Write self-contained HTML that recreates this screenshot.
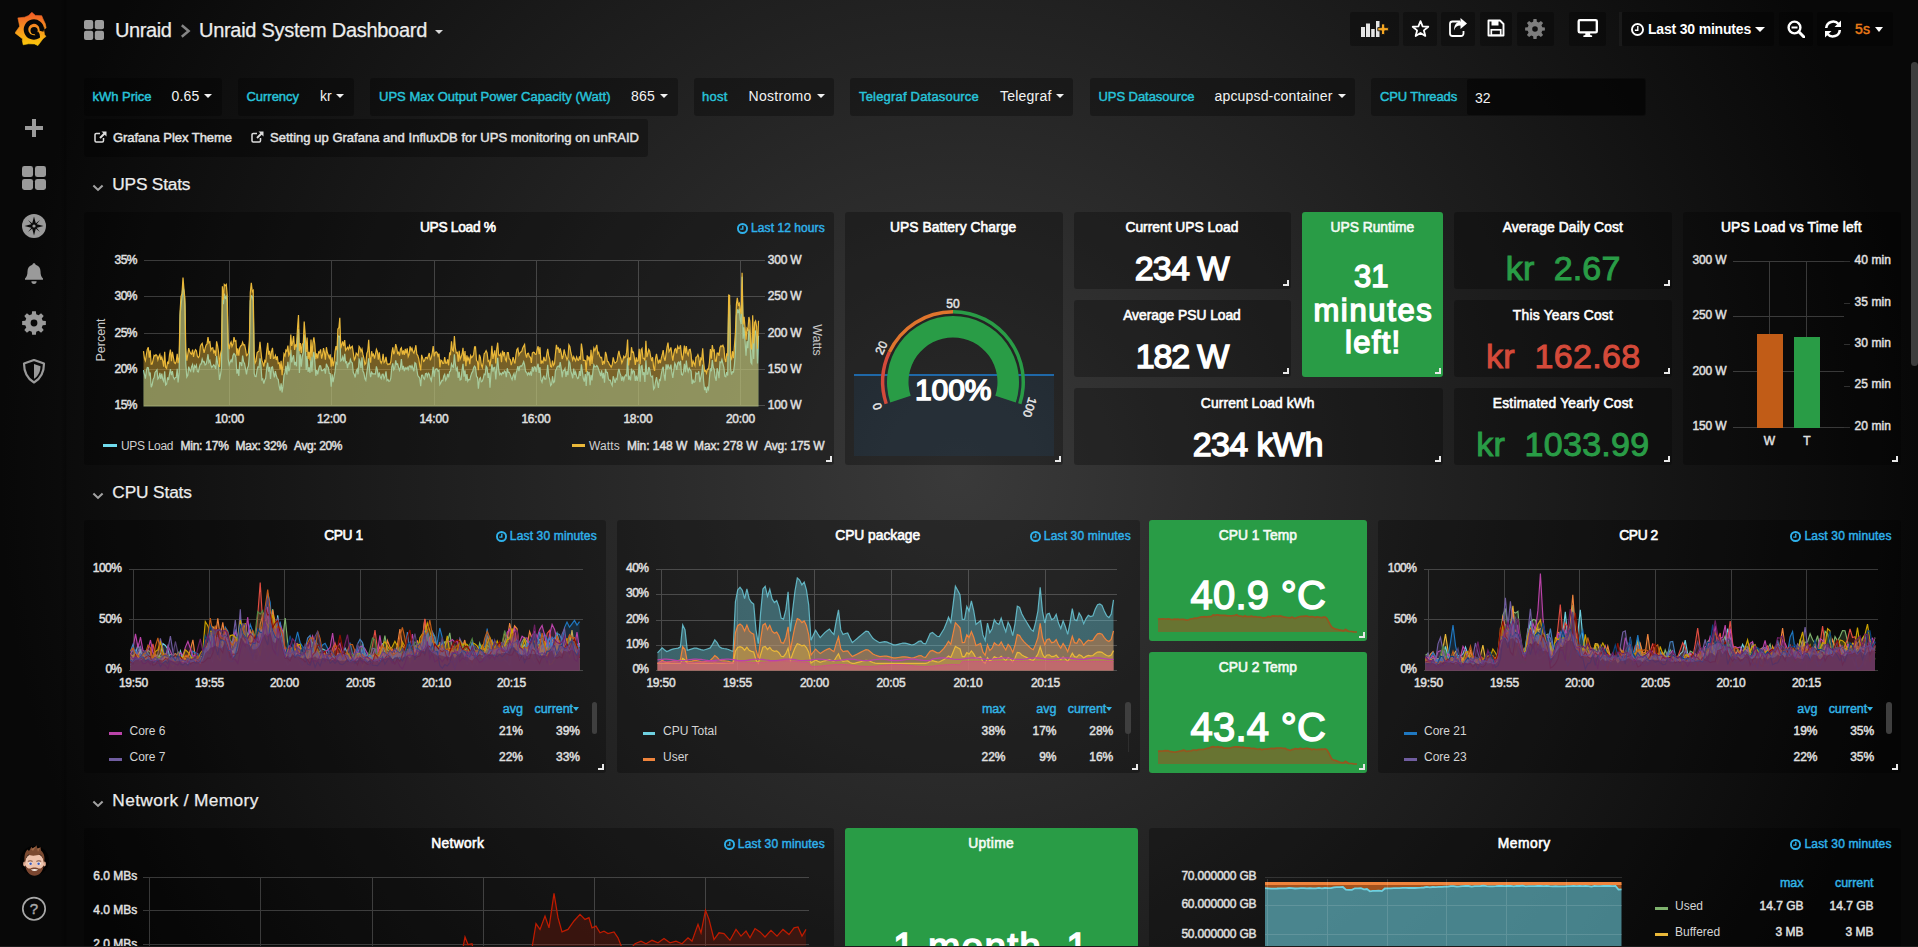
<!DOCTYPE html>
<html lang="en"><head><meta charset="utf-8"><title>Unraid System Dashboard - Grafana</title>
<style>
*{box-sizing:border-box;margin:0;padding:0}
html,body{width:1918px;height:947px;overflow:hidden;background:#000;font-family:"Liberation Sans",Arial,sans-serif;color:#fff}
#root{position:relative;width:1918px;height:947px;overflow:hidden;background:radial-gradient(circle 959px at 959px 473.5px,#3a3a3a 0%,#080808 100%)}
#bg{position:absolute;left:60px;top:0;width:7px;height:947px;background:linear-gradient(90deg,rgba(0,0,0,.0),rgba(0,0,0,.28) 85%,rgba(0,0,0,0))}
.b{position:absolute}
.p{position:absolute;background:rgba(0,0,0,.28);border-radius:3px}
.g{position:absolute;background:#299c46;border-radius:3px}
.t{position:absolute;white-space:nowrap;line-height:1.117}
.m{-webkit-text-stroke:.45px currentColor}
.m2{-webkit-text-stroke:.6px currentColor}
.bd{font-weight:700}
#ov{position:absolute;left:0;top:0;pointer-events:none}
.rz{position:absolute;width:6px;height:6px;border-right:2px solid #e8e8e8;border-bottom:2px solid #e8e8e8}

#bl{position:absolute;left:0;top:946px;width:1918px;height:1px;background:#1b1b1b}
.s1{-webkit-text-stroke:1px currentColor}
.s2{-webkit-text-stroke:1.45px currentColor}
.s9{-webkit-text-stroke:.9px currentColor}
.m0{-webkit-text-stroke:.25px currentColor}

</style></head>
<body>
<div id="root">
<div id="bg"></div>
<svg class="b" style="left:15px;top:12px" width="34" height="35" viewBox="0 0 34 35"><defs><linearGradient id="lg" x1="0" y1="1" x2="0" y2="0"><stop offset="0" stop-color="#fbca0a"/><stop offset=".5" stop-color="#f7931e"/><stop offset="1" stop-color="#f05a28"/></linearGradient></defs>
<path fill="url(#lg)" stroke="url(#lg)" stroke-width=".6" stroke-linejoin="round" d="M16.8 0.3 L20.4 3.4 L26.7 3.7 L28.0 6.9 L30.3 11.8 L31.1 16 L28.6 17.2 L29.5 22.4 L30.9 24.5 L28.0 26.7 L22.9 33.6 L19.4 31.9 L13.5 31.8 L8.2 32.8 L7.3 28.5 L7.7 27.0 L0 20.9 L4.7 14.3 L2.9 5.9 L9.7 5.2 L13.8 3.4Z"/>
<path d="M28.99 17.69 L26.79 17.09 A7.9 7.9 0 1 0 22.85 24.34 Q23.2 23 21.4 20.8" fill="none" stroke="#070707" stroke-width="4.5" stroke-linecap="butt"/>
<circle cx="19.1" cy="18.6" r="3.6" fill="#070707"/></svg>
<svg class="b" style="left:24px;top:118px" width="20" height="20" viewBox="0 0 20 20"><path d="M8 1h4v7h7v4h-7v7H8v-7H1V8h7z" fill="#9a9a9a"/></svg>
<svg class="b" style="left:22px;top:166px" width="24" height="24" viewBox="0 0 24 24"><rect x="0" y="0" width="11.040000000000001" height="11.040000000000001" rx="2.4000000000000004" fill="#9a9a9a"/><rect x="0" y="12.959999999999999" width="11.040000000000001" height="11.040000000000001" rx="2.4000000000000004" fill="#9a9a9a"/><rect x="12.959999999999999" y="0" width="11.040000000000001" height="11.040000000000001" rx="2.4000000000000004" fill="#9a9a9a"/><rect x="12.959999999999999" y="12.959999999999999" width="11.040000000000001" height="11.040000000000001" rx="2.4000000000000004" fill="#9a9a9a"/></svg>
<svg class="b" style="left:22px;top:214px" width="24" height="24" viewBox="0 0 24 24"><circle cx="12" cy="12" r="12" fill="#9a9a9a"/><path d="M12 2.5 L14 10 L21.5 12 L14 14 L12 21.5 L10 14 L2.5 12 L10 10Z" fill="#0a0a0a"/><path d="M6 6 L11 10 L10 11Z M18 6 L14 11 L13 10Z M18 18 L13 14 L14 13Z M6 18 L10 13 L11 14Z" fill="#0a0a0a"/><circle cx="12" cy="12" r="1.6" fill="#9a9a9a"/></svg>
<svg class="b" style="left:24px;top:262px" width="20" height="24" viewBox="0 0 20 24"><path d="M10 1.2c.9 0 1.6.7 1.6 1.5 3 .8 4.9 3.3 4.9 6.6 0 3.700 .9 5.800 2.500 7.200v1.300H1v-1.300c1.600-1.400 2.500-3.500 2.500-7.200 0-3.300 1.900-5.800 4.900-6.600 0-.8.700-1.500 1.600-1.500z" fill="#9a9a9a"/><path d="M7.400 19.300h5.200a2.600 2.600 0 0 1-5.200 0z" fill="#9a9a9a"/></svg>
<svg class="b" style="left:22px;top:311px" width="24" height="24" viewBox="0 0 24 24"><path fill-rule="evenodd" d="M23.85 10.12 L23.85 13.88 L20.72 14.24 L19.75 16.58 L21.71 19.05 L19.05 21.71 L16.58 19.75 L14.24 20.72 L13.88 23.85 L10.12 23.85 L9.76 20.72 L7.42 19.75 L4.95 21.71 L2.29 19.05 L4.25 16.58 L3.28 14.24 L0.15 13.88 L0.15 10.12 L3.28 9.76 L4.25 7.42 L2.29 4.95 L4.95 2.29 L7.42 4.25 L9.76 3.28 L10.12 0.15 L13.88 0.15 L14.24 3.28 L16.58 4.25 L19.05 2.29 L21.71 4.95 L19.75 7.42 L20.72 9.76Z M15.40 12.00 A3.4 3.4 0 1 0 8.60 12.00 A3.4 3.4 0 1 0 15.40 12.00Z" fill="#9a9a9a"/></svg>
<svg class="b" style="left:22px;top:359px" width="24" height="25" viewBox="0 0 24 25"><path d="M12 1 L22 4.500 C22 13 19 19.500 12 23.500 C5 19.500 2 13 2 4.500Z" fill="none" stroke="#9a9a9a" stroke-width="2.2" stroke-linejoin="round"/><path d="M12 5 L18.500 7.300 C18.300 13 16.400 17 12 19.800Z" fill="#9a9a9a"/></svg>
<svg class="b" style="left:19.5px;top:845px" width="29" height="31" viewBox="0 0 29 31"><circle cx="14.5" cy="15.5" r="14.6" fill="#020202"/>
<ellipse cx="4.6" cy="19" rx="1.5" ry="2.4" fill="#e2ad94"/><ellipse cx="24.4" cy="19" rx="1.5" ry="2.4" fill="#e2ad94"/>
<ellipse cx="14.5" cy="17.5" rx="9.6" ry="9.2" fill="#eec3ad"/>
<path d="M5 19 C3.6 11 5 7 7.5 4.5 L9 6 L11.5 1.8 L13 4.5 L16.5 0.3 L17.5 4 L20.5 2 L21 5.5 C24 8 25.3 12 24 19 C23.5 14 22 10.5 20 9.5 C16 11 10 11 8.5 9.5 C6.5 11 5.5 14 5 19Z" fill="#7b4a31"/>
<path d="M11 4 L16 1.5 L13 6Z M17 3.5 L20 3 L18 7Z" fill="#a06a48"/>
<path d="M5.2 20 C6 27 10 30.8 14.5 30.8 C19 30.8 23 27 23.800 20 C22.500 23 20 24 18.500 23.500 C16.500 22.300 12.500 22.300 10.500 23.500 C9 24 6.500 23 5.200 20Z" fill="#7a4630"/>
<path d="M10.800 24.600 Q14.500 23.600 18.200 24.600 Q14.500 27.600 10.800 24.600Z" fill="#f4ece6"/>
<ellipse cx="10.400" cy="18.600" rx="2" ry="1.500" fill="#f2f2f2"/><ellipse cx="18.800" cy="18.600" rx="2" ry="1.500" fill="#f2f2f2"/>
<circle cx="10.600" cy="18.700" r="1.250" fill="#3d57b8"/><circle cx="18.600" cy="18.700" r="1.250" fill="#3d57b8"/>
<path d="M7.800 16.300 Q10.300 15.200 12.600 16.300 M16.400 16.300 Q18.800 15.200 21.200 16.300" stroke="#6a4030" stroke-width=".9" fill="none"/></svg>
<svg class="b" style="left:21px;top:896px" width="26" height="26" viewBox="0 0 26 26"><circle cx="13" cy="12.800" r="11.200" fill="none" stroke="#a8a8a8" stroke-width="1.700"/></svg>
<div class="t m" style="left:34px;top:900px;font-size:15px;line-height:18px;color:#a8a8a8;transform:translateX(-50%);">?</div>
<svg class="b" style="left:84px;top:20px" width="20" height="20" viewBox="0 0 20 20"><rect x="0" y="0" width="9.200000000000001" height="9.200000000000001" rx="2.0" fill="#9d9d9d"/><rect x="0" y="10.799999999999999" width="9.200000000000001" height="9.200000000000001" rx="2.0" fill="#9d9d9d"/><rect x="10.799999999999999" y="0" width="9.200000000000001" height="9.200000000000001" rx="2.0" fill="#9d9d9d"/><rect x="10.799999999999999" y="10.799999999999999" width="9.200000000000001" height="9.200000000000001" rx="2.0" fill="#9d9d9d"/></svg>
<div class="t m0" style="left:115px;top:18px;font-size:20px;line-height:24px;color:#ececec;letter-spacing:-0.387px;">Unraid</div>
<svg class="b" style="left:180px;top:23.5px" width="11" height="14" viewBox="0 0 11 14"><path d="M1.800 1.300 L8.600 7 L1.800 12.700" fill="none" stroke="#858585" stroke-width="2.500"/></svg>
<div class="t m0" style="left:199px;top:18px;font-size:20px;line-height:24px;color:#ececec;letter-spacing:-0.285px;">Unraid System Dashboard</div>
<div class="b" style="left:435px;top:30px;border-left:4px solid transparent;border-right:4px solid transparent;border-top:4px solid #d8d8d8"></div>
<div class="b" style="left:1350px;top:12px;width:49px;height:34px;background:rgba(0,0,0,.3);border-radius:2px"></div>
<div class="b" style="left:1403px;top:12px;width:34px;height:34px;background:rgba(0,0,0,.3);border-radius:2px"></div>
<div class="b" style="left:1441px;top:12px;width:34px;height:34px;background:rgba(0,0,0,.3);border-radius:2px"></div>
<div class="b" style="left:1480px;top:12px;width:32px;height:34px;background:rgba(0,0,0,.3);border-radius:2px"></div>
<div class="b" style="left:1517px;top:12px;width:37px;height:34px;background:rgba(0,0,0,.3);border-radius:2px"></div>
<div class="b" style="left:1569px;top:12px;width:37px;height:34px;background:rgba(0,0,0,.3);border-radius:2px"></div>
<div class="b" style="left:1622px;top:12px;width:152px;height:34px;background:rgba(0,0,0,.3);border-radius:2px"></div>
<div class="b" style="left:1779px;top:12px;width:34px;height:34px;background:rgba(0,0,0,.3);border-radius:2px"></div>
<div class="b" style="left:1817px;top:12px;width:32px;height:34px;background:rgba(0,0,0,.3);border-radius:2px"></div>
<div class="b" style="left:1849px;top:12px;width:44px;height:34px;background:rgba(0,0,0,.3);border-radius:2px"></div>
<div class="b" style="left:1619px;top:12px;width:3px;height:34px;background:rgba(255,255,255,.04);"></div>
<svg class="b" style="left:1361px;top:21px" width="28" height="16" viewBox="0 0 28 16"><path d="M0 6h4v10H0z M5 2.500h4v13.500H5z M10.200 8h3.500v8h-3.500z M15 0h3.500v16H15z" fill="#e4e4e4"/><path d="M16.800 6.600h3.700v-3.700h3.200v3.700h3.700v3.200h-3.700v3.700h-3.200v-3.700h-3.700z" fill="#f5a623" stroke="#141414" stroke-width=".9"/></svg>
<svg class="b" style="left:1411px;top:19px" width="19" height="19" viewBox="0 0 19 19"><path d="M9.50 2.10 L11.62 7.39 L17.30 7.77 L12.92 11.41 L14.32 16.93 L9.50 13.90 L4.68 16.93 L6.08 11.41 L1.70 7.77 L7.38 7.39Z" fill="none" stroke="#fff" stroke-width="1.800" stroke-linejoin="round"/></svg>
<svg class="b" style="left:1448px;top:18px" width="20" height="20" viewBox="0 0 20 20"><path d="M12 3.500H4.500A2.500 2.500 0 0 0 2 6v9.500A2.500 2.500 0 0 0 4.500 18H13a2.500 2.500 0 0 0 2.500-2.500V13" fill="none" stroke="#fff" stroke-width="1.800"/><path d="M12.500 0 L19 5.500 L12.500 11 V7.500 C9 7.500 7 9 6 12.500 C6 7 8.500 3.800 12.500 3.500Z" fill="#fff"/></svg>
<svg class="b" style="left:1487px;top:19px" width="18" height="18" viewBox="0 0 18 18"><path d="M1.500 1.500h11.500l3.500 3.500v11.500h-15z" fill="none" stroke="#fff" stroke-width="1.900" stroke-linejoin="round"/><rect x="4.500" y="1.500" width="7" height="5" fill="#fff"/><rect x="4.300" y="10.800" width="9.400" height="5.500" fill="none" stroke="#fff" stroke-width="1.700"/></svg>
<svg class="b" style="left:1525px;top:19px" width="20" height="20" viewBox="0 0 20 20"><path fill-rule="evenodd" d="M19.88 8.44 L19.88 11.56 L17.26 11.87 L16.46 13.82 L18.09 15.88 L15.88 18.09 L13.82 16.46 L11.87 17.26 L11.56 19.88 L8.44 19.88 L8.13 17.26 L6.18 16.46 L4.12 18.09 L1.91 15.88 L3.54 13.82 L2.74 11.87 L0.12 11.56 L0.12 8.44 L2.74 8.13 L3.54 6.18 L1.91 4.12 L4.12 1.91 L6.18 3.54 L8.13 2.74 L8.44 0.12 L11.56 0.12 L11.87 2.74 L13.82 3.54 L15.88 1.91 L18.09 4.12 L16.46 6.18 L17.26 8.13Z M12.80 10.00 A2.8 2.8 0 1 0 7.20 10.00 A2.8 2.8 0 1 0 12.80 10.00Z" fill="#7d7d7d"/></svg>
<svg class="b" style="left:1577px;top:18.5px" width="21.5" height="18.5" viewBox="0 0 21 19"><rect x="1.200" y="1.200" width="18.600" height="12.600" rx="1.200" fill="none" stroke="#fff" stroke-width="2.400"/><path d="M6 18.500h9v-1.500l-2-.5v-2.500H8v2.500l-2 .5z" fill="#fff"/></svg>
<svg class="b" style="left:1631px;top:22.5px" width="13" height="13" viewBox="0 0 13 13"><circle cx="6.5" cy="6.5" r="5.55" fill="none" stroke="#fff" stroke-width="1.9"/><path d="M6.8 3.12V7.280000000000001H3.9" fill="none" stroke="#fff" stroke-width="1.37"/></svg>
<div class="t bd" style="left:1648px;top:21px;font-size:14px;line-height:17px;color:#fff;letter-spacing:-0.189px;">Last 30 minutes</div>
<div class="b" style="left:1754.5px;top:26.5px;border-left:5.0px solid transparent;border-right:5.0px solid transparent;border-top:5.5px solid #fff"></div>
<svg class="b" style="left:1787px;top:20px" width="18" height="18" viewBox="0 0 18 18"><circle cx="7.500" cy="7.500" r="5.900" fill="none" stroke="#fff" stroke-width="2.400"/><path d="M11.800 11.800 L17 17" stroke="#fff" stroke-width="3" stroke-linecap="round"/><path d="M4.500 7.500h6" stroke="#fff" stroke-width="2"/></svg>
<svg class="b" style="left:1824px;top:20px" width="18" height="18" viewBox="0 0 18 18"><path d="M2.200 8 A7 7 0 0 1 14.500 4" fill="none" stroke="#fff" stroke-width="2.600"/><path d="M17 0.500 V7 H10.500Z" fill="#fff"/><path d="M15.800 10 A7 7 0 0 1 3.500 14" fill="none" stroke="#fff" stroke-width="2.600"/><path d="M1 17.500 V11 H7.500Z" fill="#fff"/></svg>
<div class="t m" style="left:1855px;top:21px;font-size:14px;line-height:17px;color:#eb7b18;letter-spacing:0.102px;">5s</div>
<div class="b" style="left:1875px;top:26.5px;border-left:4.75px solid transparent;border-right:4.75px solid transparent;border-top:5.25px solid #fff"></div>
<div class="b" style="left:1911px;top:62px;width:7px;height:304px;background:#3d3d3d;border-radius:4px"></div>
<div class="b" style="left:84px;top:78px;width:138px;height:38px;background:rgba(0,0,0,.3);border-radius:3px"></div>
<div class="t m" style="left:92.5px;top:89px;font-size:13px;line-height:16px;color:#28c3d9;letter-spacing:-0.026px;">kWh Price</div>
<div class="t " style="left:171.5px;top:88px;font-size:14px;line-height:17px;color:#f2f2f2;letter-spacing:0.188px;">0.65</div>
<div class="b" style="left:203.5px;top:93.6px;border-left:4.25px solid transparent;border-right:4.25px solid transparent;border-top:4.75px solid #f2f2f2"></div>
<div class="b" style="left:238px;top:78px;width:116px;height:38px;background:rgba(0,0,0,.3);border-radius:3px"></div>
<div class="t m" style="left:246.5px;top:89px;font-size:13px;line-height:16px;color:#28c3d9;letter-spacing:-0.031px;">Currency</div>
<div class="t " style="left:320px;top:88px;font-size:14px;line-height:17px;color:#f2f2f2;letter-spacing:-0.086px;">kr</div>
<div class="b" style="left:336px;top:93.6px;border-left:4.25px solid transparent;border-right:4.25px solid transparent;border-top:4.75px solid #f2f2f2"></div>
<div class="b" style="left:370px;top:78px;width:308px;height:38px;background:rgba(0,0,0,.3);border-radius:3px"></div>
<div class="t m" style="left:379px;top:89px;font-size:13px;line-height:16px;color:#28c3d9;letter-spacing:0.022px;">UPS Max Output Power Capacity (Watt)</div>
<div class="t " style="left:631px;top:88px;font-size:14px;line-height:17px;color:#f2f2f2;letter-spacing:0.214px;">865</div>
<div class="b" style="left:660px;top:93.6px;border-left:4.25px solid transparent;border-right:4.25px solid transparent;border-top:4.75px solid #f2f2f2"></div>
<div class="b" style="left:694px;top:78px;width:140px;height:38px;background:rgba(0,0,0,.3);border-radius:3px"></div>
<div class="t m" style="left:702px;top:89px;font-size:13px;line-height:16px;color:#28c3d9;letter-spacing:0.230px;">host</div>
<div class="t " style="left:748.5px;top:88px;font-size:14px;line-height:17px;color:#f2f2f2;letter-spacing:0.289px;">Nostromo</div>
<div class="b" style="left:817px;top:93.6px;border-left:4.25px solid transparent;border-right:4.25px solid transparent;border-top:4.75px solid #f2f2f2"></div>
<div class="b" style="left:850px;top:78px;width:223px;height:38px;background:rgba(0,0,0,.3);border-radius:3px"></div>
<div class="t m" style="left:859px;top:89px;font-size:13px;line-height:16px;color:#28c3d9;letter-spacing:0.192px;">Telegraf Datasource</div>
<div class="t " style="left:1000px;top:88px;font-size:14px;line-height:17px;color:#f2f2f2;letter-spacing:0.211px;">Telegraf</div>
<div class="b" style="left:1056px;top:93.6px;border-left:4.25px solid transparent;border-right:4.25px solid transparent;border-top:4.75px solid #f2f2f2"></div>
<div class="b" style="left:1090px;top:78px;width:265px;height:38px;background:rgba(0,0,0,.3);border-radius:3px"></div>
<div class="t m" style="left:1098.5px;top:89px;font-size:13px;line-height:16px;color:#28c3d9;letter-spacing:-0.059px;">UPS Datasource</div>
<div class="t " style="left:1214.5px;top:88px;font-size:14px;line-height:17px;color:#f2f2f2;letter-spacing:0.165px;">apcupsd-container</div>
<div class="b" style="left:1337.5px;top:93.6px;border-left:4.25px solid transparent;border-right:4.25px solid transparent;border-top:4.75px solid #f2f2f2"></div>
<div class="b" style="left:1371px;top:78px;width:275px;height:38px;background:rgba(0,0,0,.3);border-radius:3px"></div>
<div class="b" style="left:1467px;top:79px;width:178px;height:36px;background:rgba(0,0,0,.45);border-radius:2px"></div>
<div class="t m" style="left:1380px;top:89px;font-size:13px;line-height:16px;color:#28c3d9;letter-spacing:-0.138px;">CPU Threads</div>
<div class="t " style="left:1475px;top:90px;font-size:14px;line-height:17px;color:#f2f2f2;">32</div>
<div class="b" style="left:84px;top:119px;width:564px;height:38px;background:rgba(0,0,0,.3);border-radius:3px"></div>
<svg class="b" style="left:94px;top:131px" width="13" height="12" viewBox="0 0 13 12"><path d="M9.500 7V9.800a1.200 1.200 0 0 1-1.200 1.200H2.200A1.200 1.200 0 0 1 1 9.800V3.700a1.200 1.200 0 0 1 1.200-1.200H6" fill="none" stroke="#ddd" stroke-width="1.500"/><path d="M7.500 0.500H12.500V5.500L10.700 3.700L6.700 7.700L5.300 6.300L9.300 2.300Z" fill="#ddd"/></svg>
<div class="t m" style="left:113px;top:130px;font-size:13px;line-height:16px;color:#e3e3e3;letter-spacing:-0.040px;">Grafana Plex Theme</div>
<svg class="b" style="left:251px;top:131px" width="13" height="12" viewBox="0 0 13 12"><path d="M9.500 7V9.800a1.200 1.200 0 0 1-1.200 1.200H2.200A1.200 1.200 0 0 1 1 9.800V3.700a1.200 1.200 0 0 1 1.200-1.200H6" fill="none" stroke="#ddd" stroke-width="1.500"/><path d="M7.500 0.500H12.500V5.500L10.700 3.700L6.700 7.700L5.300 6.300L9.300 2.300Z" fill="#ddd"/></svg>
<div class="t m" style="left:270px;top:130px;font-size:13px;line-height:16px;color:#e3e3e3;letter-spacing:0.020px;">Setting up Grafana and InfluxDB for UPS monitoring on unRAID</div>
<svg class="b" style="left:92px;top:184px" width="12" height="9" viewBox="0 0 12 9"><path d="M1.400 1.600 L6 5.900 L10.600 1.600" fill="none" stroke="#a2a2a2" stroke-width="2.100"/></svg>
<div class="t m0" style="left:112.3px;top:174px;font-size:17.3px;line-height:21px;color:#ececec;letter-spacing:-0.191px;">UPS Stats</div>
<svg class="b" style="left:92px;top:492px" width="12" height="9" viewBox="0 0 12 9"><path d="M1.400 1.600 L6 5.900 L10.600 1.600" fill="none" stroke="#a2a2a2" stroke-width="2.100"/></svg>
<div class="t m0" style="left:112.3px;top:482px;font-size:17.3px;line-height:21px;color:#ececec;letter-spacing:-0.130px;">CPU Stats</div>
<svg class="b" style="left:92px;top:800px" width="12" height="9" viewBox="0 0 12 9"><path d="M1.400 1.600 L6 5.900 L10.600 1.600" fill="none" stroke="#a2a2a2" stroke-width="2.100"/></svg>
<div class="t m0" style="left:112.3px;top:790px;font-size:17.3px;line-height:21px;color:#ececec;letter-spacing:0.394px;">Network / Memory</div>
<div class="p" style="left:84px;top:212px;width:750px;height:253px"></div>
<div class="t m2" style="left:457.85px;top:219px;font-size:13.8px;line-height:17px;color:#fff;transform:translateX(-50%);letter-spacing:-0.310px;">UPS Load %</div>
<div class="t m" style="left:824.78px;top:221px;font-size:12px;line-height:15px;color:#2fb1ea;transform:translateX(-100%);letter-spacing:0.075px;">Last 12 hours</div>
<svg class="b" style="left:736.5px;top:222.5px" width="11" height="11" viewBox="0 0 11 11"><circle cx="5.5" cy="5.5" r="4.55" fill="none" stroke="#2fb1ea" stroke-width="1.9"/><path d="M5.8 2.6399999999999997V6.16H3.3" fill="none" stroke="#2fb1ea" stroke-width="1.37"/></svg>
<div class="p" style="left:845px;top:212px;width:218px;height:253px"></div>
<div class="t m2" style="left:953.13px;top:219px;font-size:13.8px;line-height:17px;color:#fff;transform:translateX(-50%);letter-spacing:0.061px;">UPS Battery Charge</div>
<div class="p" style="left:1074px;top:212px;width:217px;height:77px"></div>
<div class="t m2" style="left:1181.91px;top:219px;font-size:13.8px;line-height:17px;color:#fff;transform:translateX(-50%);letter-spacing:0.010px;">Current UPS Load</div>
<div class="p" style="left:1074px;top:300px;width:217px;height:77px"></div>
<div class="t m2" style="left:1181.99px;top:307px;font-size:13.8px;line-height:17px;color:#fff;transform:translateX(-50%);letter-spacing:-0.017px;">Average PSU Load</div>
<div class="g" style="left:1302px;top:212px;width:141px;height:165px"></div>
<div class="t m2" style="left:1372.31px;top:219px;font-size:13.8px;line-height:17px;color:#f4fbf5;transform:translateX(-50%);letter-spacing:0.011px;">UPS Runtime</div>
<div class="p" style="left:1074px;top:388px;width:369px;height:77px"></div>
<div class="t m2" style="left:1257.76px;top:395px;font-size:13.8px;line-height:17px;color:#fff;transform:translateX(-50%);letter-spacing:0.114px;">Current Load kWh</div>
<div class="p" style="left:1454px;top:212px;width:218px;height:77px"></div>
<div class="t m2" style="left:1562.87px;top:219px;font-size:13.8px;line-height:17px;color:#fff;transform:translateX(-50%);letter-spacing:0.136px;">Average Daily Cost</div>
<div class="p" style="left:1454px;top:300px;width:218px;height:77px"></div>
<div class="t m2" style="left:1562.92px;top:307px;font-size:13.8px;line-height:17px;color:#fff;transform:translateX(-50%);letter-spacing:0.237px;">This Years Cost</div>
<div class="p" style="left:1454px;top:388px;width:218px;height:77px"></div>
<div class="t m2" style="left:1562.82px;top:395px;font-size:13.8px;line-height:17px;color:#fff;transform:translateX(-50%);letter-spacing:0.244px;">Estimated Yearly Cost</div>
<div class="p" style="left:1683px;top:212px;width:217.70000000000005px;height:253px"></div>
<div class="t m2" style="left:1791.41px;top:219px;font-size:13.8px;line-height:17px;color:#fff;transform:translateX(-50%);letter-spacing:0.214px;">UPS Load vs Time left</div>
<div class="t m" style="left:136.92px;top:253px;font-size:12px;line-height:15px;color:#e0e0e0;transform:translateX(-100%);letter-spacing:-0.577px;">35%</div>
<div class="t m" style="left:136.92px;top:289px;font-size:12px;line-height:15px;color:#e0e0e0;transform:translateX(-100%);letter-spacing:-0.577px;">30%</div>
<div class="t m" style="left:136.92px;top:326px;font-size:12px;line-height:15px;color:#e0e0e0;transform:translateX(-100%);letter-spacing:-0.577px;">25%</div>
<div class="t m" style="left:136.92px;top:362px;font-size:12px;line-height:15px;color:#e0e0e0;transform:translateX(-100%);letter-spacing:-0.577px;">20%</div>
<div class="t m" style="left:136.92px;top:398px;font-size:12px;line-height:15px;color:#e0e0e0;transform:translateX(-100%);letter-spacing:-0.577px;">15%</div>
<div class="t m" style="left:767.7px;top:253px;font-size:12px;line-height:15px;color:#e0e0e0;letter-spacing:-0.197px;">300 W</div>
<div class="t m" style="left:767.7px;top:289px;font-size:12px;line-height:15px;color:#e0e0e0;letter-spacing:-0.197px;">250 W</div>
<div class="t m" style="left:767.7px;top:326px;font-size:12px;line-height:15px;color:#e0e0e0;letter-spacing:-0.197px;">200 W</div>
<div class="t m" style="left:767.7px;top:362px;font-size:12px;line-height:15px;color:#e0e0e0;letter-spacing:-0.197px;">150 W</div>
<div class="t m" style="left:767.7px;top:398px;font-size:12px;line-height:15px;color:#e0e0e0;letter-spacing:-0.197px;">100 W</div>
<div class="t m" style="left:229.4px;top:412px;font-size:12px;line-height:15px;color:#e0e0e0;transform:translateX(-50%);letter-spacing:-0.206px;">10:00</div>
<div class="t m" style="left:331.4px;top:412px;font-size:12px;line-height:15px;color:#e0e0e0;transform:translateX(-50%);letter-spacing:-0.206px;">12:00</div>
<div class="t m" style="left:433.9px;top:412px;font-size:12px;line-height:15px;color:#e0e0e0;transform:translateX(-50%);letter-spacing:-0.206px;">14:00</div>
<div class="t m" style="left:535.9px;top:412px;font-size:12px;line-height:15px;color:#e0e0e0;transform:translateX(-50%);letter-spacing:-0.206px;">16:00</div>
<div class="t m" style="left:637.9px;top:412px;font-size:12px;line-height:15px;color:#e0e0e0;transform:translateX(-50%);letter-spacing:-0.206px;">18:00</div>
<div class="t m" style="left:740.4px;top:412px;font-size:12px;line-height:15px;color:#e0e0e0;transform:translateX(-50%);letter-spacing:-0.206px;">20:00</div>
<div class="t " style="left:102px;top:340px;font-size:12.5px;color:#c8c8c8;transform:translate(-50%,-50%) rotate(-90deg)">Percent</div>
<div class="t " style="left:816px;top:340px;font-size:12.5px;color:#c8c8c8;transform:translate(-50%,-50%) rotate(90deg)">Watts</div>
<div class="b" style="left:103px;top:444px;width:14px;height:3px;background:#70dbed;"></div>
<div class="t " style="left:121px;top:439px;font-size:12px;line-height:15px;color:#d0d0d0;letter-spacing:-0.325px;">UPS Load</div>
<div class="t m" style="left:180.5px;top:439px;font-size:12px;line-height:15px;color:#e0e0e0;letter-spacing:-0.241px;">Min: 17%</div>
<div class="t m" style="left:235.5px;top:439px;font-size:12px;line-height:15px;color:#e0e0e0;letter-spacing:-0.257px;">Max: 32%</div>
<div class="t m" style="left:294px;top:439px;font-size:12px;line-height:15px;color:#e0e0e0;letter-spacing:-0.395px;">Avg: 20%</div>
<div class="b" style="left:572px;top:444px;width:13px;height:3px;background:#eab839;"></div>
<div class="t " style="left:589px;top:439px;font-size:12px;line-height:15px;color:#d0d0d0;letter-spacing:0.153px;">Watts</div>
<div class="t m" style="left:627px;top:439px;font-size:12px;line-height:15px;color:#e0e0e0;letter-spacing:-0.049px;">Min: 148 W</div>
<div class="t m" style="left:694px;top:439px;font-size:12px;line-height:15px;color:#e0e0e0;letter-spacing:-0.063px;">Max: 278 W</div>
<div class="t m" style="left:824.34px;top:439px;font-size:12px;line-height:15px;color:#e0e0e0;transform:translateX(-100%);letter-spacing:-0.161px;">Avg: 175 W</div>
<div class="b" style="left:854px;top:374px;width:200px;height:82px;background:rgba(31,120,193,.10);"></div>
<div class="b" style="left:854px;top:374px;width:200px;height:1.5px;background:#1f68a8;"></div>
<div class="t s2" style="left:953.15px;top:372px;font-size:30px;line-height:36px;color:#fff;transform:translateX(-50%);letter-spacing:-0.109px;">100%</div>
<div class="t m" style="left:877.9px;top:406.4px;font-size:12px;color:#e6e6e6;transform:translate(-50%,-50%) rotate(252.0deg)">0</div>
<div class="t m" style="left:881.5px;top:348.4px;font-size:12px;color:#e6e6e6;transform:translate(-50%,-50%) rotate(295.2deg)">20</div>
<div class="t m" style="left:953.0px;top:305.0px;font-size:12px;color:#e6e6e6;transform:translate(-50%,-50%) rotate(360.0deg)">50</div>
<div class="t m" style="left:1028.6px;top:406.6px;font-size:12px;color:#e6e6e6;transform:translate(-50%,-50%) rotate(468.0deg)">100</div>
<div class="t s2" style="left:1181.75px;top:248px;font-size:34px;line-height:41px;color:#fff;transform:translateX(-50%);letter-spacing:-0.893px;">234 W</div>
<div class="t s2" style="left:1182.02px;top:336px;font-size:34px;line-height:41px;color:#fff;transform:translateX(-50%);letter-spacing:-1.153px;">182 W</div>
<div class="t s2" style="left:1257.82px;top:424px;font-size:34px;line-height:41px;color:#fff;transform:translateX(-50%);letter-spacing:-0.555px;">234 kWh</div>
<div class="t s2" style="left:1371.33px;top:258px;font-size:31px;line-height:38px;color:#fff;transform:translateX(-50%);letter-spacing:0.058px;">31</div>
<div class="t s2" style="left:1373.42px;top:292px;font-size:31px;line-height:38px;color:#fff;transform:translateX(-50%);letter-spacing:1.636px;">minutes</div>
<div class="t s2" style="left:1373.26px;top:324px;font-size:31px;line-height:38px;color:#fff;transform:translateX(-50%);letter-spacing:1.326px;">left!</div>
<div class="t s1" style="left:1563.18px;top:248px;font-size:34px;line-height:41px;color:#299c46;transform:translateX(-50%);letter-spacing:0.151px;">kr&nbsp;&nbsp;2.67</div>
<div class="t s1" style="left:1563.27px;top:336px;font-size:34px;line-height:41px;color:#d44a3a;transform:translateX(-50%);letter-spacing:0.338px;">kr&nbsp;&nbsp;162.68</div>
<div class="t s1" style="left:1562.84px;top:424px;font-size:34px;line-height:41px;color:#299c46;transform:translateX(-50%);letter-spacing:0.289px;">kr&nbsp;&nbsp;1033.99</div>
<div class="t m" style="left:1726.3px;top:253px;font-size:12px;line-height:15px;color:#e0e0e0;transform:translateX(-100%);letter-spacing:-0.197px;">300 W</div>
<div class="t m" style="left:1726.3px;top:308px;font-size:12px;line-height:15px;color:#e0e0e0;transform:translateX(-100%);letter-spacing:-0.197px;">250 W</div>
<div class="t m" style="left:1726.3px;top:364px;font-size:12px;line-height:15px;color:#e0e0e0;transform:translateX(-100%);letter-spacing:-0.197px;">200 W</div>
<div class="t m" style="left:1726.3px;top:419px;font-size:12px;line-height:15px;color:#e0e0e0;transform:translateX(-100%);letter-spacing:-0.197px;">150 W</div>
<div class="t m" style="left:1854.5px;top:253px;font-size:12px;line-height:15px;color:#e0e0e0;letter-spacing:0.078px;">40 min</div>
<div class="t m" style="left:1854.5px;top:295px;font-size:12px;line-height:15px;color:#e0e0e0;letter-spacing:0.078px;">35 min</div>
<div class="t m" style="left:1854.5px;top:336px;font-size:12px;line-height:15px;color:#e0e0e0;letter-spacing:0.078px;">30 min</div>
<div class="t m" style="left:1854.5px;top:377px;font-size:12px;line-height:15px;color:#e0e0e0;letter-spacing:0.078px;">25 min</div>
<div class="t m" style="left:1854.5px;top:419px;font-size:12px;line-height:15px;color:#e0e0e0;letter-spacing:0.078px;">20 min</div>
<div class="t m" style="left:1769.5px;top:434px;font-size:12px;line-height:15px;color:#e0e0e0;transform:translateX(-50%);">W</div>
<div class="t m" style="left:1807px;top:434px;font-size:12px;line-height:15px;color:#e0e0e0;transform:translateX(-50%);">T</div>
<div class="p" style="left:84px;top:520px;width:522px;height:253px"></div>
<div class="t m2" style="left:343.48px;top:527px;font-size:13.8px;line-height:17px;color:#fff;transform:translateX(-50%);letter-spacing:-0.448px;">CPU 1</div>
<div class="t m" style="left:596.85px;top:529px;font-size:12px;line-height:15px;color:#2fb1ea;transform:translateX(-100%);letter-spacing:0.152px;">Last 30 minutes</div>
<svg class="b" style="left:495.5px;top:530.5px" width="11" height="11" viewBox="0 0 11 11"><circle cx="5.5" cy="5.5" r="4.55" fill="none" stroke="#2fb1ea" stroke-width="1.9"/><path d="M5.8 2.6399999999999997V6.16H3.3" fill="none" stroke="#2fb1ea" stroke-width="1.37"/></svg>
<div class="p" style="left:617px;top:520px;width:523px;height:253px"></div>
<div class="t m2" style="left:877.69px;top:527px;font-size:13.8px;line-height:17px;color:#fff;transform:translateX(-50%);letter-spacing:-0.022px;">CPU package</div>
<div class="t m" style="left:1130.85px;top:529px;font-size:12px;line-height:15px;color:#2fb1ea;transform:translateX(-100%);letter-spacing:0.152px;">Last 30 minutes</div>
<svg class="b" style="left:1029.5px;top:530.5px" width="11" height="11" viewBox="0 0 11 11"><circle cx="5.5" cy="5.5" r="4.55" fill="none" stroke="#2fb1ea" stroke-width="1.9"/><path d="M5.8 2.6399999999999997V6.16H3.3" fill="none" stroke="#2fb1ea" stroke-width="1.37"/></svg>
<div class="g" style="left:1149px;top:520px;width:218px;height:121px"></div>
<div class="t m2" style="left:1257.82px;top:527px;font-size:13.8px;line-height:17px;color:#f4fbf5;transform:translateX(-50%);letter-spacing:0.033px;">CPU 1 Temp</div>
<div class="g" style="left:1149px;top:652px;width:218px;height:121px"></div>
<div class="t m2" style="left:1257.82px;top:659px;font-size:13.8px;line-height:17px;color:#f4fbf5;transform:translateX(-50%);letter-spacing:0.033px;">CPU 2 Temp</div>
<div class="p" style="left:1378px;top:520px;width:522.7px;height:253px"></div>
<div class="t m2" style="left:1638.59px;top:527px;font-size:13.8px;line-height:17px;color:#fff;transform:translateX(-50%);letter-spacing:-0.428px;">CPU 2</div>
<div class="t m" style="left:1891.55px;top:529px;font-size:12px;line-height:15px;color:#2fb1ea;transform:translateX(-100%);letter-spacing:0.152px;">Last 30 minutes</div>
<svg class="b" style="left:1790.2px;top:530.5px" width="11" height="11" viewBox="0 0 11 11"><circle cx="5.5" cy="5.5" r="4.55" fill="none" stroke="#2fb1ea" stroke-width="1.9"/><path d="M5.8 2.6399999999999997V6.16H3.3" fill="none" stroke="#2fb1ea" stroke-width="1.37"/></svg>
<div class="t m" style="left:121.52px;top:561px;font-size:12px;line-height:15px;color:#e0e0e0;transform:translateX(-100%);letter-spacing:-0.476px;">100%</div>
<div class="t m" style="left:121.42px;top:612px;font-size:12px;line-height:15px;color:#e0e0e0;transform:translateX(-100%);letter-spacing:-0.577px;">50%</div>
<div class="t m" style="left:121.13px;top:662px;font-size:12px;line-height:15px;color:#e0e0e0;transform:translateX(-100%);letter-spacing:-0.872px;">0%</div>
<div class="t m" style="left:133.4px;top:676px;font-size:12px;line-height:15px;color:#e0e0e0;transform:translateX(-50%);letter-spacing:-0.206px;">19:50</div>
<div class="t m" style="left:209.4px;top:676px;font-size:12px;line-height:15px;color:#e0e0e0;transform:translateX(-50%);letter-spacing:-0.206px;">19:55</div>
<div class="t m" style="left:284.4px;top:676px;font-size:12px;line-height:15px;color:#e0e0e0;transform:translateX(-50%);letter-spacing:-0.206px;">20:00</div>
<div class="t m" style="left:360.4px;top:676px;font-size:12px;line-height:15px;color:#e0e0e0;transform:translateX(-50%);letter-spacing:-0.206px;">20:05</div>
<div class="t m" style="left:436.4px;top:676px;font-size:12px;line-height:15px;color:#e0e0e0;transform:translateX(-50%);letter-spacing:-0.206px;">20:10</div>
<div class="t m" style="left:511.4px;top:676px;font-size:12px;line-height:15px;color:#e0e0e0;transform:translateX(-50%);letter-spacing:-0.206px;">20:15</div>
<div class="t m" style="left:523px;top:702px;font-size:12.5px;line-height:15px;color:#33b5e5;transform:translateX(-100%);">avg</div>
<div class="t m" style="left:572.94px;top:702px;font-size:12.5px;line-height:15px;color:#33b5e5;transform:translateX(-100%);letter-spacing:-0.058px;">current</div>
<div class="b" style="left:109px;top:731.8px;width:12.5px;height:3.0px;background:#ba43a9;"></div>
<div class="t " style="left:129.5px;top:724px;font-size:12px;line-height:15px;color:#d4d4d4;">Core 6</div>
<div class="t m" style="left:523px;top:724px;font-size:12px;line-height:15px;color:#e0e0e0;transform:translateX(-100%);">21%</div>
<div class="t m" style="left:580px;top:724px;font-size:12px;line-height:15px;color:#e0e0e0;transform:translateX(-100%);">39%</div>
<div class="b" style="left:109px;top:757.6999999999999px;width:12.5px;height:3.0px;background:#705da0;"></div>
<div class="t " style="left:129.5px;top:750px;font-size:12px;line-height:15px;color:#d4d4d4;">Core 7</div>
<div class="t m" style="left:523px;top:750px;font-size:12px;line-height:15px;color:#e0e0e0;transform:translateX(-100%);">22%</div>
<div class="t m" style="left:580px;top:750px;font-size:12px;line-height:15px;color:#e0e0e0;transform:translateX(-100%);">33%</div>
<div class="b" style="left:573px;top:706.5px;border-left:3.5px solid transparent;border-right:3.5px solid transparent;border-top:4.0px solid #33b5e5"></div>
<div class="b" style="left:592px;top:702px;width:5px;height:32px;background:#3f3f3f;border-radius:3px"></div>
<div class="t m" style="left:1416.52px;top:561px;font-size:12px;line-height:15px;color:#e0e0e0;transform:translateX(-100%);letter-spacing:-0.476px;">100%</div>
<div class="t m" style="left:1416.42px;top:612px;font-size:12px;line-height:15px;color:#e0e0e0;transform:translateX(-100%);letter-spacing:-0.577px;">50%</div>
<div class="t m" style="left:1416.13px;top:662px;font-size:12px;line-height:15px;color:#e0e0e0;transform:translateX(-100%);letter-spacing:-0.872px;">0%</div>
<div class="t m" style="left:1428.4px;top:676px;font-size:12px;line-height:15px;color:#e0e0e0;transform:translateX(-50%);letter-spacing:-0.206px;">19:50</div>
<div class="t m" style="left:1504.4px;top:676px;font-size:12px;line-height:15px;color:#e0e0e0;transform:translateX(-50%);letter-spacing:-0.206px;">19:55</div>
<div class="t m" style="left:1579.4px;top:676px;font-size:12px;line-height:15px;color:#e0e0e0;transform:translateX(-50%);letter-spacing:-0.206px;">20:00</div>
<div class="t m" style="left:1655.4px;top:676px;font-size:12px;line-height:15px;color:#e0e0e0;transform:translateX(-50%);letter-spacing:-0.206px;">20:05</div>
<div class="t m" style="left:1730.9px;top:676px;font-size:12px;line-height:15px;color:#e0e0e0;transform:translateX(-50%);letter-spacing:-0.206px;">20:10</div>
<div class="t m" style="left:1806.4px;top:676px;font-size:12px;line-height:15px;color:#e0e0e0;transform:translateX(-50%);letter-spacing:-0.206px;">20:15</div>
<div class="t m" style="left:1817.5px;top:702px;font-size:12.5px;line-height:15px;color:#33b5e5;transform:translateX(-100%);">avg</div>
<div class="t m" style="left:1867.14px;top:702px;font-size:12.5px;line-height:15px;color:#33b5e5;transform:translateX(-100%);letter-spacing:-0.058px;">current</div>
<div class="b" style="left:1404px;top:731.8px;width:12.5px;height:3.0px;background:#1f78c1;"></div>
<div class="t " style="left:1424px;top:724px;font-size:12px;line-height:15px;color:#d4d4d4;">Core 21</div>
<div class="t m" style="left:1817.5px;top:724px;font-size:12px;line-height:15px;color:#e0e0e0;transform:translateX(-100%);">19%</div>
<div class="t m" style="left:1874.2px;top:724px;font-size:12px;line-height:15px;color:#e0e0e0;transform:translateX(-100%);">35%</div>
<div class="b" style="left:1404px;top:757.6999999999999px;width:12.5px;height:3.0px;background:#705da0;"></div>
<div class="t " style="left:1424px;top:750px;font-size:12px;line-height:15px;color:#d4d4d4;">Core 23</div>
<div class="t m" style="left:1817.5px;top:750px;font-size:12px;line-height:15px;color:#e0e0e0;transform:translateX(-100%);">22%</div>
<div class="t m" style="left:1874.2px;top:750px;font-size:12px;line-height:15px;color:#e0e0e0;transform:translateX(-100%);">35%</div>
<div class="b" style="left:1867.2px;top:706.5px;border-left:3.5px solid transparent;border-right:3.5px solid transparent;border-top:4.0px solid #33b5e5"></div>
<div class="b" style="left:1886px;top:702px;width:5.5px;height:32px;background:#3f3f3f;border-radius:3px"></div>
<div class="t m" style="left:648.42px;top:561px;font-size:12px;line-height:15px;color:#e0e0e0;transform:translateX(-100%);letter-spacing:-0.577px;">40%</div>
<div class="t m" style="left:648.42px;top:586px;font-size:12px;line-height:15px;color:#e0e0e0;transform:translateX(-100%);letter-spacing:-0.577px;">30%</div>
<div class="t m" style="left:648.42px;top:612px;font-size:12px;line-height:15px;color:#e0e0e0;transform:translateX(-100%);letter-spacing:-0.577px;">20%</div>
<div class="t m" style="left:648.42px;top:637px;font-size:12px;line-height:15px;color:#e0e0e0;transform:translateX(-100%);letter-spacing:-0.577px;">10%</div>
<div class="t m" style="left:648.13px;top:662px;font-size:12px;line-height:15px;color:#e0e0e0;transform:translateX(-100%);letter-spacing:-0.872px;">0%</div>
<div class="t m" style="left:660.9px;top:676px;font-size:12px;line-height:15px;color:#e0e0e0;transform:translateX(-50%);letter-spacing:-0.206px;">19:50</div>
<div class="t m" style="left:737.4px;top:676px;font-size:12px;line-height:15px;color:#e0e0e0;transform:translateX(-50%);letter-spacing:-0.206px;">19:55</div>
<div class="t m" style="left:814.4px;top:676px;font-size:12px;line-height:15px;color:#e0e0e0;transform:translateX(-50%);letter-spacing:-0.206px;">20:00</div>
<div class="t m" style="left:890.9px;top:676px;font-size:12px;line-height:15px;color:#e0e0e0;transform:translateX(-50%);letter-spacing:-0.206px;">20:05</div>
<div class="t m" style="left:967.9px;top:676px;font-size:12px;line-height:15px;color:#e0e0e0;transform:translateX(-50%);letter-spacing:-0.206px;">20:10</div>
<div class="t m" style="left:1045.4px;top:676px;font-size:12px;line-height:15px;color:#e0e0e0;transform:translateX(-50%);letter-spacing:-0.206px;">20:15</div>
<div class="t m" style="left:1005.5px;top:702px;font-size:12.5px;line-height:15px;color:#33b5e5;transform:translateX(-100%);">max</div>
<div class="t m" style="left:1056.5px;top:702px;font-size:12.5px;line-height:15px;color:#33b5e5;transform:translateX(-100%);">avg</div>
<div class="t m" style="left:1106.24px;top:702px;font-size:12.5px;line-height:15px;color:#33b5e5;transform:translateX(-100%);letter-spacing:-0.058px;">current</div>
<div class="b" style="left:642.5px;top:731.8px;width:12.5px;height:3.0px;background:#6ed0e0;"></div>
<div class="t " style="left:663px;top:724px;font-size:12px;line-height:15px;color:#d4d4d4;">CPU Total</div>
<div class="t m" style="left:1005.5px;top:724px;font-size:12px;line-height:15px;color:#e0e0e0;transform:translateX(-100%);">38%</div>
<div class="t m" style="left:1056.5px;top:724px;font-size:12px;line-height:15px;color:#e0e0e0;transform:translateX(-100%);">17%</div>
<div class="t m" style="left:1113.3px;top:724px;font-size:12px;line-height:15px;color:#e0e0e0;transform:translateX(-100%);">28%</div>
<div class="b" style="left:642.5px;top:757.6999999999999px;width:12.5px;height:3.0px;background:#ef843c;"></div>
<div class="t " style="left:663px;top:750px;font-size:12px;line-height:15px;color:#d4d4d4;">User</div>
<div class="t m" style="left:1005.5px;top:750px;font-size:12px;line-height:15px;color:#e0e0e0;transform:translateX(-100%);">22%</div>
<div class="t m" style="left:1056.5px;top:750px;font-size:12px;line-height:15px;color:#e0e0e0;transform:translateX(-100%);">9%</div>
<div class="t m" style="left:1113.3px;top:750px;font-size:12px;line-height:15px;color:#e0e0e0;transform:translateX(-100%);">16%</div>
<div class="b" style="left:1106.3px;top:706.5px;border-left:3.5px solid transparent;border-right:3.5px solid transparent;border-top:4.0px solid #33b5e5"></div>
<div class="b" style="left:1127.5px;top:702px;width:1.0px;height:50px;background:#2e2e2e;"></div>
<div class="b" style="left:1124.5px;top:702px;width:6.0px;height:32px;background:#3f3f3f;border-radius:3px"></div>
<div class="t s2" style="left:1258.31px;top:571px;font-size:40px;line-height:48px;color:#fff;transform:translateX(-50%);letter-spacing:0.220px;">40.9 °C</div>
<div class="t s2" style="left:1258.31px;top:703px;font-size:40px;line-height:48px;color:#fff;transform:translateX(-50%);letter-spacing:0.220px;">43.4 °C</div>
<div class="p" style="left:84px;top:828px;width:750px;height:132px"></div>
<div class="t m2" style="left:457.67px;top:835px;font-size:13.8px;line-height:17px;color:#fff;transform:translateX(-50%);letter-spacing:0.342px;">Network</div>
<div class="t m" style="left:824.85px;top:837px;font-size:12px;line-height:15px;color:#2fb1ea;transform:translateX(-100%);letter-spacing:0.152px;">Last 30 minutes</div>
<svg class="b" style="left:723.5px;top:838.5px" width="11" height="11" viewBox="0 0 11 11"><circle cx="5.5" cy="5.5" r="4.55" fill="none" stroke="#2fb1ea" stroke-width="1.9"/><path d="M5.8 2.6399999999999997V6.16H3.3" fill="none" stroke="#2fb1ea" stroke-width="1.37"/></svg>
<div class="g" style="left:845px;top:828px;width:293px;height:132px"></div>
<div class="t m2" style="left:991.17px;top:835px;font-size:13.8px;line-height:17px;color:#f4fbf5;transform:translateX(-50%);letter-spacing:0.333px;">Uptime</div>
<div class="p" style="left:1149px;top:828px;width:751.7px;height:132px"></div>
<div class="t m2" style="left:1524.25px;top:835px;font-size:13.8px;line-height:17px;color:#fff;transform:translateX(-50%);letter-spacing:0.495px;">Memory</div>
<div class="t m" style="left:1891.55px;top:837px;font-size:12px;line-height:15px;color:#2fb1ea;transform:translateX(-100%);letter-spacing:0.152px;">Last 30 minutes</div>
<svg class="b" style="left:1790.2px;top:838.5px" width="11" height="11" viewBox="0 0 11 11"><circle cx="5.5" cy="5.5" r="4.55" fill="none" stroke="#2fb1ea" stroke-width="1.9"/><path d="M5.8 2.6399999999999997V6.16H3.3" fill="none" stroke="#2fb1ea" stroke-width="1.37"/></svg>
<div class="t m" style="left:137.17px;top:869px;font-size:12px;line-height:15px;color:#e0e0e0;transform:translateX(-100%);letter-spacing:-0.031px;">6.0 MBs</div>
<div class="t m" style="left:137.17px;top:903px;font-size:12px;line-height:15px;color:#e0e0e0;transform:translateX(-100%);letter-spacing:-0.031px;">4.0 MBs</div>
<div class="t m" style="left:137.17px;top:937px;font-size:12px;line-height:15px;color:#e0e0e0;transform:translateX(-100%);letter-spacing:-0.031px;">2.0 MBs</div>
<div class="t s2" style="left:991.09px;top:923px;font-size:39px;line-height:47px;color:#fff;transform:translateX(-50%);letter-spacing:1.172px;">1 month, 1</div>
<div class="t m" style="left:1256.4px;top:869px;font-size:12px;line-height:15px;color:#e0e0e0;transform:translateX(-100%);letter-spacing:-0.201px;">70.000000 GB</div>
<div class="t m" style="left:1256.4px;top:897px;font-size:12px;line-height:15px;color:#e0e0e0;transform:translateX(-100%);letter-spacing:-0.201px;">60.000000 GB</div>
<div class="t m" style="left:1256.4px;top:927px;font-size:12px;line-height:15px;color:#e0e0e0;transform:translateX(-100%);letter-spacing:-0.201px;">50.000000 GB</div>
<div class="t m" style="left:1803.5px;top:876px;font-size:12.5px;line-height:15px;color:#33b5e5;transform:translateX(-100%);">max</div>
<div class="t m" style="left:1873.44px;top:876px;font-size:12.5px;line-height:15px;color:#33b5e5;transform:translateX(-100%);letter-spacing:-0.058px;">current</div>
<div class="b" style="left:1654.5px;top:906.5px;width:13.0px;height:3.0px;background:#7eb26d;"></div>
<div class="t " style="left:1675px;top:899px;font-size:12px;line-height:15px;color:#d4d4d4;">Used</div>
<div class="t m" style="left:1803.5px;top:899px;font-size:12px;line-height:15px;color:#e0e0e0;transform:translateX(-100%);">14.7 GB</div>
<div class="t m" style="left:1873.5px;top:899px;font-size:12px;line-height:15px;color:#e0e0e0;transform:translateX(-100%);">14.7 GB</div>
<div class="b" style="left:1654.5px;top:932.7px;width:13.0px;height:3.0px;background:#eab839;"></div>
<div class="t " style="left:1675px;top:925px;font-size:12px;line-height:15px;color:#d4d4d4;">Buffered</div>
<div class="t m" style="left:1803.5px;top:925px;font-size:12px;line-height:15px;color:#e0e0e0;transform:translateX(-100%);">3 MB</div>
<div class="t m" style="left:1873.5px;top:925px;font-size:12px;line-height:15px;color:#e0e0e0;transform:translateX(-100%);">3 MB</div>
<svg id="ov" width="1918" height="947" viewBox="0 0 1918 947">
<path d="M229.5 260.5V405.5M331.5 260.5V405.5M434 260.5V405.5M536 260.5V405.5M638 260.5V405.5M740.5 260.5V405.5M143.5 260.5H764.5M143.5 296.5H764.5M143.5 333H764.5M143.5 369H764.5M143.5 405.5H764.5" stroke="rgba(255,255,255,.2)" stroke-width="1" fill="none" shape-rendering="crispEdges"/>
<path d="M143.5 370.2 L144.5 374.6 L145.4 378.6 L146.4 370.6 L147.3 367.4 L148.3 367.7 L149.3 374.6 L150.2 372.6 L151.2 387.3 L152.2 384.8 L153.1 379.4 L154.1 377.6 L155 372.5 L156 371.2 L157 369.8 L157.9 379 L158.9 377.7 L159.9 372.9 L160.8 379 L161.8 373.7 L162.7 379.4 L163.7 381.4 L164.7 371.4 L165.6 385.1 L166.6 384.3 L167.6 377.4 L168.5 380 L169.5 374.2 L170.4 369 L171.4 375.1 L172.4 371.2 L173.3 376.9 L174.3 379.2 L175.3 377.5 L176.2 377.5 L177.2 368.9 L178.1 382.5 L179.1 373.4 L180.1 315.4 L181 304.9 L182 296.6 L183 285.1 L183.9 291.8 L184.9 304.9 L185.8 363.7 L186.8 377 L187.8 375.2 L188.7 366.6 L189.7 369.9 L190.7 371.3 L191.6 366.6 L192.6 364.4 L193.5 372.5 L194.5 365.7 L195.5 367.4 L196.4 365 L197.4 371.5 L198.4 371.9 L199.3 367.4 L200.3 364.1 L201.2 363.9 L202.2 359 L203.2 361.9 L204.1 361.6 L205.1 364.9 L206.1 364.1 L207 360.3 L208 354.2 L208.9 362.3 L209.9 360.4 L210.9 365.1 L211.8 367.4 L212.8 366 L213.8 364.8 L214.7 366.2 L215.7 368.9 L216.6 355.8 L217.6 363.2 L218.6 365.8 L219.5 379.9 L220.5 374.8 L221.5 367.4 L222.4 297 L223.4 304.1 L224.3 293.6 L225.3 297.9 L226.3 296.4 L227.2 302.2 L228.2 359.2 L229.2 364.7 L230.1 362.4 L231.1 359.9 L232 362.4 L233 355.4 L234 353.6 L234.9 354.6 L235.9 357.3 L236.9 373.7 L237.8 369.2 L238.8 376 L239.7 362.5 L240.7 362.7 L241.7 366 L242.6 355.6 L243.6 361.9 L244.6 363.7 L245.5 368.8 L246.5 374.3 L247.4 368.1 L248.4 366 L249.4 354.6 L250.3 301 L251.3 295.9 L252.3 296.3 L253.2 300.9 L254.2 373.3 L255.1 376.4 L256.1 376.5 L257.1 370 L258 366.8 L259 367.2 L260 358.3 L260.9 365.1 L261.9 379.8 L262.8 379 L263.8 383.7 L264.8 380 L265.7 378.3 L266.7 368 L267.7 362.7 L268.6 371.7 L269.6 366.8 L270.5 378.9 L271.5 367.4 L272.5 366.9 L273.4 372.4 L274.4 377.4 L275.4 371.1 L276.3 375.5 L277.3 378.7 L278.2 379.3 L279.2 386.1 L280.2 390.7 L281.1 383.2 L282.1 392.4 L283.1 385.2 L284 375.1 L285 372.6 L285.9 365.9 L286.9 374.8 L287.9 361.7 L288.8 371.3 L289.8 368.4 L290.8 349.7 L291.7 362.5 L292.7 357.8 L293.6 355.2 L294.6 365.2 L295.6 361.8 L296.5 366.3 L297.5 338.2 L298.5 329 L299.4 373 L300.4 354.2 L301.3 366.6 L302.3 356.7 L303.3 352.4 L304.2 334.7 L305.2 343.4 L306.2 369.9 L307.1 356 L308.1 372 L309 367.3 L310 372.8 L311 356.5 L311.9 371.8 L312.9 356.9 L313.9 351.9 L314.8 361.4 L315.8 375.8 L316.7 370.2 L317.7 374.3 L318.7 368.8 L319.6 365.9 L320.6 365.8 L321.6 370.7 L322.5 370.7 L323.5 369.8 L324.4 369 L325.4 373.7 L326.4 363.8 L327.3 366.1 L328.3 367.4 L329.3 373.4 L330.2 373.5 L331.2 386.7 L332.1 374.4 L333.1 382.2 L334.1 376.4 L335 372.2 L336 362.6 L337 363.9 L337.9 335.7 L338.9 336.5 L339.8 336.3 L340.8 360.9 L341.8 359.9 L342.7 356.9 L343.7 361.3 L344.7 353.9 L345.6 362.6 L346.6 361.9 L347.5 368.2 L348.5 363.2 L349.5 363.7 L350.4 359.5 L351.4 362.2 L352.3 362.8 L353.3 372.5 L354.3 374.4 L355.2 377.5 L356.2 371.1 L357.2 369.2 L358.1 374.3 L359.1 359.4 L360 361.3 L361 367.9 L362 357.3 L362.9 371 L363.9 372.9 L364.9 378.8 L365.8 380.4 L366.8 372.4 L367.7 366.6 L368.7 358.2 L369.7 371.1 L370.6 377.1 L371.6 372.2 L372.6 373.9 L373.5 373.9 L374.5 373.9 L375.4 374.1 L376.4 366.3 L377.4 370.1 L378.3 377.5 L379.3 372.5 L380.3 377.1 L381.2 378.6 L382.2 374.3 L383.1 374.2 L384.1 378.6 L385.1 376.2 L386 371.3 L387 380.5 L388 379.6 L388.9 381.5 L389.9 380.9 L390.8 378.2 L391.8 367.1 L392.8 363.3 L393.7 369.8 L394.7 368.2 L395.7 360.3 L396.6 364.3 L397.6 363.8 L398.5 367.4 L399.5 370.4 L400.5 367.3 L401.4 359.1 L402.4 369.4 L403.4 365.8 L404.3 371.1 L405.3 367.8 L406.2 369 L407.2 367.3 L408.2 369.7 L409.1 366.2 L410.1 365.7 L411.1 367.9 L412 365.7 L413 368.5 L413.9 371.3 L414.9 362.6 L415.9 363.5 L416.8 369.4 L417.8 375.6 L418.8 376.9 L419.7 378.2 L420.7 386.1 L421.6 375.3 L422.6 375.2 L423.6 378.3 L424.5 379.2 L425.5 373.8 L426.5 373.4 L427.4 376.5 L428.4 373.2 L429.3 374.2 L430.3 378.3 L431.3 380.7 L432.2 375 L433.2 366.7 L434.2 376.8 L435.1 370 L436.1 368.8 L437 368.8 L438 371.2 L439 370.3 L439.9 384.4 L440.9 382.7 L441.9 380.3 L442.8 380.7 L443.8 376 L444.7 374.3 L445.7 380.3 L446.7 378.2 L447.6 373.8 L448.6 377.4 L449.6 371.7 L450.5 371 L451.5 364 L452.4 366.1 L453.4 367.1 L454.4 354.4 L455.3 363.8 L456.3 370.1 L457.3 367.9 L458.2 377.9 L459.2 371.7 L460.1 380.1 L461.1 379.5 L462.1 369.9 L463 363.9 L464 376.6 L465 370.3 L465.9 381 L466.9 374.2 L467.8 381.2 L468.8 379.5 L469.8 379.8 L470.7 376.1 L471.7 373.1 L472.7 371.4 L473.6 367.8 L474.6 366.1 L475.5 367.4 L476.5 376.4 L477.5 377.5 L478.4 388.8 L479.4 378.9 L480.4 377.6 L481.3 381.8 L482.3 381.2 L483.2 378.6 L484.2 374.1 L485.2 374.6 L486.1 366.3 L487.1 367.8 L488.1 377.9 L489 372.8 L490 387.8 L490.9 373.7 L491.9 364.4 L492.9 371.7 L493.8 367.8 L494.8 367.4 L495.8 379.5 L496.7 367.8 L497.7 357.8 L498.6 368.6 L499.6 374.6 L500.6 373.3 L501.5 374.7 L502.5 372.5 L503.5 373.4 L504.4 371 L505.4 371.9 L506.3 377.1 L507.3 368.2 L508.3 372.4 L509.2 372.3 L510.2 374.6 L511.2 377.7 L512.1 379.7 L513.1 375.7 L514 373.7 L515 380.2 L516 373.2 L516.9 370.4 L517.9 366.1 L518.9 371.2 L519.8 366.4 L520.8 365.9 L521.7 366.1 L522.7 364.2 L523.7 361.6 L524.6 364.8 L525.6 371.7 L526.6 372.1 L527.5 374.9 L528.5 372.9 L529.4 374.6 L530.4 372.2 L531.4 375.8 L532.3 366.9 L533.3 371.5 L534.3 366.9 L535.2 367.2 L536.2 371.9 L537.1 366.9 L538.1 363.7 L539.1 373 L540 367.2 L541 379.8 L542 382.2 L542.9 378 L543.9 376.2 L544.8 379.2 L545.8 379.2 L546.8 373.7 L547.7 364.9 L548.7 376.4 L549.7 379.4 L550.6 385.5 L551.6 384.2 L552.5 376.2 L553.5 382.6 L554.5 381.7 L555.4 371 L556.4 369 L557.3 366.6 L558.3 366 L559.3 367 L560.2 362.2 L561.2 368.4 L562.2 377.3 L563.1 370.7 L564.1 370.4 L565 368.5 L566 376.9 L567 370.8 L567.9 375.1 L568.9 361.1 L569.9 362.9 L570.8 371 L571.8 374.2 L572.7 378.3 L573.7 368.6 L574.7 374.9 L575.6 372 L576.6 376.2 L577.6 378.5 L578.5 377.8 L579.5 371.2 L580.4 375.9 L581.4 364.3 L582.4 371.8 L583.3 378.3 L584.3 381.7 L585.3 374 L586.2 385.9 L587.2 371 L588.1 374.4 L589.1 372.1 L590.1 385.1 L591 374.8 L592 380.5 L593 370.7 L593.9 364.9 L594.9 366.9 L595.8 366.8 L596.8 365.6 L597.8 367 L598.7 369.6 L599.7 372.8 L600.7 376.2 L601.6 370.3 L602.6 378.4 L603.5 372.8 L604.5 382.8 L605.5 369 L606.4 372.2 L607.4 372.4 L608.4 378.9 L609.3 380.4 L610.3 380.2 L611.2 383.4 L612.2 385.5 L613.2 376.3 L614.1 379.2 L615.1 382.8 L616.1 378.4 L617 379.4 L618 372.3 L618.9 368.8 L619.9 373.1 L620.9 375.6 L621.8 380.9 L622.8 376.5 L623.8 380.1 L624.7 376.6 L625.7 375 L626.6 375.7 L627.6 358.2 L628.6 379.6 L629.5 377 L630.5 380.4 L631.5 368.6 L632.4 373 L633.4 370.8 L634.3 371.5 L635.3 381 L636.3 375.6 L637.2 380.9 L638.2 375.7 L639.2 363.7 L640.1 381.7 L641.1 366.4 L642 365.6 L643 375.1 L644 372.3 L644.9 382 L645.9 360.3 L646.9 374.3 L647.8 374.1 L648.8 367 L649.7 369.5 L650.7 375.7 L651.7 376.9 L652.6 376.2 L653.6 389.3 L654.6 387.8 L655.5 381.9 L656.5 377 L657.4 382.2 L658.4 388 L659.4 379.7 L660.3 380.4 L661.3 374 L662.3 369 L663.2 366.8 L664.2 375.7 L665.1 380.6 L666.1 364.4 L667.1 369.4 L668 364.4 L669 368.1 L670 368.4 L670.9 364.6 L671.9 372.7 L672.8 378 L673.8 370.5 L674.8 363.1 L675.7 365.1 L676.7 370 L677.7 363.1 L678.6 362.1 L679.6 364.4 L680.5 360.8 L681.5 374.3 L682.5 375 L683.4 372.2 L684.4 363.9 L685.4 372.1 L686.3 360.6 L687.3 368.7 L688.2 371.6 L689.2 368.1 L690.2 370 L691.1 371 L692.1 384 L693.1 380.3 L694 382.3 L695 381.7 L695.9 372.7 L696.9 374 L697.9 373.6 L698.8 371.3 L699.8 382.2 L700.8 377.3 L701.7 373.5 L702.7 364.6 L703.6 380.7 L704.6 390.2 L705.6 386.9 L706.5 392.9 L707.5 387.5 L708.5 389.5 L709.4 378.3 L710.4 368.4 L711.3 371.3 L712.3 360.1 L713.3 367.5 L714.2 369.2 L715.2 377.3 L716.2 380.8 L717.1 368.2 L718.1 372 L719 378.2 L720 362 L721 362.6 L721.9 359.6 L722.9 363.6 L723.9 367.5 L724.8 376.1 L725.8 376.8 L726.7 372.2 L727.7 375.5 L728.7 306 L729.6 305.6 L730.6 368.9 L731.6 374.6 L732.5 371.8 L733.5 372 L734.4 365.1 L735.4 352.1 L736.4 315.7 L737.3 309.3 L738.3 313.2 L739.3 308.6 L740.2 319.7 L741.2 324.1 L742.1 276.8 L743.1 338.8 L744.1 327.3 L745 340.4 L746 355.7 L747 341.2 L747.9 348.2 L748.9 329.4 L749.8 332.8 L750.8 362.4 L751.8 363.9 L752.7 329.9 L753.7 359.1 L754.7 331.3 L755.6 331.1 L756.6 338.5 L757.5 363.6 L758.5 335.7 L758.5 406.5 L143.5 406.5Z" fill="#70dbed" fill-opacity=".45"/>
<path d="M143.5 370.2 L144.5 374.6 L145.4 378.6 L146.4 370.6 L147.3 367.4 L148.3 367.7 L149.3 374.6 L150.2 372.6 L151.2 387.3 L152.2 384.8 L153.1 379.4 L154.1 377.6 L155 372.5 L156 371.2 L157 369.8 L157.9 379 L158.9 377.7 L159.9 372.9 L160.8 379 L161.8 373.7 L162.7 379.4 L163.7 381.4 L164.7 371.4 L165.6 385.1 L166.6 384.3 L167.6 377.4 L168.5 380 L169.5 374.2 L170.4 369 L171.4 375.1 L172.4 371.2 L173.3 376.9 L174.3 379.2 L175.3 377.5 L176.2 377.5 L177.2 368.9 L178.1 382.5 L179.1 373.4 L180.1 315.4 L181 304.9 L182 296.6 L183 285.1 L183.9 291.8 L184.9 304.9 L185.8 363.7 L186.8 377 L187.8 375.2 L188.7 366.6 L189.7 369.9 L190.7 371.3 L191.6 366.6 L192.6 364.4 L193.5 372.5 L194.5 365.7 L195.5 367.4 L196.4 365 L197.4 371.5 L198.4 371.9 L199.3 367.4 L200.3 364.1 L201.2 363.9 L202.2 359 L203.2 361.9 L204.1 361.6 L205.1 364.9 L206.1 364.1 L207 360.3 L208 354.2 L208.9 362.3 L209.9 360.4 L210.9 365.1 L211.8 367.4 L212.8 366 L213.8 364.8 L214.7 366.2 L215.7 368.9 L216.6 355.8 L217.6 363.2 L218.6 365.8 L219.5 379.9 L220.5 374.8 L221.5 367.4 L222.4 297 L223.4 304.1 L224.3 293.6 L225.3 297.9 L226.3 296.4 L227.2 302.2 L228.2 359.2 L229.2 364.7 L230.1 362.4 L231.1 359.9 L232 362.4 L233 355.4 L234 353.6 L234.9 354.6 L235.9 357.3 L236.9 373.7 L237.8 369.2 L238.8 376 L239.7 362.5 L240.7 362.7 L241.7 366 L242.6 355.6 L243.6 361.9 L244.6 363.7 L245.5 368.8 L246.5 374.3 L247.4 368.1 L248.4 366 L249.4 354.6 L250.3 301 L251.3 295.9 L252.3 296.3 L253.2 300.9 L254.2 373.3 L255.1 376.4 L256.1 376.5 L257.1 370 L258 366.8 L259 367.2 L260 358.3 L260.9 365.1 L261.9 379.8 L262.8 379 L263.8 383.7 L264.8 380 L265.7 378.3 L266.7 368 L267.7 362.7 L268.6 371.7 L269.6 366.8 L270.5 378.9 L271.5 367.4 L272.5 366.9 L273.4 372.4 L274.4 377.4 L275.4 371.1 L276.3 375.5 L277.3 378.7 L278.2 379.3 L279.2 386.1 L280.2 390.7 L281.1 383.2 L282.1 392.4 L283.1 385.2 L284 375.1 L285 372.6 L285.9 365.9 L286.9 374.8 L287.9 361.7 L288.8 371.3 L289.8 368.4 L290.8 349.7 L291.7 362.5 L292.7 357.8 L293.6 355.2 L294.6 365.2 L295.6 361.8 L296.5 366.3 L297.5 338.2 L298.5 329 L299.4 373 L300.4 354.2 L301.3 366.6 L302.3 356.7 L303.3 352.4 L304.2 334.7 L305.2 343.4 L306.2 369.9 L307.1 356 L308.1 372 L309 367.3 L310 372.8 L311 356.5 L311.9 371.8 L312.9 356.9 L313.9 351.9 L314.8 361.4 L315.8 375.8 L316.7 370.2 L317.7 374.3 L318.7 368.8 L319.6 365.9 L320.6 365.8 L321.6 370.7 L322.5 370.7 L323.5 369.8 L324.4 369 L325.4 373.7 L326.4 363.8 L327.3 366.1 L328.3 367.4 L329.3 373.4 L330.2 373.5 L331.2 386.7 L332.1 374.4 L333.1 382.2 L334.1 376.4 L335 372.2 L336 362.6 L337 363.9 L337.9 335.7 L338.9 336.5 L339.8 336.3 L340.8 360.9 L341.8 359.9 L342.7 356.9 L343.7 361.3 L344.7 353.9 L345.6 362.6 L346.6 361.9 L347.5 368.2 L348.5 363.2 L349.5 363.7 L350.4 359.5 L351.4 362.2 L352.3 362.8 L353.3 372.5 L354.3 374.4 L355.2 377.5 L356.2 371.1 L357.2 369.2 L358.1 374.3 L359.1 359.4 L360 361.3 L361 367.9 L362 357.3 L362.9 371 L363.9 372.9 L364.9 378.8 L365.8 380.4 L366.8 372.4 L367.7 366.6 L368.7 358.2 L369.7 371.1 L370.6 377.1 L371.6 372.2 L372.6 373.9 L373.5 373.9 L374.5 373.9 L375.4 374.1 L376.4 366.3 L377.4 370.1 L378.3 377.5 L379.3 372.5 L380.3 377.1 L381.2 378.6 L382.2 374.3 L383.1 374.2 L384.1 378.6 L385.1 376.2 L386 371.3 L387 380.5 L388 379.6 L388.9 381.5 L389.9 380.9 L390.8 378.2 L391.8 367.1 L392.8 363.3 L393.7 369.8 L394.7 368.2 L395.7 360.3 L396.6 364.3 L397.6 363.8 L398.5 367.4 L399.5 370.4 L400.5 367.3 L401.4 359.1 L402.4 369.4 L403.4 365.8 L404.3 371.1 L405.3 367.8 L406.2 369 L407.2 367.3 L408.2 369.7 L409.1 366.2 L410.1 365.7 L411.1 367.9 L412 365.7 L413 368.5 L413.9 371.3 L414.9 362.6 L415.9 363.5 L416.8 369.4 L417.8 375.6 L418.8 376.9 L419.7 378.2 L420.7 386.1 L421.6 375.3 L422.6 375.2 L423.6 378.3 L424.5 379.2 L425.5 373.8 L426.5 373.4 L427.4 376.5 L428.4 373.2 L429.3 374.2 L430.3 378.3 L431.3 380.7 L432.2 375 L433.2 366.7 L434.2 376.8 L435.1 370 L436.1 368.8 L437 368.8 L438 371.2 L439 370.3 L439.9 384.4 L440.9 382.7 L441.9 380.3 L442.8 380.7 L443.8 376 L444.7 374.3 L445.7 380.3 L446.7 378.2 L447.6 373.8 L448.6 377.4 L449.6 371.7 L450.5 371 L451.5 364 L452.4 366.1 L453.4 367.1 L454.4 354.4 L455.3 363.8 L456.3 370.1 L457.3 367.9 L458.2 377.9 L459.2 371.7 L460.1 380.1 L461.1 379.5 L462.1 369.9 L463 363.9 L464 376.6 L465 370.3 L465.9 381 L466.9 374.2 L467.8 381.2 L468.8 379.5 L469.8 379.8 L470.7 376.1 L471.7 373.1 L472.7 371.4 L473.6 367.8 L474.6 366.1 L475.5 367.4 L476.5 376.4 L477.5 377.5 L478.4 388.8 L479.4 378.9 L480.4 377.6 L481.3 381.8 L482.3 381.2 L483.2 378.6 L484.2 374.1 L485.2 374.6 L486.1 366.3 L487.1 367.8 L488.1 377.9 L489 372.8 L490 387.8 L490.9 373.7 L491.9 364.4 L492.9 371.7 L493.8 367.8 L494.8 367.4 L495.8 379.5 L496.7 367.8 L497.7 357.8 L498.6 368.6 L499.6 374.6 L500.6 373.3 L501.5 374.7 L502.5 372.5 L503.5 373.4 L504.4 371 L505.4 371.9 L506.3 377.1 L507.3 368.2 L508.3 372.4 L509.2 372.3 L510.2 374.6 L511.2 377.7 L512.1 379.7 L513.1 375.7 L514 373.7 L515 380.2 L516 373.2 L516.9 370.4 L517.9 366.1 L518.9 371.2 L519.8 366.4 L520.8 365.9 L521.7 366.1 L522.7 364.2 L523.7 361.6 L524.6 364.8 L525.6 371.7 L526.6 372.1 L527.5 374.9 L528.5 372.9 L529.4 374.6 L530.4 372.2 L531.4 375.8 L532.3 366.9 L533.3 371.5 L534.3 366.9 L535.2 367.2 L536.2 371.9 L537.1 366.9 L538.1 363.7 L539.1 373 L540 367.2 L541 379.8 L542 382.2 L542.9 378 L543.9 376.2 L544.8 379.2 L545.8 379.2 L546.8 373.7 L547.7 364.9 L548.7 376.4 L549.7 379.4 L550.6 385.5 L551.6 384.2 L552.5 376.2 L553.5 382.6 L554.5 381.7 L555.4 371 L556.4 369 L557.3 366.6 L558.3 366 L559.3 367 L560.2 362.2 L561.2 368.4 L562.2 377.3 L563.1 370.7 L564.1 370.4 L565 368.5 L566 376.9 L567 370.8 L567.9 375.1 L568.9 361.1 L569.9 362.9 L570.8 371 L571.8 374.2 L572.7 378.3 L573.7 368.6 L574.7 374.9 L575.6 372 L576.6 376.2 L577.6 378.5 L578.5 377.8 L579.5 371.2 L580.4 375.9 L581.4 364.3 L582.4 371.8 L583.3 378.3 L584.3 381.7 L585.3 374 L586.2 385.9 L587.2 371 L588.1 374.4 L589.1 372.1 L590.1 385.1 L591 374.8 L592 380.5 L593 370.7 L593.9 364.9 L594.9 366.9 L595.8 366.8 L596.8 365.6 L597.8 367 L598.7 369.6 L599.7 372.8 L600.7 376.2 L601.6 370.3 L602.6 378.4 L603.5 372.8 L604.5 382.8 L605.5 369 L606.4 372.2 L607.4 372.4 L608.4 378.9 L609.3 380.4 L610.3 380.2 L611.2 383.4 L612.2 385.5 L613.2 376.3 L614.1 379.2 L615.1 382.8 L616.1 378.4 L617 379.4 L618 372.3 L618.9 368.8 L619.9 373.1 L620.9 375.6 L621.8 380.9 L622.8 376.5 L623.8 380.1 L624.7 376.6 L625.7 375 L626.6 375.7 L627.6 358.2 L628.6 379.6 L629.5 377 L630.5 380.4 L631.5 368.6 L632.4 373 L633.4 370.8 L634.3 371.5 L635.3 381 L636.3 375.6 L637.2 380.9 L638.2 375.7 L639.2 363.7 L640.1 381.7 L641.1 366.4 L642 365.6 L643 375.1 L644 372.3 L644.9 382 L645.9 360.3 L646.9 374.3 L647.8 374.1 L648.8 367 L649.7 369.5 L650.7 375.7 L651.7 376.9 L652.6 376.2 L653.6 389.3 L654.6 387.8 L655.5 381.9 L656.5 377 L657.4 382.2 L658.4 388 L659.4 379.7 L660.3 380.4 L661.3 374 L662.3 369 L663.2 366.8 L664.2 375.7 L665.1 380.6 L666.1 364.4 L667.1 369.4 L668 364.4 L669 368.1 L670 368.4 L670.9 364.6 L671.9 372.7 L672.8 378 L673.8 370.5 L674.8 363.1 L675.7 365.1 L676.7 370 L677.7 363.1 L678.6 362.1 L679.6 364.4 L680.5 360.8 L681.5 374.3 L682.5 375 L683.4 372.2 L684.4 363.9 L685.4 372.1 L686.3 360.6 L687.3 368.7 L688.2 371.6 L689.2 368.1 L690.2 370 L691.1 371 L692.1 384 L693.1 380.3 L694 382.3 L695 381.7 L695.9 372.7 L696.9 374 L697.9 373.6 L698.8 371.3 L699.8 382.2 L700.8 377.3 L701.7 373.5 L702.7 364.6 L703.6 380.7 L704.6 390.2 L705.6 386.9 L706.5 392.9 L707.5 387.5 L708.5 389.5 L709.4 378.3 L710.4 368.4 L711.3 371.3 L712.3 360.1 L713.3 367.5 L714.2 369.2 L715.2 377.3 L716.2 380.8 L717.1 368.2 L718.1 372 L719 378.2 L720 362 L721 362.6 L721.9 359.6 L722.9 363.6 L723.9 367.5 L724.8 376.1 L725.8 376.8 L726.7 372.2 L727.7 375.5 L728.7 306 L729.6 305.6 L730.6 368.9 L731.6 374.6 L732.5 371.8 L733.5 372 L734.4 365.1 L735.4 352.1 L736.4 315.7 L737.3 309.3 L738.3 313.2 L739.3 308.6 L740.2 319.7 L741.2 324.1 L742.1 276.8 L743.1 338.8 L744.1 327.3 L745 340.4 L746 355.7 L747 341.2 L747.9 348.2 L748.9 329.4 L749.8 332.8 L750.8 362.4 L751.8 363.9 L752.7 329.9 L753.7 359.1 L754.7 331.3 L755.6 331.1 L756.6 338.5 L757.5 363.6 L758.5 335.7" fill="none" stroke="#70dbed" stroke-width="1.200"/>
<path d="M143.5 351.2 L144.5 358.7 L145.4 360.8 L146.4 354.5 L147.3 349.5 L148.3 347.2 L149.3 357.8 L150.2 350.3 L151.2 364.3 L152.2 364 L153.1 359.9 L154.1 355.3 L155 355.9 L156 354.6 L157 355.7 L157.9 359.8 L158.9 356.5 L159.9 354.4 L160.8 359.9 L161.8 356.9 L162.7 360.9 L163.7 366.7 L164.7 351.8 L165.6 367.3 L166.6 368.4 L167.6 361.6 L168.5 364 L169.5 354.7 L170.4 349.6 L171.4 361.1 L172.4 351.9 L173.3 356.9 L174.3 362.6 L175.3 363.5 L176.2 361.6 L177.2 353.9 L178.1 363.2 L179.1 357.1 L180.1 311.1 L181 296.3 L182 293.6 L183 277.5 L183.9 288.6 L184.9 298.6 L185.8 349.9 L186.8 360.6 L187.8 354.5 L188.7 348.1 L189.7 351.6 L190.7 353.5 L191.6 354.2 L192.6 349.7 L193.5 356.8 L194.5 352 L195.5 349.7 L196.4 350.7 L197.4 356.3 L198.4 357.5 L199.3 356.2 L200.3 346.6 L201.2 344.5 L202.2 343.3 L203.2 348.7 L204.1 352.9 L205.1 348.4 L206.1 345 L207 344.1 L208 337.2 L208.9 342.8 L209.9 342 L210.9 350.1 L211.8 348.3 L212.8 347.8 L213.8 352.6 L214.7 351 L215.7 355.9 L216.6 341.3 L217.6 345.9 L218.6 352.3 L219.5 367 L220.5 354.1 L221.5 350 L222.4 286.3 L223.4 299.6 L224.3 284.5 L225.3 285.6 L226.3 284.5 L227.2 295.1 L228.2 343.2 L229.2 349.1 L230.1 344.1 L231.1 341.9 L232 346.4 L233 344 L234 337.1 L234.9 341.1 L235.9 340.7 L236.9 355.8 L237.8 348.4 L238.8 355.6 L239.7 347.9 L240.7 346 L241.7 345.3 L242.6 342.2 L243.6 345.1 L244.6 344.8 L245.5 349 L246.5 355.6 L247.4 354.9 L248.4 352.9 L249.4 339.3 L250.3 292.6 L251.3 282.7 L252.3 291.6 L253.2 290.5 L254.2 354.1 L255.1 363 L256.1 360.9 L257.1 352.8 L258 351.7 L259 351.2 L260 341.9 L260.9 351 L261.9 360.5 L262.8 362.6 L263.8 366.5 L264.8 360.6 L265.7 361.9 L266.7 350.8 L267.7 342.8 L268.6 354.6 L269.6 350.8 L270.5 359 L271.5 351.9 L272.5 347.8 L273.4 358.5 L274.4 358.1 L275.4 355.5 L276.3 360 L277.3 356.2 L278.2 363.4 L279.2 362.7 L280.2 369.5 L281.1 360.9 L282.1 375.1 L283.1 363.4 L284 353.9 L285 355.8 L285.9 350 L286.9 351.1 L287.9 345.6 L288.8 355.4 L289.8 353.5 L290.8 334.5 L291.7 345.9 L292.7 342.2 L293.6 336 L294.6 349.9 L295.6 345 L296.5 346.3 L297.5 328.2 L298.5 315.1 L299.4 351.1 L300.4 343 L301.3 353 L302.3 344.4 L303.3 342.7 L304.2 321.5 L305.2 334.9 L306.2 351.9 L307.1 337.5 L308.1 359 L309 351.7 L310 360.5 L311 339.5 L311.9 356.7 L312.9 342.6 L313.9 337.4 L314.8 344.4 L315.8 359.1 L316.7 353.4 L317.7 358.3 L318.7 351.9 L319.6 352.7 L320.6 349.4 L321.6 358.7 L322.5 355 L323.5 348.2 L324.4 352.1 L325.4 359.6 L326.4 347.2 L327.3 352.3 L328.3 355.2 L329.3 358 L330.2 354.4 L331.2 366.7 L332.1 357.3 L333.1 366.1 L334.1 361.5 L335 351.7 L336 346.2 L337 350.3 L337.9 328.9 L338.9 327.7 L339.8 317.8 L340.8 348.3 L341.8 344.7 L342.7 341.4 L343.7 346.1 L344.7 340 L345.6 350.3 L346.6 348.9 L347.5 347.3 L348.5 349.3 L349.5 345.6 L350.4 348.4 L351.4 347.1 L352.3 346.3 L353.3 352.8 L354.3 359.9 L355.2 358.2 L356.2 353.2 L357.2 354.4 L358.1 355.7 L359.1 346.4 L360 347.7 L361 351.5 L362 349.1 L362.9 354.4 L363.9 358.3 L364.9 364.5 L365.8 363.3 L366.8 353.4 L367.7 351.3 L368.7 339.8 L369.7 357.1 L370.6 362.7 L371.6 351.2 L372.6 355.6 L373.5 354.2 L374.5 358.7 L375.4 354.7 L376.4 349.4 L377.4 351.7 L378.3 359.7 L379.3 352.4 L380.3 361 L381.2 363.1 L382.2 360.7 L383.1 353.9 L384.1 362.5 L385.1 361.2 L386 356.8 L387 363.4 L388 364.7 L388.9 363.9 L389.9 364.2 L390.8 361.7 L391.8 353.1 L392.8 347.3 L393.7 354.2 L394.7 351.4 L395.7 344.2 L396.6 347.4 L397.6 353.4 L398.5 352.3 L399.5 355.6 L400.5 348.9 L401.4 347.8 L402.4 354.5 L403.4 350.3 L404.3 355 L405.3 348.8 L406.2 353.5 L407.2 348.4 L408.2 356.7 L409.1 354.6 L410.1 346.4 L411.1 350.3 L412 348.2 L413 351.7 L413.9 353.1 L414.9 349.9 L415.9 345.2 L416.8 354.1 L417.8 355.6 L418.8 359 L419.7 365.4 L420.7 370.4 L421.6 354.9 L422.6 358.1 L423.6 361.4 L424.5 360.6 L425.5 357.6 L426.5 357.5 L427.4 358.6 L428.4 355.7 L429.3 353 L430.3 360.3 L431.3 357.7 L432.2 353 L433.2 346 L434.2 356.4 L435.1 352.9 L436.1 351.8 L437 352.6 L438 356.2 L439 353.6 L439.9 367.3 L440.9 360.1 L441.9 360.8 L442.8 363.6 L443.8 363.3 L444.7 357.1 L445.7 363.2 L446.7 363.1 L447.6 359.4 L448.6 365.3 L449.6 353.2 L450.5 354.3 L451.5 341.4 L452.4 350 L453.4 351.1 L454.4 336.1 L455.3 347.5 L456.3 352.9 L457.3 352.4 L458.2 361.6 L459.2 350.9 L460.1 359.4 L461.1 357.1 L462.1 354 L463 347.8 L464 361.1 L465 351 L465.9 366.2 L466.9 355.4 L467.8 360.1 L468.8 357.9 L469.8 364.1 L470.7 355.7 L471.7 357.7 L472.7 356.4 L473.6 354.7 L474.6 346.9 L475.5 346.8 L476.5 360.3 L477.5 361.7 L478.4 370.3 L479.4 354.6 L480.4 357.3 L481.3 364.8 L482.3 367.5 L483.2 362.4 L484.2 353.8 L485.2 352.5 L486.1 350.7 L487.1 353 L488.1 361.3 L489 360.4 L490 366.3 L490.9 359.2 L491.9 345.7 L492.9 359 L493.8 354.6 L494.8 350.3 L495.8 363.4 L496.7 349.3 L497.7 342.7 L498.6 355 L499.6 355.6 L500.6 353.9 L501.5 362.1 L502.5 350.7 L503.5 354.9 L504.4 352.1 L505.4 359.6 L506.3 361.2 L507.3 352.6 L508.3 352.6 L509.2 358.9 L510.2 359.4 L511.2 365.1 L512.1 362.2 L513.1 357.2 L514 360.7 L515 363.5 L516 354.7 L516.9 349.6 L517.9 348.2 L518.9 355.1 L519.8 353.1 L520.8 352 L521.7 351.6 L522.7 347.9 L523.7 346.1 L524.6 344.5 L525.6 354 L526.6 357.7 L527.5 353.5 L528.5 353.3 L529.4 357 L530.4 357 L531.4 362.9 L532.3 353.1 L533.3 352.2 L534.3 352.6 L535.2 354.2 L536.2 354.4 L537.1 349.9 L538.1 346.2 L539.1 354.2 L540 347.2 L541 363.8 L542 361.3 L542.9 362.6 L543.9 356.8 L544.8 360.7 L545.8 360.6 L546.8 354 L547.7 348.9 L548.7 355.9 L549.7 359.2 L550.6 366.3 L551.6 367 L552.5 360.5 L553.5 365.4 L554.5 363.8 L555.4 354.2 L556.4 344.8 L557.3 348.7 L558.3 347.8 L559.3 352.8 L560.2 348.3 L561.2 352.6 L562.2 359.1 L563.1 356.5 L564.1 349.5 L565 353.4 L566 356.4 L567 359.8 L567.9 357.6 L568.9 344.8 L569.9 346.6 L570.8 352.5 L571.8 356.2 L572.7 360 L573.7 356.8 L574.7 359.3 L575.6 360.9 L576.6 357 L577.6 359.8 L578.5 360.4 L579.5 356.3 L580.4 359.8 L581.4 343.6 L582.4 350.4 L583.3 360.5 L584.3 360.1 L585.3 360.7 L586.2 371.9 L587.2 355.3 L588.1 359.3 L589.1 356.5 L590.1 365.8 L591 349.7 L592 364 L593 353.7 L593.9 348.1 L594.9 350.6 L595.8 348.1 L596.8 344.9 L597.8 353.8 L598.7 352.4 L599.7 356.3 L600.7 357.7 L601.6 357.4 L602.6 364.9 L603.5 361.6 L604.5 363 L605.5 351.9 L606.4 354.9 L607.4 361.3 L608.4 361.9 L609.3 364.2 L610.3 365.6 L611.2 367.1 L612.2 364.8 L613.2 357.3 L614.1 361.2 L615.1 363 L616.1 362.1 L617 361.1 L618 355.1 L618.9 350.8 L619.9 356.1 L620.9 358.5 L621.8 363 L622.8 360.5 L623.8 356.3 L624.7 357.7 L625.7 356.5 L626.6 352.4 L627.6 339.5 L628.6 365.5 L629.5 357.5 L630.5 360.1 L631.5 347.2 L632.4 352.4 L633.4 352 L634.3 357.5 L635.3 365 L636.3 357.4 L637.2 361.3 L638.2 360.7 L639.2 348.7 L640.1 364.3 L641.1 349.9 L642 348.5 L643 358.3 L644 358.4 L644.9 360.4 L645.9 340.8 L646.9 357.2 L647.8 354.1 L648.8 349.5 L649.7 351.1 L650.7 357 L651.7 361.1 L652.6 357.2 L653.6 367.4 L654.6 370.9 L655.5 358.5 L656.5 353.9 L657.4 359.2 L658.4 363.7 L659.4 359.7 L660.3 363.1 L661.3 358.2 L662.3 354.5 L663.2 350.1 L664.2 358.2 L665.1 360.7 L666.1 353.5 L667.1 346.9 L668 342.6 L669 351.7 L670 350.1 L670.9 347.4 L671.9 354.8 L672.8 360.7 L673.8 353.9 L674.8 349.3 L675.7 348.6 L676.7 353.3 L677.7 346.5 L678.6 348.6 L679.6 348.3 L680.5 345.2 L681.5 355.4 L682.5 360.2 L683.4 354.1 L684.4 345.5 L685.4 353.5 L686.3 346 L687.3 353.3 L688.2 355.2 L689.2 349.7 L690.2 349.3 L691.1 354.5 L692.1 367 L693.1 361.1 L694 363.3 L695 365.6 L695.9 357.4 L696.9 356.9 L697.9 354.6 L698.8 357.4 L699.8 366.3 L700.8 358.3 L701.7 359.4 L702.7 348.3 L703.6 361.6 L704.6 371 L705.6 370.5 L706.5 373.2 L707.5 369.2 L708.5 369.2 L709.4 362.5 L710.4 349 L711.3 358.6 L712.3 345.1 L713.3 351 L714.2 350.1 L715.2 361.1 L716.2 361.2 L717.1 353.1 L718.1 353.1 L719 355.9 L720 347.4 L721 345.7 L721.9 346.6 L722.9 345.2 L723.9 348 L724.8 358.4 L725.8 362 L726.7 354.1 L727.7 355.1 L728.7 295.1 L729.6 295.4 L730.6 356.9 L731.6 358.9 L732.5 351.2 L733.5 358.1 L734.4 346.1 L735.4 332.9 L736.4 304.4 L737.3 297.9 L738.3 304.9 L739.3 303.2 L740.2 310 L741.2 314 L742.1 272.8 L743.1 324.5 L744.1 316.7 L745 327.1 L746 339.8 L747 328.3 L747.9 329.7 L748.9 317 L749.8 320.9 L750.8 347.2 L751.8 349.5 L752.7 315.2 L753.7 343.4 L754.7 322.5 L755.6 321 L756.6 326.3 L757.5 348.8 L758.5 320.8 L758.5 406.5 L143.5 406.5Z" fill="#eab839" fill-opacity=".45"/>
<path d="M143.5 351.2 L144.5 358.7 L145.4 360.8 L146.4 354.5 L147.3 349.5 L148.3 347.2 L149.3 357.8 L150.2 350.3 L151.2 364.3 L152.2 364 L153.1 359.9 L154.1 355.3 L155 355.9 L156 354.6 L157 355.7 L157.9 359.8 L158.9 356.5 L159.9 354.4 L160.8 359.9 L161.8 356.9 L162.7 360.9 L163.7 366.7 L164.7 351.8 L165.6 367.3 L166.6 368.4 L167.6 361.6 L168.5 364 L169.5 354.7 L170.4 349.6 L171.4 361.1 L172.4 351.9 L173.3 356.9 L174.3 362.6 L175.3 363.5 L176.2 361.6 L177.2 353.9 L178.1 363.2 L179.1 357.1 L180.1 311.1 L181 296.3 L182 293.6 L183 277.5 L183.9 288.6 L184.9 298.6 L185.8 349.9 L186.8 360.6 L187.8 354.5 L188.7 348.1 L189.7 351.6 L190.7 353.5 L191.6 354.2 L192.6 349.7 L193.5 356.8 L194.5 352 L195.5 349.7 L196.4 350.7 L197.4 356.3 L198.4 357.5 L199.3 356.2 L200.3 346.6 L201.2 344.5 L202.2 343.3 L203.2 348.7 L204.1 352.9 L205.1 348.4 L206.1 345 L207 344.1 L208 337.2 L208.9 342.8 L209.9 342 L210.9 350.1 L211.8 348.3 L212.8 347.8 L213.8 352.6 L214.7 351 L215.7 355.9 L216.6 341.3 L217.6 345.9 L218.6 352.3 L219.5 367 L220.5 354.1 L221.5 350 L222.4 286.3 L223.4 299.6 L224.3 284.5 L225.3 285.6 L226.3 284.5 L227.2 295.1 L228.2 343.2 L229.2 349.1 L230.1 344.1 L231.1 341.9 L232 346.4 L233 344 L234 337.1 L234.9 341.1 L235.9 340.7 L236.9 355.8 L237.8 348.4 L238.8 355.6 L239.7 347.9 L240.7 346 L241.7 345.3 L242.6 342.2 L243.6 345.1 L244.6 344.8 L245.5 349 L246.5 355.6 L247.4 354.9 L248.4 352.9 L249.4 339.3 L250.3 292.6 L251.3 282.7 L252.3 291.6 L253.2 290.5 L254.2 354.1 L255.1 363 L256.1 360.9 L257.1 352.8 L258 351.7 L259 351.2 L260 341.9 L260.9 351 L261.9 360.5 L262.8 362.6 L263.8 366.5 L264.8 360.6 L265.7 361.9 L266.7 350.8 L267.7 342.8 L268.6 354.6 L269.6 350.8 L270.5 359 L271.5 351.9 L272.5 347.8 L273.4 358.5 L274.4 358.1 L275.4 355.5 L276.3 360 L277.3 356.2 L278.2 363.4 L279.2 362.7 L280.2 369.5 L281.1 360.9 L282.1 375.1 L283.1 363.4 L284 353.9 L285 355.8 L285.9 350 L286.9 351.1 L287.9 345.6 L288.8 355.4 L289.8 353.5 L290.8 334.5 L291.7 345.9 L292.7 342.2 L293.6 336 L294.6 349.9 L295.6 345 L296.5 346.3 L297.5 328.2 L298.5 315.1 L299.4 351.1 L300.4 343 L301.3 353 L302.3 344.4 L303.3 342.7 L304.2 321.5 L305.2 334.9 L306.2 351.9 L307.1 337.5 L308.1 359 L309 351.7 L310 360.5 L311 339.5 L311.9 356.7 L312.9 342.6 L313.9 337.4 L314.8 344.4 L315.8 359.1 L316.7 353.4 L317.7 358.3 L318.7 351.9 L319.6 352.7 L320.6 349.4 L321.6 358.7 L322.5 355 L323.5 348.2 L324.4 352.1 L325.4 359.6 L326.4 347.2 L327.3 352.3 L328.3 355.2 L329.3 358 L330.2 354.4 L331.2 366.7 L332.1 357.3 L333.1 366.1 L334.1 361.5 L335 351.7 L336 346.2 L337 350.3 L337.9 328.9 L338.9 327.7 L339.8 317.8 L340.8 348.3 L341.8 344.7 L342.7 341.4 L343.7 346.1 L344.7 340 L345.6 350.3 L346.6 348.9 L347.5 347.3 L348.5 349.3 L349.5 345.6 L350.4 348.4 L351.4 347.1 L352.3 346.3 L353.3 352.8 L354.3 359.9 L355.2 358.2 L356.2 353.2 L357.2 354.4 L358.1 355.7 L359.1 346.4 L360 347.7 L361 351.5 L362 349.1 L362.9 354.4 L363.9 358.3 L364.9 364.5 L365.8 363.3 L366.8 353.4 L367.7 351.3 L368.7 339.8 L369.7 357.1 L370.6 362.7 L371.6 351.2 L372.6 355.6 L373.5 354.2 L374.5 358.7 L375.4 354.7 L376.4 349.4 L377.4 351.7 L378.3 359.7 L379.3 352.4 L380.3 361 L381.2 363.1 L382.2 360.7 L383.1 353.9 L384.1 362.5 L385.1 361.2 L386 356.8 L387 363.4 L388 364.7 L388.9 363.9 L389.9 364.2 L390.8 361.7 L391.8 353.1 L392.8 347.3 L393.7 354.2 L394.7 351.4 L395.7 344.2 L396.6 347.4 L397.6 353.4 L398.5 352.3 L399.5 355.6 L400.5 348.9 L401.4 347.8 L402.4 354.5 L403.4 350.3 L404.3 355 L405.3 348.8 L406.2 353.5 L407.2 348.4 L408.2 356.7 L409.1 354.6 L410.1 346.4 L411.1 350.3 L412 348.2 L413 351.7 L413.9 353.1 L414.9 349.9 L415.9 345.2 L416.8 354.1 L417.8 355.6 L418.8 359 L419.7 365.4 L420.7 370.4 L421.6 354.9 L422.6 358.1 L423.6 361.4 L424.5 360.6 L425.5 357.6 L426.5 357.5 L427.4 358.6 L428.4 355.7 L429.3 353 L430.3 360.3 L431.3 357.7 L432.2 353 L433.2 346 L434.2 356.4 L435.1 352.9 L436.1 351.8 L437 352.6 L438 356.2 L439 353.6 L439.9 367.3 L440.9 360.1 L441.9 360.8 L442.8 363.6 L443.8 363.3 L444.7 357.1 L445.7 363.2 L446.7 363.1 L447.6 359.4 L448.6 365.3 L449.6 353.2 L450.5 354.3 L451.5 341.4 L452.4 350 L453.4 351.1 L454.4 336.1 L455.3 347.5 L456.3 352.9 L457.3 352.4 L458.2 361.6 L459.2 350.9 L460.1 359.4 L461.1 357.1 L462.1 354 L463 347.8 L464 361.1 L465 351 L465.9 366.2 L466.9 355.4 L467.8 360.1 L468.8 357.9 L469.8 364.1 L470.7 355.7 L471.7 357.7 L472.7 356.4 L473.6 354.7 L474.6 346.9 L475.5 346.8 L476.5 360.3 L477.5 361.7 L478.4 370.3 L479.4 354.6 L480.4 357.3 L481.3 364.8 L482.3 367.5 L483.2 362.4 L484.2 353.8 L485.2 352.5 L486.1 350.7 L487.1 353 L488.1 361.3 L489 360.4 L490 366.3 L490.9 359.2 L491.9 345.7 L492.9 359 L493.8 354.6 L494.8 350.3 L495.8 363.4 L496.7 349.3 L497.7 342.7 L498.6 355 L499.6 355.6 L500.6 353.9 L501.5 362.1 L502.5 350.7 L503.5 354.9 L504.4 352.1 L505.4 359.6 L506.3 361.2 L507.3 352.6 L508.3 352.6 L509.2 358.9 L510.2 359.4 L511.2 365.1 L512.1 362.2 L513.1 357.2 L514 360.7 L515 363.5 L516 354.7 L516.9 349.6 L517.9 348.2 L518.9 355.1 L519.8 353.1 L520.8 352 L521.7 351.6 L522.7 347.9 L523.7 346.1 L524.6 344.5 L525.6 354 L526.6 357.7 L527.5 353.5 L528.5 353.3 L529.4 357 L530.4 357 L531.4 362.9 L532.3 353.1 L533.3 352.2 L534.3 352.6 L535.2 354.2 L536.2 354.4 L537.1 349.9 L538.1 346.2 L539.1 354.2 L540 347.2 L541 363.8 L542 361.3 L542.9 362.6 L543.9 356.8 L544.8 360.7 L545.8 360.6 L546.8 354 L547.7 348.9 L548.7 355.9 L549.7 359.2 L550.6 366.3 L551.6 367 L552.5 360.5 L553.5 365.4 L554.5 363.8 L555.4 354.2 L556.4 344.8 L557.3 348.7 L558.3 347.8 L559.3 352.8 L560.2 348.3 L561.2 352.6 L562.2 359.1 L563.1 356.5 L564.1 349.5 L565 353.4 L566 356.4 L567 359.8 L567.9 357.6 L568.9 344.8 L569.9 346.6 L570.8 352.5 L571.8 356.2 L572.7 360 L573.7 356.8 L574.7 359.3 L575.6 360.9 L576.6 357 L577.6 359.8 L578.5 360.4 L579.5 356.3 L580.4 359.8 L581.4 343.6 L582.4 350.4 L583.3 360.5 L584.3 360.1 L585.3 360.7 L586.2 371.9 L587.2 355.3 L588.1 359.3 L589.1 356.5 L590.1 365.8 L591 349.7 L592 364 L593 353.7 L593.9 348.1 L594.9 350.6 L595.8 348.1 L596.8 344.9 L597.8 353.8 L598.7 352.4 L599.7 356.3 L600.7 357.7 L601.6 357.4 L602.6 364.9 L603.5 361.6 L604.5 363 L605.5 351.9 L606.4 354.9 L607.4 361.3 L608.4 361.9 L609.3 364.2 L610.3 365.6 L611.2 367.1 L612.2 364.8 L613.2 357.3 L614.1 361.2 L615.1 363 L616.1 362.1 L617 361.1 L618 355.1 L618.9 350.8 L619.9 356.1 L620.9 358.5 L621.8 363 L622.8 360.5 L623.8 356.3 L624.7 357.7 L625.7 356.5 L626.6 352.4 L627.6 339.5 L628.6 365.5 L629.5 357.5 L630.5 360.1 L631.5 347.2 L632.4 352.4 L633.4 352 L634.3 357.5 L635.3 365 L636.3 357.4 L637.2 361.3 L638.2 360.7 L639.2 348.7 L640.1 364.3 L641.1 349.9 L642 348.5 L643 358.3 L644 358.4 L644.9 360.4 L645.9 340.8 L646.9 357.2 L647.8 354.1 L648.8 349.5 L649.7 351.1 L650.7 357 L651.7 361.1 L652.6 357.2 L653.6 367.4 L654.6 370.9 L655.5 358.5 L656.5 353.9 L657.4 359.2 L658.4 363.7 L659.4 359.7 L660.3 363.1 L661.3 358.2 L662.3 354.5 L663.2 350.1 L664.2 358.2 L665.1 360.7 L666.1 353.5 L667.1 346.9 L668 342.6 L669 351.7 L670 350.1 L670.9 347.4 L671.9 354.8 L672.8 360.7 L673.8 353.9 L674.8 349.3 L675.7 348.6 L676.7 353.3 L677.7 346.5 L678.6 348.6 L679.6 348.3 L680.5 345.2 L681.5 355.4 L682.5 360.2 L683.4 354.1 L684.4 345.5 L685.4 353.5 L686.3 346 L687.3 353.3 L688.2 355.2 L689.2 349.7 L690.2 349.3 L691.1 354.5 L692.1 367 L693.1 361.1 L694 363.3 L695 365.6 L695.9 357.4 L696.9 356.9 L697.9 354.6 L698.8 357.4 L699.8 366.3 L700.8 358.3 L701.7 359.4 L702.7 348.3 L703.6 361.6 L704.6 371 L705.6 370.5 L706.5 373.2 L707.5 369.2 L708.5 369.2 L709.4 362.5 L710.4 349 L711.3 358.6 L712.3 345.1 L713.3 351 L714.2 350.1 L715.2 361.1 L716.2 361.2 L717.1 353.1 L718.1 353.1 L719 355.9 L720 347.4 L721 345.7 L721.9 346.6 L722.9 345.2 L723.9 348 L724.8 358.4 L725.8 362 L726.7 354.1 L727.7 355.1 L728.7 295.1 L729.6 295.4 L730.6 356.9 L731.6 358.9 L732.5 351.2 L733.5 358.1 L734.4 346.1 L735.4 332.9 L736.4 304.4 L737.3 297.9 L738.3 304.9 L739.3 303.2 L740.2 310 L741.2 314 L742.1 272.8 L743.1 324.5 L744.1 316.7 L745 327.1 L746 339.8 L747 328.3 L747.9 329.7 L748.9 317 L749.8 320.9 L750.8 347.2 L751.8 349.5 L752.7 315.2 L753.7 343.4 L754.7 322.5 L755.6 321 L756.6 326.3 L757.5 348.8 L758.5 320.8" fill="none" stroke="#eab839" stroke-width="1.200"/>
<path d="M890.23 402.40 A66 66 0 1 1 1015.77 402.40 L995.32 395.75 A44.5 44.5 0 1 0 910.68 395.75Z" fill="#299c46"/>
<path d="M884.52 404.25 A72 72 0 0 1 887.85 351.34 L891.02 352.83 A68.5 68.5 0 0 0 887.85 403.17Z" fill="#d44a3a"/>
<path d="M887.85 351.34 A72 72 0 0 1 953.00 310.00 L953.00 313.50 A68.5 68.5 0 0 0 891.02 352.83Z" fill="#e0752d"/>
<path d="M953.00 310.00 A72 72 0 0 1 1021.48 404.25 L1018.15 403.17 A68.5 68.5 0 0 0 953.00 313.50Z" fill="#299c46"/>
<path d="M1769.5 261.5V427.5M1806.5 261.5V427.5M1732.5 261.5H1843.5M1732.5 316.5H1843.5M1732.5 371.5H1843.5M1732.5 427.5H1843.5" stroke="rgba(255,255,255,.2)" stroke-width="1" fill="none" shape-rendering="crispEdges"/>
<path d="M1844 261.5H1850M1844 303.500H1850M1844 344.500H1850M1844 386.500H1850M1844 427.500H1850" stroke="rgba(255,255,255,.17)" stroke-width="1" shape-rendering="crispEdges"/>
<rect x="1757" y="334" width="26" height="94" fill="#c15c17"/><rect x="1794" y="337" width="26" height="91" fill="#299c46"/>
<path d="M133.5 569.5V670.5M209.5 569.5V670.5M284.5 569.5V670.5M360.5 569.5V670.5M436.5 569.5V670.5M511.5 569.5V670.5M129 569.5H583M129 619.5H583M129 670.5H583" stroke="rgba(255,255,255,.2)" stroke-width="1" fill="none" shape-rendering="crispEdges"/>
<path d="M130.5 666.7 L133 665.4 L135.5 664.3 L138 665.8 L140.5 662.4 L143 660.5 L145.5 660.3 L148 650.2 L150.5 652 L152.9 657.8 L155.4 655 L157.9 655.6 L160.4 657.7 L162.9 661.8 L165.4 660.2 L167.9 658.8 L170.4 654.7 L172.9 655.1 L175.4 655.9 L177.9 659.8 L180.4 658.2 L182.9 654.5 L185.4 661 L187.9 664.5 L190.4 663 L192.9 657.4 L195.4 667.1 L197.8 664.2 L200.3 667 L202.8 661.3 L205.3 657.8 L207.8 651 L210.3 642.2 L212.8 626.8 L215.3 628.5 L217.8 640.3 L220.3 641.4 L222.8 643.4 L225.3 646.7 L227.8 646.7 L230.3 650.9 L232.8 650.6 L235.3 655.1 L237.8 651.6 L240.3 639.9 L242.8 639.4 L245.2 643.6 L247.7 639.3 L250.2 645.8 L252.7 649.6 L255.2 662.9 L257.7 661.3 L260.2 644.1 L262.7 622.1 L265.2 622.9 L267.7 616.5 L270.2 620.1 L272.7 609.1 L275.2 633.4 L277.7 633.9 L280.2 636.3 L282.7 637.9 L285.2 618 L287.6 641.6 L290.1 654.7 L292.6 653.8 L295.1 653.7 L297.6 653.2 L300.1 655.3 L302.6 654.7 L305.1 653.1 L307.6 656.9 L310.1 653 L312.6 642.1 L315.1 642.7 L317.6 652.3 L320.1 656.2 L322.6 652.6 L325.1 653.9 L327.6 659.6 L330.1 659.4 L332.6 656.6 L335 663.3 L337.5 657 L340 661.1 L342.5 656.6 L345 662.5 L347.5 657.7 L350 658.3 L352.5 662.2 L355 661.8 L357.5 661.8 L360 662.1 L362.5 643.5 L365 654.7 L367.5 663.9 L370 660.2 L372.5 659.1 L375 662.2 L377.4 656.9 L379.9 662.8 L382.4 649.5 L384.9 635.6 L387.4 650.1 L389.9 650.7 L392.4 658.2 L394.9 654.9 L397.4 657.3 L399.9 661.8 L402.4 652.5 L404.9 655.6 L407.4 654.9 L409.9 662.7 L412.4 653.2 L414.9 646.8 L417.4 643.5 L419.9 646.1 L422.4 652.6 L424.8 653.6 L427.3 637 L429.8 642.2 L432.3 633.2 L434.8 637.2 L437.3 651.3 L439.8 651.8 L442.3 647.7 L444.8 641.7 L447.3 642.2 L449.8 632.8 L452.3 650.5 L454.8 660.9 L457.3 649.7 L459.8 648.7 L462.3 651.6 L464.8 659.6 L467.2 654.3 L469.7 656.9 L472.2 662.4 L474.7 658.9 L477.2 655.6 L479.7 642.9 L482.2 650.3 L484.7 657.3 L487.2 645.2 L489.7 647.2 L492.2 649.7 L494.7 659 L497.2 651.2 L499.7 650.8 L502.2 651.9 L504.7 641.2 L507.2 635.9 L509.7 639.5 L512.1 629.6 L514.6 641.2 L517.1 653.2 L519.6 653.9 L522.1 642 L524.6 637.6 L527.1 642.1 L529.6 647.3 L532.1 643.9 L534.6 652.1 L537.1 649.1 L539.6 646.3 L542.1 645.9 L544.6 656.6 L547.1 655.8 L549.6 662.7 L552.1 660.3 L554.6 660.6 L557 652.5 L559.5 644 L562 653.2 L564.5 646.9 L567 656.4 L569.5 635.6 L572 648.7 L574.5 647 L577 655.9 L579.5 643.3 L579.5 670.5 L130.5 670.5Z" fill="#7eb26d" fill-opacity=".2" stroke="none"/>
<path d="M130.5 666.7 L133 665.4 L135.5 664.3 L138 665.8 L140.5 662.4 L143 660.5 L145.5 660.3 L148 650.2 L150.5 652 L152.9 657.8 L155.4 655 L157.9 655.6 L160.4 657.7 L162.9 661.8 L165.4 660.2 L167.9 658.8 L170.4 654.7 L172.9 655.1 L175.4 655.9 L177.9 659.8 L180.4 658.2 L182.9 654.5 L185.4 661 L187.9 664.5 L190.4 663 L192.9 657.4 L195.4 667.1 L197.8 664.2 L200.3 667 L202.8 661.3 L205.3 657.8 L207.8 651 L210.3 642.2 L212.8 626.8 L215.3 628.5 L217.8 640.3 L220.3 641.4 L222.8 643.4 L225.3 646.7 L227.8 646.7 L230.3 650.9 L232.8 650.6 L235.3 655.1 L237.8 651.6 L240.3 639.9 L242.8 639.4 L245.2 643.6 L247.7 639.3 L250.2 645.8 L252.7 649.6 L255.2 662.9 L257.7 661.3 L260.2 644.1 L262.7 622.1 L265.2 622.9 L267.7 616.5 L270.2 620.1 L272.7 609.1 L275.2 633.4 L277.7 633.9 L280.2 636.3 L282.7 637.9 L285.2 618 L287.6 641.6 L290.1 654.7 L292.6 653.8 L295.1 653.7 L297.6 653.2 L300.1 655.3 L302.6 654.7 L305.1 653.1 L307.6 656.9 L310.1 653 L312.6 642.1 L315.1 642.7 L317.6 652.3 L320.1 656.2 L322.6 652.6 L325.1 653.9 L327.6 659.6 L330.1 659.4 L332.6 656.6 L335 663.3 L337.5 657 L340 661.1 L342.5 656.6 L345 662.5 L347.5 657.7 L350 658.3 L352.5 662.2 L355 661.8 L357.5 661.8 L360 662.1 L362.5 643.5 L365 654.7 L367.5 663.9 L370 660.2 L372.5 659.1 L375 662.2 L377.4 656.9 L379.9 662.8 L382.4 649.5 L384.9 635.6 L387.4 650.1 L389.9 650.7 L392.4 658.2 L394.9 654.9 L397.4 657.3 L399.9 661.8 L402.4 652.5 L404.9 655.6 L407.4 654.9 L409.9 662.7 L412.4 653.2 L414.9 646.8 L417.4 643.5 L419.9 646.1 L422.4 652.6 L424.8 653.6 L427.3 637 L429.8 642.2 L432.3 633.2 L434.8 637.2 L437.3 651.3 L439.8 651.8 L442.3 647.7 L444.8 641.7 L447.3 642.2 L449.8 632.8 L452.3 650.5 L454.8 660.9 L457.3 649.7 L459.8 648.7 L462.3 651.6 L464.8 659.6 L467.2 654.3 L469.7 656.9 L472.2 662.4 L474.7 658.9 L477.2 655.6 L479.7 642.9 L482.2 650.3 L484.7 657.3 L487.2 645.2 L489.7 647.2 L492.2 649.7 L494.7 659 L497.2 651.2 L499.7 650.8 L502.2 651.9 L504.7 641.2 L507.2 635.9 L509.7 639.5 L512.1 629.6 L514.6 641.2 L517.1 653.2 L519.6 653.9 L522.1 642 L524.6 637.6 L527.1 642.1 L529.6 647.3 L532.1 643.9 L534.6 652.1 L537.1 649.1 L539.6 646.3 L542.1 645.9 L544.6 656.6 L547.1 655.8 L549.6 662.7 L552.1 660.3 L554.6 660.6 L557 652.5 L559.5 644 L562 653.2 L564.5 646.9 L567 656.4 L569.5 635.6 L572 648.7 L574.5 647 L577 655.9 L579.5 643.3" fill="none" stroke="#7eb26d" stroke-width="1.15"/>
<path d="M130.5 658 L133 657.5 L135.5 660.2 L138 657.2 L140.5 649.4 L143 655.1 L145.5 656.2 L148 665 L150.5 661.1 L152.9 658.1 L155.4 665.8 L157.9 663.2 L160.4 657.1 L162.9 661 L165.4 657.3 L167.9 656.4 L170.4 661.8 L172.9 659.3 L175.4 663.8 L177.9 669 L180.4 662.1 L182.9 660.5 L185.4 658.7 L187.9 661.9 L190.4 659.7 L192.9 665 L195.4 666.9 L197.8 661.4 L200.3 656.3 L202.8 656.9 L205.3 647.5 L207.8 650.8 L210.3 636.1 L212.8 636.7 L215.3 645.5 L217.8 649 L220.3 650 L222.8 651.1 L225.3 646.5 L227.8 638.4 L230.3 656.3 L232.8 652.9 L235.3 648.8 L237.8 652.3 L240.3 641.2 L242.8 654.4 L245.2 641.9 L247.7 644.1 L250.2 641.8 L252.7 632.9 L255.2 649.6 L257.7 647.5 L260.2 633.3 L262.7 629 L265.2 633.6 L267.7 638.4 L270.2 629.4 L272.7 636.7 L275.2 625.9 L277.7 653.3 L280.2 635.9 L282.7 656.1 L285.2 655 L287.6 654.7 L290.1 655.6 L292.6 659 L295.1 659.7 L297.6 659.8 L300.1 665.3 L302.6 667.6 L305.1 663.7 L307.6 661.6 L310.1 657.5 L312.6 655 L315.1 653.7 L317.6 661.4 L320.1 656.4 L322.6 657.6 L325.1 651.7 L327.6 654.9 L330.1 658.5 L332.6 660.2 L335 657.8 L337.5 660 L340 659.9 L342.5 660.5 L345 663.9 L347.5 665.9 L350 666.4 L352.5 664.9 L355 667.3 L357.5 662.1 L360 655.6 L362.5 660.2 L365 662.6 L367.5 662 L370 656.1 L372.5 655.4 L375 655.4 L377.4 659.4 L379.9 658 L382.4 658.2 L384.9 663.5 L387.4 658.8 L389.9 662.4 L392.4 659.4 L394.9 656.1 L397.4 655.6 L399.9 659.4 L402.4 655.5 L404.9 655.2 L407.4 655.7 L409.9 662.4 L412.4 660.2 L414.9 648.7 L417.4 651 L419.9 645 L422.4 638.6 L424.8 619 L427.3 642.2 L429.8 650.3 L432.3 641.8 L434.8 649.3 L437.3 656.7 L439.8 655 L442.3 656.1 L444.8 651.7 L447.3 651.6 L449.8 660.6 L452.3 653.7 L454.8 656.7 L457.3 655.6 L459.8 649.4 L462.3 643.6 L464.8 649.1 L467.2 650.3 L469.7 662.9 L472.2 667.2 L474.7 660.5 L477.2 665.1 L479.7 652.3 L482.2 648.3 L484.7 649.7 L487.2 651.4 L489.7 653.7 L492.2 654.3 L494.7 656.4 L497.2 655.5 L499.7 657.1 L502.2 646.7 L504.7 650.2 L507.2 653.9 L509.7 648.4 L512.1 647.8 L514.6 638.3 L517.1 642.7 L519.6 650.2 L522.1 656.2 L524.6 655.5 L527.1 656.9 L529.6 649.6 L532.1 655 L534.6 662.6 L537.1 659.1 L539.6 653.4 L542.1 645.4 L544.6 650.9 L547.1 657.5 L549.6 657 L552.1 652.6 L554.6 647.4 L557 637.7 L559.5 650.3 L562 657.8 L564.5 651.6 L567 651.8 L569.5 645.3 L572 630.1 L574.5 648.3 L577 649.8 L579.5 650.7 L579.5 670.5 L130.5 670.5Z" fill="#eab839" fill-opacity=".2" stroke="none"/>
<path d="M130.5 658 L133 657.5 L135.5 660.2 L138 657.2 L140.5 649.4 L143 655.1 L145.5 656.2 L148 665 L150.5 661.1 L152.9 658.1 L155.4 665.8 L157.9 663.2 L160.4 657.1 L162.9 661 L165.4 657.3 L167.9 656.4 L170.4 661.8 L172.9 659.3 L175.4 663.8 L177.9 669 L180.4 662.1 L182.9 660.5 L185.4 658.7 L187.9 661.9 L190.4 659.7 L192.9 665 L195.4 666.9 L197.8 661.4 L200.3 656.3 L202.8 656.9 L205.3 647.5 L207.8 650.8 L210.3 636.1 L212.8 636.7 L215.3 645.5 L217.8 649 L220.3 650 L222.8 651.1 L225.3 646.5 L227.8 638.4 L230.3 656.3 L232.8 652.9 L235.3 648.8 L237.8 652.3 L240.3 641.2 L242.8 654.4 L245.2 641.9 L247.7 644.1 L250.2 641.8 L252.7 632.9 L255.2 649.6 L257.7 647.5 L260.2 633.3 L262.7 629 L265.2 633.6 L267.7 638.4 L270.2 629.4 L272.7 636.7 L275.2 625.9 L277.7 653.3 L280.2 635.9 L282.7 656.1 L285.2 655 L287.6 654.7 L290.1 655.6 L292.6 659 L295.1 659.7 L297.6 659.8 L300.1 665.3 L302.6 667.6 L305.1 663.7 L307.6 661.6 L310.1 657.5 L312.6 655 L315.1 653.7 L317.6 661.4 L320.1 656.4 L322.6 657.6 L325.1 651.7 L327.6 654.9 L330.1 658.5 L332.6 660.2 L335 657.8 L337.5 660 L340 659.9 L342.5 660.5 L345 663.9 L347.5 665.9 L350 666.4 L352.5 664.9 L355 667.3 L357.5 662.1 L360 655.6 L362.5 660.2 L365 662.6 L367.5 662 L370 656.1 L372.5 655.4 L375 655.4 L377.4 659.4 L379.9 658 L382.4 658.2 L384.9 663.5 L387.4 658.8 L389.9 662.4 L392.4 659.4 L394.9 656.1 L397.4 655.6 L399.9 659.4 L402.4 655.5 L404.9 655.2 L407.4 655.7 L409.9 662.4 L412.4 660.2 L414.9 648.7 L417.4 651 L419.9 645 L422.4 638.6 L424.8 619 L427.3 642.2 L429.8 650.3 L432.3 641.8 L434.8 649.3 L437.3 656.7 L439.8 655 L442.3 656.1 L444.8 651.7 L447.3 651.6 L449.8 660.6 L452.3 653.7 L454.8 656.7 L457.3 655.6 L459.8 649.4 L462.3 643.6 L464.8 649.1 L467.2 650.3 L469.7 662.9 L472.2 667.2 L474.7 660.5 L477.2 665.1 L479.7 652.3 L482.2 648.3 L484.7 649.7 L487.2 651.4 L489.7 653.7 L492.2 654.3 L494.7 656.4 L497.2 655.5 L499.7 657.1 L502.2 646.7 L504.7 650.2 L507.2 653.9 L509.7 648.4 L512.1 647.8 L514.6 638.3 L517.1 642.7 L519.6 650.2 L522.1 656.2 L524.6 655.5 L527.1 656.9 L529.6 649.6 L532.1 655 L534.6 662.6 L537.1 659.1 L539.6 653.4 L542.1 645.4 L544.6 650.9 L547.1 657.5 L549.6 657 L552.1 652.6 L554.6 647.4 L557 637.7 L559.5 650.3 L562 657.8 L564.5 651.6 L567 651.8 L569.5 645.3 L572 630.1 L574.5 648.3 L577 649.8 L579.5 650.7" fill="none" stroke="#eab839" stroke-width="1.15"/>
<path d="M130.5 664.7 L133 663.1 L135.5 654.2 L138 644.4 L140.5 651.7 L143 657.8 L145.5 651.8 L148 660 L150.5 661.5 L152.9 663.4 L155.4 659.5 L157.9 658.9 L160.4 653.8 L162.9 643.5 L165.4 645.5 L167.9 649.2 L170.4 659.9 L172.9 665.1 L175.4 665.3 L177.9 660.8 L180.4 650.8 L182.9 658.6 L185.4 666.8 L187.9 666.2 L190.4 661.6 L192.9 661.8 L195.4 663.2 L197.8 665.1 L200.3 664.5 L202.8 659 L205.3 651.6 L207.8 649 L210.3 654.4 L212.8 662.3 L215.3 648.8 L217.8 637.1 L220.3 647.3 L222.8 644.1 L225.3 630 L227.8 650.5 L230.3 652.5 L232.8 651.1 L235.3 638.6 L237.8 637 L240.3 618 L242.8 633.3 L245.2 636.4 L247.7 633.4 L250.2 635.4 L252.7 631.5 L255.2 640.8 L257.7 640.1 L260.2 652.3 L262.7 638.1 L265.2 649.6 L267.7 632.8 L270.2 609.9 L272.7 637.2 L275.2 643.2 L277.7 615.3 L280.2 637.2 L282.7 647.5 L285.2 659.2 L287.6 665.3 L290.1 662.6 L292.6 655.5 L295.1 652.5 L297.6 656.3 L300.1 658.1 L302.6 656.2 L305.1 653.8 L307.6 659.1 L310.1 661.8 L312.6 658 L315.1 654.9 L317.6 655.1 L320.1 651 L322.6 648.9 L325.1 650.1 L327.6 655.5 L330.1 657.7 L332.6 660.7 L335 659.3 L337.5 653.6 L340 653.7 L342.5 653.5 L345 647.8 L347.5 653 L350 660.3 L352.5 658.6 L355 659.3 L357.5 653.3 L360 657.8 L362.5 660.6 L365 661.2 L367.5 658.7 L370 660 L372.5 659.5 L375 661.6 L377.4 661.6 L379.9 655.8 L382.4 643.3 L384.9 651.7 L387.4 660.8 L389.9 658.7 L392.4 657.8 L394.9 657.8 L397.4 652.9 L399.9 662.2 L402.4 655.6 L404.9 661.9 L407.4 653.6 L409.9 662.5 L412.4 654.4 L414.9 654.5 L417.4 656.4 L419.9 647.9 L422.4 649.7 L424.8 647.5 L427.3 650.7 L429.8 641.9 L432.3 647.5 L434.8 653.9 L437.3 650.4 L439.8 650.4 L442.3 642 L444.8 651.9 L447.3 651.6 L449.8 648.4 L452.3 657 L454.8 656.2 L457.3 652 L459.8 650.7 L462.3 651.5 L464.8 651.5 L467.2 663.9 L469.7 660.7 L472.2 652.9 L474.7 659.3 L477.2 659.5 L479.7 656.5 L482.2 654.6 L484.7 653.5 L487.2 649.5 L489.7 653 L492.2 651.7 L494.7 650.9 L497.2 654.9 L499.7 648 L502.2 652.9 L504.7 659.9 L507.2 662 L509.7 665.2 L512.1 648.9 L514.6 654.5 L517.1 655.6 L519.6 659.8 L522.1 647.2 L524.6 645.1 L527.1 656 L529.6 656.2 L532.1 656.1 L534.6 652.3 L537.1 653.5 L539.6 655.8 L542.1 652 L544.6 645 L547.1 644.5 L549.6 649.7 L552.1 642.9 L554.6 641 L557 633.3 L559.5 644.1 L562 651.7 L564.5 652.8 L567 653.8 L569.5 648.9 L572 654.4 L574.5 655.3 L577 648.4 L579.5 643.3 L579.5 670.5 L130.5 670.5Z" fill="#6ed0e0" fill-opacity=".2" stroke="none"/>
<path d="M130.5 664.7 L133 663.1 L135.5 654.2 L138 644.4 L140.5 651.7 L143 657.8 L145.5 651.8 L148 660 L150.5 661.5 L152.9 663.4 L155.4 659.5 L157.9 658.9 L160.4 653.8 L162.9 643.5 L165.4 645.5 L167.9 649.2 L170.4 659.9 L172.9 665.1 L175.4 665.3 L177.9 660.8 L180.4 650.8 L182.9 658.6 L185.4 666.8 L187.9 666.2 L190.4 661.6 L192.9 661.8 L195.4 663.2 L197.8 665.1 L200.3 664.5 L202.8 659 L205.3 651.6 L207.8 649 L210.3 654.4 L212.8 662.3 L215.3 648.8 L217.8 637.1 L220.3 647.3 L222.8 644.1 L225.3 630 L227.8 650.5 L230.3 652.5 L232.8 651.1 L235.3 638.6 L237.8 637 L240.3 618 L242.8 633.3 L245.2 636.4 L247.7 633.4 L250.2 635.4 L252.7 631.5 L255.2 640.8 L257.7 640.1 L260.2 652.3 L262.7 638.1 L265.2 649.6 L267.7 632.8 L270.2 609.9 L272.7 637.2 L275.2 643.2 L277.7 615.3 L280.2 637.2 L282.7 647.5 L285.2 659.2 L287.6 665.3 L290.1 662.6 L292.6 655.5 L295.1 652.5 L297.6 656.3 L300.1 658.1 L302.6 656.2 L305.1 653.8 L307.6 659.1 L310.1 661.8 L312.6 658 L315.1 654.9 L317.6 655.1 L320.1 651 L322.6 648.9 L325.1 650.1 L327.6 655.5 L330.1 657.7 L332.6 660.7 L335 659.3 L337.5 653.6 L340 653.7 L342.5 653.5 L345 647.8 L347.5 653 L350 660.3 L352.5 658.6 L355 659.3 L357.5 653.3 L360 657.8 L362.5 660.6 L365 661.2 L367.5 658.7 L370 660 L372.5 659.5 L375 661.6 L377.4 661.6 L379.9 655.8 L382.4 643.3 L384.9 651.7 L387.4 660.8 L389.9 658.7 L392.4 657.8 L394.9 657.8 L397.4 652.9 L399.9 662.2 L402.4 655.6 L404.9 661.9 L407.4 653.6 L409.9 662.5 L412.4 654.4 L414.9 654.5 L417.4 656.4 L419.9 647.9 L422.4 649.7 L424.8 647.5 L427.3 650.7 L429.8 641.9 L432.3 647.5 L434.8 653.9 L437.3 650.4 L439.8 650.4 L442.3 642 L444.8 651.9 L447.3 651.6 L449.8 648.4 L452.3 657 L454.8 656.2 L457.3 652 L459.8 650.7 L462.3 651.5 L464.8 651.5 L467.2 663.9 L469.7 660.7 L472.2 652.9 L474.7 659.3 L477.2 659.5 L479.7 656.5 L482.2 654.6 L484.7 653.5 L487.2 649.5 L489.7 653 L492.2 651.7 L494.7 650.9 L497.2 654.9 L499.7 648 L502.2 652.9 L504.7 659.9 L507.2 662 L509.7 665.2 L512.1 648.9 L514.6 654.5 L517.1 655.6 L519.6 659.8 L522.1 647.2 L524.6 645.1 L527.1 656 L529.6 656.2 L532.1 656.1 L534.6 652.3 L537.1 653.5 L539.6 655.8 L542.1 652 L544.6 645 L547.1 644.5 L549.6 649.7 L552.1 642.9 L554.6 641 L557 633.3 L559.5 644.1 L562 651.7 L564.5 652.8 L567 653.8 L569.5 648.9 L572 654.4 L574.5 655.3 L577 648.4 L579.5 643.3" fill="none" stroke="#6ed0e0" stroke-width="1.15"/>
<path d="M130.5 654.6 L133 655.7 L135.5 653 L138 652.8 L140.5 663.7 L143 658.7 L145.5 668.4 L148 655.5 L150.5 659 L152.9 658.2 L155.4 664.7 L157.9 659.2 L160.4 660.3 L162.9 665.3 L165.4 663.6 L167.9 661.1 L170.4 659.7 L172.9 654.9 L175.4 653.7 L177.9 656 L180.4 659.2 L182.9 659.6 L185.4 656.5 L187.9 657.1 L190.4 649.6 L192.9 639.9 L195.4 657.3 L197.8 661.4 L200.3 662.5 L202.8 655.5 L205.3 650.1 L207.8 643.6 L210.3 640.5 L212.8 626.6 L215.3 637.1 L217.8 618.3 L220.3 636.5 L222.8 622.3 L225.3 639.9 L227.8 645.9 L230.3 651.4 L232.8 656.9 L235.3 647.4 L237.8 650.4 L240.3 635.9 L242.8 639.5 L245.2 644.9 L247.7 636.1 L250.2 629.4 L252.7 652.2 L255.2 654.1 L257.7 653.7 L260.2 624.2 L262.7 615.3 L265.2 610.5 L267.7 615 L270.2 625.1 L272.7 610.2 L275.2 622.6 L277.7 638.5 L280.2 636.5 L282.7 649.2 L285.2 653.8 L287.6 655.8 L290.1 658.2 L292.6 658.2 L295.1 656 L297.6 659.2 L300.1 657.9 L302.6 657.1 L305.1 667.4 L307.6 645.1 L310.1 654.8 L312.6 660.6 L315.1 654.7 L317.6 658.6 L320.1 659 L322.6 653.6 L325.1 655.6 L327.6 659.9 L330.1 655.7 L332.6 660.7 L335 658.8 L337.5 656.8 L340 656.4 L342.5 656.9 L345 653.5 L347.5 653.8 L350 656.9 L352.5 659.3 L355 658.1 L357.5 658.9 L360 659.7 L362.5 653.5 L365 655.4 L367.5 655.7 L370 654.1 L372.5 659.6 L375 664.6 L377.4 652.8 L379.9 646.6 L382.4 657 L384.9 657.4 L387.4 640.5 L389.9 646.7 L392.4 652.7 L394.9 654.3 L397.4 644.8 L399.9 629.1 L402.4 646 L404.9 648.1 L407.4 650.6 L409.9 649.6 L412.4 645.1 L414.9 654.6 L417.4 640.3 L419.9 649.5 L422.4 639.8 L424.8 640.4 L427.3 637.6 L429.8 647.7 L432.3 651 L434.8 653 L437.3 651.4 L439.8 657.7 L442.3 656.2 L444.8 648.4 L447.3 651.1 L449.8 648.5 L452.3 651.5 L454.8 660.9 L457.3 649.3 L459.8 646 L462.3 647.8 L464.8 640 L467.2 652.2 L469.7 660.2 L472.2 656.1 L474.7 650.2 L477.2 650.2 L479.7 659.8 L482.2 658.5 L484.7 652.5 L487.2 635.4 L489.7 645.1 L492.2 644.5 L494.7 642.8 L497.2 646.8 L499.7 655.3 L502.2 644.6 L504.7 632.5 L507.2 639.5 L509.7 623 L512.1 635.5 L514.6 625.8 L517.1 628.8 L519.6 650.6 L522.1 653.5 L524.6 653.7 L527.1 645.6 L529.6 631.5 L532.1 638.7 L534.6 649.2 L537.1 644 L539.6 639.5 L542.1 640.5 L544.6 650.1 L547.1 647.9 L549.6 643.6 L552.1 638.3 L554.6 648.6 L557 642 L559.5 647.5 L562 646.2 L564.5 646.6 L567 649.9 L569.5 648.8 L572 651 L574.5 655.1 L577 662.2 L579.5 656.5 L579.5 670.5 L130.5 670.5Z" fill="#ef843c" fill-opacity=".2" stroke="none"/>
<path d="M130.5 654.6 L133 655.7 L135.5 653 L138 652.8 L140.5 663.7 L143 658.7 L145.5 668.4 L148 655.5 L150.5 659 L152.9 658.2 L155.4 664.7 L157.9 659.2 L160.4 660.3 L162.9 665.3 L165.4 663.6 L167.9 661.1 L170.4 659.7 L172.9 654.9 L175.4 653.7 L177.9 656 L180.4 659.2 L182.9 659.6 L185.4 656.5 L187.9 657.1 L190.4 649.6 L192.9 639.9 L195.4 657.3 L197.8 661.4 L200.3 662.5 L202.8 655.5 L205.3 650.1 L207.8 643.6 L210.3 640.5 L212.8 626.6 L215.3 637.1 L217.8 618.3 L220.3 636.5 L222.8 622.3 L225.3 639.9 L227.8 645.9 L230.3 651.4 L232.8 656.9 L235.3 647.4 L237.8 650.4 L240.3 635.9 L242.8 639.5 L245.2 644.9 L247.7 636.1 L250.2 629.4 L252.7 652.2 L255.2 654.1 L257.7 653.7 L260.2 624.2 L262.7 615.3 L265.2 610.5 L267.7 615 L270.2 625.1 L272.7 610.2 L275.2 622.6 L277.7 638.5 L280.2 636.5 L282.7 649.2 L285.2 653.8 L287.6 655.8 L290.1 658.2 L292.6 658.2 L295.1 656 L297.6 659.2 L300.1 657.9 L302.6 657.1 L305.1 667.4 L307.6 645.1 L310.1 654.8 L312.6 660.6 L315.1 654.7 L317.6 658.6 L320.1 659 L322.6 653.6 L325.1 655.6 L327.6 659.9 L330.1 655.7 L332.6 660.7 L335 658.8 L337.5 656.8 L340 656.4 L342.5 656.9 L345 653.5 L347.5 653.8 L350 656.9 L352.5 659.3 L355 658.1 L357.5 658.9 L360 659.7 L362.5 653.5 L365 655.4 L367.5 655.7 L370 654.1 L372.5 659.6 L375 664.6 L377.4 652.8 L379.9 646.6 L382.4 657 L384.9 657.4 L387.4 640.5 L389.9 646.7 L392.4 652.7 L394.9 654.3 L397.4 644.8 L399.9 629.1 L402.4 646 L404.9 648.1 L407.4 650.6 L409.9 649.6 L412.4 645.1 L414.9 654.6 L417.4 640.3 L419.9 649.5 L422.4 639.8 L424.8 640.4 L427.3 637.6 L429.8 647.7 L432.3 651 L434.8 653 L437.3 651.4 L439.8 657.7 L442.3 656.2 L444.8 648.4 L447.3 651.1 L449.8 648.5 L452.3 651.5 L454.8 660.9 L457.3 649.3 L459.8 646 L462.3 647.8 L464.8 640 L467.2 652.2 L469.7 660.2 L472.2 656.1 L474.7 650.2 L477.2 650.2 L479.7 659.8 L482.2 658.5 L484.7 652.5 L487.2 635.4 L489.7 645.1 L492.2 644.5 L494.7 642.8 L497.2 646.8 L499.7 655.3 L502.2 644.6 L504.7 632.5 L507.2 639.5 L509.7 623 L512.1 635.5 L514.6 625.8 L517.1 628.8 L519.6 650.6 L522.1 653.5 L524.6 653.7 L527.1 645.6 L529.6 631.5 L532.1 638.7 L534.6 649.2 L537.1 644 L539.6 639.5 L542.1 640.5 L544.6 650.1 L547.1 647.9 L549.6 643.6 L552.1 638.3 L554.6 648.6 L557 642 L559.5 647.5 L562 646.2 L564.5 646.6 L567 649.9 L569.5 648.8 L572 651 L574.5 655.1 L577 662.2 L579.5 656.5" fill="none" stroke="#ef843c" stroke-width="1.15"/>
<path d="M130.5 659.4 L133 660.9 L135.5 665.7 L138 663.3 L140.5 662.6 L143 659.5 L145.5 658.4 L148 661.2 L150.5 654.2 L152.9 643.8 L155.4 655.2 L157.9 660.6 L160.4 659.6 L162.9 662.7 L165.4 661.2 L167.9 663.6 L170.4 656.1 L172.9 657.7 L175.4 657.5 L177.9 657 L180.4 658.2 L182.9 664 L185.4 660.2 L187.9 665.6 L190.4 666.1 L192.9 664.2 L195.4 660.8 L197.8 660.8 L200.3 659.2 L202.8 657.2 L205.3 650.9 L207.8 654.2 L210.3 658.7 L212.8 667.9 L215.3 649.5 L217.8 640.5 L220.3 644.2 L222.8 647 L225.3 649 L227.8 651.5 L230.3 649 L232.8 661.3 L235.3 657.4 L237.8 636.9 L240.3 627.6 L242.8 638.8 L245.2 639.3 L247.7 643.7 L250.2 638.6 L252.7 640.4 L255.2 644.1 L257.7 616 L260.2 582.6 L262.7 622.2 L265.2 641.9 L267.7 644.4 L270.2 650 L272.7 653.2 L275.2 655.1 L277.7 654.1 L280.2 647.3 L282.7 650 L285.2 653.2 L287.6 653.6 L290.1 651.5 L292.6 653.6 L295.1 644.3 L297.6 643.4 L300.1 654.2 L302.6 661.9 L305.1 656 L307.6 656.4 L310.1 659.6 L312.6 663.7 L315.1 661.4 L317.6 663.5 L320.1 668.7 L322.6 661.2 L325.1 654.2 L327.6 654.4 L330.1 658.2 L332.6 648.3 L335 642.8 L337.5 650.6 L340 661 L342.5 659.7 L345 659.6 L347.5 656.6 L350 659.9 L352.5 655.5 L355 657.9 L357.5 658.3 L360 653.8 L362.5 657.9 L365 658.9 L367.5 662.1 L370 658.4 L372.5 645.5 L375 630.1 L377.4 648.3 L379.9 653.3 L382.4 656.2 L384.9 661.7 L387.4 654.9 L389.9 651.7 L392.4 649 L394.9 655.8 L397.4 654.2 L399.9 651.8 L402.4 657.4 L404.9 656.7 L407.4 650.1 L409.9 650.4 L412.4 653.3 L414.9 656.1 L417.4 653.2 L419.9 658.3 L422.4 640.7 L424.8 618.9 L427.3 633.1 L429.8 659.5 L432.3 654.2 L434.8 654 L437.3 651.7 L439.8 642.2 L442.3 655.8 L444.8 656.6 L447.3 659.3 L449.8 657.2 L452.3 645.1 L454.8 648.6 L457.3 656.6 L459.8 660.5 L462.3 667.6 L464.8 657.4 L467.2 661.5 L469.7 663.5 L472.2 652.4 L474.7 652.7 L477.2 650.3 L479.7 648.7 L482.2 650.8 L484.7 656.7 L487.2 654.1 L489.7 646.4 L492.2 657.8 L494.7 661.2 L497.2 652.7 L499.7 645.4 L502.2 647.8 L504.7 649.9 L507.2 652.8 L509.7 656.1 L512.1 652.4 L514.6 657.6 L517.1 655.6 L519.6 656.3 L522.1 649.1 L524.6 649.8 L527.1 654.9 L529.6 643.4 L532.1 647.5 L534.6 654.1 L537.1 650.9 L539.6 652.3 L542.1 650.3 L544.6 649.9 L547.1 633.5 L549.6 630.3 L552.1 648.3 L554.6 658.1 L557 656.2 L559.5 657.5 L562 654.9 L564.5 662.3 L567 660.9 L569.5 645.8 L572 647.4 L574.5 654.4 L577 651.9 L579.5 644.5 L579.5 670.5 L130.5 670.5Z" fill="#e24d42" fill-opacity=".2" stroke="none"/>
<path d="M130.5 659.4 L133 660.9 L135.5 665.7 L138 663.3 L140.5 662.6 L143 659.5 L145.5 658.4 L148 661.2 L150.5 654.2 L152.9 643.8 L155.4 655.2 L157.9 660.6 L160.4 659.6 L162.9 662.7 L165.4 661.2 L167.9 663.6 L170.4 656.1 L172.9 657.7 L175.4 657.5 L177.9 657 L180.4 658.2 L182.9 664 L185.4 660.2 L187.9 665.6 L190.4 666.1 L192.9 664.2 L195.4 660.8 L197.8 660.8 L200.3 659.2 L202.8 657.2 L205.3 650.9 L207.8 654.2 L210.3 658.7 L212.8 667.9 L215.3 649.5 L217.8 640.5 L220.3 644.2 L222.8 647 L225.3 649 L227.8 651.5 L230.3 649 L232.8 661.3 L235.3 657.4 L237.8 636.9 L240.3 627.6 L242.8 638.8 L245.2 639.3 L247.7 643.7 L250.2 638.6 L252.7 640.4 L255.2 644.1 L257.7 616 L260.2 582.6 L262.7 622.2 L265.2 641.9 L267.7 644.4 L270.2 650 L272.7 653.2 L275.2 655.1 L277.7 654.1 L280.2 647.3 L282.7 650 L285.2 653.2 L287.6 653.6 L290.1 651.5 L292.6 653.6 L295.1 644.3 L297.6 643.4 L300.1 654.2 L302.6 661.9 L305.1 656 L307.6 656.4 L310.1 659.6 L312.6 663.7 L315.1 661.4 L317.6 663.5 L320.1 668.7 L322.6 661.2 L325.1 654.2 L327.6 654.4 L330.1 658.2 L332.6 648.3 L335 642.8 L337.5 650.6 L340 661 L342.5 659.7 L345 659.6 L347.5 656.6 L350 659.9 L352.5 655.5 L355 657.9 L357.5 658.3 L360 653.8 L362.5 657.9 L365 658.9 L367.5 662.1 L370 658.4 L372.5 645.5 L375 630.1 L377.4 648.3 L379.9 653.3 L382.4 656.2 L384.9 661.7 L387.4 654.9 L389.9 651.7 L392.4 649 L394.9 655.8 L397.4 654.2 L399.9 651.8 L402.4 657.4 L404.9 656.7 L407.4 650.1 L409.9 650.4 L412.4 653.3 L414.9 656.1 L417.4 653.2 L419.9 658.3 L422.4 640.7 L424.8 618.9 L427.3 633.1 L429.8 659.5 L432.3 654.2 L434.8 654 L437.3 651.7 L439.8 642.2 L442.3 655.8 L444.8 656.6 L447.3 659.3 L449.8 657.2 L452.3 645.1 L454.8 648.6 L457.3 656.6 L459.8 660.5 L462.3 667.6 L464.8 657.4 L467.2 661.5 L469.7 663.5 L472.2 652.4 L474.7 652.7 L477.2 650.3 L479.7 648.7 L482.2 650.8 L484.7 656.7 L487.2 654.1 L489.7 646.4 L492.2 657.8 L494.7 661.2 L497.2 652.7 L499.7 645.4 L502.2 647.8 L504.7 649.9 L507.2 652.8 L509.7 656.1 L512.1 652.4 L514.6 657.6 L517.1 655.6 L519.6 656.3 L522.1 649.1 L524.6 649.8 L527.1 654.9 L529.6 643.4 L532.1 647.5 L534.6 654.1 L537.1 650.9 L539.6 652.3 L542.1 650.3 L544.6 649.9 L547.1 633.5 L549.6 630.3 L552.1 648.3 L554.6 658.1 L557 656.2 L559.5 657.5 L562 654.9 L564.5 662.3 L567 660.9 L569.5 645.8 L572 647.4 L574.5 654.4 L577 651.9 L579.5 644.5" fill="none" stroke="#e24d42" stroke-width="1.15"/>
<path d="M130.5 651.6 L133 651 L135.5 650.1 L138 656.9 L140.5 655.1 L143 654.2 L145.5 655.1 L148 653 L150.5 657.2 L152.9 666 L155.4 665.4 L157.9 666.1 L160.4 657.8 L162.9 654.7 L165.4 653.6 L167.9 659.6 L170.4 663.5 L172.9 657.2 L175.4 659.5 L177.9 651.8 L180.4 657.2 L182.9 660.3 L185.4 661.2 L187.9 658.6 L190.4 657.7 L192.9 651.1 L195.4 652.9 L197.8 653.8 L200.3 664.1 L202.8 660.1 L205.3 650.1 L207.8 649.3 L210.3 634.8 L212.8 643.3 L215.3 634.6 L217.8 635.4 L220.3 660.3 L222.8 643.7 L225.3 627.1 L227.8 631.1 L230.3 640.3 L232.8 643.2 L235.3 629.5 L237.8 638.1 L240.3 638 L242.8 624.5 L245.2 638 L247.7 633.9 L250.2 624.3 L252.7 631.2 L255.2 652.6 L257.7 634.5 L260.2 649.4 L262.7 643.5 L265.2 619.5 L267.7 593.4 L270.2 602.4 L272.7 639.2 L275.2 649 L277.7 638.8 L280.2 621.5 L282.7 637.9 L285.2 649.5 L287.6 648.7 L290.1 648.9 L292.6 648.5 L295.1 642.2 L297.6 631.8 L300.1 642.5 L302.6 646.8 L305.1 648.1 L307.6 655.4 L310.1 648 L312.6 651.7 L315.1 640.2 L317.6 644.4 L320.1 649.7 L322.6 645 L325.1 643.3 L327.6 648.2 L330.1 657.6 L332.6 659.9 L335 656.9 L337.5 655.7 L340 658.2 L342.5 661.2 L345 654.1 L347.5 652.8 L350 642.6 L352.5 653.6 L355 655.8 L357.5 648.4 L360 660.7 L362.5 649.5 L365 661.1 L367.5 653.3 L370 657.1 L372.5 656 L375 658.2 L377.4 657 L379.9 653.3 L382.4 649.1 L384.9 649.7 L387.4 654.2 L389.9 652.4 L392.4 656.9 L394.9 654.5 L397.4 649.4 L399.9 649.8 L402.4 653.5 L404.9 652.9 L407.4 658.9 L409.9 642.4 L412.4 641 L414.9 647.8 L417.4 649.1 L419.9 647.1 L422.4 641.2 L424.8 630.9 L427.3 630 L429.8 638.8 L432.3 645 L434.8 657.6 L437.3 642.6 L439.8 628 L442.3 637.6 L444.8 657.3 L447.3 653.8 L449.8 652.3 L452.3 649.9 L454.8 648.2 L457.3 652.1 L459.8 660.4 L462.3 655 L464.8 658.4 L467.2 648.7 L469.7 659.8 L472.2 663.6 L474.7 655.1 L477.2 658.3 L479.7 646.6 L482.2 647 L484.7 646.7 L487.2 628.6 L489.7 648.7 L492.2 640.8 L494.7 644.8 L497.2 658 L499.7 661.4 L502.2 660.4 L504.7 658.7 L507.2 647.6 L509.7 645 L512.1 642.9 L514.6 636.5 L517.1 653.5 L519.6 654.8 L522.1 657.6 L524.6 651.9 L527.1 644.1 L529.6 641.9 L532.1 637.2 L534.6 631.5 L537.1 636.7 L539.6 644.2 L542.1 639.7 L544.6 633.7 L547.1 639.2 L549.6 648.1 L552.1 637.2 L554.6 639.6 L557 649.4 L559.5 648.4 L562 642.6 L564.5 627.6 L567 622.1 L569.5 627.2 L572 623.8 L574.5 620.4 L577 625.1 L579.5 621.7 L579.5 670.5 L130.5 670.5Z" fill="#1f78c1" fill-opacity=".2" stroke="none"/>
<path d="M130.5 651.6 L133 651 L135.5 650.1 L138 656.9 L140.5 655.1 L143 654.2 L145.5 655.1 L148 653 L150.5 657.2 L152.9 666 L155.4 665.4 L157.9 666.1 L160.4 657.8 L162.9 654.7 L165.4 653.6 L167.9 659.6 L170.4 663.5 L172.9 657.2 L175.4 659.5 L177.9 651.8 L180.4 657.2 L182.9 660.3 L185.4 661.2 L187.9 658.6 L190.4 657.7 L192.9 651.1 L195.4 652.9 L197.8 653.8 L200.3 664.1 L202.8 660.1 L205.3 650.1 L207.8 649.3 L210.3 634.8 L212.8 643.3 L215.3 634.6 L217.8 635.4 L220.3 660.3 L222.8 643.7 L225.3 627.1 L227.8 631.1 L230.3 640.3 L232.8 643.2 L235.3 629.5 L237.8 638.1 L240.3 638 L242.8 624.5 L245.2 638 L247.7 633.9 L250.2 624.3 L252.7 631.2 L255.2 652.6 L257.7 634.5 L260.2 649.4 L262.7 643.5 L265.2 619.5 L267.7 593.4 L270.2 602.4 L272.7 639.2 L275.2 649 L277.7 638.8 L280.2 621.5 L282.7 637.9 L285.2 649.5 L287.6 648.7 L290.1 648.9 L292.6 648.5 L295.1 642.2 L297.6 631.8 L300.1 642.5 L302.6 646.8 L305.1 648.1 L307.6 655.4 L310.1 648 L312.6 651.7 L315.1 640.2 L317.6 644.4 L320.1 649.7 L322.6 645 L325.1 643.3 L327.6 648.2 L330.1 657.6 L332.6 659.9 L335 656.9 L337.5 655.7 L340 658.2 L342.5 661.2 L345 654.1 L347.5 652.8 L350 642.6 L352.5 653.6 L355 655.8 L357.5 648.4 L360 660.7 L362.5 649.5 L365 661.1 L367.5 653.3 L370 657.1 L372.5 656 L375 658.2 L377.4 657 L379.9 653.3 L382.4 649.1 L384.9 649.7 L387.4 654.2 L389.9 652.4 L392.4 656.9 L394.9 654.5 L397.4 649.4 L399.9 649.8 L402.4 653.5 L404.9 652.9 L407.4 658.9 L409.9 642.4 L412.4 641 L414.9 647.8 L417.4 649.1 L419.9 647.1 L422.4 641.2 L424.8 630.9 L427.3 630 L429.8 638.8 L432.3 645 L434.8 657.6 L437.3 642.6 L439.8 628 L442.3 637.6 L444.8 657.3 L447.3 653.8 L449.8 652.3 L452.3 649.9 L454.8 648.2 L457.3 652.1 L459.8 660.4 L462.3 655 L464.8 658.4 L467.2 648.7 L469.7 659.8 L472.2 663.6 L474.7 655.1 L477.2 658.3 L479.7 646.6 L482.2 647 L484.7 646.7 L487.2 628.6 L489.7 648.7 L492.2 640.8 L494.7 644.8 L497.2 658 L499.7 661.4 L502.2 660.4 L504.7 658.7 L507.2 647.6 L509.7 645 L512.1 642.9 L514.6 636.5 L517.1 653.5 L519.6 654.8 L522.1 657.6 L524.6 651.9 L527.1 644.1 L529.6 641.9 L532.1 637.2 L534.6 631.5 L537.1 636.7 L539.6 644.2 L542.1 639.7 L544.6 633.7 L547.1 639.2 L549.6 648.1 L552.1 637.2 L554.6 639.6 L557 649.4 L559.5 648.4 L562 642.6 L564.5 627.6 L567 622.1 L569.5 627.2 L572 623.8 L574.5 620.4 L577 625.1 L579.5 621.7" fill="none" stroke="#1f78c1" stroke-width="1.15"/>
<path d="M130.5 654.2 L133 648.5 L135.5 633.9 L138 647.6 L140.5 637.2 L143 650.6 L145.5 652 L148 649.5 L150.5 640 L152.9 652.3 L155.4 657.1 L157.9 659.4 L160.4 659.3 L162.9 657.9 L165.4 659.6 L167.9 645.9 L170.4 651 L172.9 657.3 L175.4 657.5 L177.9 657.3 L180.4 652.7 L182.9 655.4 L185.4 647.1 L187.9 641.4 L190.4 648.5 L192.9 656.3 L195.4 655.2 L197.8 658.5 L200.3 657.8 L202.8 659.8 L205.3 656.8 L207.8 646.6 L210.3 642.9 L212.8 647.3 L215.3 640.5 L217.8 638.9 L220.3 635.1 L222.8 636.9 L225.3 631.2 L227.8 647.5 L230.3 645.7 L232.8 640.8 L235.3 631.9 L237.8 637.5 L240.3 636.3 L242.8 625.1 L245.2 636.5 L247.7 617 L250.2 641.1 L252.7 644 L255.2 640.4 L257.7 655.1 L260.2 628.3 L262.7 644.1 L265.2 622.6 L267.7 606.8 L270.2 638.7 L272.7 639.1 L275.2 627.3 L277.7 629.3 L280.2 624.3 L282.7 631.2 L285.2 651.6 L287.6 648 L290.1 645.4 L292.6 650.5 L295.1 646 L297.6 644.5 L300.1 648.8 L302.6 647.9 L305.1 654.7 L307.6 659.2 L310.1 643 L312.6 635.8 L315.1 644.1 L317.6 657.2 L320.1 659.6 L322.6 652.6 L325.1 651.8 L327.6 650 L330.1 647.3 L332.6 633.1 L335 649.9 L337.5 646.6 L340 643.3 L342.5 653.8 L345 656.7 L347.5 658.6 L350 663.2 L352.5 660.2 L355 649.9 L357.5 653.1 L360 646.8 L362.5 646.1 L365 648.9 L367.5 653.7 L370 658.1 L372.5 655.6 L375 648.8 L377.4 652.8 L379.9 635.3 L382.4 651.4 L384.9 658.4 L387.4 657.2 L389.9 651.2 L392.4 652.1 L394.9 650 L397.4 656.4 L399.9 653.9 L402.4 655.1 L404.9 651.6 L407.4 657.1 L409.9 646.6 L412.4 634.1 L414.9 649.8 L417.4 652 L419.9 648.4 L422.4 646 L424.8 651.1 L427.3 648.5 L429.8 637.2 L432.3 635.8 L434.8 644.4 L437.3 655.4 L439.8 647.7 L442.3 648.5 L444.8 646.9 L447.3 640.6 L449.8 641.7 L452.3 639.6 L454.8 641.9 L457.3 641.5 L459.8 653.5 L462.3 656.2 L464.8 655 L467.2 653.3 L469.7 646.5 L472.2 657 L474.7 659.2 L477.2 652.4 L479.7 651.8 L482.2 652.3 L484.7 652.5 L487.2 656.1 L489.7 654.5 L492.2 653.5 L494.7 649.3 L497.2 652 L499.7 644.2 L502.2 642.4 L504.7 647.8 L507.2 632.3 L509.7 629.2 L512.1 643 L514.6 627.6 L517.1 645.6 L519.6 642.2 L522.1 636.2 L524.6 638.2 L527.1 637.8 L529.6 646.5 L532.1 635.6 L534.6 632 L537.1 637.5 L539.6 629.6 L542.1 625.5 L544.6 635.1 L547.1 647 L549.6 634.7 L552.1 624.5 L554.6 629.5 L557 639.4 L559.5 644.8 L562 654.1 L564.5 639.5 L567 646.5 L569.5 650.9 L572 655 L574.5 646.7 L577 632.1 L579.5 649.4 L579.5 670.5 L130.5 670.5Z" fill="#ba43a9" fill-opacity=".2" stroke="none"/>
<path d="M130.5 654.2 L133 648.5 L135.5 633.9 L138 647.6 L140.5 637.2 L143 650.6 L145.5 652 L148 649.5 L150.5 640 L152.9 652.3 L155.4 657.1 L157.9 659.4 L160.4 659.3 L162.9 657.9 L165.4 659.6 L167.9 645.9 L170.4 651 L172.9 657.3 L175.4 657.5 L177.9 657.3 L180.4 652.7 L182.9 655.4 L185.4 647.1 L187.9 641.4 L190.4 648.5 L192.9 656.3 L195.4 655.2 L197.8 658.5 L200.3 657.8 L202.8 659.8 L205.3 656.8 L207.8 646.6 L210.3 642.9 L212.8 647.3 L215.3 640.5 L217.8 638.9 L220.3 635.1 L222.8 636.9 L225.3 631.2 L227.8 647.5 L230.3 645.7 L232.8 640.8 L235.3 631.9 L237.8 637.5 L240.3 636.3 L242.8 625.1 L245.2 636.5 L247.7 617 L250.2 641.1 L252.7 644 L255.2 640.4 L257.7 655.1 L260.2 628.3 L262.7 644.1 L265.2 622.6 L267.7 606.8 L270.2 638.7 L272.7 639.1 L275.2 627.3 L277.7 629.3 L280.2 624.3 L282.7 631.2 L285.2 651.6 L287.6 648 L290.1 645.4 L292.6 650.5 L295.1 646 L297.6 644.5 L300.1 648.8 L302.6 647.9 L305.1 654.7 L307.6 659.2 L310.1 643 L312.6 635.8 L315.1 644.1 L317.6 657.2 L320.1 659.6 L322.6 652.6 L325.1 651.8 L327.6 650 L330.1 647.3 L332.6 633.1 L335 649.9 L337.5 646.6 L340 643.3 L342.5 653.8 L345 656.7 L347.5 658.6 L350 663.2 L352.5 660.2 L355 649.9 L357.5 653.1 L360 646.8 L362.5 646.1 L365 648.9 L367.5 653.7 L370 658.1 L372.5 655.6 L375 648.8 L377.4 652.8 L379.9 635.3 L382.4 651.4 L384.9 658.4 L387.4 657.2 L389.9 651.2 L392.4 652.1 L394.9 650 L397.4 656.4 L399.9 653.9 L402.4 655.1 L404.9 651.6 L407.4 657.1 L409.9 646.6 L412.4 634.1 L414.9 649.8 L417.4 652 L419.9 648.4 L422.4 646 L424.8 651.1 L427.3 648.5 L429.8 637.2 L432.3 635.8 L434.8 644.4 L437.3 655.4 L439.8 647.7 L442.3 648.5 L444.8 646.9 L447.3 640.6 L449.8 641.7 L452.3 639.6 L454.8 641.9 L457.3 641.5 L459.8 653.5 L462.3 656.2 L464.8 655 L467.2 653.3 L469.7 646.5 L472.2 657 L474.7 659.2 L477.2 652.4 L479.7 651.8 L482.2 652.3 L484.7 652.5 L487.2 656.1 L489.7 654.5 L492.2 653.5 L494.7 649.3 L497.2 652 L499.7 644.2 L502.2 642.4 L504.7 647.8 L507.2 632.3 L509.7 629.2 L512.1 643 L514.6 627.6 L517.1 645.6 L519.6 642.2 L522.1 636.2 L524.6 638.2 L527.1 637.8 L529.6 646.5 L532.1 635.6 L534.6 632 L537.1 637.5 L539.6 629.6 L542.1 625.5 L544.6 635.1 L547.1 647 L549.6 634.7 L552.1 624.5 L554.6 629.5 L557 639.4 L559.5 644.8 L562 654.1 L564.5 639.5 L567 646.5 L569.5 650.9 L572 655 L574.5 646.7 L577 632.1 L579.5 649.4" fill="none" stroke="#ba43a9" stroke-width="1.15"/>
<path d="M130.5 661 L133 658.6 L135.5 657.6 L138 651.2 L140.5 646.5 L143 655.4 L145.5 656.1 L148 658.1 L150.5 660 L152.9 660.9 L155.4 662.2 L157.9 653.5 L160.4 638.3 L162.9 648.7 L165.4 660.2 L167.9 649.2 L170.4 636.2 L172.9 651.6 L175.4 659.3 L177.9 661.2 L180.4 660.8 L182.9 664 L185.4 666.5 L187.9 666.8 L190.4 662.6 L192.9 666 L195.4 662 L197.8 664.8 L200.3 663.8 L202.8 661.5 L205.3 652.9 L207.8 645.6 L210.3 632.9 L212.8 631.7 L215.3 647.9 L217.8 654.6 L220.3 649 L222.8 648.7 L225.3 648.2 L227.8 640.2 L230.3 655.4 L232.8 639.2 L235.3 620 L237.8 642.7 L240.3 609.4 L242.8 652.2 L245.2 657 L247.7 647.8 L250.2 656.1 L252.7 659.4 L255.2 660.1 L257.7 660.3 L260.2 660.1 L262.7 650.1 L265.2 648.6 L267.7 661.8 L270.2 653 L272.7 652.9 L275.2 627.3 L277.7 617.7 L280.2 631.4 L282.7 647.4 L285.2 655.8 L287.6 649.1 L290.1 657.6 L292.6 659.4 L295.1 659.5 L297.6 657.7 L300.1 661.3 L302.6 665.6 L305.1 663.6 L307.6 655 L310.1 654.6 L312.6 656 L315.1 660.1 L317.6 657.9 L320.1 656.3 L322.6 661.1 L325.1 658.6 L327.6 664.7 L330.1 661.4 L332.6 655.7 L335 657.9 L337.5 661 L340 661.3 L342.5 659 L345 657.5 L347.5 660.3 L350 664.2 L352.5 669 L355 663.9 L357.5 660.6 L360 653.8 L362.5 656.9 L365 655.5 L367.5 658 L370 658.2 L372.5 648.2 L375 648.9 L377.4 660.8 L379.9 669 L382.4 664.5 L384.9 662.3 L387.4 652.8 L389.9 658.5 L392.4 664.2 L394.9 659.7 L397.4 656.5 L399.9 654.2 L402.4 657.4 L404.9 659.1 L407.4 659.6 L409.9 658.3 L412.4 661.7 L414.9 655 L417.4 654.7 L419.9 649.3 L422.4 652 L424.8 646.4 L427.3 648.3 L429.8 660.1 L432.3 658.5 L434.8 663.5 L437.3 655.8 L439.8 651.7 L442.3 651.7 L444.8 656.1 L447.3 658.8 L449.8 652.2 L452.3 651.7 L454.8 658.6 L457.3 654.9 L459.8 638.5 L462.3 644 L464.8 652.9 L467.2 656.4 L469.7 656.3 L472.2 660.5 L474.7 652.3 L477.2 653.4 L479.7 653 L482.2 659.7 L484.7 662.9 L487.2 660.7 L489.7 652.3 L492.2 639.4 L494.7 656.5 L497.2 653 L499.7 650.6 L502.2 651 L504.7 643.2 L507.2 645.3 L509.7 648.4 L512.1 633.9 L514.6 639.2 L517.1 647.3 L519.6 648.6 L522.1 650.9 L524.6 654.2 L527.1 649.9 L529.6 658.1 L532.1 661.1 L534.6 663.6 L537.1 659.2 L539.6 658.2 L542.1 645.9 L544.6 651.7 L547.1 654.8 L549.6 645.9 L552.1 647.6 L554.6 657.5 L557 656.8 L559.5 651.4 L562 634.4 L564.5 628.5 L567 649.3 L569.5 655.1 L572 649.6 L574.5 642.6 L577 653.3 L579.5 653.2 L579.5 670.5 L130.5 670.5Z" fill="#705da0" fill-opacity=".2" stroke="none"/>
<path d="M130.5 661 L133 658.6 L135.5 657.6 L138 651.2 L140.5 646.5 L143 655.4 L145.5 656.1 L148 658.1 L150.5 660 L152.9 660.9 L155.4 662.2 L157.9 653.5 L160.4 638.3 L162.9 648.7 L165.4 660.2 L167.9 649.2 L170.4 636.2 L172.9 651.6 L175.4 659.3 L177.9 661.2 L180.4 660.8 L182.9 664 L185.4 666.5 L187.9 666.8 L190.4 662.6 L192.9 666 L195.4 662 L197.8 664.8 L200.3 663.8 L202.8 661.5 L205.3 652.9 L207.8 645.6 L210.3 632.9 L212.8 631.7 L215.3 647.9 L217.8 654.6 L220.3 649 L222.8 648.7 L225.3 648.2 L227.8 640.2 L230.3 655.4 L232.8 639.2 L235.3 620 L237.8 642.7 L240.3 609.4 L242.8 652.2 L245.2 657 L247.7 647.8 L250.2 656.1 L252.7 659.4 L255.2 660.1 L257.7 660.3 L260.2 660.1 L262.7 650.1 L265.2 648.6 L267.7 661.8 L270.2 653 L272.7 652.9 L275.2 627.3 L277.7 617.7 L280.2 631.4 L282.7 647.4 L285.2 655.8 L287.6 649.1 L290.1 657.6 L292.6 659.4 L295.1 659.5 L297.6 657.7 L300.1 661.3 L302.6 665.6 L305.1 663.6 L307.6 655 L310.1 654.6 L312.6 656 L315.1 660.1 L317.6 657.9 L320.1 656.3 L322.6 661.1 L325.1 658.6 L327.6 664.7 L330.1 661.4 L332.6 655.7 L335 657.9 L337.5 661 L340 661.3 L342.5 659 L345 657.5 L347.5 660.3 L350 664.2 L352.5 669 L355 663.9 L357.5 660.6 L360 653.8 L362.5 656.9 L365 655.5 L367.5 658 L370 658.2 L372.5 648.2 L375 648.9 L377.4 660.8 L379.9 669 L382.4 664.5 L384.9 662.3 L387.4 652.8 L389.9 658.5 L392.4 664.2 L394.9 659.7 L397.4 656.5 L399.9 654.2 L402.4 657.4 L404.9 659.1 L407.4 659.6 L409.9 658.3 L412.4 661.7 L414.9 655 L417.4 654.7 L419.9 649.3 L422.4 652 L424.8 646.4 L427.3 648.3 L429.8 660.1 L432.3 658.5 L434.8 663.5 L437.3 655.8 L439.8 651.7 L442.3 651.7 L444.8 656.1 L447.3 658.8 L449.8 652.2 L452.3 651.7 L454.8 658.6 L457.3 654.9 L459.8 638.5 L462.3 644 L464.8 652.9 L467.2 656.4 L469.7 656.3 L472.2 660.5 L474.7 652.3 L477.2 653.4 L479.7 653 L482.2 659.7 L484.7 662.9 L487.2 660.7 L489.7 652.3 L492.2 639.4 L494.7 656.5 L497.2 653 L499.7 650.6 L502.2 651 L504.7 643.2 L507.2 645.3 L509.7 648.4 L512.1 633.9 L514.6 639.2 L517.1 647.3 L519.6 648.6 L522.1 650.9 L524.6 654.2 L527.1 649.9 L529.6 658.1 L532.1 661.1 L534.6 663.6 L537.1 659.2 L539.6 658.2 L542.1 645.9 L544.6 651.7 L547.1 654.8 L549.6 645.9 L552.1 647.6 L554.6 657.5 L557 656.8 L559.5 651.4 L562 634.4 L564.5 628.5 L567 649.3 L569.5 655.1 L572 649.6 L574.5 642.6 L577 653.3 L579.5 653.2" fill="none" stroke="#705da0" stroke-width="1.15"/>
<path d="M130.5 662.6 L133 663 L135.5 662.5 L138 663.6 L140.5 662.5 L143 658.7 L145.5 657.2 L148 655.2 L150.5 660.2 L152.9 656.5 L155.4 660.8 L157.9 657.4 L160.4 657.8 L162.9 662.7 L165.4 664.6 L167.9 657.5 L170.4 656.4 L172.9 661.4 L175.4 661.8 L177.9 657.4 L180.4 660.6 L182.9 665.8 L185.4 663.7 L187.9 660.1 L190.4 663.2 L192.9 659.7 L195.4 659.1 L197.8 655.9 L200.3 660.4 L202.8 656 L205.3 659.9 L207.8 656.3 L210.3 647.8 L212.8 643.5 L215.3 645.4 L217.8 645.4 L220.3 643.4 L222.8 639.6 L225.3 642.6 L227.8 651.7 L230.3 651.3 L232.8 660.1 L235.3 657.2 L237.8 636.9 L240.3 633.7 L242.8 632 L245.2 633.2 L247.7 643.2 L250.2 638.5 L252.7 643.1 L255.2 632.3 L257.7 611.5 L260.2 614.2 L262.7 610.5 L265.2 633.3 L267.7 630.3 L270.2 619.6 L272.7 641.2 L275.2 637.5 L277.7 631.4 L280.2 629.7 L282.7 646.1 L285.2 660.4 L287.6 653.3 L290.1 657.7 L292.6 651.5 L295.1 656.8 L297.6 655.9 L300.1 658.3 L302.6 656.4 L305.1 656.5 L307.6 653.2 L310.1 650.1 L312.6 656.5 L315.1 655.9 L317.6 651.5 L320.1 653.4 L322.6 660.4 L325.1 659.6 L327.6 662.9 L330.1 659.7 L332.6 655.7 L335 659.4 L337.5 661.4 L340 662 L342.5 660.7 L345 664.6 L347.5 660.9 L350 652.6 L352.5 655.3 L355 655.3 L357.5 655.8 L360 652.6 L362.5 660 L365 660 L367.5 659.1 L370 649.1 L372.5 638.1 L375 640.1 L377.4 656 L379.9 665.3 L382.4 657.3 L384.9 658.3 L387.4 655.3 L389.9 657 L392.4 655.1 L394.9 656.7 L397.4 652 L399.9 647.3 L402.4 658.8 L404.9 660.9 L407.4 654.3 L409.9 648.1 L412.4 649.9 L414.9 642 L417.4 643.6 L419.9 642.8 L422.4 651.6 L424.8 650.7 L427.3 635.9 L429.8 646.8 L432.3 648.2 L434.8 655 L437.3 648.9 L439.8 647.7 L442.3 645.2 L444.8 646.9 L447.3 656.4 L449.8 651.6 L452.3 654.3 L454.8 645.4 L457.3 652.7 L459.8 653.4 L462.3 644.6 L464.8 648.4 L467.2 647.1 L469.7 644.5 L472.2 638.6 L474.7 650.5 L477.2 651.1 L479.7 652.9 L482.2 658.7 L484.7 653.8 L487.2 650.3 L489.7 658.4 L492.2 660.1 L494.7 654 L497.2 651.6 L499.7 653.9 L502.2 642.5 L504.7 630.5 L507.2 640.9 L509.7 642.7 L512.1 634.7 L514.6 642.7 L517.1 655.2 L519.6 649.9 L522.1 648.2 L524.6 648.9 L527.1 651.5 L529.6 653.8 L532.1 654.3 L534.6 654.6 L537.1 654.3 L539.6 661.6 L542.1 666.7 L544.6 660.2 L547.1 656.3 L549.6 646.6 L552.1 653 L554.6 664.2 L557 650.1 L559.5 643.9 L562 650.9 L564.5 647.4 L567 653.1 L569.5 654.1 L572 641.9 L574.5 643 L577 648.8 L579.5 646.8 L579.5 670.5 L130.5 670.5Z" fill="#508642" fill-opacity=".2" stroke="none"/>
<path d="M130.5 662.6 L133 663 L135.5 662.5 L138 663.6 L140.5 662.5 L143 658.7 L145.5 657.2 L148 655.2 L150.5 660.2 L152.9 656.5 L155.4 660.8 L157.9 657.4 L160.4 657.8 L162.9 662.7 L165.4 664.6 L167.9 657.5 L170.4 656.4 L172.9 661.4 L175.4 661.8 L177.9 657.4 L180.4 660.6 L182.9 665.8 L185.4 663.7 L187.9 660.1 L190.4 663.2 L192.9 659.7 L195.4 659.1 L197.8 655.9 L200.3 660.4 L202.8 656 L205.3 659.9 L207.8 656.3 L210.3 647.8 L212.8 643.5 L215.3 645.4 L217.8 645.4 L220.3 643.4 L222.8 639.6 L225.3 642.6 L227.8 651.7 L230.3 651.3 L232.8 660.1 L235.3 657.2 L237.8 636.9 L240.3 633.7 L242.8 632 L245.2 633.2 L247.7 643.2 L250.2 638.5 L252.7 643.1 L255.2 632.3 L257.7 611.5 L260.2 614.2 L262.7 610.5 L265.2 633.3 L267.7 630.3 L270.2 619.6 L272.7 641.2 L275.2 637.5 L277.7 631.4 L280.2 629.7 L282.7 646.1 L285.2 660.4 L287.6 653.3 L290.1 657.7 L292.6 651.5 L295.1 656.8 L297.6 655.9 L300.1 658.3 L302.6 656.4 L305.1 656.5 L307.6 653.2 L310.1 650.1 L312.6 656.5 L315.1 655.9 L317.6 651.5 L320.1 653.4 L322.6 660.4 L325.1 659.6 L327.6 662.9 L330.1 659.7 L332.6 655.7 L335 659.4 L337.5 661.4 L340 662 L342.5 660.7 L345 664.6 L347.5 660.9 L350 652.6 L352.5 655.3 L355 655.3 L357.5 655.8 L360 652.6 L362.5 660 L365 660 L367.5 659.1 L370 649.1 L372.5 638.1 L375 640.1 L377.4 656 L379.9 665.3 L382.4 657.3 L384.9 658.3 L387.4 655.3 L389.9 657 L392.4 655.1 L394.9 656.7 L397.4 652 L399.9 647.3 L402.4 658.8 L404.9 660.9 L407.4 654.3 L409.9 648.1 L412.4 649.9 L414.9 642 L417.4 643.6 L419.9 642.8 L422.4 651.6 L424.8 650.7 L427.3 635.9 L429.8 646.8 L432.3 648.2 L434.8 655 L437.3 648.9 L439.8 647.7 L442.3 645.2 L444.8 646.9 L447.3 656.4 L449.8 651.6 L452.3 654.3 L454.8 645.4 L457.3 652.7 L459.8 653.4 L462.3 644.6 L464.8 648.4 L467.2 647.1 L469.7 644.5 L472.2 638.6 L474.7 650.5 L477.2 651.1 L479.7 652.9 L482.2 658.7 L484.7 653.8 L487.2 650.3 L489.7 658.4 L492.2 660.1 L494.7 654 L497.2 651.6 L499.7 653.9 L502.2 642.5 L504.7 630.5 L507.2 640.9 L509.7 642.7 L512.1 634.7 L514.6 642.7 L517.1 655.2 L519.6 649.9 L522.1 648.2 L524.6 648.9 L527.1 651.5 L529.6 653.8 L532.1 654.3 L534.6 654.6 L537.1 654.3 L539.6 661.6 L542.1 666.7 L544.6 660.2 L547.1 656.3 L549.6 646.6 L552.1 653 L554.6 664.2 L557 650.1 L559.5 643.9 L562 650.9 L564.5 647.4 L567 653.1 L569.5 654.1 L572 641.9 L574.5 643 L577 648.8 L579.5 646.8" fill="none" stroke="#508642" stroke-width="1.15"/>
<path d="M130.5 657 L133 656.7 L135.5 654.3 L138 656.5 L140.5 660.4 L143 653.7 L145.5 659.2 L148 656.2 L150.5 657.4 L152.9 657.6 L155.4 651.4 L157.9 649.8 L160.4 642 L162.9 652 L165.4 661 L167.9 656.2 L170.4 663.4 L172.9 666.8 L175.4 660.9 L177.9 652 L180.4 658 L182.9 657.2 L185.4 649.8 L187.9 652.2 L190.4 655.7 L192.9 659.7 L195.4 658.9 L197.8 660.5 L200.3 653.2 L202.8 650.2 L205.3 621.5 L207.8 625.7 L210.3 631.4 L212.8 631.7 L215.3 636.9 L217.8 657.5 L220.3 660.5 L222.8 639.9 L225.3 639.4 L227.8 645.2 L230.3 635.6 L232.8 635 L235.3 637.2 L237.8 642.9 L240.3 620.2 L242.8 633.3 L245.2 623.2 L247.7 639.3 L250.2 645.4 L252.7 636.5 L255.2 641.6 L257.7 648.1 L260.2 655.7 L262.7 630.1 L265.2 621.3 L267.7 625.2 L270.2 629.2 L272.7 614.5 L275.2 626.7 L277.7 631.5 L280.2 640 L282.7 648.8 L285.2 659.4 L287.6 649.3 L290.1 649.5 L292.6 647.5 L295.1 650.2 L297.6 644.8 L300.1 644.4 L302.6 657.8 L305.1 652.5 L307.6 659.5 L310.1 650.1 L312.6 655 L315.1 649.1 L317.6 649 L320.1 657.3 L322.6 654.5 L325.1 653.1 L327.6 658.8 L330.1 664.5 L332.6 656.7 L335 656.2 L337.5 657.7 L340 656.7 L342.5 660.7 L345 660.7 L347.5 652.8 L350 657.2 L352.5 659.4 L355 656.4 L357.5 653.7 L360 653.5 L362.5 667.2 L365 661.3 L367.5 658.3 L370 657.2 L372.5 657.2 L375 654 L377.4 656.2 L379.9 655 L382.4 645.2 L384.9 641.6 L387.4 645.7 L389.9 649.9 L392.4 646.5 L394.9 641.3 L397.4 646.1 L399.9 653.4 L402.4 641.8 L404.9 646.4 L407.4 649.4 L409.9 661.3 L412.4 654.1 L414.9 661.1 L417.4 655.7 L419.9 637.8 L422.4 634 L424.8 634.6 L427.3 623 L429.8 630.7 L432.3 640.9 L434.8 642.7 L437.3 646.7 L439.8 644.8 L442.3 647 L444.8 647.9 L447.3 635.9 L449.8 652.9 L452.3 649.2 L454.8 655.7 L457.3 650.4 L459.8 640.7 L462.3 645.2 L464.8 643.7 L467.2 644.4 L469.7 653.6 L472.2 642.7 L474.7 643.7 L477.2 645.8 L479.7 651.4 L482.2 645.1 L484.7 650 L487.2 643.3 L489.7 637.1 L492.2 642.8 L494.7 648.2 L497.2 640.9 L499.7 647.3 L502.2 646.3 L504.7 645.7 L507.2 639.8 L509.7 638.9 L512.1 628.4 L514.6 647.2 L517.1 644.4 L519.6 648.2 L522.1 647.7 L524.6 639.1 L527.1 649.2 L529.6 657.9 L532.1 656.8 L534.6 648.4 L537.1 644.5 L539.6 644.8 L542.1 655.4 L544.6 641.2 L547.1 649.5 L549.6 664.6 L552.1 663.6 L554.6 658.8 L557 644.9 L559.5 653.9 L562 648.8 L564.5 648.7 L567 638.1 L569.5 657.8 L572 649.3 L574.5 648.3 L577 646.7 L579.5 650.2 L579.5 670.5 L130.5 670.5Z" fill="#cca300" fill-opacity=".2" stroke="none"/>
<path d="M130.5 657 L133 656.7 L135.5 654.3 L138 656.5 L140.5 660.4 L143 653.7 L145.5 659.2 L148 656.2 L150.5 657.4 L152.9 657.6 L155.4 651.4 L157.9 649.8 L160.4 642 L162.9 652 L165.4 661 L167.9 656.2 L170.4 663.4 L172.9 666.8 L175.4 660.9 L177.9 652 L180.4 658 L182.9 657.2 L185.4 649.8 L187.9 652.2 L190.4 655.7 L192.9 659.7 L195.4 658.9 L197.8 660.5 L200.3 653.2 L202.8 650.2 L205.3 621.5 L207.8 625.7 L210.3 631.4 L212.8 631.7 L215.3 636.9 L217.8 657.5 L220.3 660.5 L222.8 639.9 L225.3 639.4 L227.8 645.2 L230.3 635.6 L232.8 635 L235.3 637.2 L237.8 642.9 L240.3 620.2 L242.8 633.3 L245.2 623.2 L247.7 639.3 L250.2 645.4 L252.7 636.5 L255.2 641.6 L257.7 648.1 L260.2 655.7 L262.7 630.1 L265.2 621.3 L267.7 625.2 L270.2 629.2 L272.7 614.5 L275.2 626.7 L277.7 631.5 L280.2 640 L282.7 648.8 L285.2 659.4 L287.6 649.3 L290.1 649.5 L292.6 647.5 L295.1 650.2 L297.6 644.8 L300.1 644.4 L302.6 657.8 L305.1 652.5 L307.6 659.5 L310.1 650.1 L312.6 655 L315.1 649.1 L317.6 649 L320.1 657.3 L322.6 654.5 L325.1 653.1 L327.6 658.8 L330.1 664.5 L332.6 656.7 L335 656.2 L337.5 657.7 L340 656.7 L342.5 660.7 L345 660.7 L347.5 652.8 L350 657.2 L352.5 659.4 L355 656.4 L357.5 653.7 L360 653.5 L362.5 667.2 L365 661.3 L367.5 658.3 L370 657.2 L372.5 657.2 L375 654 L377.4 656.2 L379.9 655 L382.4 645.2 L384.9 641.6 L387.4 645.7 L389.9 649.9 L392.4 646.5 L394.9 641.3 L397.4 646.1 L399.9 653.4 L402.4 641.8 L404.9 646.4 L407.4 649.4 L409.9 661.3 L412.4 654.1 L414.9 661.1 L417.4 655.7 L419.9 637.8 L422.4 634 L424.8 634.6 L427.3 623 L429.8 630.7 L432.3 640.9 L434.8 642.7 L437.3 646.7 L439.8 644.8 L442.3 647 L444.8 647.9 L447.3 635.9 L449.8 652.9 L452.3 649.2 L454.8 655.7 L457.3 650.4 L459.8 640.7 L462.3 645.2 L464.8 643.7 L467.2 644.4 L469.7 653.6 L472.2 642.7 L474.7 643.7 L477.2 645.8 L479.7 651.4 L482.2 645.1 L484.7 650 L487.2 643.3 L489.7 637.1 L492.2 642.8 L494.7 648.2 L497.2 640.9 L499.7 647.3 L502.2 646.3 L504.7 645.7 L507.2 639.8 L509.7 638.9 L512.1 628.4 L514.6 647.2 L517.1 644.4 L519.6 648.2 L522.1 647.7 L524.6 639.1 L527.1 649.2 L529.6 657.9 L532.1 656.8 L534.6 648.4 L537.1 644.5 L539.6 644.8 L542.1 655.4 L544.6 641.2 L547.1 649.5 L549.6 664.6 L552.1 663.6 L554.6 658.8 L557 644.9 L559.5 653.9 L562 648.8 L564.5 648.7 L567 638.1 L569.5 657.8 L572 649.3 L574.5 648.3 L577 646.7 L579.5 650.2" fill="none" stroke="#cca300" stroke-width="1.15"/>
<path d="M130.5 650.9 L133 644.3 L135.5 655.6 L138 660.4 L140.5 658.1 L143 661.3 L145.5 662.4 L148 658 L150.5 657.5 L152.9 658.9 L155.4 661.8 L157.9 663.7 L160.4 665 L162.9 663.7 L165.4 660.5 L167.9 659.5 L170.4 662.7 L172.9 664.4 L175.4 659.8 L177.9 660.9 L180.4 661.4 L182.9 664.7 L185.4 665.6 L187.9 663.9 L190.4 660.1 L192.9 662.9 L195.4 662.1 L197.8 660.5 L200.3 664.5 L202.8 661.4 L205.3 649.1 L207.8 648.1 L210.3 637.3 L212.8 638.9 L215.3 642.5 L217.8 640.5 L220.3 644.9 L222.8 649.6 L225.3 643.2 L227.8 659.1 L230.3 661.2 L232.8 661.4 L235.3 648.9 L237.8 646.7 L240.3 634.7 L242.8 644.7 L245.2 646.7 L247.7 647.8 L250.2 652.6 L252.7 652.2 L255.2 639.3 L257.7 637.7 L260.2 628.3 L262.7 639.7 L265.2 621.5 L267.7 635.8 L270.2 642.2 L272.7 645.5 L275.2 632.9 L277.7 624.2 L280.2 623.9 L282.7 645.8 L285.2 658.7 L287.6 659 L290.1 656.4 L292.6 648.1 L295.1 655 L297.6 658.4 L300.1 659.9 L302.6 663.6 L305.1 650.3 L307.6 638.1 L310.1 635.5 L312.6 646.6 L315.1 656.2 L317.6 652.3 L320.1 661.5 L322.6 663.3 L325.1 662 L327.6 659.5 L330.1 658.8 L332.6 655.7 L335 656.6 L337.5 659.5 L340 653.7 L342.5 657.3 L345 654.6 L347.5 658.4 L350 660.7 L352.5 658.2 L355 654.7 L357.5 644.1 L360 639.4 L362.5 642.6 L365 652.5 L367.5 657.9 L370 655.3 L372.5 658.1 L375 661.4 L377.4 661.7 L379.9 662.6 L382.4 659.9 L384.9 657.1 L387.4 653.1 L389.9 657.5 L392.4 655.2 L394.9 657.2 L397.4 648.1 L399.9 653.7 L402.4 657.6 L404.9 650.5 L407.4 632 L409.9 652.2 L412.4 655.9 L414.9 656.9 L417.4 657.1 L419.9 652.1 L422.4 649.8 L424.8 641.3 L427.3 632.4 L429.8 648.6 L432.3 631.7 L434.8 636.5 L437.3 648.9 L439.8 655.7 L442.3 651.5 L444.8 657.6 L447.3 651.1 L449.8 653.1 L452.3 656.8 L454.8 662.2 L457.3 657.1 L459.8 652.7 L462.3 652.6 L464.8 655.5 L467.2 659.1 L469.7 650 L472.2 642.4 L474.7 651.6 L477.2 654.7 L479.7 660.6 L482.2 661 L484.7 660.6 L487.2 656.8 L489.7 649.1 L492.2 652.3 L494.7 660.4 L497.2 646.5 L499.7 651.5 L502.2 655.7 L504.7 652.9 L507.2 659.6 L509.7 643.1 L512.1 648.1 L514.6 645.1 L517.1 640.1 L519.6 642.6 L522.1 655.4 L524.6 657.2 L527.1 643.1 L529.6 645 L532.1 650.7 L534.6 657.4 L537.1 648.8 L539.6 631.8 L542.1 641.5 L544.6 650.2 L547.1 644.3 L549.6 637.9 L552.1 646.1 L554.6 638.2 L557 633.5 L559.5 634.4 L562 640.4 L564.5 635.6 L567 645.6 L569.5 648.6 L572 649.5 L574.5 644.9 L577 644 L579.5 647.6 L579.5 670.5 L130.5 670.5Z" fill="#447ebc" fill-opacity=".2" stroke="none"/>
<path d="M130.5 650.9 L133 644.3 L135.5 655.6 L138 660.4 L140.5 658.1 L143 661.3 L145.5 662.4 L148 658 L150.5 657.5 L152.9 658.9 L155.4 661.8 L157.9 663.7 L160.4 665 L162.9 663.7 L165.4 660.5 L167.9 659.5 L170.4 662.7 L172.9 664.4 L175.4 659.8 L177.9 660.9 L180.4 661.4 L182.9 664.7 L185.4 665.6 L187.9 663.9 L190.4 660.1 L192.9 662.9 L195.4 662.1 L197.8 660.5 L200.3 664.5 L202.8 661.4 L205.3 649.1 L207.8 648.1 L210.3 637.3 L212.8 638.9 L215.3 642.5 L217.8 640.5 L220.3 644.9 L222.8 649.6 L225.3 643.2 L227.8 659.1 L230.3 661.2 L232.8 661.4 L235.3 648.9 L237.8 646.7 L240.3 634.7 L242.8 644.7 L245.2 646.7 L247.7 647.8 L250.2 652.6 L252.7 652.2 L255.2 639.3 L257.7 637.7 L260.2 628.3 L262.7 639.7 L265.2 621.5 L267.7 635.8 L270.2 642.2 L272.7 645.5 L275.2 632.9 L277.7 624.2 L280.2 623.9 L282.7 645.8 L285.2 658.7 L287.6 659 L290.1 656.4 L292.6 648.1 L295.1 655 L297.6 658.4 L300.1 659.9 L302.6 663.6 L305.1 650.3 L307.6 638.1 L310.1 635.5 L312.6 646.6 L315.1 656.2 L317.6 652.3 L320.1 661.5 L322.6 663.3 L325.1 662 L327.6 659.5 L330.1 658.8 L332.6 655.7 L335 656.6 L337.5 659.5 L340 653.7 L342.5 657.3 L345 654.6 L347.5 658.4 L350 660.7 L352.5 658.2 L355 654.7 L357.5 644.1 L360 639.4 L362.5 642.6 L365 652.5 L367.5 657.9 L370 655.3 L372.5 658.1 L375 661.4 L377.4 661.7 L379.9 662.6 L382.4 659.9 L384.9 657.1 L387.4 653.1 L389.9 657.5 L392.4 655.2 L394.9 657.2 L397.4 648.1 L399.9 653.7 L402.4 657.6 L404.9 650.5 L407.4 632 L409.9 652.2 L412.4 655.9 L414.9 656.9 L417.4 657.1 L419.9 652.1 L422.4 649.8 L424.8 641.3 L427.3 632.4 L429.8 648.6 L432.3 631.7 L434.8 636.5 L437.3 648.9 L439.8 655.7 L442.3 651.5 L444.8 657.6 L447.3 651.1 L449.8 653.1 L452.3 656.8 L454.8 662.2 L457.3 657.1 L459.8 652.7 L462.3 652.6 L464.8 655.5 L467.2 659.1 L469.7 650 L472.2 642.4 L474.7 651.6 L477.2 654.7 L479.7 660.6 L482.2 661 L484.7 660.6 L487.2 656.8 L489.7 649.1 L492.2 652.3 L494.7 660.4 L497.2 646.5 L499.7 651.5 L502.2 655.7 L504.7 652.9 L507.2 659.6 L509.7 643.1 L512.1 648.1 L514.6 645.1 L517.1 640.1 L519.6 642.6 L522.1 655.4 L524.6 657.2 L527.1 643.1 L529.6 645 L532.1 650.7 L534.6 657.4 L537.1 648.8 L539.6 631.8 L542.1 641.5 L544.6 650.2 L547.1 644.3 L549.6 637.9 L552.1 646.1 L554.6 638.2 L557 633.5 L559.5 634.4 L562 640.4 L564.5 635.6 L567 645.6 L569.5 648.6 L572 649.5 L574.5 644.9 L577 644 L579.5 647.6" fill="none" stroke="#447ebc" stroke-width="1.15"/>
<path d="M130.5 651 L133 647.9 L135.5 654.9 L138 655.2 L140.5 658.7 L143 654.4 L145.5 653.4 L148 645.1 L150.5 647.8 L152.9 661 L155.4 646.2 L157.9 637.9 L160.4 651.2 L162.9 655.5 L165.4 653.7 L167.9 657.4 L170.4 658.7 L172.9 661.1 L175.4 661.7 L177.9 657.1 L180.4 662.7 L182.9 659.2 L185.4 655.4 L187.9 655.3 L190.4 662.2 L192.9 658 L195.4 662.1 L197.8 656.4 L200.3 667.2 L202.8 656.1 L205.3 641.1 L207.8 636.3 L210.3 618.1 L212.8 632.5 L215.3 625.6 L217.8 647 L220.3 636.2 L222.8 640.1 L225.3 628.6 L227.8 632.6 L230.3 642.8 L232.8 645.1 L235.3 639.1 L237.8 645.2 L240.3 627.7 L242.8 624.6 L245.2 641.1 L247.7 643.1 L250.2 635.6 L252.7 630.6 L255.2 638.7 L257.7 634.9 L260.2 629.5 L262.7 626 L265.2 607.2 L267.7 589.5 L270.2 610.3 L272.7 623.3 L275.2 635.1 L277.7 626.4 L280.2 628 L282.7 633.8 L285.2 648.6 L287.6 647.9 L290.1 649.5 L292.6 656.4 L295.1 643.3 L297.6 649.5 L300.1 651.6 L302.6 653 L305.1 655 L307.6 643.1 L310.1 638 L312.6 637.8 L315.1 651.6 L317.6 630.9 L320.1 638.3 L322.6 653.5 L325.1 656 L327.6 654.4 L330.1 656.5 L332.6 654.7 L335 645 L337.5 647.3 L340 649.7 L342.5 657.1 L345 656.7 L347.5 650.3 L350 644.3 L352.5 644.5 L355 651.1 L357.5 658.8 L360 655.5 L362.5 654.7 L365 658 L367.5 657.8 L370 659.3 L372.5 661.2 L375 656.1 L377.4 655.6 L379.9 650.6 L382.4 645.5 L384.9 649.2 L387.4 655.2 L389.9 649 L392.4 655.9 L394.9 654 L397.4 652.5 L399.9 636.3 L402.4 627.4 L404.9 638.1 L407.4 654.9 L409.9 653.2 L412.4 651.5 L414.9 653.5 L417.4 648.2 L419.9 645.9 L422.4 634.3 L424.8 636 L427.3 632 L429.8 620 L432.3 634.2 L434.8 651 L437.3 661.7 L439.8 653.3 L442.3 644.8 L444.8 650.3 L447.3 648.9 L449.8 649.6 L452.3 649.7 L454.8 648.4 L457.3 645.2 L459.8 650.3 L462.3 649.6 L464.8 650.2 L467.2 650.5 L469.7 658.8 L472.2 663 L474.7 651.7 L477.2 650.9 L479.7 653.1 L482.2 649.9 L484.7 638.3 L487.2 631.4 L489.7 637.2 L492.2 650.3 L494.7 648.7 L497.2 648.3 L499.7 644.8 L502.2 657.1 L504.7 656.7 L507.2 653.3 L509.7 648.7 L512.1 634.6 L514.6 632.6 L517.1 656.9 L519.6 644.9 L522.1 649.9 L524.6 647.3 L527.1 648.3 L529.6 645.6 L532.1 642.2 L534.6 641.1 L537.1 650.5 L539.6 647 L542.1 633.2 L544.6 644.3 L547.1 657.5 L549.6 648.8 L552.1 649.8 L554.6 645.5 L557 635.9 L559.5 641.9 L562 657.2 L564.5 654.1 L567 642.3 L569.5 634.8 L572 637.9 L574.5 637.6 L577 656.7 L579.5 656.7 L579.5 670.5 L130.5 670.5Z" fill="#c15c17" fill-opacity=".2" stroke="none"/>
<path d="M130.5 651 L133 647.9 L135.5 654.9 L138 655.2 L140.5 658.7 L143 654.4 L145.5 653.4 L148 645.1 L150.5 647.8 L152.9 661 L155.4 646.2 L157.9 637.9 L160.4 651.2 L162.9 655.5 L165.4 653.7 L167.9 657.4 L170.4 658.7 L172.9 661.1 L175.4 661.7 L177.9 657.1 L180.4 662.7 L182.9 659.2 L185.4 655.4 L187.9 655.3 L190.4 662.2 L192.9 658 L195.4 662.1 L197.8 656.4 L200.3 667.2 L202.8 656.1 L205.3 641.1 L207.8 636.3 L210.3 618.1 L212.8 632.5 L215.3 625.6 L217.8 647 L220.3 636.2 L222.8 640.1 L225.3 628.6 L227.8 632.6 L230.3 642.8 L232.8 645.1 L235.3 639.1 L237.8 645.2 L240.3 627.7 L242.8 624.6 L245.2 641.1 L247.7 643.1 L250.2 635.6 L252.7 630.6 L255.2 638.7 L257.7 634.9 L260.2 629.5 L262.7 626 L265.2 607.2 L267.7 589.5 L270.2 610.3 L272.7 623.3 L275.2 635.1 L277.7 626.4 L280.2 628 L282.7 633.8 L285.2 648.6 L287.6 647.9 L290.1 649.5 L292.6 656.4 L295.1 643.3 L297.6 649.5 L300.1 651.6 L302.6 653 L305.1 655 L307.6 643.1 L310.1 638 L312.6 637.8 L315.1 651.6 L317.6 630.9 L320.1 638.3 L322.6 653.5 L325.1 656 L327.6 654.4 L330.1 656.5 L332.6 654.7 L335 645 L337.5 647.3 L340 649.7 L342.5 657.1 L345 656.7 L347.5 650.3 L350 644.3 L352.5 644.5 L355 651.1 L357.5 658.8 L360 655.5 L362.5 654.7 L365 658 L367.5 657.8 L370 659.3 L372.5 661.2 L375 656.1 L377.4 655.6 L379.9 650.6 L382.4 645.5 L384.9 649.2 L387.4 655.2 L389.9 649 L392.4 655.9 L394.9 654 L397.4 652.5 L399.9 636.3 L402.4 627.4 L404.9 638.1 L407.4 654.9 L409.9 653.2 L412.4 651.5 L414.9 653.5 L417.4 648.2 L419.9 645.9 L422.4 634.3 L424.8 636 L427.3 632 L429.8 620 L432.3 634.2 L434.8 651 L437.3 661.7 L439.8 653.3 L442.3 644.8 L444.8 650.3 L447.3 648.9 L449.8 649.6 L452.3 649.7 L454.8 648.4 L457.3 645.2 L459.8 650.3 L462.3 649.6 L464.8 650.2 L467.2 650.5 L469.7 658.8 L472.2 663 L474.7 651.7 L477.2 650.9 L479.7 653.1 L482.2 649.9 L484.7 638.3 L487.2 631.4 L489.7 637.2 L492.2 650.3 L494.7 648.7 L497.2 648.3 L499.7 644.8 L502.2 657.1 L504.7 656.7 L507.2 653.3 L509.7 648.7 L512.1 634.6 L514.6 632.6 L517.1 656.9 L519.6 644.9 L522.1 649.9 L524.6 647.3 L527.1 648.3 L529.6 645.6 L532.1 642.2 L534.6 641.1 L537.1 650.5 L539.6 647 L542.1 633.2 L544.6 644.3 L547.1 657.5 L549.6 648.8 L552.1 649.8 L554.6 645.5 L557 635.9 L559.5 641.9 L562 657.2 L564.5 654.1 L567 642.3 L569.5 634.8 L572 637.9 L574.5 637.6 L577 656.7 L579.5 656.7" fill="none" stroke="#c15c17" stroke-width="1.15"/>
<path d="M130.5 661.8 L133 664 L135.5 655.1 L138 659.9 L140.5 658.3 L143 659.2 L145.5 657.3 L148 655.6 L150.5 656.8 L152.9 665.3 L155.4 664.6 L157.9 660.6 L160.4 660.7 L162.9 661.1 L165.4 658.6 L167.9 659.3 L170.4 657 L172.9 657.2 L175.4 655.5 L177.9 657.1 L180.4 656.7 L182.9 660.2 L185.4 660.2 L187.9 661.1 L190.4 663.9 L192.9 662.3 L195.4 662.8 L197.8 660.1 L200.3 661.7 L202.8 662.7 L205.3 660.8 L207.8 657.9 L210.3 658.4 L212.8 653 L215.3 644.7 L217.8 628.5 L220.3 648.8 L222.8 652.8 L225.3 639.1 L227.8 646.2 L230.3 657.4 L232.8 654.1 L235.3 654.2 L237.8 653.1 L240.3 643.4 L242.8 635 L245.2 639.3 L247.7 642 L250.2 643.2 L252.7 642.8 L255.2 636.4 L257.7 642.3 L260.2 641.6 L262.7 631.8 L265.2 606.8 L267.7 615.1 L270.2 614.3 L272.7 627.5 L275.2 623 L277.7 620.7 L280.2 634.1 L282.7 648.6 L285.2 658.2 L287.6 658.3 L290.1 661 L292.6 654.9 L295.1 657.1 L297.6 654.3 L300.1 658 L302.6 659.1 L305.1 661.9 L307.6 659.5 L310.1 663.8 L312.6 655 L315.1 652.5 L317.6 645.2 L320.1 645.3 L322.6 653.2 L325.1 651.2 L327.6 660.1 L330.1 660 L332.6 658.1 L335 660.2 L337.5 647.6 L340 634.9 L342.5 647.3 L345 655 L347.5 661.5 L350 660.2 L352.5 661 L355 660.7 L357.5 664.8 L360 657.2 L362.5 659.1 L365 662.5 L367.5 664.3 L370 664.1 L372.5 663.2 L375 654.1 L377.4 656.8 L379.9 661.4 L382.4 661 L384.9 658.3 L387.4 655.1 L389.9 656.8 L392.4 659.9 L394.9 664 L397.4 658.3 L399.9 661.4 L402.4 654.7 L404.9 648 L407.4 637.1 L409.9 630 L412.4 645.3 L414.9 658.8 L417.4 656.8 L419.9 656 L422.4 649.6 L424.8 654.9 L427.3 645.8 L429.8 646.5 L432.3 654.4 L434.8 643.9 L437.3 647.1 L439.8 650.2 L442.3 651.8 L444.8 649.8 L447.3 659.7 L449.8 651.8 L452.3 644.7 L454.8 641.7 L457.3 639.7 L459.8 641.9 L462.3 650.1 L464.8 646.8 L467.2 646.4 L469.7 650.1 L472.2 655.3 L474.7 655.7 L477.2 656.4 L479.7 654.7 L482.2 656.4 L484.7 653.4 L487.2 654.8 L489.7 654.6 L492.2 650.1 L494.7 642 L497.2 646.4 L499.7 641.4 L502.2 651 L504.7 651.1 L507.2 654 L509.7 655.1 L512.1 654.9 L514.6 649.6 L517.1 651.6 L519.6 659.9 L522.1 655.7 L524.6 660.1 L527.1 658.8 L529.6 658.5 L532.1 649.6 L534.6 650.9 L537.1 659 L539.6 663.5 L542.1 656.6 L544.6 656.5 L547.1 651.1 L549.6 651.7 L552.1 648.3 L554.6 656.7 L557 658.2 L559.5 656.6 L562 657.9 L564.5 648 L567 644.1 L569.5 648.9 L572 642.1 L574.5 639.1 L577 646 L579.5 658 L579.5 670.5 L130.5 670.5Z" fill="#890f02" fill-opacity=".2" stroke="none"/>
<path d="M130.5 661.8 L133 664 L135.5 655.1 L138 659.9 L140.5 658.3 L143 659.2 L145.5 657.3 L148 655.6 L150.5 656.8 L152.9 665.3 L155.4 664.6 L157.9 660.6 L160.4 660.7 L162.9 661.1 L165.4 658.6 L167.9 659.3 L170.4 657 L172.9 657.2 L175.4 655.5 L177.9 657.1 L180.4 656.7 L182.9 660.2 L185.4 660.2 L187.9 661.1 L190.4 663.9 L192.9 662.3 L195.4 662.8 L197.8 660.1 L200.3 661.7 L202.8 662.7 L205.3 660.8 L207.8 657.9 L210.3 658.4 L212.8 653 L215.3 644.7 L217.8 628.5 L220.3 648.8 L222.8 652.8 L225.3 639.1 L227.8 646.2 L230.3 657.4 L232.8 654.1 L235.3 654.2 L237.8 653.1 L240.3 643.4 L242.8 635 L245.2 639.3 L247.7 642 L250.2 643.2 L252.7 642.8 L255.2 636.4 L257.7 642.3 L260.2 641.6 L262.7 631.8 L265.2 606.8 L267.7 615.1 L270.2 614.3 L272.7 627.5 L275.2 623 L277.7 620.7 L280.2 634.1 L282.7 648.6 L285.2 658.2 L287.6 658.3 L290.1 661 L292.6 654.9 L295.1 657.1 L297.6 654.3 L300.1 658 L302.6 659.1 L305.1 661.9 L307.6 659.5 L310.1 663.8 L312.6 655 L315.1 652.5 L317.6 645.2 L320.1 645.3 L322.6 653.2 L325.1 651.2 L327.6 660.1 L330.1 660 L332.6 658.1 L335 660.2 L337.5 647.6 L340 634.9 L342.5 647.3 L345 655 L347.5 661.5 L350 660.2 L352.5 661 L355 660.7 L357.5 664.8 L360 657.2 L362.5 659.1 L365 662.5 L367.5 664.3 L370 664.1 L372.5 663.2 L375 654.1 L377.4 656.8 L379.9 661.4 L382.4 661 L384.9 658.3 L387.4 655.1 L389.9 656.8 L392.4 659.9 L394.9 664 L397.4 658.3 L399.9 661.4 L402.4 654.7 L404.9 648 L407.4 637.1 L409.9 630 L412.4 645.3 L414.9 658.8 L417.4 656.8 L419.9 656 L422.4 649.6 L424.8 654.9 L427.3 645.8 L429.8 646.5 L432.3 654.4 L434.8 643.9 L437.3 647.1 L439.8 650.2 L442.3 651.8 L444.8 649.8 L447.3 659.7 L449.8 651.8 L452.3 644.7 L454.8 641.7 L457.3 639.7 L459.8 641.9 L462.3 650.1 L464.8 646.8 L467.2 646.4 L469.7 650.1 L472.2 655.3 L474.7 655.7 L477.2 656.4 L479.7 654.7 L482.2 656.4 L484.7 653.4 L487.2 654.8 L489.7 654.6 L492.2 650.1 L494.7 642 L497.2 646.4 L499.7 641.4 L502.2 651 L504.7 651.1 L507.2 654 L509.7 655.1 L512.1 654.9 L514.6 649.6 L517.1 651.6 L519.6 659.9 L522.1 655.7 L524.6 660.1 L527.1 658.8 L529.6 658.5 L532.1 649.6 L534.6 650.9 L537.1 659 L539.6 663.5 L542.1 656.6 L544.6 656.5 L547.1 651.1 L549.6 651.7 L552.1 648.3 L554.6 656.7 L557 658.2 L559.5 656.6 L562 657.9 L564.5 648 L567 644.1 L569.5 648.9 L572 642.1 L574.5 639.1 L577 646 L579.5 658" fill="none" stroke="#890f02" stroke-width="1.15"/>
<path d="M130.5 659.9 L133 661.7 L135.5 657.5 L138 659.2 L140.5 657.4 L143 657 L145.5 660.7 L148 659.4 L150.5 661.3 L152.9 662.5 L155.4 661 L157.9 659.3 L160.4 666.5 L162.9 663.2 L165.4 661.1 L167.9 663.6 L170.4 655.9 L172.9 656.4 L175.4 660.4 L177.9 655.6 L180.4 663.8 L182.9 665 L185.4 662.5 L187.9 665.5 L190.4 659.8 L192.9 659.9 L195.4 662.6 L197.8 663 L200.3 661.8 L202.8 655.8 L205.3 635.5 L207.8 640.8 L210.3 625.8 L212.8 631.7 L215.3 646.5 L217.8 655.2 L220.3 640.3 L222.8 640.2 L225.3 641.9 L227.8 650.2 L230.3 650.5 L232.8 658.7 L235.3 655.4 L237.8 644.2 L240.3 624.2 L242.8 634 L245.2 637.1 L247.7 639.9 L250.2 649.4 L252.7 643.1 L255.2 643.6 L257.7 628.9 L260.2 632.5 L262.7 632.4 L265.2 638.4 L267.7 645 L270.2 624.1 L272.7 631.1 L275.2 637.1 L277.7 638.7 L280.2 641.5 L282.7 646.6 L285.2 655.4 L287.6 646.8 L290.1 635.6 L292.6 645.5 L295.1 657.4 L297.6 654.7 L300.1 656.1 L302.6 647.6 L305.1 656.1 L307.6 663.9 L310.1 665.2 L312.6 658.8 L315.1 667.2 L317.6 661.4 L320.1 666.1 L322.6 658.2 L325.1 660.5 L327.6 656.1 L330.1 663.5 L332.6 660.7 L335 663.3 L337.5 660.4 L340 663.9 L342.5 664.7 L345 662.6 L347.5 659.6 L350 661.9 L352.5 659.1 L355 663.3 L357.5 661.3 L360 658.1 L362.5 661.5 L365 659.2 L367.5 662.4 L370 660.7 L372.5 665.2 L375 665.3 L377.4 665.9 L379.9 662.6 L382.4 657.1 L384.9 664.2 L387.4 660 L389.9 657.1 L392.4 660.8 L394.9 657.8 L397.4 658.5 L399.9 657.7 L402.4 660.9 L404.9 656.2 L407.4 644.9 L409.9 642.5 L412.4 650.2 L414.9 660.2 L417.4 647.9 L419.9 650.6 L422.4 652.3 L424.8 653.5 L427.3 644 L429.8 652.2 L432.3 644 L434.8 651.7 L437.3 651.6 L439.8 665.4 L442.3 668.4 L444.8 664.6 L447.3 666.1 L449.8 662.5 L452.3 653.9 L454.8 652.8 L457.3 654.6 L459.8 657 L462.3 650.6 L464.8 651.4 L467.2 655 L469.7 656.6 L472.2 649.5 L474.7 658 L477.2 655.6 L479.7 649.2 L482.2 650.8 L484.7 655.1 L487.2 655.9 L489.7 655.4 L492.2 655.3 L494.7 655.1 L497.2 656.8 L499.7 654.2 L502.2 656.6 L504.7 654.2 L507.2 650.8 L509.7 653 L512.1 645.9 L514.6 650.3 L517.1 651.8 L519.6 654.4 L522.1 655.7 L524.6 662.5 L527.1 656.9 L529.6 646 L532.1 636.8 L534.6 647.5 L537.1 650.6 L539.6 654.5 L542.1 657.9 L544.6 657 L547.1 651.5 L549.6 650.7 L552.1 647.9 L554.6 645.9 L557 654.6 L559.5 645.8 L562 645.5 L564.5 649 L567 648.1 L569.5 643.5 L572 640.6 L574.5 651.4 L577 655.3 L579.5 647.1 L579.5 670.5 L130.5 670.5Z" fill="#0a437c" fill-opacity=".2" stroke="none"/>
<path d="M130.5 659.9 L133 661.7 L135.5 657.5 L138 659.2 L140.5 657.4 L143 657 L145.5 660.7 L148 659.4 L150.5 661.3 L152.9 662.5 L155.4 661 L157.9 659.3 L160.4 666.5 L162.9 663.2 L165.4 661.1 L167.9 663.6 L170.4 655.9 L172.9 656.4 L175.4 660.4 L177.9 655.6 L180.4 663.8 L182.9 665 L185.4 662.5 L187.9 665.5 L190.4 659.8 L192.9 659.9 L195.4 662.6 L197.8 663 L200.3 661.8 L202.8 655.8 L205.3 635.5 L207.8 640.8 L210.3 625.8 L212.8 631.7 L215.3 646.5 L217.8 655.2 L220.3 640.3 L222.8 640.2 L225.3 641.9 L227.8 650.2 L230.3 650.5 L232.8 658.7 L235.3 655.4 L237.8 644.2 L240.3 624.2 L242.8 634 L245.2 637.1 L247.7 639.9 L250.2 649.4 L252.7 643.1 L255.2 643.6 L257.7 628.9 L260.2 632.5 L262.7 632.4 L265.2 638.4 L267.7 645 L270.2 624.1 L272.7 631.1 L275.2 637.1 L277.7 638.7 L280.2 641.5 L282.7 646.6 L285.2 655.4 L287.6 646.8 L290.1 635.6 L292.6 645.5 L295.1 657.4 L297.6 654.7 L300.1 656.1 L302.6 647.6 L305.1 656.1 L307.6 663.9 L310.1 665.2 L312.6 658.8 L315.1 667.2 L317.6 661.4 L320.1 666.1 L322.6 658.2 L325.1 660.5 L327.6 656.1 L330.1 663.5 L332.6 660.7 L335 663.3 L337.5 660.4 L340 663.9 L342.5 664.7 L345 662.6 L347.5 659.6 L350 661.9 L352.5 659.1 L355 663.3 L357.5 661.3 L360 658.1 L362.5 661.5 L365 659.2 L367.5 662.4 L370 660.7 L372.5 665.2 L375 665.3 L377.4 665.9 L379.9 662.6 L382.4 657.1 L384.9 664.2 L387.4 660 L389.9 657.1 L392.4 660.8 L394.9 657.8 L397.4 658.5 L399.9 657.7 L402.4 660.9 L404.9 656.2 L407.4 644.9 L409.9 642.5 L412.4 650.2 L414.9 660.2 L417.4 647.9 L419.9 650.6 L422.4 652.3 L424.8 653.5 L427.3 644 L429.8 652.2 L432.3 644 L434.8 651.7 L437.3 651.6 L439.8 665.4 L442.3 668.4 L444.8 664.6 L447.3 666.1 L449.8 662.5 L452.3 653.9 L454.8 652.8 L457.3 654.6 L459.8 657 L462.3 650.6 L464.8 651.4 L467.2 655 L469.7 656.6 L472.2 649.5 L474.7 658 L477.2 655.6 L479.7 649.2 L482.2 650.8 L484.7 655.1 L487.2 655.9 L489.7 655.4 L492.2 655.3 L494.7 655.1 L497.2 656.8 L499.7 654.2 L502.2 656.6 L504.7 654.2 L507.2 650.8 L509.7 653 L512.1 645.9 L514.6 650.3 L517.1 651.8 L519.6 654.4 L522.1 655.7 L524.6 662.5 L527.1 656.9 L529.6 646 L532.1 636.8 L534.6 647.5 L537.1 650.6 L539.6 654.5 L542.1 657.9 L544.6 657 L547.1 651.5 L549.6 650.7 L552.1 647.9 L554.6 645.9 L557 654.6 L559.5 645.8 L562 645.5 L564.5 649 L567 648.1 L569.5 643.5 L572 640.6 L574.5 651.4 L577 655.3 L579.5 647.1" fill="none" stroke="#0a437c" stroke-width="1.15"/>
<path d="M130.5 656.1 L133 658.8 L135.5 657.2 L138 658.6 L140.5 659.6 L143 663.6 L145.5 663.5 L148 660.8 L150.5 664.3 L152.9 659.7 L155.4 660.5 L157.9 663.4 L160.4 663.1 L162.9 664.6 L165.4 665.3 L167.9 669 L170.4 660.4 L172.9 661.9 L175.4 664 L177.9 665 L180.4 661.4 L182.9 663.2 L185.4 662 L187.9 662.2 L190.4 659.7 L192.9 659 L195.4 658.3 L197.8 648 L200.3 638.8 L202.8 651.1 L205.3 646.5 L207.8 635 L210.3 642.4 L212.8 651.1 L215.3 629.9 L217.8 629.8 L220.3 630.9 L222.8 631 L225.3 630.5 L227.8 633.2 L230.3 646.1 L232.8 658.8 L235.3 659.6 L237.8 663.4 L240.3 650.7 L242.8 642 L245.2 646.4 L247.7 637.7 L250.2 633.6 L252.7 636.2 L255.2 642 L257.7 636.8 L260.2 644.5 L262.7 637.3 L265.2 621.3 L267.7 636.4 L270.2 633.1 L272.7 648.7 L275.2 653.5 L277.7 628.2 L280.2 639.6 L282.7 649.4 L285.2 657.5 L287.6 657 L290.1 646.4 L292.6 638.7 L295.1 641.9 L297.6 652.5 L300.1 654.1 L302.6 655.2 L305.1 652.2 L307.6 645.3 L310.1 642 L312.6 661.1 L315.1 660.7 L317.6 661.6 L320.1 655.5 L322.6 651.4 L325.1 660.9 L327.6 655 L330.1 654.2 L332.6 658.3 L335 661.5 L337.5 656.9 L340 654 L342.5 653.8 L345 644 L347.5 634.7 L350 651.7 L352.5 659.8 L355 660.4 L357.5 657.7 L360 659.7 L362.5 663.2 L365 657.2 L367.5 656.8 L370 659.2 L372.5 660.3 L375 660.5 L377.4 661.4 L379.9 658.3 L382.4 658.8 L384.9 659.3 L387.4 658.6 L389.9 659.1 L392.4 663 L394.9 663.1 L397.4 660.7 L399.9 666.4 L402.4 668.8 L404.9 663.4 L407.4 655.4 L409.9 655.1 L412.4 655.7 L414.9 655.2 L417.4 650.3 L419.9 653 L422.4 650.7 L424.8 648.6 L427.3 641.4 L429.8 658.5 L432.3 652.4 L434.8 661.8 L437.3 660.2 L439.8 658 L442.3 661.7 L444.8 658.2 L447.3 656.7 L449.8 660.4 L452.3 652.7 L454.8 652.4 L457.3 651.8 L459.8 661.5 L462.3 658 L464.8 659.2 L467.2 651.7 L469.7 655.2 L472.2 646.7 L474.7 652 L477.2 659.1 L479.7 662.5 L482.2 661.1 L484.7 656.5 L487.2 654.4 L489.7 658.6 L492.2 655.3 L494.7 659.1 L497.2 650.5 L499.7 648.4 L502.2 648.9 L504.7 651 L507.2 650 L509.7 640.3 L512.1 645.9 L514.6 632.2 L517.1 630.9 L519.6 647.2 L522.1 649.3 L524.6 651.4 L527.1 658.3 L529.6 643.6 L532.1 640.2 L534.6 624.7 L537.1 646.2 L539.6 657.5 L542.1 657.6 L544.6 653 L547.1 662 L549.6 651.9 L552.1 650.7 L554.6 639.4 L557 642.6 L559.5 643.6 L562 642.2 L564.5 635.7 L567 648.1 L569.5 653.6 L572 646.6 L574.5 659.5 L577 661.4 L579.5 649.7 L579.5 670.5 L130.5 670.5Z" fill="#6d1f62" fill-opacity=".2" stroke="none"/>
<path d="M130.5 656.1 L133 658.8 L135.5 657.2 L138 658.6 L140.5 659.6 L143 663.6 L145.5 663.5 L148 660.8 L150.5 664.3 L152.9 659.7 L155.4 660.5 L157.9 663.4 L160.4 663.1 L162.9 664.6 L165.4 665.3 L167.9 669 L170.4 660.4 L172.9 661.9 L175.4 664 L177.9 665 L180.4 661.4 L182.9 663.2 L185.4 662 L187.9 662.2 L190.4 659.7 L192.9 659 L195.4 658.3 L197.8 648 L200.3 638.8 L202.8 651.1 L205.3 646.5 L207.8 635 L210.3 642.4 L212.8 651.1 L215.3 629.9 L217.8 629.8 L220.3 630.9 L222.8 631 L225.3 630.5 L227.8 633.2 L230.3 646.1 L232.8 658.8 L235.3 659.6 L237.8 663.4 L240.3 650.7 L242.8 642 L245.2 646.4 L247.7 637.7 L250.2 633.6 L252.7 636.2 L255.2 642 L257.7 636.8 L260.2 644.5 L262.7 637.3 L265.2 621.3 L267.7 636.4 L270.2 633.1 L272.7 648.7 L275.2 653.5 L277.7 628.2 L280.2 639.6 L282.7 649.4 L285.2 657.5 L287.6 657 L290.1 646.4 L292.6 638.7 L295.1 641.9 L297.6 652.5 L300.1 654.1 L302.6 655.2 L305.1 652.2 L307.6 645.3 L310.1 642 L312.6 661.1 L315.1 660.7 L317.6 661.6 L320.1 655.5 L322.6 651.4 L325.1 660.9 L327.6 655 L330.1 654.2 L332.6 658.3 L335 661.5 L337.5 656.9 L340 654 L342.5 653.8 L345 644 L347.5 634.7 L350 651.7 L352.5 659.8 L355 660.4 L357.5 657.7 L360 659.7 L362.5 663.2 L365 657.2 L367.5 656.8 L370 659.2 L372.5 660.3 L375 660.5 L377.4 661.4 L379.9 658.3 L382.4 658.8 L384.9 659.3 L387.4 658.6 L389.9 659.1 L392.4 663 L394.9 663.1 L397.4 660.7 L399.9 666.4 L402.4 668.8 L404.9 663.4 L407.4 655.4 L409.9 655.1 L412.4 655.7 L414.9 655.2 L417.4 650.3 L419.9 653 L422.4 650.7 L424.8 648.6 L427.3 641.4 L429.8 658.5 L432.3 652.4 L434.8 661.8 L437.3 660.2 L439.8 658 L442.3 661.7 L444.8 658.2 L447.3 656.7 L449.8 660.4 L452.3 652.7 L454.8 652.4 L457.3 651.8 L459.8 661.5 L462.3 658 L464.8 659.2 L467.2 651.7 L469.7 655.2 L472.2 646.7 L474.7 652 L477.2 659.1 L479.7 662.5 L482.2 661.1 L484.7 656.5 L487.2 654.4 L489.7 658.6 L492.2 655.3 L494.7 659.1 L497.2 650.5 L499.7 648.4 L502.2 648.9 L504.7 651 L507.2 650 L509.7 640.3 L512.1 645.9 L514.6 632.2 L517.1 630.9 L519.6 647.2 L522.1 649.3 L524.6 651.4 L527.1 658.3 L529.6 643.6 L532.1 640.2 L534.6 624.7 L537.1 646.2 L539.6 657.5 L542.1 657.6 L544.6 653 L547.1 662 L549.6 651.9 L552.1 650.7 L554.6 639.4 L557 642.6 L559.5 643.6 L562 642.2 L564.5 635.7 L567 648.1 L569.5 653.6 L572 646.6 L574.5 659.5 L577 661.4 L579.5 649.7" fill="none" stroke="#6d1f62" stroke-width="1.15"/>
<path d="M130.5 664.5 L133 662.3 L135.5 659.6 L138 658.8 L140.5 657.8 L143 652.3 L145.5 650.6 L148 656.2 L150.5 661.4 L152.9 659.1 L155.4 657.6 L157.9 659.1 L160.4 659.2 L162.9 656.2 L165.4 655.1 L167.9 656.5 L170.4 659.7 L172.9 654.8 L175.4 641.5 L177.9 652.7 L180.4 660.7 L182.9 659.9 L185.4 661.9 L187.9 658.3 L190.4 661.3 L192.9 660.7 L195.4 658.5 L197.8 660.9 L200.3 656.8 L202.8 652.3 L205.3 648.1 L207.8 652.4 L210.3 653.6 L212.8 628.8 L215.3 633.1 L217.8 630 L220.3 629 L222.8 636.5 L225.3 635.3 L227.8 638.1 L230.3 648.8 L232.8 649.7 L235.3 643.2 L237.8 642.4 L240.3 633.6 L242.8 623.8 L245.2 624.6 L247.7 644.2 L250.2 647.7 L252.7 657.7 L255.2 648.5 L257.7 646.8 L260.2 643.4 L262.7 631.2 L265.2 610.6 L267.7 598.2 L270.2 620.8 L272.7 636.7 L275.2 649.6 L277.7 656.1 L280.2 635.5 L282.7 646.1 L285.2 654.3 L287.6 652.9 L290.1 653.6 L292.6 651.8 L295.1 653.5 L297.6 647.9 L300.1 650.2 L302.6 654.3 L305.1 644.3 L307.6 649.5 L310.1 649 L312.6 647.3 L315.1 636.3 L317.6 631.6 L320.1 642.7 L322.6 657 L325.1 655.6 L327.6 654.7 L330.1 650.3 L332.6 653.2 L335 656.7 L337.5 655.7 L340 653.9 L342.5 659.2 L345 655 L347.5 655.4 L350 662.1 L352.5 662.3 L355 654.4 L357.5 644.1 L360 650.7 L362.5 657.3 L365 658.2 L367.5 661.3 L370 665.9 L372.5 662 L375 659.5 L377.4 659.8 L379.9 657.4 L382.4 652.2 L384.9 652.8 L387.4 655.8 L389.9 650.4 L392.4 652.6 L394.9 648.7 L397.4 651.4 L399.9 652.8 L402.4 648.7 L404.9 654.5 L407.4 651.7 L409.9 646.7 L412.4 645.3 L414.9 633.6 L417.4 646.6 L419.9 643.6 L422.4 649.6 L424.8 632.4 L427.3 650.9 L429.8 647.8 L432.3 653.6 L434.8 651 L437.3 657.7 L439.8 648.2 L442.3 637.4 L444.8 650.4 L447.3 650.6 L449.8 662.2 L452.3 661.3 L454.8 669 L457.3 660.5 L459.8 646.3 L462.3 651.3 L464.8 658.7 L467.2 660.7 L469.7 652.8 L472.2 650.4 L474.7 646 L477.2 649 L479.7 649.7 L482.2 652.3 L484.7 659.5 L487.2 654.5 L489.7 649.1 L492.2 651.2 L494.7 639.9 L497.2 646.2 L499.7 649.3 L502.2 642.8 L504.7 649.1 L507.2 653.2 L509.7 647.8 L512.1 643.7 L514.6 642.5 L517.1 640.8 L519.6 658.9 L522.1 659.6 L524.6 648.2 L527.1 656.4 L529.6 653.7 L532.1 645.6 L534.6 632.8 L537.1 657.1 L539.6 654.7 L542.1 652.6 L544.6 655.2 L547.1 660.6 L549.6 657.7 L552.1 646.8 L554.6 657.6 L557 654.3 L559.5 650.4 L562 646.9 L564.5 650.8 L567 649.9 L569.5 642.9 L572 640 L574.5 644.8 L577 650.9 L579.5 648.1 L579.5 670.5 L130.5 670.5Z" fill="#584477" fill-opacity=".2" stroke="none"/>
<path d="M130.5 664.5 L133 662.3 L135.5 659.6 L138 658.8 L140.5 657.8 L143 652.3 L145.5 650.6 L148 656.2 L150.5 661.4 L152.9 659.1 L155.4 657.6 L157.9 659.1 L160.4 659.2 L162.9 656.2 L165.4 655.1 L167.9 656.5 L170.4 659.7 L172.9 654.8 L175.4 641.5 L177.9 652.7 L180.4 660.7 L182.9 659.9 L185.4 661.9 L187.9 658.3 L190.4 661.3 L192.9 660.7 L195.4 658.5 L197.8 660.9 L200.3 656.8 L202.8 652.3 L205.3 648.1 L207.8 652.4 L210.3 653.6 L212.8 628.8 L215.3 633.1 L217.8 630 L220.3 629 L222.8 636.5 L225.3 635.3 L227.8 638.1 L230.3 648.8 L232.8 649.7 L235.3 643.2 L237.8 642.4 L240.3 633.6 L242.8 623.8 L245.2 624.6 L247.7 644.2 L250.2 647.7 L252.7 657.7 L255.2 648.5 L257.7 646.8 L260.2 643.4 L262.7 631.2 L265.2 610.6 L267.7 598.2 L270.2 620.8 L272.7 636.7 L275.2 649.6 L277.7 656.1 L280.2 635.5 L282.7 646.1 L285.2 654.3 L287.6 652.9 L290.1 653.6 L292.6 651.8 L295.1 653.5 L297.6 647.9 L300.1 650.2 L302.6 654.3 L305.1 644.3 L307.6 649.5 L310.1 649 L312.6 647.3 L315.1 636.3 L317.6 631.6 L320.1 642.7 L322.6 657 L325.1 655.6 L327.6 654.7 L330.1 650.3 L332.6 653.2 L335 656.7 L337.5 655.7 L340 653.9 L342.5 659.2 L345 655 L347.5 655.4 L350 662.1 L352.5 662.3 L355 654.4 L357.5 644.1 L360 650.7 L362.5 657.3 L365 658.2 L367.5 661.3 L370 665.9 L372.5 662 L375 659.5 L377.4 659.8 L379.9 657.4 L382.4 652.2 L384.9 652.8 L387.4 655.8 L389.9 650.4 L392.4 652.6 L394.9 648.7 L397.4 651.4 L399.9 652.8 L402.4 648.7 L404.9 654.5 L407.4 651.7 L409.9 646.7 L412.4 645.3 L414.9 633.6 L417.4 646.6 L419.9 643.6 L422.4 649.6 L424.8 632.4 L427.3 650.9 L429.8 647.8 L432.3 653.6 L434.8 651 L437.3 657.7 L439.8 648.2 L442.3 637.4 L444.8 650.4 L447.3 650.6 L449.8 662.2 L452.3 661.3 L454.8 669 L457.3 660.5 L459.8 646.3 L462.3 651.3 L464.8 658.7 L467.2 660.7 L469.7 652.8 L472.2 650.4 L474.7 646 L477.2 649 L479.7 649.7 L482.2 652.3 L484.7 659.5 L487.2 654.5 L489.7 649.1 L492.2 651.2 L494.7 639.9 L497.2 646.2 L499.7 649.3 L502.2 642.8 L504.7 649.1 L507.2 653.2 L509.7 647.8 L512.1 643.7 L514.6 642.5 L517.1 640.8 L519.6 658.9 L522.1 659.6 L524.6 648.2 L527.1 656.4 L529.6 653.7 L532.1 645.6 L534.6 632.8 L537.1 657.1 L539.6 654.7 L542.1 652.6 L544.6 655.2 L547.1 660.6 L549.6 657.7 L552.1 646.8 L554.6 657.6 L557 654.3 L559.5 650.4 L562 646.9 L564.5 650.8 L567 649.9 L569.5 642.9 L572 640 L574.5 644.8 L577 650.9 L579.5 648.1" fill="none" stroke="#584477" stroke-width="1.15"/>
<path d="M130.5 656.1 L133 656.7 L135.5 654.9 L138 656.5 L140.5 657.4 L143 655.1 L145.5 656.1 L148 655.5 L150.5 657.2 L152.9 658.1 L155.4 657.6 L157.9 658.9 L160.4 657.7 L162.9 656.2 L165.4 658.6 L167.9 656.5 L170.4 656.4 L172.9 657.2 L175.4 657.5 L177.9 657 L180.4 658.2 L182.9 659.6 L185.4 660.2 L187.9 658.6 L190.4 659.7 L192.9 659 L195.4 658.9 L197.8 660.1 L200.3 659.2 L202.8 656 L205.3 648.1 L207.8 645.6 L210.3 636.1 L212.8 631.7 L215.3 636.9 L217.8 637.1 L220.3 640.3 L222.8 639.9 L225.3 635.3 L227.8 640.2 L230.3 648.8 L232.8 649.7 L235.3 639.1 L237.8 642.4 L240.3 627.7 L242.8 633.3 L245.2 637.1 L247.7 639.3 L250.2 638.5 L252.7 636.5 L255.2 640.8 L257.7 636.8 L260.2 629.5 L262.7 629 L265.2 621.3 L267.7 615.1 L270.2 620.1 L272.7 631.1 L275.2 627.3 L277.7 628.2 L280.2 631.4 L282.7 646.1 L285.2 653.8 L287.6 649.1 L290.1 649.5 L292.6 650.5 L295.1 650.2 L297.6 649.5 L300.1 654.1 L302.6 654.7 L305.1 653.1 L307.6 653.2 L310.1 649 L312.6 651.7 L315.1 651.6 L317.6 651.5 L320.1 653.4 L322.6 653.2 L325.1 653.1 L327.6 654.9 L330.1 657.6 L332.6 655.7 L335 656.7 L337.5 655.7 L340 653.9 L342.5 656.9 L345 655 L347.5 653.8 L350 657.2 L352.5 658.6 L355 655.8 L357.5 653.7 L360 653.8 L362.5 654.7 L365 657.2 L367.5 657.9 L370 657.2 L372.5 656 L375 654.1 L377.4 656.2 L379.9 655 L382.4 651.4 L384.9 652.8 L387.4 654.2 L389.9 651.2 L392.4 655.1 L394.9 654.5 L397.4 652 L399.9 652.8 L402.4 653.5 L404.9 651.6 L407.4 650.6 L409.9 648.1 L412.4 649.9 L414.9 649.8 L417.4 648.2 L419.9 646.1 L422.4 641.2 L424.8 636 L427.3 635.9 L429.8 642.2 L432.3 641.8 L434.8 649.3 L437.3 650.4 L439.8 648.2 L442.3 647 L444.8 649.8 L447.3 651.1 L449.8 651.6 L452.3 649.9 L454.8 648.6 L457.3 650.4 L459.8 648.7 L462.3 649.6 L464.8 650.2 L467.2 650.5 L469.7 653.6 L472.2 650.4 L474.7 651.7 L477.2 651.1 L479.7 651.4 L482.2 650.8 L484.7 652.5 L487.2 649.5 L489.7 648.7 L492.2 650.1 L494.7 648.7 L497.2 648.3 L499.7 648 L502.2 646.7 L504.7 647.8 L507.2 645.3 L509.7 642.7 L512.1 635.5 L514.6 638.3 L517.1 644.4 L519.6 648.6 L522.1 649.1 L524.6 648.2 L527.1 648.3 L529.6 645.6 L532.1 642.2 L534.6 647.5 L537.1 648.8 L539.6 646.3 L542.1 645.4 L544.6 649.9 L547.1 647.9 L549.6 646.6 L552.1 646.8 L554.6 645.5 L557 642 L559.5 644.1 L562 646.2 L564.5 646.6 L567 646.5 L569.5 645.3 L572 641.9 L574.5 644.8 L577 648.4 L579.5 647.1 L579.5 670.5 L130.5 670.5Z" fill="#8a4fa0" fill-opacity=".3"/>
<path d="M130.5 661.8 L133 662.3 L135.5 659.6 L138 659.9 L140.5 660.4 L143 659.2 L145.5 660.3 L148 659.4 L150.5 661.1 L152.9 661 L155.4 662.2 L157.9 660.6 L160.4 660.3 L162.9 662.7 L165.4 661.1 L167.9 659.6 L170.4 660.4 L172.9 661.4 L175.4 661.7 L177.9 660.8 L180.4 661.4 L182.9 664 L185.4 662.5 L187.9 664.5 L190.4 662.6 L192.9 662.3 L195.4 662.6 L197.8 661.4 L200.3 664.1 L202.8 660.1 L205.3 652.9 L207.8 651 L210.3 647.8 L212.8 647.3 L215.3 645.5 L217.8 647 L220.3 648.8 L222.8 647 L225.3 643.2 L227.8 650.2 L230.3 652.5 L232.8 658.7 L235.3 655.1 L237.8 650.4 L240.3 638 L242.8 639.5 L245.2 643.6 L247.7 643.7 L250.2 645.8 L252.7 649.6 L255.2 649.6 L257.7 648.1 L260.2 644.5 L262.7 638.1 L265.2 633.6 L267.7 636.4 L270.2 633.1 L272.7 641.2 L275.2 643.2 L277.7 638.7 L280.2 637.2 L282.7 648.8 L285.2 658.2 L287.6 655.8 L290.1 657.6 L292.6 655.5 L295.1 656.8 L297.6 656.3 L300.1 658.1 L302.6 659.1 L305.1 656.5 L307.6 659.2 L310.1 657.5 L312.6 658 L315.1 656.2 L317.6 658.6 L320.1 659 L322.6 658.2 L325.1 658.6 L327.6 659.6 L330.1 659.7 L332.6 659.9 L335 659.4 L337.5 659.5 L340 661 L342.5 660.5 L345 660.7 L347.5 659.6 L350 661.9 L352.5 661 L355 660.7 L357.5 660.6 L360 658.1 L362.5 660.2 L365 661.1 L367.5 662 L370 660 L372.5 660.3 L375 661.4 L377.4 660.8 L379.9 662.6 L382.4 658.2 L384.9 659.3 L387.4 657.2 L389.9 657.5 L392.4 659.4 L394.9 657.8 L397.4 656.5 L399.9 659.4 L402.4 657.4 L404.9 656.7 L407.4 655.4 L409.9 658.3 L412.4 654.4 L414.9 656.1 L417.4 654.7 L419.9 650.6 L422.4 650.7 L424.8 650.7 L427.3 645.8 L429.8 650.3 L432.3 652.4 L434.8 654 L437.3 655.8 L439.8 655 L442.3 655.8 L444.8 656.6 L447.3 656.7 L449.8 657.2 L452.3 653.9 L454.8 658.6 L457.3 654.9 L459.8 653.5 L462.3 652.6 L464.8 657.4 L467.2 656.4 L469.7 659.8 L472.2 660.5 L474.7 658 L477.2 656.4 L479.7 654.7 L482.2 658.5 L484.7 656.7 L487.2 654.8 L489.7 654.5 L492.2 654.3 L494.7 656.5 L497.2 653 L499.7 653.9 L502.2 652.9 L504.7 652.9 L507.2 653.3 L509.7 648.7 L512.1 647.8 L514.6 647.2 L517.1 653.5 L519.6 654.8 L522.1 655.7 L524.6 654.2 L527.1 656.4 L529.6 653.8 L532.1 654.3 L534.6 654.1 L537.1 654.3 L539.6 655.8 L542.1 655.4 L544.6 655.2 L547.1 656.3 L549.6 651.9 L552.1 650.7 L554.6 657.6 L557 654.3 L559.5 650.4 L562 654.1 L564.5 650.8 L567 651.8 L569.5 650.9 L572 649.5 L574.5 651.4 L577 655.3 L579.5 650.7 L579.5 670.5 L130.5 670.5Z" fill="#5f2850" fill-opacity=".62"/>
<path d="M1428.5 569.5V670.5M1504.5 569.5V670.5M1579.5 569.5V670.5M1655.5 569.5V670.5M1731 569.5V670.5M1806.5 569.5V670.5M1424 569.5H1877.5M1424 619.5H1877.5M1424 670.5H1877.5" stroke="rgba(255,255,255,.2)" stroke-width="1" fill="none" shape-rendering="crispEdges"/>
<path d="M1425.5 655.2 L1428 653.4 L1430.5 659.8 L1433 658.4 L1435.5 661.2 L1438 661.2 L1440.5 655.8 L1443 660.9 L1445.5 662.1 L1448 655.1 L1450.5 662.6 L1453 668.4 L1455.5 664.4 L1458 664 L1460.5 664.6 L1463 658.2 L1465.5 661.9 L1468 663.4 L1470.5 660.4 L1472.9 660.8 L1475.4 660.3 L1477.9 659.6 L1480.4 659 L1482.9 660.2 L1485.4 660.5 L1487.9 660.3 L1490.4 663.4 L1492.9 656.3 L1495.4 662.5 L1497.9 655.3 L1500.4 633.1 L1502.9 614.8 L1505.4 609.5 L1507.9 624.6 L1510.4 627.5 L1512.9 611.5 L1515.4 613.1 L1517.9 611.3 L1520.4 639.7 L1522.9 652.6 L1525.4 647.1 L1527.9 629 L1530.4 625 L1532.9 619.5 L1535.4 620 L1537.9 627.1 L1540.4 649 L1542.9 651.2 L1545.4 635.1 L1547.9 634 L1550.4 650.8 L1552.9 651.6 L1555.4 643.3 L1557.9 649.8 L1560.3 653.4 L1562.8 641.2 L1565.3 643.2 L1567.8 655.5 L1570.3 630 L1572.8 605.1 L1575.3 635.4 L1577.8 655.2 L1580.3 660.2 L1582.8 648.6 L1585.3 648.9 L1587.8 647 L1590.3 650.4 L1592.8 655.5 L1595.3 645.7 L1597.8 657.4 L1600.3 661.5 L1602.8 661.2 L1605.3 656.5 L1607.8 651 L1610.3 659.7 L1612.8 661.2 L1615.3 657.1 L1617.8 657.7 L1620.3 653.3 L1622.8 656.7 L1625.3 655.8 L1627.8 658.3 L1630.3 656.5 L1632.8 654.7 L1635.3 649.2 L1637.8 639.6 L1640.3 644.9 L1642.8 659.9 L1645.3 656.4 L1647.8 653.9 L1650.2 658 L1652.7 657.1 L1655.2 657.4 L1657.7 657.1 L1660.2 658.5 L1662.7 659.5 L1665.2 649.8 L1667.7 656.5 L1670.2 649.8 L1672.7 653.6 L1675.2 658 L1677.7 659.7 L1680.2 661 L1682.7 659.9 L1685.2 662.2 L1687.7 659.3 L1690.2 651 L1692.7 652.4 L1695.2 655.7 L1697.7 664.5 L1700.2 662.5 L1702.7 664.4 L1705.2 653.8 L1707.7 641.5 L1710.2 639.2 L1712.7 648.1 L1715.2 644.7 L1717.7 651.8 L1720.2 648.4 L1722.7 641.5 L1725.2 636 L1727.7 651.2 L1730.2 656.3 L1732.7 652.9 L1735.2 658.1 L1737.7 648.8 L1740.2 664.4 L1742.6 664.2 L1745.1 662.9 L1747.6 647.2 L1750.1 653 L1752.6 642.4 L1755.1 651.1 L1757.6 650.5 L1760.1 659.7 L1762.6 658.7 L1765.1 656.9 L1767.6 648.8 L1770.1 644.1 L1772.6 655 L1775.1 651.3 L1777.6 654.2 L1780.1 656.3 L1782.6 660.8 L1785.1 660.9 L1787.6 652.5 L1790.1 648.2 L1792.6 649.6 L1795.1 660.5 L1797.6 655.8 L1800.1 639 L1802.6 646.6 L1805.1 642.2 L1807.6 641.7 L1810.1 633.7 L1812.6 639.8 L1815.1 643.5 L1817.6 635.7 L1820.1 648.9 L1822.6 644.9 L1825.1 631.1 L1827.6 633.7 L1830 642.8 L1832.5 648.5 L1835 636.6 L1837.5 640.9 L1840 636.5 L1842.5 630.6 L1845 630.7 L1847.5 641.1 L1850 654.7 L1852.5 652.9 L1855 648.8 L1857.5 654.5 L1860 644.9 L1862.5 638.6 L1865 635.8 L1867.5 653.6 L1870 645.1 L1872.5 645.4 L1875 637.5 L1875 670.5 L1425.5 670.5Z" fill="#7eb26d" fill-opacity=".2" stroke="none"/>
<path d="M1425.5 655.2 L1428 653.4 L1430.5 659.8 L1433 658.4 L1435.5 661.2 L1438 661.2 L1440.5 655.8 L1443 660.9 L1445.5 662.1 L1448 655.1 L1450.5 662.6 L1453 668.4 L1455.5 664.4 L1458 664 L1460.5 664.6 L1463 658.2 L1465.5 661.9 L1468 663.4 L1470.5 660.4 L1472.9 660.8 L1475.4 660.3 L1477.9 659.6 L1480.4 659 L1482.9 660.2 L1485.4 660.5 L1487.9 660.3 L1490.4 663.4 L1492.9 656.3 L1495.4 662.5 L1497.9 655.3 L1500.4 633.1 L1502.9 614.8 L1505.4 609.5 L1507.9 624.6 L1510.4 627.5 L1512.9 611.5 L1515.4 613.1 L1517.9 611.3 L1520.4 639.7 L1522.9 652.6 L1525.4 647.1 L1527.9 629 L1530.4 625 L1532.9 619.5 L1535.4 620 L1537.9 627.1 L1540.4 649 L1542.9 651.2 L1545.4 635.1 L1547.9 634 L1550.4 650.8 L1552.9 651.6 L1555.4 643.3 L1557.9 649.8 L1560.3 653.4 L1562.8 641.2 L1565.3 643.2 L1567.8 655.5 L1570.3 630 L1572.8 605.1 L1575.3 635.4 L1577.8 655.2 L1580.3 660.2 L1582.8 648.6 L1585.3 648.9 L1587.8 647 L1590.3 650.4 L1592.8 655.5 L1595.3 645.7 L1597.8 657.4 L1600.3 661.5 L1602.8 661.2 L1605.3 656.5 L1607.8 651 L1610.3 659.7 L1612.8 661.2 L1615.3 657.1 L1617.8 657.7 L1620.3 653.3 L1622.8 656.7 L1625.3 655.8 L1627.8 658.3 L1630.3 656.5 L1632.8 654.7 L1635.3 649.2 L1637.8 639.6 L1640.3 644.9 L1642.8 659.9 L1645.3 656.4 L1647.8 653.9 L1650.2 658 L1652.7 657.1 L1655.2 657.4 L1657.7 657.1 L1660.2 658.5 L1662.7 659.5 L1665.2 649.8 L1667.7 656.5 L1670.2 649.8 L1672.7 653.6 L1675.2 658 L1677.7 659.7 L1680.2 661 L1682.7 659.9 L1685.2 662.2 L1687.7 659.3 L1690.2 651 L1692.7 652.4 L1695.2 655.7 L1697.7 664.5 L1700.2 662.5 L1702.7 664.4 L1705.2 653.8 L1707.7 641.5 L1710.2 639.2 L1712.7 648.1 L1715.2 644.7 L1717.7 651.8 L1720.2 648.4 L1722.7 641.5 L1725.2 636 L1727.7 651.2 L1730.2 656.3 L1732.7 652.9 L1735.2 658.1 L1737.7 648.8 L1740.2 664.4 L1742.6 664.2 L1745.1 662.9 L1747.6 647.2 L1750.1 653 L1752.6 642.4 L1755.1 651.1 L1757.6 650.5 L1760.1 659.7 L1762.6 658.7 L1765.1 656.9 L1767.6 648.8 L1770.1 644.1 L1772.6 655 L1775.1 651.3 L1777.6 654.2 L1780.1 656.3 L1782.6 660.8 L1785.1 660.9 L1787.6 652.5 L1790.1 648.2 L1792.6 649.6 L1795.1 660.5 L1797.6 655.8 L1800.1 639 L1802.6 646.6 L1805.1 642.2 L1807.6 641.7 L1810.1 633.7 L1812.6 639.8 L1815.1 643.5 L1817.6 635.7 L1820.1 648.9 L1822.6 644.9 L1825.1 631.1 L1827.6 633.7 L1830 642.8 L1832.5 648.5 L1835 636.6 L1837.5 640.9 L1840 636.5 L1842.5 630.6 L1845 630.7 L1847.5 641.1 L1850 654.7 L1852.5 652.9 L1855 648.8 L1857.5 654.5 L1860 644.9 L1862.5 638.6 L1865 635.8 L1867.5 653.6 L1870 645.1 L1872.5 645.4 L1875 637.5" fill="none" stroke="#7eb26d" stroke-width="1.15"/>
<path d="M1425.5 660.8 L1428 662.3 L1430.5 661.4 L1433 658.2 L1435.5 658.9 L1438 658.5 L1440.5 659.6 L1443 648 L1445.5 634.1 L1448 650.5 L1450.5 659.4 L1453 655.7 L1455.5 651.6 L1458 657.6 L1460.5 661.8 L1463 657.9 L1465.5 663.8 L1468 661.1 L1470.5 650.6 L1472.9 658.3 L1475.4 666.1 L1477.9 664.2 L1480.4 655.6 L1482.9 645.2 L1485.4 658.6 L1487.9 666.5 L1490.4 664.2 L1492.9 662.7 L1495.4 657.9 L1497.9 657.5 L1500.4 647.9 L1502.9 648.8 L1505.4 644.5 L1507.9 639.3 L1510.4 626.8 L1512.9 605.9 L1515.4 634.9 L1517.9 646.3 L1520.4 652.8 L1522.9 658.1 L1525.4 652.7 L1527.9 641.5 L1530.4 643.3 L1532.9 640.8 L1535.4 627.4 L1537.9 630.1 L1540.4 628.8 L1542.9 635.6 L1545.4 639.1 L1547.9 643.5 L1550.4 642.9 L1552.9 657.3 L1555.4 648 L1557.9 645.7 L1560.3 639.8 L1562.8 641 L1565.3 646.2 L1567.8 636.2 L1570.3 650.5 L1572.8 638.1 L1575.3 648 L1577.8 657.6 L1580.3 651.5 L1582.8 662.4 L1585.3 654.7 L1587.8 656.6 L1590.3 649.1 L1592.8 654.6 L1595.3 643.7 L1597.8 644.1 L1600.3 655 L1602.8 659.1 L1605.3 661.3 L1607.8 659.9 L1610.3 661.8 L1612.8 663.1 L1615.3 661.1 L1617.8 659.6 L1620.3 667.8 L1622.8 660.2 L1625.3 659.4 L1627.8 665.3 L1630.3 658.4 L1632.8 662.7 L1635.3 657.4 L1637.8 641.5 L1640.3 656.1 L1642.8 665 L1645.3 660.2 L1647.8 658.7 L1650.2 660.5 L1652.7 660.8 L1655.2 659.9 L1657.7 658 L1660.2 655.2 L1662.7 661 L1665.2 667 L1667.7 663.7 L1670.2 665.9 L1672.7 663.6 L1675.2 663.5 L1677.7 661.8 L1680.2 662.6 L1682.7 661.5 L1685.2 663.9 L1687.7 654.3 L1690.2 653.9 L1692.7 657.6 L1695.2 655.7 L1697.7 657.7 L1700.2 662.6 L1702.7 657.7 L1705.2 649 L1707.7 650.1 L1710.2 651.3 L1712.7 653.4 L1715.2 653.5 L1717.7 649.1 L1720.2 658 L1722.7 657.3 L1725.2 650 L1727.7 650.6 L1730.2 657 L1732.7 655.5 L1735.2 653 L1737.7 652.4 L1740.2 652.6 L1742.6 657.8 L1745.1 656.8 L1747.6 649.7 L1750.1 656.4 L1752.6 660 L1755.1 661.1 L1757.6 653.7 L1760.1 660.7 L1762.6 664.6 L1765.1 665.2 L1767.6 663.6 L1770.1 664 L1772.6 661.4 L1775.1 658.1 L1777.6 653.5 L1780.1 657.3 L1782.6 655.5 L1785.1 658.9 L1787.6 656.5 L1790.1 657.2 L1792.6 652 L1795.1 651 L1797.6 657.7 L1800.1 663 L1802.6 657.6 L1805.1 651.6 L1807.6 659.6 L1810.1 647.3 L1812.6 655.7 L1815.1 653 L1817.6 655.6 L1820.1 655 L1822.6 654.3 L1825.1 650.6 L1827.6 647.4 L1830 651.6 L1832.5 656.4 L1835 653.1 L1837.5 654.7 L1840 645.2 L1842.5 647.2 L1845 649.9 L1847.5 646.1 L1850 650.2 L1852.5 651.1 L1855 644.5 L1857.5 653.2 L1860 656.8 L1862.5 657.5 L1865 664.4 L1867.5 653.8 L1870 656.2 L1872.5 653.1 L1875 654.1 L1875 670.5 L1425.5 670.5Z" fill="#eab839" fill-opacity=".2" stroke="none"/>
<path d="M1425.5 660.8 L1428 662.3 L1430.5 661.4 L1433 658.2 L1435.5 658.9 L1438 658.5 L1440.5 659.6 L1443 648 L1445.5 634.1 L1448 650.5 L1450.5 659.4 L1453 655.7 L1455.5 651.6 L1458 657.6 L1460.5 661.8 L1463 657.9 L1465.5 663.8 L1468 661.1 L1470.5 650.6 L1472.9 658.3 L1475.4 666.1 L1477.9 664.2 L1480.4 655.6 L1482.9 645.2 L1485.4 658.6 L1487.9 666.5 L1490.4 664.2 L1492.9 662.7 L1495.4 657.9 L1497.9 657.5 L1500.4 647.9 L1502.9 648.8 L1505.4 644.5 L1507.9 639.3 L1510.4 626.8 L1512.9 605.9 L1515.4 634.9 L1517.9 646.3 L1520.4 652.8 L1522.9 658.1 L1525.4 652.7 L1527.9 641.5 L1530.4 643.3 L1532.9 640.8 L1535.4 627.4 L1537.9 630.1 L1540.4 628.8 L1542.9 635.6 L1545.4 639.1 L1547.9 643.5 L1550.4 642.9 L1552.9 657.3 L1555.4 648 L1557.9 645.7 L1560.3 639.8 L1562.8 641 L1565.3 646.2 L1567.8 636.2 L1570.3 650.5 L1572.8 638.1 L1575.3 648 L1577.8 657.6 L1580.3 651.5 L1582.8 662.4 L1585.3 654.7 L1587.8 656.6 L1590.3 649.1 L1592.8 654.6 L1595.3 643.7 L1597.8 644.1 L1600.3 655 L1602.8 659.1 L1605.3 661.3 L1607.8 659.9 L1610.3 661.8 L1612.8 663.1 L1615.3 661.1 L1617.8 659.6 L1620.3 667.8 L1622.8 660.2 L1625.3 659.4 L1627.8 665.3 L1630.3 658.4 L1632.8 662.7 L1635.3 657.4 L1637.8 641.5 L1640.3 656.1 L1642.8 665 L1645.3 660.2 L1647.8 658.7 L1650.2 660.5 L1652.7 660.8 L1655.2 659.9 L1657.7 658 L1660.2 655.2 L1662.7 661 L1665.2 667 L1667.7 663.7 L1670.2 665.9 L1672.7 663.6 L1675.2 663.5 L1677.7 661.8 L1680.2 662.6 L1682.7 661.5 L1685.2 663.9 L1687.7 654.3 L1690.2 653.9 L1692.7 657.6 L1695.2 655.7 L1697.7 657.7 L1700.2 662.6 L1702.7 657.7 L1705.2 649 L1707.7 650.1 L1710.2 651.3 L1712.7 653.4 L1715.2 653.5 L1717.7 649.1 L1720.2 658 L1722.7 657.3 L1725.2 650 L1727.7 650.6 L1730.2 657 L1732.7 655.5 L1735.2 653 L1737.7 652.4 L1740.2 652.6 L1742.6 657.8 L1745.1 656.8 L1747.6 649.7 L1750.1 656.4 L1752.6 660 L1755.1 661.1 L1757.6 653.7 L1760.1 660.7 L1762.6 664.6 L1765.1 665.2 L1767.6 663.6 L1770.1 664 L1772.6 661.4 L1775.1 658.1 L1777.6 653.5 L1780.1 657.3 L1782.6 655.5 L1785.1 658.9 L1787.6 656.5 L1790.1 657.2 L1792.6 652 L1795.1 651 L1797.6 657.7 L1800.1 663 L1802.6 657.6 L1805.1 651.6 L1807.6 659.6 L1810.1 647.3 L1812.6 655.7 L1815.1 653 L1817.6 655.6 L1820.1 655 L1822.6 654.3 L1825.1 650.6 L1827.6 647.4 L1830 651.6 L1832.5 656.4 L1835 653.1 L1837.5 654.7 L1840 645.2 L1842.5 647.2 L1845 649.9 L1847.5 646.1 L1850 650.2 L1852.5 651.1 L1855 644.5 L1857.5 653.2 L1860 656.8 L1862.5 657.5 L1865 664.4 L1867.5 653.8 L1870 656.2 L1872.5 653.1 L1875 654.1" fill="none" stroke="#eab839" stroke-width="1.15"/>
<path d="M1425.5 664.8 L1428 658.3 L1430.5 659.2 L1433 664.1 L1435.5 663.7 L1438 664.2 L1440.5 659.4 L1443 655.7 L1445.5 646.3 L1448 656.7 L1450.5 662.2 L1453 664.8 L1455.5 664.1 L1458 655.4 L1460.5 656 L1463 653.7 L1465.5 646.9 L1468 654.6 L1470.5 663.5 L1472.9 664.7 L1475.4 658.4 L1477.9 664.2 L1480.4 667.4 L1482.9 667.2 L1485.4 665.1 L1487.9 663.6 L1490.4 662.4 L1492.9 664.7 L1495.4 659.6 L1497.9 661.3 L1500.4 648 L1502.9 636.4 L1505.4 638.3 L1507.9 643 L1510.4 624.6 L1512.9 621.9 L1515.4 644 L1517.9 626.6 L1520.4 649.5 L1522.9 657.4 L1525.4 652.6 L1527.9 636.6 L1530.4 621 L1532.9 629.3 L1535.4 639.7 L1537.9 658.6 L1540.4 657.9 L1542.9 655.8 L1545.4 653.9 L1547.9 655.7 L1550.4 647.7 L1552.9 656.9 L1555.4 659.1 L1557.9 654.7 L1560.3 652.9 L1562.8 634.2 L1565.3 611.9 L1567.8 638.3 L1570.3 637.8 L1572.8 638.2 L1575.3 645.5 L1577.8 632.9 L1580.3 609.9 L1582.8 637.2 L1585.3 649.4 L1587.8 655.8 L1590.3 661.5 L1592.8 656.1 L1595.3 657.7 L1597.8 653.6 L1600.3 650.1 L1602.8 657 L1605.3 658.6 L1607.8 667.5 L1610.3 662.4 L1612.8 660.1 L1615.3 655.5 L1617.8 663.3 L1620.3 663.9 L1622.8 664.2 L1625.3 664.2 L1627.8 661.9 L1630.3 664 L1632.8 661.6 L1635.3 658.8 L1637.8 656.4 L1640.3 655.9 L1642.8 655.2 L1645.3 654.4 L1647.8 652.8 L1650.2 656.4 L1652.7 656.4 L1655.2 664.8 L1657.7 658.1 L1660.2 659.7 L1662.7 661.8 L1665.2 661 L1667.7 663.2 L1670.2 660.3 L1672.7 659.2 L1675.2 661.8 L1677.7 659.4 L1680.2 653.9 L1682.7 651.7 L1685.2 640.2 L1687.7 653.8 L1690.2 661.4 L1692.7 657.1 L1695.2 658.5 L1697.7 662.4 L1700.2 655.6 L1702.7 652.7 L1705.2 658 L1707.7 651.5 L1710.2 653.7 L1712.7 646.1 L1715.2 651.4 L1717.7 651.9 L1720.2 644.9 L1722.7 648.4 L1725.2 643.2 L1727.7 628.7 L1730.2 638.7 L1732.7 649.3 L1735.2 659.9 L1737.7 656.9 L1740.2 651.1 L1742.6 644.3 L1745.1 650 L1747.6 654 L1750.1 657.1 L1752.6 657.9 L1755.1 655.6 L1757.6 648.9 L1760.1 658.1 L1762.6 656.5 L1765.1 658.9 L1767.6 658.2 L1770.1 655.2 L1772.6 654.8 L1775.1 649.2 L1777.6 646.3 L1780.1 650 L1782.6 652 L1785.1 657.7 L1787.6 660.8 L1790.1 661 L1792.6 656 L1795.1 659.4 L1797.6 658.6 L1800.1 658.8 L1802.6 653.6 L1805.1 651.2 L1807.6 653.1 L1810.1 648 L1812.6 648.5 L1815.1 646.4 L1817.6 655.1 L1820.1 650.7 L1822.6 650.6 L1825.1 658.7 L1827.6 653.5 L1830 652.7 L1832.5 656.8 L1835 653.5 L1837.5 650.9 L1840 650.5 L1842.5 653.4 L1845 655.1 L1847.5 655.2 L1850 658.9 L1852.5 658.5 L1855 664.9 L1857.5 656.6 L1860 657 L1862.5 648.5 L1865 644.1 L1867.5 650.5 L1870 645.1 L1872.5 652.4 L1875 646.7 L1875 670.5 L1425.5 670.5Z" fill="#6ed0e0" fill-opacity=".2" stroke="none"/>
<path d="M1425.5 664.8 L1428 658.3 L1430.5 659.2 L1433 664.1 L1435.5 663.7 L1438 664.2 L1440.5 659.4 L1443 655.7 L1445.5 646.3 L1448 656.7 L1450.5 662.2 L1453 664.8 L1455.5 664.1 L1458 655.4 L1460.5 656 L1463 653.7 L1465.5 646.9 L1468 654.6 L1470.5 663.5 L1472.9 664.7 L1475.4 658.4 L1477.9 664.2 L1480.4 667.4 L1482.9 667.2 L1485.4 665.1 L1487.9 663.6 L1490.4 662.4 L1492.9 664.7 L1495.4 659.6 L1497.9 661.3 L1500.4 648 L1502.9 636.4 L1505.4 638.3 L1507.9 643 L1510.4 624.6 L1512.9 621.9 L1515.4 644 L1517.9 626.6 L1520.4 649.5 L1522.9 657.4 L1525.4 652.6 L1527.9 636.6 L1530.4 621 L1532.9 629.3 L1535.4 639.7 L1537.9 658.6 L1540.4 657.9 L1542.9 655.8 L1545.4 653.9 L1547.9 655.7 L1550.4 647.7 L1552.9 656.9 L1555.4 659.1 L1557.9 654.7 L1560.3 652.9 L1562.8 634.2 L1565.3 611.9 L1567.8 638.3 L1570.3 637.8 L1572.8 638.2 L1575.3 645.5 L1577.8 632.9 L1580.3 609.9 L1582.8 637.2 L1585.3 649.4 L1587.8 655.8 L1590.3 661.5 L1592.8 656.1 L1595.3 657.7 L1597.8 653.6 L1600.3 650.1 L1602.8 657 L1605.3 658.6 L1607.8 667.5 L1610.3 662.4 L1612.8 660.1 L1615.3 655.5 L1617.8 663.3 L1620.3 663.9 L1622.8 664.2 L1625.3 664.2 L1627.8 661.9 L1630.3 664 L1632.8 661.6 L1635.3 658.8 L1637.8 656.4 L1640.3 655.9 L1642.8 655.2 L1645.3 654.4 L1647.8 652.8 L1650.2 656.4 L1652.7 656.4 L1655.2 664.8 L1657.7 658.1 L1660.2 659.7 L1662.7 661.8 L1665.2 661 L1667.7 663.2 L1670.2 660.3 L1672.7 659.2 L1675.2 661.8 L1677.7 659.4 L1680.2 653.9 L1682.7 651.7 L1685.2 640.2 L1687.7 653.8 L1690.2 661.4 L1692.7 657.1 L1695.2 658.5 L1697.7 662.4 L1700.2 655.6 L1702.7 652.7 L1705.2 658 L1707.7 651.5 L1710.2 653.7 L1712.7 646.1 L1715.2 651.4 L1717.7 651.9 L1720.2 644.9 L1722.7 648.4 L1725.2 643.2 L1727.7 628.7 L1730.2 638.7 L1732.7 649.3 L1735.2 659.9 L1737.7 656.9 L1740.2 651.1 L1742.6 644.3 L1745.1 650 L1747.6 654 L1750.1 657.1 L1752.6 657.9 L1755.1 655.6 L1757.6 648.9 L1760.1 658.1 L1762.6 656.5 L1765.1 658.9 L1767.6 658.2 L1770.1 655.2 L1772.6 654.8 L1775.1 649.2 L1777.6 646.3 L1780.1 650 L1782.6 652 L1785.1 657.7 L1787.6 660.8 L1790.1 661 L1792.6 656 L1795.1 659.4 L1797.6 658.6 L1800.1 658.8 L1802.6 653.6 L1805.1 651.2 L1807.6 653.1 L1810.1 648 L1812.6 648.5 L1815.1 646.4 L1817.6 655.1 L1820.1 650.7 L1822.6 650.6 L1825.1 658.7 L1827.6 653.5 L1830 652.7 L1832.5 656.8 L1835 653.5 L1837.5 650.9 L1840 650.5 L1842.5 653.4 L1845 655.1 L1847.5 655.2 L1850 658.9 L1852.5 658.5 L1855 664.9 L1857.5 656.6 L1860 657 L1862.5 648.5 L1865 644.1 L1867.5 650.5 L1870 645.1 L1872.5 652.4 L1875 646.7" fill="none" stroke="#6ed0e0" stroke-width="1.15"/>
<path d="M1425.5 659.3 L1428 658.9 L1430.5 654.2 L1433 651.8 L1435.5 657 L1438 661.1 L1440.5 661.9 L1443 662.5 L1445.5 656.3 L1448 659.7 L1450.5 656.8 L1453 657.6 L1455.5 665.5 L1458 660.8 L1460.5 656.1 L1463 660.2 L1465.5 663.5 L1468 660.1 L1470.5 651.4 L1472.9 656 L1475.4 660.3 L1477.9 663.7 L1480.4 663.6 L1482.9 667.3 L1485.4 662.1 L1487.9 663.5 L1490.4 664.7 L1492.9 657.9 L1495.4 660.8 L1497.9 657 L1500.4 650.9 L1502.9 615.5 L1505.4 627.6 L1507.9 630.3 L1510.4 632.9 L1512.9 609.9 L1515.4 637.2 L1517.9 637.5 L1520.4 648.9 L1522.9 648.2 L1525.4 659.1 L1527.9 648.8 L1530.4 643.7 L1532.9 641.5 L1535.4 640.4 L1537.9 638 L1540.4 638.7 L1542.9 636.5 L1545.4 634.3 L1547.9 643.7 L1550.4 652.3 L1552.9 648.5 L1555.4 646.4 L1557.9 632.2 L1560.3 633.6 L1562.8 645.5 L1565.3 641.6 L1567.8 642.3 L1570.3 623.5 L1572.8 594.8 L1575.3 628.8 L1577.8 644 L1580.3 660.4 L1582.8 649.1 L1585.3 650.5 L1587.8 659.4 L1590.3 656.4 L1592.8 655.2 L1595.3 656.5 L1597.8 653 L1600.3 656.9 L1602.8 656.1 L1605.3 655 L1607.8 646 L1610.3 656.4 L1612.8 659.6 L1615.3 658.5 L1617.8 660 L1620.3 648.1 L1622.8 654.1 L1625.3 654.2 L1627.8 656.2 L1630.3 660.1 L1632.8 661.4 L1635.3 659.5 L1637.8 653.3 L1640.3 643.7 L1642.8 653.2 L1645.3 652.3 L1647.8 634 L1650.2 652.7 L1652.7 661.1 L1655.2 659.9 L1657.7 658.8 L1660.2 654.2 L1662.7 652.4 L1665.2 657.8 L1667.7 659.8 L1670.2 658.9 L1672.7 657 L1675.2 660.8 L1677.7 659.3 L1680.2 660 L1682.7 659.8 L1685.2 659 L1687.7 656.4 L1690.2 659.4 L1692.7 659.2 L1695.2 669 L1697.7 655.4 L1700.2 654.9 L1702.7 653.4 L1705.2 654.5 L1707.7 658.7 L1710.2 650.9 L1712.7 642.6 L1715.2 644.8 L1717.7 653.5 L1720.2 659.5 L1722.7 657.8 L1725.2 649.5 L1727.7 653.1 L1730.2 656.3 L1732.7 663.8 L1735.2 657.3 L1737.7 655.9 L1740.2 651.1 L1742.6 656.2 L1745.1 651.4 L1747.6 652.4 L1750.1 650.8 L1752.6 663.7 L1755.1 654.7 L1757.6 662.7 L1760.1 649.4 L1762.6 647.8 L1765.1 649.9 L1767.6 654.9 L1770.1 664.7 L1772.6 646.1 L1775.1 652.1 L1777.6 653.7 L1780.1 644.2 L1782.6 628.1 L1785.1 647.2 L1787.6 655.1 L1790.1 645 L1792.6 649.5 L1795.1 652.3 L1797.6 655.3 L1800.1 651 L1802.6 640.4 L1805.1 650.8 L1807.6 644.6 L1810.1 648.8 L1812.6 648.7 L1815.1 642.7 L1817.6 654.7 L1820.1 663.2 L1822.6 656.5 L1825.1 643.4 L1827.6 650.3 L1830 649.7 L1832.5 639.6 L1835 646.7 L1837.5 649.1 L1840 661.2 L1842.5 658.1 L1845 654.4 L1847.5 650.8 L1850 649.6 L1852.5 644.4 L1855 643.9 L1857.5 648.5 L1860 648.1 L1862.5 648.4 L1865 655.4 L1867.5 652.1 L1870 647.7 L1872.5 649 L1875 652.8 L1875 670.5 L1425.5 670.5Z" fill="#ef843c" fill-opacity=".2" stroke="none"/>
<path d="M1425.5 659.3 L1428 658.9 L1430.5 654.2 L1433 651.8 L1435.5 657 L1438 661.1 L1440.5 661.9 L1443 662.5 L1445.5 656.3 L1448 659.7 L1450.5 656.8 L1453 657.6 L1455.5 665.5 L1458 660.8 L1460.5 656.1 L1463 660.2 L1465.5 663.5 L1468 660.1 L1470.5 651.4 L1472.9 656 L1475.4 660.3 L1477.9 663.7 L1480.4 663.6 L1482.9 667.3 L1485.4 662.1 L1487.9 663.5 L1490.4 664.7 L1492.9 657.9 L1495.4 660.8 L1497.9 657 L1500.4 650.9 L1502.9 615.5 L1505.4 627.6 L1507.9 630.3 L1510.4 632.9 L1512.9 609.9 L1515.4 637.2 L1517.9 637.5 L1520.4 648.9 L1522.9 648.2 L1525.4 659.1 L1527.9 648.8 L1530.4 643.7 L1532.9 641.5 L1535.4 640.4 L1537.9 638 L1540.4 638.7 L1542.9 636.5 L1545.4 634.3 L1547.9 643.7 L1550.4 652.3 L1552.9 648.5 L1555.4 646.4 L1557.9 632.2 L1560.3 633.6 L1562.8 645.5 L1565.3 641.6 L1567.8 642.3 L1570.3 623.5 L1572.8 594.8 L1575.3 628.8 L1577.8 644 L1580.3 660.4 L1582.8 649.1 L1585.3 650.5 L1587.8 659.4 L1590.3 656.4 L1592.8 655.2 L1595.3 656.5 L1597.8 653 L1600.3 656.9 L1602.8 656.1 L1605.3 655 L1607.8 646 L1610.3 656.4 L1612.8 659.6 L1615.3 658.5 L1617.8 660 L1620.3 648.1 L1622.8 654.1 L1625.3 654.2 L1627.8 656.2 L1630.3 660.1 L1632.8 661.4 L1635.3 659.5 L1637.8 653.3 L1640.3 643.7 L1642.8 653.2 L1645.3 652.3 L1647.8 634 L1650.2 652.7 L1652.7 661.1 L1655.2 659.9 L1657.7 658.8 L1660.2 654.2 L1662.7 652.4 L1665.2 657.8 L1667.7 659.8 L1670.2 658.9 L1672.7 657 L1675.2 660.8 L1677.7 659.3 L1680.2 660 L1682.7 659.8 L1685.2 659 L1687.7 656.4 L1690.2 659.4 L1692.7 659.2 L1695.2 669 L1697.7 655.4 L1700.2 654.9 L1702.7 653.4 L1705.2 654.5 L1707.7 658.7 L1710.2 650.9 L1712.7 642.6 L1715.2 644.8 L1717.7 653.5 L1720.2 659.5 L1722.7 657.8 L1725.2 649.5 L1727.7 653.1 L1730.2 656.3 L1732.7 663.8 L1735.2 657.3 L1737.7 655.9 L1740.2 651.1 L1742.6 656.2 L1745.1 651.4 L1747.6 652.4 L1750.1 650.8 L1752.6 663.7 L1755.1 654.7 L1757.6 662.7 L1760.1 649.4 L1762.6 647.8 L1765.1 649.9 L1767.6 654.9 L1770.1 664.7 L1772.6 646.1 L1775.1 652.1 L1777.6 653.7 L1780.1 644.2 L1782.6 628.1 L1785.1 647.2 L1787.6 655.1 L1790.1 645 L1792.6 649.5 L1795.1 652.3 L1797.6 655.3 L1800.1 651 L1802.6 640.4 L1805.1 650.8 L1807.6 644.6 L1810.1 648.8 L1812.6 648.7 L1815.1 642.7 L1817.6 654.7 L1820.1 663.2 L1822.6 656.5 L1825.1 643.4 L1827.6 650.3 L1830 649.7 L1832.5 639.6 L1835 646.7 L1837.5 649.1 L1840 661.2 L1842.5 658.1 L1845 654.4 L1847.5 650.8 L1850 649.6 L1852.5 644.4 L1855 643.9 L1857.5 648.5 L1860 648.1 L1862.5 648.4 L1865 655.4 L1867.5 652.1 L1870 647.7 L1872.5 649 L1875 652.8" fill="none" stroke="#ef843c" stroke-width="1.15"/>
<path d="M1425.5 662.5 L1428 662.8 L1430.5 664.4 L1433 662.4 L1435.5 661.7 L1438 665.1 L1440.5 662.9 L1443 662.5 L1445.5 658.8 L1448 659.9 L1450.5 660.3 L1453 658.9 L1455.5 655.2 L1458 656.5 L1460.5 660.5 L1463 660.8 L1465.5 659.4 L1468 658 L1470.5 659.8 L1472.9 665.4 L1475.4 661.8 L1477.9 662.9 L1480.4 656.2 L1482.9 658.7 L1485.4 660.3 L1487.9 660.3 L1490.4 658.8 L1492.9 660.6 L1495.4 667.4 L1497.9 661.7 L1500.4 646.9 L1502.9 636.9 L1505.4 628.8 L1507.9 625.3 L1510.4 644 L1512.9 632.8 L1515.4 636.4 L1517.9 639.9 L1520.4 648.6 L1522.9 649.3 L1525.4 654.6 L1527.9 646.3 L1530.4 636.1 L1532.9 641.3 L1535.4 651.3 L1537.9 646.4 L1540.4 639.1 L1542.9 664 L1545.4 655.8 L1547.9 651.7 L1550.4 653 L1552.9 650.6 L1555.4 647.2 L1557.9 627.8 L1560.3 604.5 L1562.8 634.1 L1565.3 623 L1567.8 626.9 L1570.3 637.9 L1572.8 639.4 L1575.3 632.5 L1577.8 637.7 L1580.3 652.6 L1582.8 654.3 L1585.3 658.7 L1587.8 654.4 L1590.3 656.6 L1592.8 650.3 L1595.3 654.7 L1597.8 653.6 L1600.3 653.7 L1602.8 655.5 L1605.3 650.6 L1607.8 653.3 L1610.3 659.1 L1612.8 656.1 L1615.3 661.3 L1617.8 664.8 L1620.3 660.6 L1622.8 664.9 L1625.3 665 L1627.8 653.6 L1630.3 644.1 L1632.8 654.7 L1635.3 645.9 L1637.8 645.9 L1640.3 649.3 L1642.8 655.8 L1645.3 663 L1647.8 663.7 L1650.2 652.6 L1652.7 643.4 L1655.2 654.9 L1657.7 653.6 L1660.2 659.7 L1662.7 655.1 L1665.2 658.2 L1667.7 655.7 L1670.2 658.4 L1672.7 660.1 L1675.2 656.7 L1677.7 657.3 L1680.2 649.9 L1682.7 642.7 L1685.2 647.4 L1687.7 658.2 L1690.2 655.9 L1692.7 657.8 L1695.2 644.2 L1697.7 628.1 L1700.2 647.2 L1702.7 657.8 L1705.2 660.6 L1707.7 646.7 L1710.2 641.8 L1712.7 655.1 L1715.2 658.1 L1717.7 640.6 L1720.2 633 L1722.7 654.2 L1725.2 655.7 L1727.7 639.8 L1730.2 621 L1732.7 643.3 L1735.2 652.7 L1737.7 657.2 L1740.2 653.8 L1742.6 663.2 L1745.1 655.3 L1747.6 653 L1750.1 663.4 L1752.6 655.5 L1755.1 649.7 L1757.6 653 L1760.1 657 L1762.6 655.1 L1765.1 648.8 L1767.6 645.9 L1770.1 654.5 L1772.6 654.1 L1775.1 653.5 L1777.6 644.7 L1780.1 651.8 L1782.6 653.8 L1785.1 649.6 L1787.6 656.6 L1790.1 658.6 L1792.6 654.7 L1795.1 650 L1797.6 647.8 L1800.1 654.3 L1802.6 647.1 L1805.1 653.6 L1807.6 655.4 L1810.1 660.2 L1812.6 656 L1815.1 659.8 L1817.6 652.7 L1820.1 642.9 L1822.6 626.1 L1825.1 646.1 L1827.6 647 L1830 653.9 L1832.5 660.6 L1835 656 L1837.5 648.9 L1840 648.1 L1842.5 652.5 L1845 644.8 L1847.5 639.7 L1850 628.8 L1852.5 637.5 L1855 636.8 L1857.5 647.1 L1860 646.7 L1862.5 650.1 L1865 644.9 L1867.5 645.3 L1870 644.6 L1872.5 653.6 L1875 650.2 L1875 670.5 L1425.5 670.5Z" fill="#e24d42" fill-opacity=".2" stroke="none"/>
<path d="M1425.5 662.5 L1428 662.8 L1430.5 664.4 L1433 662.4 L1435.5 661.7 L1438 665.1 L1440.5 662.9 L1443 662.5 L1445.5 658.8 L1448 659.9 L1450.5 660.3 L1453 658.9 L1455.5 655.2 L1458 656.5 L1460.5 660.5 L1463 660.8 L1465.5 659.4 L1468 658 L1470.5 659.8 L1472.9 665.4 L1475.4 661.8 L1477.9 662.9 L1480.4 656.2 L1482.9 658.7 L1485.4 660.3 L1487.9 660.3 L1490.4 658.8 L1492.9 660.6 L1495.4 667.4 L1497.9 661.7 L1500.4 646.9 L1502.9 636.9 L1505.4 628.8 L1507.9 625.3 L1510.4 644 L1512.9 632.8 L1515.4 636.4 L1517.9 639.9 L1520.4 648.6 L1522.9 649.3 L1525.4 654.6 L1527.9 646.3 L1530.4 636.1 L1532.9 641.3 L1535.4 651.3 L1537.9 646.4 L1540.4 639.1 L1542.9 664 L1545.4 655.8 L1547.9 651.7 L1550.4 653 L1552.9 650.6 L1555.4 647.2 L1557.9 627.8 L1560.3 604.5 L1562.8 634.1 L1565.3 623 L1567.8 626.9 L1570.3 637.9 L1572.8 639.4 L1575.3 632.5 L1577.8 637.7 L1580.3 652.6 L1582.8 654.3 L1585.3 658.7 L1587.8 654.4 L1590.3 656.6 L1592.8 650.3 L1595.3 654.7 L1597.8 653.6 L1600.3 653.7 L1602.8 655.5 L1605.3 650.6 L1607.8 653.3 L1610.3 659.1 L1612.8 656.1 L1615.3 661.3 L1617.8 664.8 L1620.3 660.6 L1622.8 664.9 L1625.3 665 L1627.8 653.6 L1630.3 644.1 L1632.8 654.7 L1635.3 645.9 L1637.8 645.9 L1640.3 649.3 L1642.8 655.8 L1645.3 663 L1647.8 663.7 L1650.2 652.6 L1652.7 643.4 L1655.2 654.9 L1657.7 653.6 L1660.2 659.7 L1662.7 655.1 L1665.2 658.2 L1667.7 655.7 L1670.2 658.4 L1672.7 660.1 L1675.2 656.7 L1677.7 657.3 L1680.2 649.9 L1682.7 642.7 L1685.2 647.4 L1687.7 658.2 L1690.2 655.9 L1692.7 657.8 L1695.2 644.2 L1697.7 628.1 L1700.2 647.2 L1702.7 657.8 L1705.2 660.6 L1707.7 646.7 L1710.2 641.8 L1712.7 655.1 L1715.2 658.1 L1717.7 640.6 L1720.2 633 L1722.7 654.2 L1725.2 655.7 L1727.7 639.8 L1730.2 621 L1732.7 643.3 L1735.2 652.7 L1737.7 657.2 L1740.2 653.8 L1742.6 663.2 L1745.1 655.3 L1747.6 653 L1750.1 663.4 L1752.6 655.5 L1755.1 649.7 L1757.6 653 L1760.1 657 L1762.6 655.1 L1765.1 648.8 L1767.6 645.9 L1770.1 654.5 L1772.6 654.1 L1775.1 653.5 L1777.6 644.7 L1780.1 651.8 L1782.6 653.8 L1785.1 649.6 L1787.6 656.6 L1790.1 658.6 L1792.6 654.7 L1795.1 650 L1797.6 647.8 L1800.1 654.3 L1802.6 647.1 L1805.1 653.6 L1807.6 655.4 L1810.1 660.2 L1812.6 656 L1815.1 659.8 L1817.6 652.7 L1820.1 642.9 L1822.6 626.1 L1825.1 646.1 L1827.6 647 L1830 653.9 L1832.5 660.6 L1835 656 L1837.5 648.9 L1840 648.1 L1842.5 652.5 L1845 644.8 L1847.5 639.7 L1850 628.8 L1852.5 637.5 L1855 636.8 L1857.5 647.1 L1860 646.7 L1862.5 650.1 L1865 644.9 L1867.5 645.3 L1870 644.6 L1872.5 653.6 L1875 650.2" fill="none" stroke="#e24d42" stroke-width="1.15"/>
<path d="M1425.5 663 L1428 666.7 L1430.5 658.2 L1433 652.5 L1435.5 657.1 L1438 663 L1440.5 658.5 L1443 661.1 L1445.5 663.7 L1448 656.9 L1450.5 642.3 L1453 625 L1455.5 645.5 L1458 656.9 L1460.5 664.3 L1463 662.4 L1465.5 658.9 L1468 663.8 L1470.5 666.3 L1472.9 665.3 L1475.4 662.9 L1477.9 668.3 L1480.4 667.4 L1482.9 665.8 L1485.4 659.1 L1487.9 663.6 L1490.4 664.3 L1492.9 664.4 L1495.4 666.8 L1497.9 665.7 L1500.4 653.8 L1502.9 646.4 L1505.4 642.1 L1507.9 643.3 L1510.4 644.5 L1512.9 646.7 L1515.4 650.8 L1517.9 625.1 L1520.4 649.8 L1522.9 659.9 L1525.4 647.5 L1527.9 632 L1530.4 648.8 L1532.9 654.5 L1535.4 640 L1537.9 637.9 L1540.4 650.2 L1542.9 653.4 L1545.4 650.4 L1547.9 660 L1550.4 661.6 L1552.9 662.1 L1555.4 653.3 L1557.9 643.6 L1560.3 632 L1562.8 638.8 L1565.3 632.3 L1567.8 633.4 L1570.3 638.5 L1572.8 642.2 L1575.3 645.7 L1577.8 646.8 L1580.3 636.5 L1582.8 630.4 L1585.3 648.6 L1587.8 649.9 L1590.3 654.4 L1592.8 658 L1595.3 659.6 L1597.8 654.5 L1600.3 663.2 L1602.8 657.7 L1605.3 656.4 L1607.8 657.5 L1610.3 654.3 L1612.8 660.5 L1615.3 659.1 L1617.8 667 L1620.3 659.8 L1622.8 663 L1625.3 660.5 L1627.8 662.6 L1630.3 657.3 L1632.8 655.1 L1635.3 648.6 L1637.8 635.1 L1640.3 651.1 L1642.8 657 L1645.3 658.4 L1647.8 661.9 L1650.2 664 L1652.7 661.8 L1655.2 656.4 L1657.7 658.5 L1660.2 657.2 L1662.7 659.3 L1665.2 656.4 L1667.7 658.9 L1670.2 660.5 L1672.7 664.7 L1675.2 659.6 L1677.7 658.4 L1680.2 660.2 L1682.7 657.8 L1685.2 657.8 L1687.7 658.1 L1690.2 665.1 L1692.7 662 L1695.2 661.9 L1697.7 659.4 L1700.2 658.5 L1702.7 663 L1705.2 662.5 L1707.7 655.6 L1710.2 658.9 L1712.7 657.7 L1715.2 658.3 L1717.7 653.9 L1720.2 652.1 L1722.7 656.9 L1725.2 647.1 L1727.7 651.9 L1730.2 653.5 L1732.7 654.2 L1735.2 660.9 L1737.7 659.7 L1740.2 656.5 L1742.6 657.8 L1745.1 653.5 L1747.6 648.5 L1750.1 658 L1752.6 658.5 L1755.1 655 L1757.6 650 L1760.1 654 L1762.6 658.8 L1765.1 654.9 L1767.6 656.6 L1770.1 665.4 L1772.6 663.2 L1775.1 663.2 L1777.6 659.1 L1780.1 656.1 L1782.6 655.8 L1785.1 657.9 L1787.6 652.4 L1790.1 636.9 L1792.6 631.6 L1795.1 650.7 L1797.6 658 L1800.1 664.8 L1802.6 660.6 L1805.1 656.7 L1807.6 656.5 L1810.1 658.8 L1812.6 653.5 L1815.1 662.4 L1817.6 663.7 L1820.1 662 L1822.6 655.8 L1825.1 655.2 L1827.6 657.8 L1830 655 L1832.5 649.5 L1835 650.9 L1837.5 648.6 L1840 647.4 L1842.5 653.1 L1845 649.7 L1847.5 656.4 L1850 655.6 L1852.5 652.4 L1855 652.6 L1857.5 652.2 L1860 646.2 L1862.5 652.7 L1865 658.3 L1867.5 654.1 L1870 641.6 L1872.5 651 L1875 642.2 L1875 670.5 L1425.5 670.5Z" fill="#1f78c1" fill-opacity=".2" stroke="none"/>
<path d="M1425.5 663 L1428 666.7 L1430.5 658.2 L1433 652.5 L1435.5 657.1 L1438 663 L1440.5 658.5 L1443 661.1 L1445.5 663.7 L1448 656.9 L1450.5 642.3 L1453 625 L1455.5 645.5 L1458 656.9 L1460.5 664.3 L1463 662.4 L1465.5 658.9 L1468 663.8 L1470.5 666.3 L1472.9 665.3 L1475.4 662.9 L1477.9 668.3 L1480.4 667.4 L1482.9 665.8 L1485.4 659.1 L1487.9 663.6 L1490.4 664.3 L1492.9 664.4 L1495.4 666.8 L1497.9 665.7 L1500.4 653.8 L1502.9 646.4 L1505.4 642.1 L1507.9 643.3 L1510.4 644.5 L1512.9 646.7 L1515.4 650.8 L1517.9 625.1 L1520.4 649.8 L1522.9 659.9 L1525.4 647.5 L1527.9 632 L1530.4 648.8 L1532.9 654.5 L1535.4 640 L1537.9 637.9 L1540.4 650.2 L1542.9 653.4 L1545.4 650.4 L1547.9 660 L1550.4 661.6 L1552.9 662.1 L1555.4 653.3 L1557.9 643.6 L1560.3 632 L1562.8 638.8 L1565.3 632.3 L1567.8 633.4 L1570.3 638.5 L1572.8 642.2 L1575.3 645.7 L1577.8 646.8 L1580.3 636.5 L1582.8 630.4 L1585.3 648.6 L1587.8 649.9 L1590.3 654.4 L1592.8 658 L1595.3 659.6 L1597.8 654.5 L1600.3 663.2 L1602.8 657.7 L1605.3 656.4 L1607.8 657.5 L1610.3 654.3 L1612.8 660.5 L1615.3 659.1 L1617.8 667 L1620.3 659.8 L1622.8 663 L1625.3 660.5 L1627.8 662.6 L1630.3 657.3 L1632.8 655.1 L1635.3 648.6 L1637.8 635.1 L1640.3 651.1 L1642.8 657 L1645.3 658.4 L1647.8 661.9 L1650.2 664 L1652.7 661.8 L1655.2 656.4 L1657.7 658.5 L1660.2 657.2 L1662.7 659.3 L1665.2 656.4 L1667.7 658.9 L1670.2 660.5 L1672.7 664.7 L1675.2 659.6 L1677.7 658.4 L1680.2 660.2 L1682.7 657.8 L1685.2 657.8 L1687.7 658.1 L1690.2 665.1 L1692.7 662 L1695.2 661.9 L1697.7 659.4 L1700.2 658.5 L1702.7 663 L1705.2 662.5 L1707.7 655.6 L1710.2 658.9 L1712.7 657.7 L1715.2 658.3 L1717.7 653.9 L1720.2 652.1 L1722.7 656.9 L1725.2 647.1 L1727.7 651.9 L1730.2 653.5 L1732.7 654.2 L1735.2 660.9 L1737.7 659.7 L1740.2 656.5 L1742.6 657.8 L1745.1 653.5 L1747.6 648.5 L1750.1 658 L1752.6 658.5 L1755.1 655 L1757.6 650 L1760.1 654 L1762.6 658.8 L1765.1 654.9 L1767.6 656.6 L1770.1 665.4 L1772.6 663.2 L1775.1 663.2 L1777.6 659.1 L1780.1 656.1 L1782.6 655.8 L1785.1 657.9 L1787.6 652.4 L1790.1 636.9 L1792.6 631.6 L1795.1 650.7 L1797.6 658 L1800.1 664.8 L1802.6 660.6 L1805.1 656.7 L1807.6 656.5 L1810.1 658.8 L1812.6 653.5 L1815.1 662.4 L1817.6 663.7 L1820.1 662 L1822.6 655.8 L1825.1 655.2 L1827.6 657.8 L1830 655 L1832.5 649.5 L1835 650.9 L1837.5 648.6 L1840 647.4 L1842.5 653.1 L1845 649.7 L1847.5 656.4 L1850 655.6 L1852.5 652.4 L1855 652.6 L1857.5 652.2 L1860 646.2 L1862.5 652.7 L1865 658.3 L1867.5 654.1 L1870 641.6 L1872.5 651 L1875 642.2" fill="none" stroke="#1f78c1" stroke-width="1.15"/>
<path d="M1425.5 657.3 L1428 657.3 L1430.5 658.7 L1433 655.7 L1435.5 660 L1438 651.7 L1440.5 650.6 L1443 652.5 L1445.5 658.9 L1448 653.7 L1450.5 656.8 L1453 657.2 L1455.5 657.3 L1458 661.6 L1460.5 656.7 L1463 646.3 L1465.5 651 L1468 660 L1470.5 658.6 L1472.9 658.1 L1475.4 660.1 L1477.9 662.3 L1480.4 661.2 L1482.9 660.3 L1485.4 661 L1487.9 655.3 L1490.4 658.8 L1492.9 660.6 L1495.4 658.9 L1497.9 657.9 L1500.4 644.5 L1502.9 650 L1505.4 624.3 L1507.9 632.5 L1510.4 637.6 L1512.9 624.4 L1515.4 639.5 L1517.9 624.5 L1520.4 658.8 L1522.9 656.4 L1525.4 654 L1527.9 632.9 L1530.4 635.2 L1532.9 623.2 L1535.4 629.8 L1537.9 610.4 L1540.4 573.5 L1542.9 617.2 L1545.4 641.4 L1547.9 635.5 L1550.4 653.5 L1552.9 647.1 L1555.4 652.7 L1557.9 633.6 L1560.3 634.8 L1562.8 649.5 L1565.3 630.4 L1567.8 635 L1570.3 656.5 L1572.8 652.9 L1575.3 646.1 L1577.8 654.6 L1580.3 660.2 L1582.8 657.6 L1585.3 651.2 L1587.8 656.3 L1590.3 647.7 L1592.8 656 L1595.3 655.4 L1597.8 651.3 L1600.3 655.2 L1602.8 652.2 L1605.3 645.8 L1607.8 654.8 L1610.3 658.5 L1612.8 655.3 L1615.3 658.7 L1617.8 664.7 L1620.3 655 L1622.8 653.6 L1625.3 637.6 L1627.8 645.1 L1630.3 648.2 L1632.8 658.1 L1635.3 663.9 L1637.8 665.4 L1640.3 661.4 L1642.8 655 L1645.3 657.5 L1647.8 652.3 L1650.2 653.2 L1652.7 650.9 L1655.2 654.2 L1657.7 655 L1660.2 654.6 L1662.7 656.9 L1665.2 661.2 L1667.7 655.7 L1670.2 653.3 L1672.7 650.7 L1675.2 663.3 L1677.7 660.8 L1680.2 657 L1682.7 661 L1685.2 661.1 L1687.7 657.6 L1690.2 653 L1692.7 655.4 L1695.2 653.8 L1697.7 656.4 L1700.2 649.5 L1702.7 652.3 L1705.2 646.3 L1707.7 646.5 L1710.2 636.3 L1712.7 640.6 L1715.2 625.5 L1717.7 648 L1720.2 638.1 L1722.7 637.2 L1725.2 625 L1727.7 645.5 L1730.2 628.5 L1732.7 647.1 L1735.2 646.7 L1737.7 647.8 L1740.2 647 L1742.6 651.8 L1745.1 648.4 L1747.6 651.4 L1750.1 643.3 L1752.6 641.7 L1755.1 658.1 L1757.6 658.4 L1760.1 653.6 L1762.6 649.4 L1765.1 640.4 L1767.6 653.3 L1770.1 649.4 L1772.6 655.5 L1775.1 647 L1777.6 652.8 L1780.1 652.5 L1782.6 640 L1785.1 643.4 L1787.6 649.2 L1790.1 658.7 L1792.6 647.3 L1795.1 652.3 L1797.6 652.5 L1800.1 648.7 L1802.6 663.6 L1805.1 659.9 L1807.6 646.6 L1810.1 647.5 L1812.6 654.6 L1815.1 656.7 L1817.6 648.5 L1820.1 638.6 L1822.6 640.4 L1825.1 644.6 L1827.6 656.8 L1830 648.3 L1832.5 651.4 L1835 651.3 L1837.5 651.6 L1840 644.5 L1842.5 650.5 L1845 654.6 L1847.5 644.6 L1850 645.7 L1852.5 654.3 L1855 653.1 L1857.5 655 L1860 651.4 L1862.5 648 L1865 645.6 L1867.5 646.1 L1870 640.3 L1872.5 638.3 L1875 646.6 L1875 670.5 L1425.5 670.5Z" fill="#ba43a9" fill-opacity=".2" stroke="none"/>
<path d="M1425.5 657.3 L1428 657.3 L1430.5 658.7 L1433 655.7 L1435.5 660 L1438 651.7 L1440.5 650.6 L1443 652.5 L1445.5 658.9 L1448 653.7 L1450.5 656.8 L1453 657.2 L1455.5 657.3 L1458 661.6 L1460.5 656.7 L1463 646.3 L1465.5 651 L1468 660 L1470.5 658.6 L1472.9 658.1 L1475.4 660.1 L1477.9 662.3 L1480.4 661.2 L1482.9 660.3 L1485.4 661 L1487.9 655.3 L1490.4 658.8 L1492.9 660.6 L1495.4 658.9 L1497.9 657.9 L1500.4 644.5 L1502.9 650 L1505.4 624.3 L1507.9 632.5 L1510.4 637.6 L1512.9 624.4 L1515.4 639.5 L1517.9 624.5 L1520.4 658.8 L1522.9 656.4 L1525.4 654 L1527.9 632.9 L1530.4 635.2 L1532.9 623.2 L1535.4 629.8 L1537.9 610.4 L1540.4 573.5 L1542.9 617.2 L1545.4 641.4 L1547.9 635.5 L1550.4 653.5 L1552.9 647.1 L1555.4 652.7 L1557.9 633.6 L1560.3 634.8 L1562.8 649.5 L1565.3 630.4 L1567.8 635 L1570.3 656.5 L1572.8 652.9 L1575.3 646.1 L1577.8 654.6 L1580.3 660.2 L1582.8 657.6 L1585.3 651.2 L1587.8 656.3 L1590.3 647.7 L1592.8 656 L1595.3 655.4 L1597.8 651.3 L1600.3 655.2 L1602.8 652.2 L1605.3 645.8 L1607.8 654.8 L1610.3 658.5 L1612.8 655.3 L1615.3 658.7 L1617.8 664.7 L1620.3 655 L1622.8 653.6 L1625.3 637.6 L1627.8 645.1 L1630.3 648.2 L1632.8 658.1 L1635.3 663.9 L1637.8 665.4 L1640.3 661.4 L1642.8 655 L1645.3 657.5 L1647.8 652.3 L1650.2 653.2 L1652.7 650.9 L1655.2 654.2 L1657.7 655 L1660.2 654.6 L1662.7 656.9 L1665.2 661.2 L1667.7 655.7 L1670.2 653.3 L1672.7 650.7 L1675.2 663.3 L1677.7 660.8 L1680.2 657 L1682.7 661 L1685.2 661.1 L1687.7 657.6 L1690.2 653 L1692.7 655.4 L1695.2 653.8 L1697.7 656.4 L1700.2 649.5 L1702.7 652.3 L1705.2 646.3 L1707.7 646.5 L1710.2 636.3 L1712.7 640.6 L1715.2 625.5 L1717.7 648 L1720.2 638.1 L1722.7 637.2 L1725.2 625 L1727.7 645.5 L1730.2 628.5 L1732.7 647.1 L1735.2 646.7 L1737.7 647.8 L1740.2 647 L1742.6 651.8 L1745.1 648.4 L1747.6 651.4 L1750.1 643.3 L1752.6 641.7 L1755.1 658.1 L1757.6 658.4 L1760.1 653.6 L1762.6 649.4 L1765.1 640.4 L1767.6 653.3 L1770.1 649.4 L1772.6 655.5 L1775.1 647 L1777.6 652.8 L1780.1 652.5 L1782.6 640 L1785.1 643.4 L1787.6 649.2 L1790.1 658.7 L1792.6 647.3 L1795.1 652.3 L1797.6 652.5 L1800.1 648.7 L1802.6 663.6 L1805.1 659.9 L1807.6 646.6 L1810.1 647.5 L1812.6 654.6 L1815.1 656.7 L1817.6 648.5 L1820.1 638.6 L1822.6 640.4 L1825.1 644.6 L1827.6 656.8 L1830 648.3 L1832.5 651.4 L1835 651.3 L1837.5 651.6 L1840 644.5 L1842.5 650.5 L1845 654.6 L1847.5 644.6 L1850 645.7 L1852.5 654.3 L1855 653.1 L1857.5 655 L1860 651.4 L1862.5 648 L1865 645.6 L1867.5 646.1 L1870 640.3 L1872.5 638.3 L1875 646.6" fill="none" stroke="#ba43a9" stroke-width="1.15"/>
<path d="M1425.5 659.7 L1428 653.2 L1430.5 660.6 L1433 665.4 L1435.5 661.4 L1438 643.8 L1440.5 637.3 L1443 650.5 L1445.5 658.2 L1448 664 L1450.5 661.4 L1453 665.6 L1455.5 665.3 L1458 664.4 L1460.5 665.6 L1463 661.5 L1465.5 661.2 L1468 659.3 L1470.5 663.5 L1472.9 657.2 L1475.4 643 L1477.9 652.6 L1480.4 661.5 L1482.9 661.5 L1485.4 664.8 L1487.9 659.9 L1490.4 659.6 L1492.9 666.4 L1495.4 664.9 L1497.9 657.9 L1500.4 644.8 L1502.9 625.4 L1505.4 597.8 L1507.9 627.2 L1510.4 601.4 L1512.9 624.4 L1515.4 642.1 L1517.9 639.9 L1520.4 635.4 L1522.9 652 L1525.4 652 L1527.9 632.3 L1530.4 608.9 L1532.9 636.6 L1535.4 630.9 L1537.9 639.5 L1540.4 629.9 L1542.9 639.1 L1545.4 639 L1547.9 635.5 L1550.4 638.1 L1552.9 646.9 L1555.4 664.3 L1557.9 653.2 L1560.3 636.5 L1562.8 628.9 L1565.3 636.5 L1567.8 638.4 L1570.3 640.5 L1572.8 633.9 L1575.3 648.6 L1577.8 653 L1580.3 646.8 L1582.8 652.2 L1585.3 657.9 L1587.8 653.9 L1590.3 648.2 L1592.8 648.4 L1595.3 649.9 L1597.8 653.8 L1600.3 661.6 L1602.8 658.8 L1605.3 662 L1607.8 666.4 L1610.3 667.3 L1612.8 660.1 L1615.3 662.3 L1617.8 659 L1620.3 646.7 L1622.8 632.1 L1625.3 630.8 L1627.8 648.4 L1630.3 648.6 L1632.8 655.5 L1635.3 659.4 L1637.8 657 L1640.3 661.2 L1642.8 656.4 L1645.3 656.8 L1647.8 663.8 L1650.2 659.7 L1652.7 663.1 L1655.2 667 L1657.7 668.2 L1660.2 662.3 L1662.7 660.7 L1665.2 656.7 L1667.7 652.4 L1670.2 661.8 L1672.7 664.9 L1675.2 658.7 L1677.7 660.6 L1680.2 661.8 L1682.7 657.6 L1685.2 650.9 L1687.7 654.2 L1690.2 661.8 L1692.7 663.7 L1695.2 663.7 L1697.7 662.7 L1700.2 661.9 L1702.7 649.6 L1705.2 639.5 L1707.7 650.6 L1710.2 645.8 L1712.7 644.9 L1715.2 647.6 L1717.7 642.7 L1720.2 643.4 L1722.7 639.2 L1725.2 645.6 L1727.7 646.9 L1730.2 643.9 L1732.7 654.5 L1735.2 657.5 L1737.7 658.5 L1740.2 653.6 L1742.6 651.9 L1745.1 646.1 L1747.6 647.9 L1750.1 656.1 L1752.6 655 L1755.1 657.9 L1757.6 666.9 L1760.1 651.7 L1762.6 648 L1765.1 647.5 L1767.6 655.5 L1770.1 648.1 L1772.6 650.2 L1775.1 657.3 L1777.6 650 L1780.1 652.4 L1782.6 654.1 L1785.1 653.7 L1787.6 656.3 L1790.1 661.3 L1792.6 654.1 L1795.1 650.8 L1797.6 643.9 L1800.1 648 L1802.6 643.6 L1805.1 627.1 L1807.6 646.6 L1810.1 651.9 L1812.6 653.9 L1815.1 652.8 L1817.6 656.3 L1820.1 653.6 L1822.6 660.4 L1825.1 651.1 L1827.6 650 L1830 657.8 L1832.5 649 L1835 647.2 L1837.5 640.1 L1840 656.2 L1842.5 655.1 L1845 656.1 L1847.5 657.7 L1850 652.3 L1852.5 653.3 L1855 648.3 L1857.5 643.1 L1860 640.2 L1862.5 638.8 L1865 638.3 L1867.5 649.5 L1870 651.7 L1872.5 648.4 L1875 645.1 L1875 670.5 L1425.5 670.5Z" fill="#705da0" fill-opacity=".2" stroke="none"/>
<path d="M1425.5 659.7 L1428 653.2 L1430.5 660.6 L1433 665.4 L1435.5 661.4 L1438 643.8 L1440.5 637.3 L1443 650.5 L1445.5 658.2 L1448 664 L1450.5 661.4 L1453 665.6 L1455.5 665.3 L1458 664.4 L1460.5 665.6 L1463 661.5 L1465.5 661.2 L1468 659.3 L1470.5 663.5 L1472.9 657.2 L1475.4 643 L1477.9 652.6 L1480.4 661.5 L1482.9 661.5 L1485.4 664.8 L1487.9 659.9 L1490.4 659.6 L1492.9 666.4 L1495.4 664.9 L1497.9 657.9 L1500.4 644.8 L1502.9 625.4 L1505.4 597.8 L1507.9 627.2 L1510.4 601.4 L1512.9 624.4 L1515.4 642.1 L1517.9 639.9 L1520.4 635.4 L1522.9 652 L1525.4 652 L1527.9 632.3 L1530.4 608.9 L1532.9 636.6 L1535.4 630.9 L1537.9 639.5 L1540.4 629.9 L1542.9 639.1 L1545.4 639 L1547.9 635.5 L1550.4 638.1 L1552.9 646.9 L1555.4 664.3 L1557.9 653.2 L1560.3 636.5 L1562.8 628.9 L1565.3 636.5 L1567.8 638.4 L1570.3 640.5 L1572.8 633.9 L1575.3 648.6 L1577.8 653 L1580.3 646.8 L1582.8 652.2 L1585.3 657.9 L1587.8 653.9 L1590.3 648.2 L1592.8 648.4 L1595.3 649.9 L1597.8 653.8 L1600.3 661.6 L1602.8 658.8 L1605.3 662 L1607.8 666.4 L1610.3 667.3 L1612.8 660.1 L1615.3 662.3 L1617.8 659 L1620.3 646.7 L1622.8 632.1 L1625.3 630.8 L1627.8 648.4 L1630.3 648.6 L1632.8 655.5 L1635.3 659.4 L1637.8 657 L1640.3 661.2 L1642.8 656.4 L1645.3 656.8 L1647.8 663.8 L1650.2 659.7 L1652.7 663.1 L1655.2 667 L1657.7 668.2 L1660.2 662.3 L1662.7 660.7 L1665.2 656.7 L1667.7 652.4 L1670.2 661.8 L1672.7 664.9 L1675.2 658.7 L1677.7 660.6 L1680.2 661.8 L1682.7 657.6 L1685.2 650.9 L1687.7 654.2 L1690.2 661.8 L1692.7 663.7 L1695.2 663.7 L1697.7 662.7 L1700.2 661.9 L1702.7 649.6 L1705.2 639.5 L1707.7 650.6 L1710.2 645.8 L1712.7 644.9 L1715.2 647.6 L1717.7 642.7 L1720.2 643.4 L1722.7 639.2 L1725.2 645.6 L1727.7 646.9 L1730.2 643.9 L1732.7 654.5 L1735.2 657.5 L1737.7 658.5 L1740.2 653.6 L1742.6 651.9 L1745.1 646.1 L1747.6 647.9 L1750.1 656.1 L1752.6 655 L1755.1 657.9 L1757.6 666.9 L1760.1 651.7 L1762.6 648 L1765.1 647.5 L1767.6 655.5 L1770.1 648.1 L1772.6 650.2 L1775.1 657.3 L1777.6 650 L1780.1 652.4 L1782.6 654.1 L1785.1 653.7 L1787.6 656.3 L1790.1 661.3 L1792.6 654.1 L1795.1 650.8 L1797.6 643.9 L1800.1 648 L1802.6 643.6 L1805.1 627.1 L1807.6 646.6 L1810.1 651.9 L1812.6 653.9 L1815.1 652.8 L1817.6 656.3 L1820.1 653.6 L1822.6 660.4 L1825.1 651.1 L1827.6 650 L1830 657.8 L1832.5 649 L1835 647.2 L1837.5 640.1 L1840 656.2 L1842.5 655.1 L1845 656.1 L1847.5 657.7 L1850 652.3 L1852.5 653.3 L1855 648.3 L1857.5 643.1 L1860 640.2 L1862.5 638.8 L1865 638.3 L1867.5 649.5 L1870 651.7 L1872.5 648.4 L1875 645.1" fill="none" stroke="#705da0" stroke-width="1.15"/>
<path d="M1425.5 665 L1428 662.8 L1430.5 663.9 L1433 660.1 L1435.5 665.7 L1438 665.8 L1440.5 655.2 L1443 646 L1445.5 652.9 L1448 663.2 L1450.5 665 L1453 662.3 L1455.5 667.7 L1458 661.3 L1460.5 664.7 L1463 662.3 L1465.5 660.5 L1468 662.5 L1470.5 662.9 L1472.9 664.7 L1475.4 665.5 L1477.9 658.3 L1480.4 661 L1482.9 664.7 L1485.4 662.1 L1487.9 655.9 L1490.4 660.4 L1492.9 666.9 L1495.4 664.3 L1497.9 659.2 L1500.4 645.3 L1502.9 630.4 L1505.4 626.2 L1507.9 630 L1510.4 632.5 L1512.9 638.1 L1515.4 640.6 L1517.9 648.1 L1520.4 662.9 L1522.9 661 L1525.4 663.1 L1527.9 649 L1530.4 638.8 L1532.9 650 L1535.4 652.4 L1537.9 650.7 L1540.4 643.2 L1542.9 649.2 L1545.4 652.6 L1547.9 652.4 L1550.4 659.7 L1552.9 660.4 L1555.4 652.6 L1557.9 646 L1560.3 645.6 L1562.8 654.9 L1565.3 645.3 L1567.8 658.9 L1570.3 653 L1572.8 640.8 L1575.3 638.5 L1577.8 640.3 L1580.3 650.2 L1582.8 653.6 L1585.3 656.4 L1587.8 661.3 L1590.3 660.2 L1592.8 657.3 L1595.3 663.4 L1597.8 662.4 L1600.3 661.8 L1602.8 658.8 L1605.3 661.3 L1607.8 660.3 L1610.3 663.5 L1612.8 664.4 L1615.3 660.9 L1617.8 658.9 L1620.3 662.8 L1622.8 664.5 L1625.3 663.3 L1627.8 665.8 L1630.3 661.3 L1632.8 659.1 L1635.3 661.1 L1637.8 662.4 L1640.3 660.1 L1642.8 662.4 L1645.3 661 L1647.8 661 L1650.2 656.2 L1652.7 659.6 L1655.2 658 L1657.7 660.2 L1660.2 660.7 L1662.7 663.7 L1665.2 660.4 L1667.7 660.6 L1670.2 661.5 L1672.7 662.1 L1675.2 664.8 L1677.7 667.4 L1680.2 664.9 L1682.7 663.1 L1685.2 661.8 L1687.7 662.2 L1690.2 659 L1692.7 666.5 L1695.2 661.1 L1697.7 658.7 L1700.2 654.8 L1702.7 657.9 L1705.2 656 L1707.7 655.3 L1710.2 650.1 L1712.7 652.2 L1715.2 640.7 L1717.7 649.8 L1720.2 644.6 L1722.7 643.1 L1725.2 646.6 L1727.7 641.6 L1730.2 654.4 L1732.7 664.9 L1735.2 660.6 L1737.7 660.6 L1740.2 658.6 L1742.6 659.8 L1745.1 657.6 L1747.6 655.8 L1750.1 653.4 L1752.6 652.2 L1755.1 658.1 L1757.6 656.8 L1760.1 655.5 L1762.6 657.5 L1765.1 656.2 L1767.6 662 L1770.1 654.3 L1772.6 656.5 L1775.1 655 L1777.6 663.1 L1780.1 660.3 L1782.6 653.7 L1785.1 649.4 L1787.6 653.4 L1790.1 655.2 L1792.6 659.2 L1795.1 662.8 L1797.6 661.1 L1800.1 659 L1802.6 659 L1805.1 655 L1807.6 651.2 L1810.1 647.2 L1812.6 652 L1815.1 655.5 L1817.6 656.6 L1820.1 643.4 L1822.6 650.5 L1825.1 652.5 L1827.6 658.6 L1830 659.8 L1832.5 657.2 L1835 659.1 L1837.5 659.4 L1840 655.3 L1842.5 653.4 L1845 654.8 L1847.5 659 L1850 650.5 L1852.5 649.3 L1855 654 L1857.5 649.7 L1860 650.4 L1862.5 654.3 L1865 660.4 L1867.5 661.2 L1870 655.4 L1872.5 650.5 L1875 659.5 L1875 670.5 L1425.5 670.5Z" fill="#508642" fill-opacity=".2" stroke="none"/>
<path d="M1425.5 665 L1428 662.8 L1430.5 663.9 L1433 660.1 L1435.5 665.7 L1438 665.8 L1440.5 655.2 L1443 646 L1445.5 652.9 L1448 663.2 L1450.5 665 L1453 662.3 L1455.5 667.7 L1458 661.3 L1460.5 664.7 L1463 662.3 L1465.5 660.5 L1468 662.5 L1470.5 662.9 L1472.9 664.7 L1475.4 665.5 L1477.9 658.3 L1480.4 661 L1482.9 664.7 L1485.4 662.1 L1487.9 655.9 L1490.4 660.4 L1492.9 666.9 L1495.4 664.3 L1497.9 659.2 L1500.4 645.3 L1502.9 630.4 L1505.4 626.2 L1507.9 630 L1510.4 632.5 L1512.9 638.1 L1515.4 640.6 L1517.9 648.1 L1520.4 662.9 L1522.9 661 L1525.4 663.1 L1527.9 649 L1530.4 638.8 L1532.9 650 L1535.4 652.4 L1537.9 650.7 L1540.4 643.2 L1542.9 649.2 L1545.4 652.6 L1547.9 652.4 L1550.4 659.7 L1552.9 660.4 L1555.4 652.6 L1557.9 646 L1560.3 645.6 L1562.8 654.9 L1565.3 645.3 L1567.8 658.9 L1570.3 653 L1572.8 640.8 L1575.3 638.5 L1577.8 640.3 L1580.3 650.2 L1582.8 653.6 L1585.3 656.4 L1587.8 661.3 L1590.3 660.2 L1592.8 657.3 L1595.3 663.4 L1597.8 662.4 L1600.3 661.8 L1602.8 658.8 L1605.3 661.3 L1607.8 660.3 L1610.3 663.5 L1612.8 664.4 L1615.3 660.9 L1617.8 658.9 L1620.3 662.8 L1622.8 664.5 L1625.3 663.3 L1627.8 665.8 L1630.3 661.3 L1632.8 659.1 L1635.3 661.1 L1637.8 662.4 L1640.3 660.1 L1642.8 662.4 L1645.3 661 L1647.8 661 L1650.2 656.2 L1652.7 659.6 L1655.2 658 L1657.7 660.2 L1660.2 660.7 L1662.7 663.7 L1665.2 660.4 L1667.7 660.6 L1670.2 661.5 L1672.7 662.1 L1675.2 664.8 L1677.7 667.4 L1680.2 664.9 L1682.7 663.1 L1685.2 661.8 L1687.7 662.2 L1690.2 659 L1692.7 666.5 L1695.2 661.1 L1697.7 658.7 L1700.2 654.8 L1702.7 657.9 L1705.2 656 L1707.7 655.3 L1710.2 650.1 L1712.7 652.2 L1715.2 640.7 L1717.7 649.8 L1720.2 644.6 L1722.7 643.1 L1725.2 646.6 L1727.7 641.6 L1730.2 654.4 L1732.7 664.9 L1735.2 660.6 L1737.7 660.6 L1740.2 658.6 L1742.6 659.8 L1745.1 657.6 L1747.6 655.8 L1750.1 653.4 L1752.6 652.2 L1755.1 658.1 L1757.6 656.8 L1760.1 655.5 L1762.6 657.5 L1765.1 656.2 L1767.6 662 L1770.1 654.3 L1772.6 656.5 L1775.1 655 L1777.6 663.1 L1780.1 660.3 L1782.6 653.7 L1785.1 649.4 L1787.6 653.4 L1790.1 655.2 L1792.6 659.2 L1795.1 662.8 L1797.6 661.1 L1800.1 659 L1802.6 659 L1805.1 655 L1807.6 651.2 L1810.1 647.2 L1812.6 652 L1815.1 655.5 L1817.6 656.6 L1820.1 643.4 L1822.6 650.5 L1825.1 652.5 L1827.6 658.6 L1830 659.8 L1832.5 657.2 L1835 659.1 L1837.5 659.4 L1840 655.3 L1842.5 653.4 L1845 654.8 L1847.5 659 L1850 650.5 L1852.5 649.3 L1855 654 L1857.5 649.7 L1860 650.4 L1862.5 654.3 L1865 660.4 L1867.5 661.2 L1870 655.4 L1872.5 650.5 L1875 659.5" fill="none" stroke="#508642" stroke-width="1.15"/>
<path d="M1425.5 659.4 L1428 663.7 L1430.5 659.7 L1433 663.7 L1435.5 665 L1438 663.4 L1440.5 661.5 L1443 663.7 L1445.5 664.9 L1448 660.5 L1450.5 662.6 L1453 659.5 L1455.5 658.2 L1458 659.9 L1460.5 663.2 L1463 660.5 L1465.5 652.3 L1468 651.7 L1470.5 657 L1472.9 661.8 L1475.4 663 L1477.9 658.8 L1480.4 660 L1482.9 658.4 L1485.4 658 L1487.9 656.4 L1490.4 656.3 L1492.9 649.1 L1495.4 652.7 L1497.9 657.8 L1500.4 648.1 L1502.9 622.7 L1505.4 638.8 L1507.9 649.5 L1510.4 647.5 L1512.9 635.4 L1515.4 655.9 L1517.9 645.1 L1520.4 645.9 L1522.9 651.4 L1525.4 651.2 L1527.9 636.4 L1530.4 628.9 L1532.9 639.2 L1535.4 633.7 L1537.9 624.5 L1540.4 620 L1542.9 633.4 L1545.4 636.5 L1547.9 653.8 L1550.4 644.5 L1552.9 654 L1555.4 637.6 L1557.9 639.8 L1560.3 637.6 L1562.8 638.1 L1565.3 637.1 L1567.8 641.3 L1570.3 632.7 L1572.8 648.2 L1575.3 638.8 L1577.8 647.4 L1580.3 645.6 L1582.8 650.8 L1585.3 634.4 L1587.8 649.4 L1590.3 655.2 L1592.8 651.4 L1595.3 644.9 L1597.8 645.4 L1600.3 647.9 L1602.8 643 L1605.3 647.8 L1607.8 652.3 L1610.3 655.2 L1612.8 661.9 L1615.3 656.9 L1617.8 663.5 L1620.3 654.1 L1622.8 650.8 L1625.3 656.2 L1627.8 648.7 L1630.3 649.2 L1632.8 653.7 L1635.3 653.9 L1637.8 651.2 L1640.3 649.7 L1642.8 656.6 L1645.3 653.8 L1647.8 658 L1650.2 659.2 L1652.7 657.6 L1655.2 658.6 L1657.7 659.7 L1660.2 646.4 L1662.7 654 L1665.2 657.3 L1667.7 655.8 L1670.2 657.8 L1672.7 654.8 L1675.2 658.1 L1677.7 657.2 L1680.2 660.2 L1682.7 664.5 L1685.2 655.1 L1687.7 654.9 L1690.2 659.6 L1692.7 654.3 L1695.2 658.2 L1697.7 654 L1700.2 657.2 L1702.7 662.4 L1705.2 653.4 L1707.7 649.5 L1710.2 652.5 L1712.7 648 L1715.2 655.9 L1717.7 664.2 L1720.2 651.3 L1722.7 649.4 L1725.2 646.5 L1727.7 658.7 L1730.2 658.8 L1732.7 649.9 L1735.2 657.8 L1737.7 655.9 L1740.2 658.9 L1742.6 653.4 L1745.1 648.1 L1747.6 639.8 L1750.1 651.2 L1752.6 646.5 L1755.1 644.7 L1757.6 650.9 L1760.1 654.4 L1762.6 660.1 L1765.1 652.1 L1767.6 650.7 L1770.1 657.6 L1772.6 647.8 L1775.1 650.7 L1777.6 653.9 L1780.1 659.8 L1782.6 651.9 L1785.1 656.6 L1787.6 648.8 L1790.1 646.5 L1792.6 647 L1795.1 650.9 L1797.6 650.8 L1800.1 640.8 L1802.6 631.9 L1805.1 648.9 L1807.6 650.4 L1810.1 645 L1812.6 655 L1815.1 651.2 L1817.6 653.7 L1820.1 648.6 L1822.6 642.6 L1825.1 643.7 L1827.6 628.7 L1830 630.9 L1832.5 653.9 L1835 654.1 L1837.5 649.5 L1840 640 L1842.5 640.7 L1845 643 L1847.5 650.6 L1850 647.7 L1852.5 643.1 L1855 643.7 L1857.5 627.5 L1860 645.7 L1862.5 638.3 L1865 634.3 L1867.5 624.2 L1870 641.2 L1872.5 642.8 L1875 649.5 L1875 670.5 L1425.5 670.5Z" fill="#cca300" fill-opacity=".2" stroke="none"/>
<path d="M1425.5 659.4 L1428 663.7 L1430.5 659.7 L1433 663.7 L1435.5 665 L1438 663.4 L1440.5 661.5 L1443 663.7 L1445.5 664.9 L1448 660.5 L1450.5 662.6 L1453 659.5 L1455.5 658.2 L1458 659.9 L1460.5 663.2 L1463 660.5 L1465.5 652.3 L1468 651.7 L1470.5 657 L1472.9 661.8 L1475.4 663 L1477.9 658.8 L1480.4 660 L1482.9 658.4 L1485.4 658 L1487.9 656.4 L1490.4 656.3 L1492.9 649.1 L1495.4 652.7 L1497.9 657.8 L1500.4 648.1 L1502.9 622.7 L1505.4 638.8 L1507.9 649.5 L1510.4 647.5 L1512.9 635.4 L1515.4 655.9 L1517.9 645.1 L1520.4 645.9 L1522.9 651.4 L1525.4 651.2 L1527.9 636.4 L1530.4 628.9 L1532.9 639.2 L1535.4 633.7 L1537.9 624.5 L1540.4 620 L1542.9 633.4 L1545.4 636.5 L1547.9 653.8 L1550.4 644.5 L1552.9 654 L1555.4 637.6 L1557.9 639.8 L1560.3 637.6 L1562.8 638.1 L1565.3 637.1 L1567.8 641.3 L1570.3 632.7 L1572.8 648.2 L1575.3 638.8 L1577.8 647.4 L1580.3 645.6 L1582.8 650.8 L1585.3 634.4 L1587.8 649.4 L1590.3 655.2 L1592.8 651.4 L1595.3 644.9 L1597.8 645.4 L1600.3 647.9 L1602.8 643 L1605.3 647.8 L1607.8 652.3 L1610.3 655.2 L1612.8 661.9 L1615.3 656.9 L1617.8 663.5 L1620.3 654.1 L1622.8 650.8 L1625.3 656.2 L1627.8 648.7 L1630.3 649.2 L1632.8 653.7 L1635.3 653.9 L1637.8 651.2 L1640.3 649.7 L1642.8 656.6 L1645.3 653.8 L1647.8 658 L1650.2 659.2 L1652.7 657.6 L1655.2 658.6 L1657.7 659.7 L1660.2 646.4 L1662.7 654 L1665.2 657.3 L1667.7 655.8 L1670.2 657.8 L1672.7 654.8 L1675.2 658.1 L1677.7 657.2 L1680.2 660.2 L1682.7 664.5 L1685.2 655.1 L1687.7 654.9 L1690.2 659.6 L1692.7 654.3 L1695.2 658.2 L1697.7 654 L1700.2 657.2 L1702.7 662.4 L1705.2 653.4 L1707.7 649.5 L1710.2 652.5 L1712.7 648 L1715.2 655.9 L1717.7 664.2 L1720.2 651.3 L1722.7 649.4 L1725.2 646.5 L1727.7 658.7 L1730.2 658.8 L1732.7 649.9 L1735.2 657.8 L1737.7 655.9 L1740.2 658.9 L1742.6 653.4 L1745.1 648.1 L1747.6 639.8 L1750.1 651.2 L1752.6 646.5 L1755.1 644.7 L1757.6 650.9 L1760.1 654.4 L1762.6 660.1 L1765.1 652.1 L1767.6 650.7 L1770.1 657.6 L1772.6 647.8 L1775.1 650.7 L1777.6 653.9 L1780.1 659.8 L1782.6 651.9 L1785.1 656.6 L1787.6 648.8 L1790.1 646.5 L1792.6 647 L1795.1 650.9 L1797.6 650.8 L1800.1 640.8 L1802.6 631.9 L1805.1 648.9 L1807.6 650.4 L1810.1 645 L1812.6 655 L1815.1 651.2 L1817.6 653.7 L1820.1 648.6 L1822.6 642.6 L1825.1 643.7 L1827.6 628.7 L1830 630.9 L1832.5 653.9 L1835 654.1 L1837.5 649.5 L1840 640 L1842.5 640.7 L1845 643 L1847.5 650.6 L1850 647.7 L1852.5 643.1 L1855 643.7 L1857.5 627.5 L1860 645.7 L1862.5 638.3 L1865 634.3 L1867.5 624.2 L1870 641.2 L1872.5 642.8 L1875 649.5" fill="none" stroke="#cca300" stroke-width="1.15"/>
<path d="M1425.5 661.9 L1428 661.8 L1430.5 661.4 L1433 663.2 L1435.5 662.2 L1438 659.1 L1440.5 659 L1443 662.2 L1445.5 663.1 L1448 664.8 L1450.5 663.5 L1453 663 L1455.5 663.4 L1458 662.7 L1460.5 666.1 L1463 663.7 L1465.5 659.7 L1468 663.9 L1470.5 661.3 L1472.9 659.9 L1475.4 656.9 L1477.9 661.4 L1480.4 662.7 L1482.9 663.4 L1485.4 666.1 L1487.9 664.5 L1490.4 663 L1492.9 662.1 L1495.4 661.2 L1497.9 650.7 L1500.4 636.8 L1502.9 636.3 L1505.4 637.7 L1507.9 648.6 L1510.4 624.4 L1512.9 619 L1515.4 636.8 L1517.9 647.3 L1520.4 655 L1522.9 653.1 L1525.4 657.5 L1527.9 652.6 L1530.4 649.8 L1532.9 645 L1535.4 635.5 L1537.9 635.7 L1540.4 644.5 L1542.9 637.8 L1545.4 644.8 L1547.9 641.6 L1550.4 628.7 L1552.9 644.6 L1555.4 652.1 L1557.9 645.7 L1560.3 650.8 L1562.8 653.4 L1565.3 658.2 L1567.8 665.5 L1570.3 659.4 L1572.8 636.2 L1575.3 653.1 L1577.8 653.8 L1580.3 652.8 L1582.8 656.2 L1585.3 659.1 L1587.8 662 L1590.3 662.8 L1592.8 655.3 L1595.3 654.8 L1597.8 656.1 L1600.3 661 L1602.8 665 L1605.3 665.1 L1607.8 660.7 L1610.3 663.2 L1612.8 657 L1615.3 658 L1617.8 653.9 L1620.3 657.1 L1622.8 661 L1625.3 659.2 L1627.8 654.5 L1630.3 636.9 L1632.8 654.5 L1635.3 662.8 L1637.8 663 L1640.3 659.1 L1642.8 664.4 L1645.3 665.2 L1647.8 664.4 L1650.2 660 L1652.7 656.3 L1655.2 655.5 L1657.7 664.6 L1660.2 652.3 L1662.7 657.4 L1665.2 659.5 L1667.7 655.4 L1670.2 642 L1672.7 641.4 L1675.2 654.8 L1677.7 662.2 L1680.2 658.7 L1682.7 660.2 L1685.2 659.2 L1687.7 665.3 L1690.2 663.3 L1692.7 661.3 L1695.2 664.9 L1697.7 661.4 L1700.2 662.3 L1702.7 662.8 L1705.2 661.4 L1707.7 658 L1710.2 662.7 L1712.7 651.8 L1715.2 643.3 L1717.7 652.4 L1720.2 647.8 L1722.7 656 L1725.2 649.5 L1727.7 648.6 L1730.2 657.5 L1732.7 658.9 L1735.2 663 L1737.7 660.6 L1740.2 661.1 L1742.6 664.4 L1745.1 658.4 L1747.6 663.3 L1750.1 658.2 L1752.6 655.3 L1755.1 655.4 L1757.6 660.5 L1760.1 652.1 L1762.6 652.4 L1765.1 659.2 L1767.6 663.3 L1770.1 657.6 L1772.6 657.7 L1775.1 649.8 L1777.6 640.2 L1780.1 651.3 L1782.6 655.3 L1785.1 653.2 L1787.6 661.4 L1790.1 656.4 L1792.6 653.6 L1795.1 655.6 L1797.6 659.8 L1800.1 653.8 L1802.6 657.4 L1805.1 656.3 L1807.6 657.9 L1810.1 656.5 L1812.6 653.9 L1815.1 654.7 L1817.6 666 L1820.1 665.9 L1822.6 660.3 L1825.1 658.5 L1827.6 656.2 L1830 648.8 L1832.5 654.8 L1835 657.1 L1837.5 654.5 L1840 650.2 L1842.5 661.6 L1845 656.8 L1847.5 651.5 L1850 657.9 L1852.5 657.5 L1855 657.2 L1857.5 669 L1860 667.4 L1862.5 664.3 L1865 655.9 L1867.5 651.5 L1870 646.5 L1872.5 647.3 L1875 650.7 L1875 670.5 L1425.5 670.5Z" fill="#447ebc" fill-opacity=".2" stroke="none"/>
<path d="M1425.5 661.9 L1428 661.8 L1430.5 661.4 L1433 663.2 L1435.5 662.2 L1438 659.1 L1440.5 659 L1443 662.2 L1445.5 663.1 L1448 664.8 L1450.5 663.5 L1453 663 L1455.5 663.4 L1458 662.7 L1460.5 666.1 L1463 663.7 L1465.5 659.7 L1468 663.9 L1470.5 661.3 L1472.9 659.9 L1475.4 656.9 L1477.9 661.4 L1480.4 662.7 L1482.9 663.4 L1485.4 666.1 L1487.9 664.5 L1490.4 663 L1492.9 662.1 L1495.4 661.2 L1497.9 650.7 L1500.4 636.8 L1502.9 636.3 L1505.4 637.7 L1507.9 648.6 L1510.4 624.4 L1512.9 619 L1515.4 636.8 L1517.9 647.3 L1520.4 655 L1522.9 653.1 L1525.4 657.5 L1527.9 652.6 L1530.4 649.8 L1532.9 645 L1535.4 635.5 L1537.9 635.7 L1540.4 644.5 L1542.9 637.8 L1545.4 644.8 L1547.9 641.6 L1550.4 628.7 L1552.9 644.6 L1555.4 652.1 L1557.9 645.7 L1560.3 650.8 L1562.8 653.4 L1565.3 658.2 L1567.8 665.5 L1570.3 659.4 L1572.8 636.2 L1575.3 653.1 L1577.8 653.8 L1580.3 652.8 L1582.8 656.2 L1585.3 659.1 L1587.8 662 L1590.3 662.8 L1592.8 655.3 L1595.3 654.8 L1597.8 656.1 L1600.3 661 L1602.8 665 L1605.3 665.1 L1607.8 660.7 L1610.3 663.2 L1612.8 657 L1615.3 658 L1617.8 653.9 L1620.3 657.1 L1622.8 661 L1625.3 659.2 L1627.8 654.5 L1630.3 636.9 L1632.8 654.5 L1635.3 662.8 L1637.8 663 L1640.3 659.1 L1642.8 664.4 L1645.3 665.2 L1647.8 664.4 L1650.2 660 L1652.7 656.3 L1655.2 655.5 L1657.7 664.6 L1660.2 652.3 L1662.7 657.4 L1665.2 659.5 L1667.7 655.4 L1670.2 642 L1672.7 641.4 L1675.2 654.8 L1677.7 662.2 L1680.2 658.7 L1682.7 660.2 L1685.2 659.2 L1687.7 665.3 L1690.2 663.3 L1692.7 661.3 L1695.2 664.9 L1697.7 661.4 L1700.2 662.3 L1702.7 662.8 L1705.2 661.4 L1707.7 658 L1710.2 662.7 L1712.7 651.8 L1715.2 643.3 L1717.7 652.4 L1720.2 647.8 L1722.7 656 L1725.2 649.5 L1727.7 648.6 L1730.2 657.5 L1732.7 658.9 L1735.2 663 L1737.7 660.6 L1740.2 661.1 L1742.6 664.4 L1745.1 658.4 L1747.6 663.3 L1750.1 658.2 L1752.6 655.3 L1755.1 655.4 L1757.6 660.5 L1760.1 652.1 L1762.6 652.4 L1765.1 659.2 L1767.6 663.3 L1770.1 657.6 L1772.6 657.7 L1775.1 649.8 L1777.6 640.2 L1780.1 651.3 L1782.6 655.3 L1785.1 653.2 L1787.6 661.4 L1790.1 656.4 L1792.6 653.6 L1795.1 655.6 L1797.6 659.8 L1800.1 653.8 L1802.6 657.4 L1805.1 656.3 L1807.6 657.9 L1810.1 656.5 L1812.6 653.9 L1815.1 654.7 L1817.6 666 L1820.1 665.9 L1822.6 660.3 L1825.1 658.5 L1827.6 656.2 L1830 648.8 L1832.5 654.8 L1835 657.1 L1837.5 654.5 L1840 650.2 L1842.5 661.6 L1845 656.8 L1847.5 651.5 L1850 657.9 L1852.5 657.5 L1855 657.2 L1857.5 669 L1860 667.4 L1862.5 664.3 L1865 655.9 L1867.5 651.5 L1870 646.5 L1872.5 647.3 L1875 650.7" fill="none" stroke="#447ebc" stroke-width="1.15"/>
<path d="M1425.5 658.3 L1428 661.8 L1430.5 662.4 L1433 663.9 L1435.5 662.1 L1438 663 L1440.5 661.5 L1443 662.2 L1445.5 658.1 L1448 663 L1450.5 659.3 L1453 651.1 L1455.5 659.3 L1458 658.7 L1460.5 664.3 L1463 664.1 L1465.5 657.9 L1468 654.2 L1470.5 646 L1472.9 656.5 L1475.4 658.5 L1477.9 661 L1480.4 657.8 L1482.9 658.6 L1485.4 660.9 L1487.9 660.7 L1490.4 660.5 L1492.9 655.9 L1495.4 659.4 L1497.9 653.2 L1500.4 627.7 L1502.9 639.5 L1505.4 634.4 L1507.9 632.5 L1510.4 639.1 L1512.9 640 L1515.4 649.3 L1517.9 643.2 L1520.4 644.5 L1522.9 653.8 L1525.4 660.9 L1527.9 643 L1530.4 629.3 L1532.9 637.2 L1535.4 642.9 L1537.9 644.3 L1540.4 635.6 L1542.9 643 L1545.4 653.7 L1547.9 645.2 L1550.4 660.6 L1552.9 651.7 L1555.4 649.5 L1557.9 641.7 L1560.3 645.3 L1562.8 646.4 L1565.3 636.6 L1567.8 632.7 L1570.3 628.5 L1572.8 645.3 L1575.3 651.7 L1577.8 645.7 L1580.3 656.9 L1582.8 660.3 L1585.3 650.8 L1587.8 637.5 L1590.3 646.6 L1592.8 651.1 L1595.3 651.1 L1597.8 657.7 L1600.3 652.4 L1602.8 660.5 L1605.3 661.6 L1607.8 669 L1610.3 657.6 L1612.8 659.2 L1615.3 657.2 L1617.8 660.5 L1620.3 659.3 L1622.8 651.4 L1625.3 653.3 L1627.8 655.1 L1630.3 661.1 L1632.8 660.6 L1635.3 656.2 L1637.8 649.6 L1640.3 650 L1642.8 650.4 L1645.3 649.6 L1647.8 650.8 L1650.2 653.2 L1652.7 654.1 L1655.2 646.8 L1657.7 644.8 L1660.2 656.2 L1662.7 658.4 L1665.2 657.4 L1667.7 658.5 L1670.2 659.6 L1672.7 657.4 L1675.2 661.3 L1677.7 656.6 L1680.2 661.9 L1682.7 668 L1685.2 657.5 L1687.7 662 L1690.2 664.6 L1692.7 662.3 L1695.2 659.3 L1697.7 665.1 L1700.2 651.5 L1702.7 661.9 L1705.2 655.3 L1707.7 649.5 L1710.2 648.5 L1712.7 640.6 L1715.2 632.8 L1717.7 638.6 L1720.2 640.2 L1722.7 645.5 L1725.2 650.4 L1727.7 650.9 L1730.2 666.1 L1732.7 655.5 L1735.2 647.4 L1737.7 648.9 L1740.2 653.4 L1742.6 654.8 L1745.1 656.1 L1747.6 653.8 L1750.1 658 L1752.6 661.6 L1755.1 666.4 L1757.6 657.9 L1760.1 665.4 L1762.6 666.4 L1765.1 653.8 L1767.6 659.4 L1770.1 657.6 L1772.6 663.9 L1775.1 660.8 L1777.6 659.8 L1780.1 649.9 L1782.6 653.2 L1785.1 648.3 L1787.6 654 L1790.1 655.6 L1792.6 652.8 L1795.1 661 L1797.6 657 L1800.1 658.9 L1802.6 651.1 L1805.1 648.9 L1807.6 652.9 L1810.1 661.8 L1812.6 660.1 L1815.1 649.1 L1817.6 653.1 L1820.1 660.1 L1822.6 656.6 L1825.1 654.1 L1827.6 654.7 L1830 658 L1832.5 657.5 L1835 652.7 L1837.5 650.4 L1840 650.1 L1842.5 655.5 L1845 660.4 L1847.5 653.2 L1850 649.5 L1852.5 655.5 L1855 650.8 L1857.5 655.1 L1860 642.8 L1862.5 644.1 L1865 639.5 L1867.5 644.1 L1870 662.4 L1872.5 651.7 L1875 646 L1875 670.5 L1425.5 670.5Z" fill="#c15c17" fill-opacity=".2" stroke="none"/>
<path d="M1425.5 658.3 L1428 661.8 L1430.5 662.4 L1433 663.9 L1435.5 662.1 L1438 663 L1440.5 661.5 L1443 662.2 L1445.5 658.1 L1448 663 L1450.5 659.3 L1453 651.1 L1455.5 659.3 L1458 658.7 L1460.5 664.3 L1463 664.1 L1465.5 657.9 L1468 654.2 L1470.5 646 L1472.9 656.5 L1475.4 658.5 L1477.9 661 L1480.4 657.8 L1482.9 658.6 L1485.4 660.9 L1487.9 660.7 L1490.4 660.5 L1492.9 655.9 L1495.4 659.4 L1497.9 653.2 L1500.4 627.7 L1502.9 639.5 L1505.4 634.4 L1507.9 632.5 L1510.4 639.1 L1512.9 640 L1515.4 649.3 L1517.9 643.2 L1520.4 644.5 L1522.9 653.8 L1525.4 660.9 L1527.9 643 L1530.4 629.3 L1532.9 637.2 L1535.4 642.9 L1537.9 644.3 L1540.4 635.6 L1542.9 643 L1545.4 653.7 L1547.9 645.2 L1550.4 660.6 L1552.9 651.7 L1555.4 649.5 L1557.9 641.7 L1560.3 645.3 L1562.8 646.4 L1565.3 636.6 L1567.8 632.7 L1570.3 628.5 L1572.8 645.3 L1575.3 651.7 L1577.8 645.7 L1580.3 656.9 L1582.8 660.3 L1585.3 650.8 L1587.8 637.5 L1590.3 646.6 L1592.8 651.1 L1595.3 651.1 L1597.8 657.7 L1600.3 652.4 L1602.8 660.5 L1605.3 661.6 L1607.8 669 L1610.3 657.6 L1612.8 659.2 L1615.3 657.2 L1617.8 660.5 L1620.3 659.3 L1622.8 651.4 L1625.3 653.3 L1627.8 655.1 L1630.3 661.1 L1632.8 660.6 L1635.3 656.2 L1637.8 649.6 L1640.3 650 L1642.8 650.4 L1645.3 649.6 L1647.8 650.8 L1650.2 653.2 L1652.7 654.1 L1655.2 646.8 L1657.7 644.8 L1660.2 656.2 L1662.7 658.4 L1665.2 657.4 L1667.7 658.5 L1670.2 659.6 L1672.7 657.4 L1675.2 661.3 L1677.7 656.6 L1680.2 661.9 L1682.7 668 L1685.2 657.5 L1687.7 662 L1690.2 664.6 L1692.7 662.3 L1695.2 659.3 L1697.7 665.1 L1700.2 651.5 L1702.7 661.9 L1705.2 655.3 L1707.7 649.5 L1710.2 648.5 L1712.7 640.6 L1715.2 632.8 L1717.7 638.6 L1720.2 640.2 L1722.7 645.5 L1725.2 650.4 L1727.7 650.9 L1730.2 666.1 L1732.7 655.5 L1735.2 647.4 L1737.7 648.9 L1740.2 653.4 L1742.6 654.8 L1745.1 656.1 L1747.6 653.8 L1750.1 658 L1752.6 661.6 L1755.1 666.4 L1757.6 657.9 L1760.1 665.4 L1762.6 666.4 L1765.1 653.8 L1767.6 659.4 L1770.1 657.6 L1772.6 663.9 L1775.1 660.8 L1777.6 659.8 L1780.1 649.9 L1782.6 653.2 L1785.1 648.3 L1787.6 654 L1790.1 655.6 L1792.6 652.8 L1795.1 661 L1797.6 657 L1800.1 658.9 L1802.6 651.1 L1805.1 648.9 L1807.6 652.9 L1810.1 661.8 L1812.6 660.1 L1815.1 649.1 L1817.6 653.1 L1820.1 660.1 L1822.6 656.6 L1825.1 654.1 L1827.6 654.7 L1830 658 L1832.5 657.5 L1835 652.7 L1837.5 650.4 L1840 650.1 L1842.5 655.5 L1845 660.4 L1847.5 653.2 L1850 649.5 L1852.5 655.5 L1855 650.8 L1857.5 655.1 L1860 642.8 L1862.5 644.1 L1865 639.5 L1867.5 644.1 L1870 662.4 L1872.5 651.7 L1875 646" fill="none" stroke="#c15c17" stroke-width="1.15"/>
<path d="M1425.5 662 L1428 661 L1430.5 660.6 L1433 663.5 L1435.5 664.5 L1438 664.8 L1440.5 665.1 L1443 663.1 L1445.5 661.4 L1448 659.2 L1450.5 662.6 L1453 664.1 L1455.5 662.6 L1458 662.7 L1460.5 662.9 L1463 664.1 L1465.5 663.8 L1468 664.1 L1470.5 663.5 L1472.9 667.1 L1475.4 664 L1477.9 664.2 L1480.4 666.3 L1482.9 667.1 L1485.4 664.8 L1487.9 657.4 L1490.4 656.1 L1492.9 657 L1495.4 661.6 L1497.9 653.5 L1500.4 631.5 L1502.9 620.9 L1505.4 636.4 L1507.9 639.5 L1510.4 651.9 L1512.9 655 L1515.4 638 L1517.9 639.6 L1520.4 649 L1522.9 657.4 L1525.4 655.9 L1527.9 645.4 L1530.4 643.9 L1532.9 648.1 L1535.4 640.9 L1537.9 645.2 L1540.4 643.9 L1542.9 634.7 L1545.4 641.4 L1547.9 648.7 L1550.4 668.1 L1552.9 666.5 L1555.4 663.6 L1557.9 658.9 L1560.3 647.2 L1562.8 647.6 L1565.3 640.1 L1567.8 641.9 L1570.3 640.1 L1572.8 632.1 L1575.3 612.7 L1577.8 634.6 L1580.3 656.2 L1582.8 656.3 L1585.3 652.3 L1587.8 656.6 L1590.3 658.4 L1592.8 656.7 L1595.3 653.2 L1597.8 655.3 L1600.3 654.3 L1602.8 651.1 L1605.3 651 L1607.8 654.1 L1610.3 660.6 L1612.8 661.2 L1615.3 655.6 L1617.8 643.1 L1620.3 655.6 L1622.8 658.8 L1625.3 655.7 L1627.8 656.7 L1630.3 654.7 L1632.8 658.9 L1635.3 660.2 L1637.8 666.9 L1640.3 665.7 L1642.8 662.4 L1645.3 659.5 L1647.8 659.3 L1650.2 656 L1652.7 646.6 L1655.2 644 L1657.7 658 L1660.2 662.7 L1662.7 657 L1665.2 658.6 L1667.7 658.7 L1670.2 657.1 L1672.7 659.6 L1675.2 662.9 L1677.7 661.4 L1680.2 662.8 L1682.7 659.9 L1685.2 661.4 L1687.7 657.8 L1690.2 658.6 L1692.7 654.4 L1695.2 657.7 L1697.7 657.3 L1700.2 661 L1702.7 657.7 L1705.2 660.1 L1707.7 660.5 L1710.2 662.6 L1712.7 661.8 L1715.2 661.6 L1717.7 650.7 L1720.2 649.9 L1722.7 649.1 L1725.2 641.6 L1727.7 652.5 L1730.2 657.7 L1732.7 661.3 L1735.2 657.2 L1737.7 657.1 L1740.2 661.1 L1742.6 659.5 L1745.1 656.5 L1747.6 652.9 L1750.1 665.2 L1752.6 659.4 L1755.1 657.8 L1757.6 652.4 L1760.1 659 L1762.6 654 L1765.1 660.4 L1767.6 653.5 L1770.1 650.7 L1772.6 649 L1775.1 652.3 L1777.6 647.1 L1780.1 653.7 L1782.6 655.6 L1785.1 660.4 L1787.6 650.5 L1790.1 655.7 L1792.6 645.8 L1795.1 649.5 L1797.6 651.1 L1800.1 655.6 L1802.6 654.7 L1805.1 652.6 L1807.6 651.8 L1810.1 645.9 L1812.6 651.6 L1815.1 652.2 L1817.6 649.3 L1820.1 651.4 L1822.6 652.6 L1825.1 661 L1827.6 656 L1830 654.7 L1832.5 654.9 L1835 645.1 L1837.5 640.1 L1840 652.5 L1842.5 664.9 L1845 659.5 L1847.5 654.2 L1850 651.6 L1852.5 653.6 L1855 652.9 L1857.5 652.8 L1860 650.6 L1862.5 650.4 L1865 652 L1867.5 644.5 L1870 654.6 L1872.5 648.8 L1875 644.6 L1875 670.5 L1425.5 670.5Z" fill="#890f02" fill-opacity=".2" stroke="none"/>
<path d="M1425.5 662 L1428 661 L1430.5 660.6 L1433 663.5 L1435.5 664.5 L1438 664.8 L1440.5 665.1 L1443 663.1 L1445.5 661.4 L1448 659.2 L1450.5 662.6 L1453 664.1 L1455.5 662.6 L1458 662.7 L1460.5 662.9 L1463 664.1 L1465.5 663.8 L1468 664.1 L1470.5 663.5 L1472.9 667.1 L1475.4 664 L1477.9 664.2 L1480.4 666.3 L1482.9 667.1 L1485.4 664.8 L1487.9 657.4 L1490.4 656.1 L1492.9 657 L1495.4 661.6 L1497.9 653.5 L1500.4 631.5 L1502.9 620.9 L1505.4 636.4 L1507.9 639.5 L1510.4 651.9 L1512.9 655 L1515.4 638 L1517.9 639.6 L1520.4 649 L1522.9 657.4 L1525.4 655.9 L1527.9 645.4 L1530.4 643.9 L1532.9 648.1 L1535.4 640.9 L1537.9 645.2 L1540.4 643.9 L1542.9 634.7 L1545.4 641.4 L1547.9 648.7 L1550.4 668.1 L1552.9 666.5 L1555.4 663.6 L1557.9 658.9 L1560.3 647.2 L1562.8 647.6 L1565.3 640.1 L1567.8 641.9 L1570.3 640.1 L1572.8 632.1 L1575.3 612.7 L1577.8 634.6 L1580.3 656.2 L1582.8 656.3 L1585.3 652.3 L1587.8 656.6 L1590.3 658.4 L1592.8 656.7 L1595.3 653.2 L1597.8 655.3 L1600.3 654.3 L1602.8 651.1 L1605.3 651 L1607.8 654.1 L1610.3 660.6 L1612.8 661.2 L1615.3 655.6 L1617.8 643.1 L1620.3 655.6 L1622.8 658.8 L1625.3 655.7 L1627.8 656.7 L1630.3 654.7 L1632.8 658.9 L1635.3 660.2 L1637.8 666.9 L1640.3 665.7 L1642.8 662.4 L1645.3 659.5 L1647.8 659.3 L1650.2 656 L1652.7 646.6 L1655.2 644 L1657.7 658 L1660.2 662.7 L1662.7 657 L1665.2 658.6 L1667.7 658.7 L1670.2 657.1 L1672.7 659.6 L1675.2 662.9 L1677.7 661.4 L1680.2 662.8 L1682.7 659.9 L1685.2 661.4 L1687.7 657.8 L1690.2 658.6 L1692.7 654.4 L1695.2 657.7 L1697.7 657.3 L1700.2 661 L1702.7 657.7 L1705.2 660.1 L1707.7 660.5 L1710.2 662.6 L1712.7 661.8 L1715.2 661.6 L1717.7 650.7 L1720.2 649.9 L1722.7 649.1 L1725.2 641.6 L1727.7 652.5 L1730.2 657.7 L1732.7 661.3 L1735.2 657.2 L1737.7 657.1 L1740.2 661.1 L1742.6 659.5 L1745.1 656.5 L1747.6 652.9 L1750.1 665.2 L1752.6 659.4 L1755.1 657.8 L1757.6 652.4 L1760.1 659 L1762.6 654 L1765.1 660.4 L1767.6 653.5 L1770.1 650.7 L1772.6 649 L1775.1 652.3 L1777.6 647.1 L1780.1 653.7 L1782.6 655.6 L1785.1 660.4 L1787.6 650.5 L1790.1 655.7 L1792.6 645.8 L1795.1 649.5 L1797.6 651.1 L1800.1 655.6 L1802.6 654.7 L1805.1 652.6 L1807.6 651.8 L1810.1 645.9 L1812.6 651.6 L1815.1 652.2 L1817.6 649.3 L1820.1 651.4 L1822.6 652.6 L1825.1 661 L1827.6 656 L1830 654.7 L1832.5 654.9 L1835 645.1 L1837.5 640.1 L1840 652.5 L1842.5 664.9 L1845 659.5 L1847.5 654.2 L1850 651.6 L1852.5 653.6 L1855 652.9 L1857.5 652.8 L1860 650.6 L1862.5 650.4 L1865 652 L1867.5 644.5 L1870 654.6 L1872.5 648.8 L1875 644.6" fill="none" stroke="#890f02" stroke-width="1.15"/>
<path d="M1425.5 664.1 L1428 663.6 L1430.5 664.8 L1433 659.3 L1435.5 664.7 L1438 662.7 L1440.5 656.3 L1443 656.9 L1445.5 661.9 L1448 662.4 L1450.5 656.4 L1453 656.4 L1455.5 659.6 L1458 660 L1460.5 666.3 L1463 666.2 L1465.5 660.8 L1468 657.6 L1470.5 662 L1472.9 661.4 L1475.4 663.4 L1477.9 668.8 L1480.4 663.6 L1482.9 664.1 L1485.4 658 L1487.9 652 L1490.4 652.3 L1492.9 659.2 L1495.4 667.4 L1497.9 665.7 L1500.4 658.8 L1502.9 637.2 L1505.4 639.2 L1507.9 647.7 L1510.4 634.1 L1512.9 636.9 L1515.4 632.5 L1517.9 633.8 L1520.4 640.9 L1522.9 653.4 L1525.4 655.7 L1527.9 645.3 L1530.4 654.7 L1532.9 644 L1535.4 635.1 L1537.9 632.5 L1540.4 634.2 L1542.9 622.7 L1545.4 633.3 L1547.9 643.8 L1550.4 659.6 L1552.9 657.6 L1555.4 644.1 L1557.9 640.8 L1560.3 641.9 L1562.8 631.1 L1565.3 638.7 L1567.8 637 L1570.3 628.9 L1572.8 641.6 L1575.3 649.7 L1577.8 651.2 L1580.3 657 L1582.8 658.2 L1585.3 669 L1587.8 663.8 L1590.3 662.8 L1592.8 654.8 L1595.3 665.3 L1597.8 655.5 L1600.3 658.4 L1602.8 655.1 L1605.3 649.2 L1607.8 658.9 L1610.3 657 L1612.8 654 L1615.3 645.1 L1617.8 655.1 L1620.3 660.6 L1622.8 656.4 L1625.3 664.1 L1627.8 646.6 L1630.3 639.3 L1632.8 653.1 L1635.3 658.1 L1637.8 652.8 L1640.3 656.4 L1642.8 657.4 L1645.3 655 L1647.8 659.8 L1650.2 660.8 L1652.7 659.8 L1655.2 662.2 L1657.7 661.1 L1660.2 661.8 L1662.7 664.7 L1665.2 664.4 L1667.7 658 L1670.2 659.7 L1672.7 654.9 L1675.2 656.9 L1677.7 658 L1680.2 656.1 L1682.7 658.3 L1685.2 659.1 L1687.7 658.4 L1690.2 659.7 L1692.7 659.6 L1695.2 661.5 L1697.7 660.9 L1700.2 660.9 L1702.7 661.8 L1705.2 652 L1707.7 642.2 L1710.2 643 L1712.7 624.6 L1715.2 643.7 L1717.7 641.2 L1720.2 642.6 L1722.7 645.7 L1725.2 644.7 L1727.7 664.4 L1730.2 657.7 L1732.7 652.5 L1735.2 659.4 L1737.7 654.5 L1740.2 656.1 L1742.6 653.1 L1745.1 651.1 L1747.6 654.2 L1750.1 657.4 L1752.6 652.2 L1755.1 649.1 L1757.6 647.6 L1760.1 651.1 L1762.6 650.5 L1765.1 655 L1767.6 651.7 L1770.1 654.8 L1772.6 664.7 L1775.1 663.4 L1777.6 662.7 L1780.1 658.5 L1782.6 651.7 L1785.1 651.1 L1787.6 655.5 L1790.1 646 L1792.6 647 L1795.1 644.8 L1797.6 650.8 L1800.1 651.7 L1802.6 656.2 L1805.1 654.6 L1807.6 653.3 L1810.1 659.4 L1812.6 649.6 L1815.1 640.5 L1817.6 649.9 L1820.1 649.3 L1822.6 650.3 L1825.1 651.2 L1827.6 644.5 L1830 631.3 L1832.5 650.1 L1835 652.6 L1837.5 655.7 L1840 660.5 L1842.5 655.6 L1845 661.2 L1847.5 653.7 L1850 642.7 L1852.5 645.5 L1855 651.5 L1857.5 653.8 L1860 649.8 L1862.5 659.3 L1865 652.1 L1867.5 631.1 L1870 630.9 L1872.5 647 L1875 641.2 L1875 670.5 L1425.5 670.5Z" fill="#0a437c" fill-opacity=".2" stroke="none"/>
<path d="M1425.5 664.1 L1428 663.6 L1430.5 664.8 L1433 659.3 L1435.5 664.7 L1438 662.7 L1440.5 656.3 L1443 656.9 L1445.5 661.9 L1448 662.4 L1450.5 656.4 L1453 656.4 L1455.5 659.6 L1458 660 L1460.5 666.3 L1463 666.2 L1465.5 660.8 L1468 657.6 L1470.5 662 L1472.9 661.4 L1475.4 663.4 L1477.9 668.8 L1480.4 663.6 L1482.9 664.1 L1485.4 658 L1487.9 652 L1490.4 652.3 L1492.9 659.2 L1495.4 667.4 L1497.9 665.7 L1500.4 658.8 L1502.9 637.2 L1505.4 639.2 L1507.9 647.7 L1510.4 634.1 L1512.9 636.9 L1515.4 632.5 L1517.9 633.8 L1520.4 640.9 L1522.9 653.4 L1525.4 655.7 L1527.9 645.3 L1530.4 654.7 L1532.9 644 L1535.4 635.1 L1537.9 632.5 L1540.4 634.2 L1542.9 622.7 L1545.4 633.3 L1547.9 643.8 L1550.4 659.6 L1552.9 657.6 L1555.4 644.1 L1557.9 640.8 L1560.3 641.9 L1562.8 631.1 L1565.3 638.7 L1567.8 637 L1570.3 628.9 L1572.8 641.6 L1575.3 649.7 L1577.8 651.2 L1580.3 657 L1582.8 658.2 L1585.3 669 L1587.8 663.8 L1590.3 662.8 L1592.8 654.8 L1595.3 665.3 L1597.8 655.5 L1600.3 658.4 L1602.8 655.1 L1605.3 649.2 L1607.8 658.9 L1610.3 657 L1612.8 654 L1615.3 645.1 L1617.8 655.1 L1620.3 660.6 L1622.8 656.4 L1625.3 664.1 L1627.8 646.6 L1630.3 639.3 L1632.8 653.1 L1635.3 658.1 L1637.8 652.8 L1640.3 656.4 L1642.8 657.4 L1645.3 655 L1647.8 659.8 L1650.2 660.8 L1652.7 659.8 L1655.2 662.2 L1657.7 661.1 L1660.2 661.8 L1662.7 664.7 L1665.2 664.4 L1667.7 658 L1670.2 659.7 L1672.7 654.9 L1675.2 656.9 L1677.7 658 L1680.2 656.1 L1682.7 658.3 L1685.2 659.1 L1687.7 658.4 L1690.2 659.7 L1692.7 659.6 L1695.2 661.5 L1697.7 660.9 L1700.2 660.9 L1702.7 661.8 L1705.2 652 L1707.7 642.2 L1710.2 643 L1712.7 624.6 L1715.2 643.7 L1717.7 641.2 L1720.2 642.6 L1722.7 645.7 L1725.2 644.7 L1727.7 664.4 L1730.2 657.7 L1732.7 652.5 L1735.2 659.4 L1737.7 654.5 L1740.2 656.1 L1742.6 653.1 L1745.1 651.1 L1747.6 654.2 L1750.1 657.4 L1752.6 652.2 L1755.1 649.1 L1757.6 647.6 L1760.1 651.1 L1762.6 650.5 L1765.1 655 L1767.6 651.7 L1770.1 654.8 L1772.6 664.7 L1775.1 663.4 L1777.6 662.7 L1780.1 658.5 L1782.6 651.7 L1785.1 651.1 L1787.6 655.5 L1790.1 646 L1792.6 647 L1795.1 644.8 L1797.6 650.8 L1800.1 651.7 L1802.6 656.2 L1805.1 654.6 L1807.6 653.3 L1810.1 659.4 L1812.6 649.6 L1815.1 640.5 L1817.6 649.9 L1820.1 649.3 L1822.6 650.3 L1825.1 651.2 L1827.6 644.5 L1830 631.3 L1832.5 650.1 L1835 652.6 L1837.5 655.7 L1840 660.5 L1842.5 655.6 L1845 661.2 L1847.5 653.7 L1850 642.7 L1852.5 645.5 L1855 651.5 L1857.5 653.8 L1860 649.8 L1862.5 659.3 L1865 652.1 L1867.5 631.1 L1870 630.9 L1872.5 647 L1875 641.2" fill="none" stroke="#0a437c" stroke-width="1.15"/>
<path d="M1425.5 656.3 L1428 659.7 L1430.5 661.3 L1433 659.7 L1435.5 666.4 L1438 667.1 L1440.5 665.4 L1443 664.7 L1445.5 661.3 L1448 661.2 L1450.5 661.4 L1453 661.5 L1455.5 657.8 L1458 662.7 L1460.5 663.9 L1463 664.9 L1465.5 663 L1468 664.2 L1470.5 660.5 L1472.9 662.4 L1475.4 655.2 L1477.9 641.7 L1480.4 656.5 L1482.9 664.1 L1485.4 660 L1487.9 650 L1490.4 657.6 L1492.9 667.2 L1495.4 659.9 L1497.9 659.9 L1500.4 641.2 L1502.9 639 L1505.4 630.5 L1507.9 622.1 L1510.4 632.9 L1512.9 620.6 L1515.4 628.3 L1517.9 618.4 L1520.4 639.3 L1522.9 651.1 L1525.4 658 L1527.9 648.3 L1530.4 629.7 L1532.9 641.7 L1535.4 654 L1537.9 648.7 L1540.4 650.5 L1542.9 648.3 L1545.4 649.5 L1547.9 653.4 L1550.4 663 L1552.9 657.2 L1555.4 649.3 L1557.9 642.2 L1560.3 650.5 L1562.8 650 L1565.3 660.6 L1567.8 628.4 L1570.3 609 L1572.8 623.3 L1575.3 646.7 L1577.8 648 L1580.3 647.3 L1582.8 645.9 L1585.3 648.4 L1587.8 643.9 L1590.3 649.8 L1592.8 648.9 L1595.3 658.3 L1597.8 669 L1600.3 649.8 L1602.8 647.6 L1605.3 654.6 L1607.8 654.5 L1610.3 656.8 L1612.8 652.6 L1615.3 659.6 L1617.8 652.4 L1620.3 652.3 L1622.8 653.9 L1625.3 652.9 L1627.8 652.4 L1630.3 657.7 L1632.8 658.9 L1635.3 661.9 L1637.8 656.8 L1640.3 657.5 L1642.8 656.2 L1645.3 655.5 L1647.8 653.2 L1650.2 650.2 L1652.7 654 L1655.2 654.7 L1657.7 655.3 L1660.2 655.2 L1662.7 655.2 L1665.2 658.2 L1667.7 657.9 L1670.2 661.4 L1672.7 652.1 L1675.2 655.2 L1677.7 658.1 L1680.2 656.5 L1682.7 661 L1685.2 661.9 L1687.7 666.4 L1690.2 661.6 L1692.7 655.8 L1695.2 659.2 L1697.7 652.7 L1700.2 646.7 L1702.7 649.5 L1705.2 653.2 L1707.7 660.1 L1710.2 649 L1712.7 635 L1715.2 620.3 L1717.7 635 L1720.2 641.3 L1722.7 651.3 L1725.2 653.4 L1727.7 647.1 L1730.2 648 L1732.7 652.8 L1735.2 658.6 L1737.7 652.5 L1740.2 655.5 L1742.6 651.4 L1745.1 656.9 L1747.6 657.8 L1750.1 656.6 L1752.6 655.7 L1755.1 645.5 L1757.6 655.1 L1760.1 651.5 L1762.6 655.1 L1765.1 657 L1767.6 653.7 L1770.1 652.5 L1772.6 650.5 L1775.1 649.1 L1777.6 637.7 L1780.1 638 L1782.6 635.9 L1785.1 649.9 L1787.6 650 L1790.1 646.5 L1792.6 653.3 L1795.1 659.3 L1797.6 652.6 L1800.1 647.7 L1802.6 659.9 L1805.1 646.3 L1807.6 643.3 L1810.1 650.9 L1812.6 647.4 L1815.1 649 L1817.6 660 L1820.1 659.9 L1822.6 658.6 L1825.1 654.4 L1827.6 643.9 L1830 648.2 L1832.5 650.1 L1835 649.3 L1837.5 649.2 L1840 654.8 L1842.5 655.7 L1845 652.6 L1847.5 652.5 L1850 653.9 L1852.5 653.4 L1855 640.2 L1857.5 639.2 L1860 636 L1862.5 647.8 L1865 634.2 L1867.5 634.7 L1870 649.2 L1872.5 640.8 L1875 637.8 L1875 670.5 L1425.5 670.5Z" fill="#6d1f62" fill-opacity=".2" stroke="none"/>
<path d="M1425.5 656.3 L1428 659.7 L1430.5 661.3 L1433 659.7 L1435.5 666.4 L1438 667.1 L1440.5 665.4 L1443 664.7 L1445.5 661.3 L1448 661.2 L1450.5 661.4 L1453 661.5 L1455.5 657.8 L1458 662.7 L1460.5 663.9 L1463 664.9 L1465.5 663 L1468 664.2 L1470.5 660.5 L1472.9 662.4 L1475.4 655.2 L1477.9 641.7 L1480.4 656.5 L1482.9 664.1 L1485.4 660 L1487.9 650 L1490.4 657.6 L1492.9 667.2 L1495.4 659.9 L1497.9 659.9 L1500.4 641.2 L1502.9 639 L1505.4 630.5 L1507.9 622.1 L1510.4 632.9 L1512.9 620.6 L1515.4 628.3 L1517.9 618.4 L1520.4 639.3 L1522.9 651.1 L1525.4 658 L1527.9 648.3 L1530.4 629.7 L1532.9 641.7 L1535.4 654 L1537.9 648.7 L1540.4 650.5 L1542.9 648.3 L1545.4 649.5 L1547.9 653.4 L1550.4 663 L1552.9 657.2 L1555.4 649.3 L1557.9 642.2 L1560.3 650.5 L1562.8 650 L1565.3 660.6 L1567.8 628.4 L1570.3 609 L1572.8 623.3 L1575.3 646.7 L1577.8 648 L1580.3 647.3 L1582.8 645.9 L1585.3 648.4 L1587.8 643.9 L1590.3 649.8 L1592.8 648.9 L1595.3 658.3 L1597.8 669 L1600.3 649.8 L1602.8 647.6 L1605.3 654.6 L1607.8 654.5 L1610.3 656.8 L1612.8 652.6 L1615.3 659.6 L1617.8 652.4 L1620.3 652.3 L1622.8 653.9 L1625.3 652.9 L1627.8 652.4 L1630.3 657.7 L1632.8 658.9 L1635.3 661.9 L1637.8 656.8 L1640.3 657.5 L1642.8 656.2 L1645.3 655.5 L1647.8 653.2 L1650.2 650.2 L1652.7 654 L1655.2 654.7 L1657.7 655.3 L1660.2 655.2 L1662.7 655.2 L1665.2 658.2 L1667.7 657.9 L1670.2 661.4 L1672.7 652.1 L1675.2 655.2 L1677.7 658.1 L1680.2 656.5 L1682.7 661 L1685.2 661.9 L1687.7 666.4 L1690.2 661.6 L1692.7 655.8 L1695.2 659.2 L1697.7 652.7 L1700.2 646.7 L1702.7 649.5 L1705.2 653.2 L1707.7 660.1 L1710.2 649 L1712.7 635 L1715.2 620.3 L1717.7 635 L1720.2 641.3 L1722.7 651.3 L1725.2 653.4 L1727.7 647.1 L1730.2 648 L1732.7 652.8 L1735.2 658.6 L1737.7 652.5 L1740.2 655.5 L1742.6 651.4 L1745.1 656.9 L1747.6 657.8 L1750.1 656.6 L1752.6 655.7 L1755.1 645.5 L1757.6 655.1 L1760.1 651.5 L1762.6 655.1 L1765.1 657 L1767.6 653.7 L1770.1 652.5 L1772.6 650.5 L1775.1 649.1 L1777.6 637.7 L1780.1 638 L1782.6 635.9 L1785.1 649.9 L1787.6 650 L1790.1 646.5 L1792.6 653.3 L1795.1 659.3 L1797.6 652.6 L1800.1 647.7 L1802.6 659.9 L1805.1 646.3 L1807.6 643.3 L1810.1 650.9 L1812.6 647.4 L1815.1 649 L1817.6 660 L1820.1 659.9 L1822.6 658.6 L1825.1 654.4 L1827.6 643.9 L1830 648.2 L1832.5 650.1 L1835 649.3 L1837.5 649.2 L1840 654.8 L1842.5 655.7 L1845 652.6 L1847.5 652.5 L1850 653.9 L1852.5 653.4 L1855 640.2 L1857.5 639.2 L1860 636 L1862.5 647.8 L1865 634.2 L1867.5 634.7 L1870 649.2 L1872.5 640.8 L1875 637.8" fill="none" stroke="#6d1f62" stroke-width="1.15"/>
<path d="M1425.5 663.9 L1428 666.9 L1430.5 663.6 L1433 662.5 L1435.5 663.3 L1438 667.3 L1440.5 663.5 L1443 666.3 L1445.5 665.9 L1448 662.5 L1450.5 661.4 L1453 662.6 L1455.5 654.2 L1458 648.3 L1460.5 660.3 L1463 669 L1465.5 664.3 L1468 663.5 L1470.5 657.9 L1472.9 660.7 L1475.4 657.9 L1477.9 658.1 L1480.4 665.7 L1482.9 660.6 L1485.4 661.7 L1487.9 661.7 L1490.4 657.5 L1492.9 663.2 L1495.4 663.3 L1497.9 662.5 L1500.4 649.7 L1502.9 639 L1505.4 642.1 L1507.9 641.7 L1510.4 623.6 L1512.9 647 L1515.4 616.5 L1517.9 637.9 L1520.4 640.6 L1522.9 653.7 L1525.4 653.6 L1527.9 647.9 L1530.4 635.1 L1532.9 634.8 L1535.4 639.8 L1537.9 653.9 L1540.4 641.5 L1542.9 653.4 L1545.4 643.4 L1547.9 641.8 L1550.4 657.2 L1552.9 655.8 L1555.4 653.9 L1557.9 651.2 L1560.3 637.6 L1562.8 645.9 L1565.3 638 L1567.8 632 L1570.3 627.7 L1572.8 611.9 L1575.3 637.7 L1577.8 645.3 L1580.3 645 L1582.8 655.5 L1585.3 655.1 L1587.8 655.7 L1590.3 654.2 L1592.8 649.4 L1595.3 651 L1597.8 652.1 L1600.3 645.2 L1602.8 652.6 L1605.3 664.4 L1607.8 657.8 L1610.3 659.3 L1612.8 657.1 L1615.3 656 L1617.8 658.1 L1620.3 656.4 L1622.8 659.7 L1625.3 651.2 L1627.8 645.5 L1630.3 645.9 L1632.8 664.8 L1635.3 663 L1637.8 660.3 L1640.3 662.7 L1642.8 664.7 L1645.3 658.5 L1647.8 664.6 L1650.2 662.7 L1652.7 657.8 L1655.2 654.4 L1657.7 656.2 L1660.2 662.1 L1662.7 659.2 L1665.2 662.7 L1667.7 662.2 L1670.2 662 L1672.7 662.8 L1675.2 657 L1677.7 662.3 L1680.2 664.4 L1682.7 659.3 L1685.2 661.1 L1687.7 662.9 L1690.2 656.7 L1692.7 663 L1695.2 650.5 L1697.7 641.9 L1700.2 650.4 L1702.7 649.8 L1705.2 651.6 L1707.7 646.5 L1710.2 645.6 L1712.7 656.6 L1715.2 656 L1717.7 640.4 L1720.2 645.1 L1722.7 641.5 L1725.2 651.7 L1727.7 638.8 L1730.2 639.8 L1732.7 650 L1735.2 655.3 L1737.7 654.7 L1740.2 657.4 L1742.6 656.1 L1745.1 650.6 L1747.6 654.1 L1750.1 656.8 L1752.6 665.3 L1755.1 663.2 L1757.6 667.3 L1760.1 648.8 L1762.6 650.5 L1765.1 657 L1767.6 663.2 L1770.1 656.6 L1772.6 655.5 L1775.1 647.3 L1777.6 645.8 L1780.1 646.6 L1782.6 646 L1785.1 649.8 L1787.6 649.1 L1790.1 653.6 L1792.6 658.7 L1795.1 652 L1797.6 645.7 L1800.1 648.7 L1802.6 661.1 L1805.1 652.8 L1807.6 658.3 L1810.1 660.9 L1812.6 647.5 L1815.1 649.9 L1817.6 655.2 L1820.1 652.5 L1822.6 649.9 L1825.1 644.3 L1827.6 645.7 L1830 654.4 L1832.5 658 L1835 648.1 L1837.5 647.8 L1840 648.1 L1842.5 645.8 L1845 652.8 L1847.5 650.7 L1850 648.5 L1852.5 653.2 L1855 648.4 L1857.5 656.1 L1860 655.8 L1862.5 646.7 L1865 647.9 L1867.5 646.6 L1870 645.2 L1872.5 648.8 L1875 648.7 L1875 670.5 L1425.5 670.5Z" fill="#584477" fill-opacity=".2" stroke="none"/>
<path d="M1425.5 663.9 L1428 666.9 L1430.5 663.6 L1433 662.5 L1435.5 663.3 L1438 667.3 L1440.5 663.5 L1443 666.3 L1445.5 665.9 L1448 662.5 L1450.5 661.4 L1453 662.6 L1455.5 654.2 L1458 648.3 L1460.5 660.3 L1463 669 L1465.5 664.3 L1468 663.5 L1470.5 657.9 L1472.9 660.7 L1475.4 657.9 L1477.9 658.1 L1480.4 665.7 L1482.9 660.6 L1485.4 661.7 L1487.9 661.7 L1490.4 657.5 L1492.9 663.2 L1495.4 663.3 L1497.9 662.5 L1500.4 649.7 L1502.9 639 L1505.4 642.1 L1507.9 641.7 L1510.4 623.6 L1512.9 647 L1515.4 616.5 L1517.9 637.9 L1520.4 640.6 L1522.9 653.7 L1525.4 653.6 L1527.9 647.9 L1530.4 635.1 L1532.9 634.8 L1535.4 639.8 L1537.9 653.9 L1540.4 641.5 L1542.9 653.4 L1545.4 643.4 L1547.9 641.8 L1550.4 657.2 L1552.9 655.8 L1555.4 653.9 L1557.9 651.2 L1560.3 637.6 L1562.8 645.9 L1565.3 638 L1567.8 632 L1570.3 627.7 L1572.8 611.9 L1575.3 637.7 L1577.8 645.3 L1580.3 645 L1582.8 655.5 L1585.3 655.1 L1587.8 655.7 L1590.3 654.2 L1592.8 649.4 L1595.3 651 L1597.8 652.1 L1600.3 645.2 L1602.8 652.6 L1605.3 664.4 L1607.8 657.8 L1610.3 659.3 L1612.8 657.1 L1615.3 656 L1617.8 658.1 L1620.3 656.4 L1622.8 659.7 L1625.3 651.2 L1627.8 645.5 L1630.3 645.9 L1632.8 664.8 L1635.3 663 L1637.8 660.3 L1640.3 662.7 L1642.8 664.7 L1645.3 658.5 L1647.8 664.6 L1650.2 662.7 L1652.7 657.8 L1655.2 654.4 L1657.7 656.2 L1660.2 662.1 L1662.7 659.2 L1665.2 662.7 L1667.7 662.2 L1670.2 662 L1672.7 662.8 L1675.2 657 L1677.7 662.3 L1680.2 664.4 L1682.7 659.3 L1685.2 661.1 L1687.7 662.9 L1690.2 656.7 L1692.7 663 L1695.2 650.5 L1697.7 641.9 L1700.2 650.4 L1702.7 649.8 L1705.2 651.6 L1707.7 646.5 L1710.2 645.6 L1712.7 656.6 L1715.2 656 L1717.7 640.4 L1720.2 645.1 L1722.7 641.5 L1725.2 651.7 L1727.7 638.8 L1730.2 639.8 L1732.7 650 L1735.2 655.3 L1737.7 654.7 L1740.2 657.4 L1742.6 656.1 L1745.1 650.6 L1747.6 654.1 L1750.1 656.8 L1752.6 665.3 L1755.1 663.2 L1757.6 667.3 L1760.1 648.8 L1762.6 650.5 L1765.1 657 L1767.6 663.2 L1770.1 656.6 L1772.6 655.5 L1775.1 647.3 L1777.6 645.8 L1780.1 646.6 L1782.6 646 L1785.1 649.8 L1787.6 649.1 L1790.1 653.6 L1792.6 658.7 L1795.1 652 L1797.6 645.7 L1800.1 648.7 L1802.6 661.1 L1805.1 652.8 L1807.6 658.3 L1810.1 660.9 L1812.6 647.5 L1815.1 649.9 L1817.6 655.2 L1820.1 652.5 L1822.6 649.9 L1825.1 644.3 L1827.6 645.7 L1830 654.4 L1832.5 658 L1835 648.1 L1837.5 647.8 L1840 648.1 L1842.5 645.8 L1845 652.8 L1847.5 650.7 L1850 648.5 L1852.5 653.2 L1855 648.4 L1857.5 656.1 L1860 655.8 L1862.5 646.7 L1865 647.9 L1867.5 646.6 L1870 645.2 L1872.5 648.8 L1875 648.7" fill="none" stroke="#584477" stroke-width="1.15"/>
<path d="M1425.5 659.4 L1428 659.7 L1430.5 659.8 L1433 659.3 L1435.5 661.4 L1438 661.2 L1440.5 658.5 L1443 656.9 L1445.5 658.2 L1448 659.2 L1450.5 659.4 L1453 657.6 L1455.5 657.8 L1458 658.7 L1460.5 661.8 L1463 660.5 L1465.5 659.4 L1468 659.3 L1470.5 658.6 L1472.9 659.9 L1475.4 658.5 L1477.9 659.6 L1480.4 660 L1482.9 660.3 L1485.4 660.3 L1487.9 657.4 L1490.4 658.8 L1492.9 659.2 L1495.4 659.9 L1497.9 657.5 L1500.4 644.5 L1502.9 630.4 L1505.4 628.8 L1507.9 630.3 L1510.4 627.5 L1512.9 621.9 L1515.4 636.4 L1517.9 633.8 L1520.4 644.5 L1522.9 652.6 L1525.4 652.7 L1527.9 636.6 L1530.4 629.7 L1532.9 637.2 L1535.4 635.1 L1537.9 635.7 L1540.4 635.6 L1542.9 636.5 L1545.4 639.1 L1547.9 643.5 L1550.4 650.8 L1552.9 651.6 L1555.4 648 L1557.9 641.7 L1560.3 637.6 L1562.8 638.8 L1565.3 636.6 L1567.8 635 L1570.3 630 L1572.8 633.9 L1575.3 638.5 L1577.8 645.3 L1580.3 647.3 L1582.8 650.8 L1585.3 650.5 L1587.8 653.9 L1590.3 650.4 L1592.8 651.4 L1595.3 651.1 L1597.8 653.6 L1600.3 653.7 L1602.8 655.1 L1605.3 654.6 L1607.8 654.5 L1610.3 657.6 L1612.8 657.1 L1615.3 657.1 L1617.8 658.1 L1620.3 655 L1622.8 654.1 L1625.3 654.2 L1627.8 652.4 L1630.3 648.6 L1632.8 655.1 L1635.3 657.4 L1637.8 651.2 L1640.3 651.1 L1642.8 656.2 L1645.3 655.5 L1647.8 653.9 L1650.2 656 L1652.7 656.3 L1655.2 654.9 L1657.7 657.1 L1660.2 655.2 L1662.7 657 L1665.2 657.8 L1667.7 656.5 L1670.2 658.4 L1672.7 654.9 L1675.2 658 L1677.7 658.4 L1680.2 658.7 L1682.7 659.3 L1685.2 657.8 L1687.7 657.6 L1690.2 658.6 L1692.7 657.1 L1695.2 657.7 L1697.7 656.4 L1700.2 654.8 L1702.7 653.4 L1705.2 653.2 L1707.7 649.5 L1710.2 645.8 L1712.7 644.9 L1715.2 643.7 L1717.7 642.7 L1720.2 643.4 L1722.7 645.5 L1725.2 645.6 L1727.7 646.9 L1730.2 648 L1732.7 652.5 L1735.2 657.2 L1737.7 654.5 L1740.2 653.6 L1742.6 653.4 L1745.1 651.1 L1747.6 651.4 L1750.1 656.1 L1752.6 655 L1755.1 654.7 L1757.6 652.4 L1760.1 652.1 L1762.6 652.4 L1765.1 653.8 L1767.6 653.5 L1770.1 654.3 L1772.6 654.1 L1775.1 650.7 L1777.6 647.1 L1780.1 651.3 L1782.6 651.9 L1785.1 649.8 L1787.6 652.4 L1790.1 648.2 L1792.6 649.5 L1795.1 650.9 L1797.6 651.1 L1800.1 648.7 L1802.6 651.1 L1805.1 650.8 L1807.6 650.4 L1810.1 647.5 L1812.6 649.6 L1815.1 649.1 L1817.6 653.1 L1820.1 649.3 L1822.6 650.3 L1825.1 646.1 L1827.6 647 L1830 648.8 L1832.5 650.1 L1835 649.3 L1837.5 648.9 L1840 648.1 L1842.5 652.5 L1845 652.6 L1847.5 650.7 L1850 649.5 L1852.5 651.1 L1855 648.3 L1857.5 649.7 L1860 646.2 L1862.5 647.8 L1865 644.1 L1867.5 645.3 L1870 645.1 L1872.5 647.3 L1875 645.1 L1875 670.5 L1425.5 670.5Z" fill="#8a4fa0" fill-opacity=".3"/>
<path d="M1425.5 663 L1428 662.8 L1430.5 662.4 L1433 663.5 L1435.5 664.5 L1438 664.8 L1440.5 661.9 L1443 662.5 L1445.5 662.1 L1448 662.5 L1450.5 662.6 L1453 663 L1455.5 664.1 L1458 662.7 L1460.5 664.6 L1463 664.1 L1465.5 663 L1468 663.5 L1470.5 662.9 L1472.9 664.7 L1475.4 663 L1477.9 664.2 L1480.4 663.6 L1482.9 664.7 L1485.4 662.1 L1487.9 663.5 L1490.4 663 L1492.9 664.4 L1495.4 664.3 L1497.9 661.3 L1500.4 648.1 L1502.9 639 L1505.4 638.8 L1507.9 643 L1510.4 639.1 L1512.9 638.1 L1515.4 642.1 L1517.9 643.2 L1520.4 649.8 L1522.9 657.4 L1525.4 657.5 L1527.9 647.9 L1530.4 643.7 L1532.9 644 L1535.4 640.9 L1537.9 646.4 L1540.4 644.5 L1542.9 651.2 L1545.4 650.4 L1547.9 652.4 L1550.4 659.7 L1552.9 657.3 L1555.4 653.3 L1557.9 649.8 L1560.3 647.2 L1562.8 647.6 L1565.3 643.2 L1567.8 641.9 L1570.3 640.5 L1572.8 641.6 L1575.3 648 L1577.8 653 L1580.3 656.9 L1582.8 656.3 L1585.3 656.4 L1587.8 656.6 L1590.3 658.4 L1592.8 656 L1595.3 657.7 L1597.8 656.1 L1600.3 661 L1602.8 658.8 L1605.3 661.3 L1607.8 660.3 L1610.3 661.8 L1612.8 661.2 L1615.3 659.6 L1617.8 663.3 L1620.3 660.6 L1622.8 661 L1625.3 660.5 L1627.8 658.3 L1630.3 658.4 L1632.8 660.6 L1635.3 661.1 L1637.8 660.3 L1640.3 660.1 L1642.8 662.4 L1645.3 659.5 L1647.8 661.9 L1650.2 660 L1652.7 659.8 L1655.2 659.9 L1657.7 659.7 L1660.2 660.7 L1662.7 660.7 L1665.2 661 L1667.7 659.8 L1670.2 661.4 L1672.7 662.1 L1675.2 661.8 L1677.7 661.4 L1680.2 661.9 L1682.7 661 L1685.2 661.4 L1687.7 662 L1690.2 661.6 L1692.7 662 L1695.2 661.5 L1697.7 661.4 L1700.2 661 L1702.7 661.9 L1705.2 658 L1707.7 655.6 L1710.2 652.5 L1712.7 653.4 L1715.2 655.9 L1717.7 651.9 L1720.2 649.9 L1722.7 654.2 L1725.2 650 L1727.7 651.9 L1730.2 657.5 L1732.7 655.5 L1735.2 659.4 L1737.7 657.2 L1740.2 658.6 L1742.6 659.5 L1745.1 656.8 L1747.6 654.1 L1750.1 658 L1752.6 659.4 L1755.1 658.1 L1757.6 658.4 L1760.1 658.1 L1762.6 658.7 L1765.1 657 L1767.6 659.4 L1770.1 657.6 L1772.6 657.7 L1775.1 657.3 L1777.6 654.2 L1780.1 656.3 L1782.6 655.3 L1785.1 657.7 L1787.6 656.3 L1790.1 657.2 L1792.6 654.1 L1795.1 659.3 L1797.6 657.7 L1800.1 658.8 L1802.6 659 L1805.1 654.6 L1807.6 655.4 L1810.1 658.8 L1812.6 654.6 L1815.1 654.7 L1817.6 656.3 L1820.1 659.9 L1822.6 656.5 L1825.1 654.4 L1827.6 656 L1830 654.7 L1832.5 656.8 L1835 653.5 L1837.5 651.6 L1840 654.8 L1842.5 655.6 L1845 656.1 L1847.5 654.2 L1850 653.9 L1852.5 653.6 L1855 652.9 L1857.5 655 L1860 651.4 L1862.5 652.7 L1865 655.4 L1867.5 652.1 L1870 651.7 L1872.5 651 L1875 650.2 L1875 670.5 L1425.5 670.5Z" fill="#5f2850" fill-opacity=".62"/>
<path d="M661 569.5V670.5M737.5 569.5V670.5M814.5 569.5V670.5M891 569.5V670.5M968 569.5V670.5M1045.5 569.5V670.5M655.5 569.5H1117M655.5 594.5H1117M655.5 620H1117M655.5 645H1117M655.5 670.5H1117" stroke="rgba(255,255,255,.2)" stroke-width="1" fill="none" shape-rendering="crispEdges"/>
<path d="M657.5 652.8 L659.8 650.3 L662.1 647.8 L664.4 649.7 L666.7 651.5 L669 650.6 L671.2 649.6 L673.5 648.9 L675.8 648.5 L678.1 648.1 L680.4 646.8 L682.7 624.9 L685 629.7 L687.3 650.3 L689.6 649.6 L691.9 648.9 L694.2 648.2 L696.5 648.1 L698.7 648.9 L701 649.6 L703.3 650.2 L705.6 649.5 L707.9 648.7 L710.2 647.9 L712.5 644.3 L714.8 639.9 L717.1 642.5 L719.4 646.9 L721.7 648.1 L724 648.5 L726.2 648.8 L728.5 649.5 L730.8 650.5 L733.1 651.4 L735.4 601.9 L737.7 589.9 L740 587.2 L742.3 590.2 L744.6 598.6 L746.9 588.9 L749.2 598.7 L751.4 602.3 L753.7 604 L756 630 L758.3 643.6 L760.6 613.1 L762.9 589 L765.2 586.2 L767.5 596.2 L769.8 589.2 L772.1 598.9 L774.4 602.5 L776.7 600.6 L778.9 606.6 L781.2 618 L783.5 619.1 L785.8 609.9 L788.1 591.8 L790.4 631.4 L792.7 609.8 L795 590.9 L797.3 577.9 L799.6 580 L801.9 584.8 L804.2 582 L806.4 589.6 L808.7 604.8 L811 640.2 L813.3 635.1 L815.6 630.2 L817.9 634 L820.2 637.6 L822.5 635.1 L824.8 632.6 L827.1 630.7 L829.4 629 L831.7 632.1 L833.9 634.4 L836.2 621.1 L838.5 609.9 L840.8 629.9 L843.1 634.4 L845.4 633.5 L847.7 633 L850 638.1 L852.3 642.5 L854.6 640.6 L856.9 638.7 L859.1 636.8 L861.4 634.9 L863.7 633 L866 631.1 L868.3 631.6 L870.6 635 L872.9 638.3 L875.2 640.1 L877.5 641.5 L879.8 642.7 L882.1 642.2 L884.4 641.7 L886.6 641.9 L888.9 642.9 L891.2 643.8 L893.5 644.8 L895.8 644.9 L898.1 644.3 L900.4 643.7 L902.7 643 L905 643.1 L907.3 643.7 L909.6 644.3 L911.9 645 L914.1 644.4 L916.4 642.9 L918.7 641.4 L921 640.8 L923.3 643.4 L925.6 643.9 L927.9 638.7 L930.2 633.5 L932.5 632.5 L934.8 634.4 L937.1 636.3 L939.3 636.6 L941.6 632.8 L943.9 629 L946.2 623.6 L948.5 617.2 L950.8 622.3 L953.1 604.6 L955.4 586.2 L957.7 590.3 L960 594.7 L962.3 619.4 L964.6 619.1 L966.8 606.4 L969.1 611 L971.4 601 L973.7 610.5 L976 624.4 L978.3 622.5 L980.6 620.6 L982.9 634.9 L985.2 640.5 L987.5 623.1 L989.8 632.6 L992.1 628.7 L994.3 619.8 L996.6 623.1 L998.9 624.4 L1001.2 618.1 L1003.5 625.7 L1005.8 631.7 L1008.1 622.2 L1010.4 626.8 L1012.7 635.7 L1015 623.8 L1017.3 606.1 L1019.6 607.3 L1021.8 613.7 L1024.1 618 L1026.4 621.8 L1028.7 625.6 L1031 629.4 L1033.3 631.2 L1035.6 622.4 L1037.9 611 L1040.2 587.2 L1042.5 611.4 L1044.8 623 L1047 614.1 L1049.3 613.2 L1051.6 619.6 L1053.9 618.5 L1056.2 614.3 L1058.5 623.1 L1060.8 628.5 L1063.1 620.8 L1065.4 626.8 L1067.7 634.4 L1070 622.6 L1072.3 608.6 L1074.5 619.5 L1076.8 620.6 L1079.1 613 L1081.4 616.7 L1083.7 623.7 L1086 618.6 L1088.3 615.3 L1090.6 616.6 L1092.9 615.7 L1095.2 609.3 L1097.5 604.7 L1099.8 604 L1102 605.3 L1104.3 611 L1106.6 615.6 L1108.9 617.5 L1111.2 614.1 L1113.5 599.8 L1113.5 670.5 L657.5 670.5Z" fill="#6ed0e0" fill-opacity="0.4"/>
<path d="M657.5 652.8 L659.8 650.3 L662.1 647.8 L664.4 649.7 L666.7 651.5 L669 650.6 L671.2 649.6 L673.5 648.9 L675.8 648.5 L678.1 648.1 L680.4 646.8 L682.7 624.9 L685 629.7 L687.3 650.3 L689.6 649.6 L691.9 648.9 L694.2 648.2 L696.5 648.1 L698.7 648.9 L701 649.6 L703.3 650.2 L705.6 649.5 L707.9 648.7 L710.2 647.9 L712.5 644.3 L714.8 639.9 L717.1 642.5 L719.4 646.9 L721.7 648.1 L724 648.5 L726.2 648.8 L728.5 649.5 L730.8 650.5 L733.1 651.4 L735.4 601.9 L737.7 589.9 L740 587.2 L742.3 590.2 L744.6 598.6 L746.9 588.9 L749.2 598.7 L751.4 602.3 L753.7 604 L756 630 L758.3 643.6 L760.6 613.1 L762.9 589 L765.2 586.2 L767.5 596.2 L769.8 589.2 L772.1 598.9 L774.4 602.5 L776.7 600.6 L778.9 606.6 L781.2 618 L783.5 619.1 L785.8 609.9 L788.1 591.8 L790.4 631.4 L792.7 609.8 L795 590.9 L797.3 577.9 L799.6 580 L801.9 584.8 L804.2 582 L806.4 589.6 L808.7 604.8 L811 640.2 L813.3 635.1 L815.6 630.2 L817.9 634 L820.2 637.6 L822.5 635.1 L824.8 632.6 L827.1 630.7 L829.4 629 L831.7 632.1 L833.9 634.4 L836.2 621.1 L838.5 609.9 L840.8 629.9 L843.1 634.4 L845.4 633.5 L847.7 633 L850 638.1 L852.3 642.5 L854.6 640.6 L856.9 638.7 L859.1 636.8 L861.4 634.9 L863.7 633 L866 631.1 L868.3 631.6 L870.6 635 L872.9 638.3 L875.2 640.1 L877.5 641.5 L879.8 642.7 L882.1 642.2 L884.4 641.7 L886.6 641.9 L888.9 642.9 L891.2 643.8 L893.5 644.8 L895.8 644.9 L898.1 644.3 L900.4 643.7 L902.7 643 L905 643.1 L907.3 643.7 L909.6 644.3 L911.9 645 L914.1 644.4 L916.4 642.9 L918.7 641.4 L921 640.8 L923.3 643.4 L925.6 643.9 L927.9 638.7 L930.2 633.5 L932.5 632.5 L934.8 634.4 L937.1 636.3 L939.3 636.6 L941.6 632.8 L943.9 629 L946.2 623.6 L948.5 617.2 L950.8 622.3 L953.1 604.6 L955.4 586.2 L957.7 590.3 L960 594.7 L962.3 619.4 L964.6 619.1 L966.8 606.4 L969.1 611 L971.4 601 L973.7 610.5 L976 624.4 L978.3 622.5 L980.6 620.6 L982.9 634.9 L985.2 640.5 L987.5 623.1 L989.8 632.6 L992.1 628.7 L994.3 619.8 L996.6 623.1 L998.9 624.4 L1001.2 618.1 L1003.5 625.7 L1005.8 631.7 L1008.1 622.2 L1010.4 626.8 L1012.7 635.7 L1015 623.8 L1017.3 606.1 L1019.6 607.3 L1021.8 613.7 L1024.1 618 L1026.4 621.8 L1028.7 625.6 L1031 629.4 L1033.3 631.2 L1035.6 622.4 L1037.9 611 L1040.2 587.2 L1042.5 611.4 L1044.8 623 L1047 614.1 L1049.3 613.2 L1051.6 619.6 L1053.9 618.5 L1056.2 614.3 L1058.5 623.1 L1060.8 628.5 L1063.1 620.8 L1065.4 626.8 L1067.7 634.4 L1070 622.6 L1072.3 608.6 L1074.5 619.5 L1076.8 620.6 L1079.1 613 L1081.4 616.7 L1083.7 623.7 L1086 618.6 L1088.3 615.3 L1090.6 616.6 L1092.9 615.7 L1095.2 609.3 L1097.5 604.7 L1099.8 604 L1102 605.3 L1104.3 611 L1106.6 615.6 L1108.9 617.5 L1111.2 614.1 L1113.5 599.8" fill="none" stroke="#6ed0e0" stroke-width="1.2" stroke-opacity="0.8"/>
<path d="M657.5 663.4 L659.8 661.9 L662.1 660.4 L664.4 661.6 L666.7 662.7 L669 662.1 L671.2 661.5 L673.5 661.1 L675.8 660.8 L678.1 660.6 L680.4 659.8 L682.7 646.7 L685 649.6 L687.3 661.9 L689.6 661.5 L691.9 661.1 L694.2 660.6 L696.5 660.6 L698.7 661 L701 661.5 L703.3 661.9 L705.6 661.4 L707.9 661 L710.2 660.5 L712.5 658.3 L714.8 655.6 L717.1 657.2 L719.4 659.9 L721.7 660.6 L724 660.8 L726.2 661 L728.5 661.4 L730.8 662 L733.1 662.6 L735.4 632.9 L737.7 625.7 L740 624.1 L742.3 625.9 L744.6 630.9 L746.9 625.1 L749.2 630.9 L751.4 633.1 L753.7 634.1 L756 649.7 L758.3 657.9 L760.6 639.6 L762.9 625.2 L765.2 623.4 L767.5 629.5 L769.8 625.3 L772.1 631.1 L774.4 633.2 L776.7 632.1 L778.9 635.7 L781.2 642.6 L783.5 643.2 L785.8 637.7 L788.1 626.8 L790.4 650.6 L792.7 637.6 L795 626.3 L797.3 618.5 L799.6 619.7 L801.9 622.6 L804.2 621 L806.4 625.5 L808.7 634.6 L811 655.1 L813.3 652 L815.6 649.1 L817.9 651.4 L820.2 653.5 L822.5 652 L824.8 650.5 L827.1 649.4 L829.4 648.4 L831.7 650.3 L833.9 651.6 L836.2 643.6 L838.5 636.9 L840.8 648.9 L843.1 651.6 L845.4 651.1 L847.7 650.8 L850 653.9 L852.3 656.5 L854.6 655.4 L856.9 654.2 L859.1 653.1 L861.4 651.9 L863.7 650.8 L866 649.7 L868.3 650 L870.6 652 L872.9 654 L875.2 655 L877.5 655.9 L879.8 656.6 L882.1 656.3 L884.4 656 L886.6 656.1 L888.9 656.7 L891.2 657.3 L893.5 657.9 L895.8 657.9 L898.1 657.5 L900.4 657.2 L902.7 656.8 L905 656.8 L907.3 657.2 L909.6 657.6 L911.9 658 L914.1 657.6 L916.4 656.7 L918.7 655.8 L921 655.5 L923.3 657 L925.6 657.3 L927.9 654.2 L930.2 651.1 L932.5 650.5 L934.8 651.6 L937.1 652.8 L939.3 652.9 L941.6 650.7 L943.9 648.4 L946.2 645.1 L948.5 641.3 L950.8 644.3 L953.1 633.7 L955.4 622.7 L957.7 625.2 L960 627.8 L962.3 642.6 L964.6 642.4 L966.8 634.8 L969.1 637.5 L971.4 631.6 L973.7 637.3 L976 645.6 L978.3 644.5 L980.6 643.3 L982.9 651.9 L985.2 655.3 L987.5 644.8 L989.8 650.5 L992.1 648.2 L994.3 642.8 L996.6 644.8 L998.9 645.6 L1001.2 641.9 L1003.5 646.4 L1005.8 650 L1008.1 644.3 L1010.4 647.1 L1012.7 652.4 L1015 645.3 L1017.3 634.6 L1019.6 635.4 L1021.8 639.2 L1024.1 641.8 L1026.4 644.1 L1028.7 646.3 L1031 648.6 L1033.3 649.7 L1035.6 644.4 L1037.9 637.6 L1040.2 623.3 L1042.5 637.8 L1044.8 644.8 L1047 639.5 L1049.3 638.9 L1051.6 642.7 L1053.9 642.1 L1056.2 639.5 L1058.5 644.9 L1060.8 648 L1063.1 643.5 L1065.4 647 L1067.7 651.6 L1070 644.5 L1072.3 636.2 L1074.5 642.7 L1076.8 643.3 L1079.1 638.8 L1081.4 641 L1083.7 645.2 L1086 642.2 L1088.3 640.2 L1090.6 640.9 L1092.9 640.4 L1095.2 636.6 L1097.5 633.8 L1099.8 633.4 L1102 634.2 L1104.3 637.6 L1106.6 640.3 L1108.9 641.5 L1111.2 639.4 L1113.5 630.9 L1113.5 670.5 L657.5 670.5Z" fill="#ef843c" fill-opacity="0.42"/>
<path d="M657.5 663.4 L659.8 661.9 L662.1 660.4 L664.4 661.6 L666.7 662.7 L669 662.1 L671.2 661.5 L673.5 661.1 L675.8 660.8 L678.1 660.6 L680.4 659.8 L682.7 646.7 L685 649.6 L687.3 661.9 L689.6 661.5 L691.9 661.1 L694.2 660.6 L696.5 660.6 L698.7 661 L701 661.5 L703.3 661.9 L705.6 661.4 L707.9 661 L710.2 660.5 L712.5 658.3 L714.8 655.6 L717.1 657.2 L719.4 659.9 L721.7 660.6 L724 660.8 L726.2 661 L728.5 661.4 L730.8 662 L733.1 662.6 L735.4 632.9 L737.7 625.7 L740 624.1 L742.3 625.9 L744.6 630.9 L746.9 625.1 L749.2 630.9 L751.4 633.1 L753.7 634.1 L756 649.7 L758.3 657.9 L760.6 639.6 L762.9 625.2 L765.2 623.4 L767.5 629.5 L769.8 625.3 L772.1 631.1 L774.4 633.2 L776.7 632.1 L778.9 635.7 L781.2 642.6 L783.5 643.2 L785.8 637.7 L788.1 626.8 L790.4 650.6 L792.7 637.6 L795 626.3 L797.3 618.5 L799.6 619.7 L801.9 622.6 L804.2 621 L806.4 625.5 L808.7 634.6 L811 655.1 L813.3 652 L815.6 649.1 L817.9 651.4 L820.2 653.5 L822.5 652 L824.8 650.5 L827.1 649.4 L829.4 648.4 L831.7 650.3 L833.9 651.6 L836.2 643.6 L838.5 636.9 L840.8 648.9 L843.1 651.6 L845.4 651.1 L847.7 650.8 L850 653.9 L852.3 656.5 L854.6 655.4 L856.9 654.2 L859.1 653.1 L861.4 651.9 L863.7 650.8 L866 649.7 L868.3 650 L870.6 652 L872.9 654 L875.2 655 L877.5 655.9 L879.8 656.6 L882.1 656.3 L884.4 656 L886.6 656.1 L888.9 656.7 L891.2 657.3 L893.5 657.9 L895.8 657.9 L898.1 657.5 L900.4 657.2 L902.7 656.8 L905 656.8 L907.3 657.2 L909.6 657.6 L911.9 658 L914.1 657.6 L916.4 656.7 L918.7 655.8 L921 655.5 L923.3 657 L925.6 657.3 L927.9 654.2 L930.2 651.1 L932.5 650.5 L934.8 651.6 L937.1 652.8 L939.3 652.9 L941.6 650.7 L943.9 648.4 L946.2 645.1 L948.5 641.3 L950.8 644.3 L953.1 633.7 L955.4 622.7 L957.7 625.2 L960 627.8 L962.3 642.6 L964.6 642.4 L966.8 634.8 L969.1 637.5 L971.4 631.6 L973.7 637.3 L976 645.6 L978.3 644.5 L980.6 643.3 L982.9 651.9 L985.2 655.3 L987.5 644.8 L989.8 650.5 L992.1 648.2 L994.3 642.8 L996.6 644.8 L998.9 645.6 L1001.2 641.9 L1003.5 646.4 L1005.8 650 L1008.1 644.3 L1010.4 647.1 L1012.7 652.4 L1015 645.3 L1017.3 634.6 L1019.6 635.4 L1021.8 639.2 L1024.1 641.8 L1026.4 644.1 L1028.7 646.3 L1031 648.6 L1033.3 649.7 L1035.6 644.4 L1037.9 637.6 L1040.2 623.3 L1042.5 637.8 L1044.8 644.8 L1047 639.5 L1049.3 638.9 L1051.6 642.7 L1053.9 642.1 L1056.2 639.5 L1058.5 644.9 L1060.8 648 L1063.1 643.5 L1065.4 647 L1067.7 651.6 L1070 644.5 L1072.3 636.2 L1074.5 642.7 L1076.8 643.3 L1079.1 638.8 L1081.4 641 L1083.7 645.2 L1086 642.2 L1088.3 640.2 L1090.6 640.9 L1092.9 640.4 L1095.2 636.6 L1097.5 633.8 L1099.8 633.4 L1102 634.2 L1104.3 637.6 L1106.6 640.3 L1108.9 641.5 L1111.2 639.4 L1113.5 630.9" fill="none" stroke="#ef843c" stroke-width="1.2" stroke-opacity="1"/>
<path d="M657.5 663.4 L659.8 663.4 L662.1 663.4 L664.4 663.4 L666.7 663.4 L669 663.4 L671.2 663.4 L673.5 663.4 L675.8 663.4 L678.1 663.4 L680.4 663.4 L682.7 658.4 L685 659.9 L687.3 663.4 L689.6 663.4 L691.9 663.4 L694.2 663.4 L696.5 663.4 L698.7 663.4 L701 663.4 L703.3 663.4 L705.6 663.4 L707.9 663.4 L710.2 663.4 L712.5 663.4 L714.8 663 L717.1 663.4 L719.4 663.4 L721.7 663.4 L724 663.4 L726.2 663.4 L728.5 663.4 L730.8 663.4 L733.1 663.4 L735.4 651.2 L737.7 647.5 L740 646.7 L742.3 647.6 L744.6 650.2 L746.9 647.2 L749.2 650.3 L751.4 651.4 L753.7 651.9 L756 660 L758.3 663.4 L760.6 654.7 L762.9 647.3 L765.2 646.4 L767.5 649.5 L769.8 647.3 L772.1 650.3 L774.4 651.4 L776.7 650.8 L778.9 652.7 L781.2 656.3 L783.5 656.6 L785.8 653.7 L788.1 648.1 L790.4 660.4 L792.7 653.7 L795 647.8 L797.3 643.8 L799.6 644.5 L801.9 645.9 L804.2 645.1 L806.4 647.5 L808.7 652.2 L811 663.1 L813.3 661.5 L815.6 660 L817.9 661.2 L820.2 662.3 L822.5 661.5 L824.8 660.8 L827.1 660.2 L829.4 659.6 L831.7 660.6 L833.9 661.3 L836.2 657.2 L838.5 653.7 L840.8 659.9 L843.1 661.3 L845.4 661 L847.7 660.9 L850 662.5 L852.3 663.4 L854.6 663.3 L856.9 662.7 L859.1 662.1 L861.4 661.5 L863.7 660.9 L866 660.3 L868.3 660.5 L870.6 661.5 L872.9 662.5 L875.2 663.1 L877.5 663.4 L879.8 663.4 L882.1 663.4 L884.4 663.4 L886.6 663.4 L888.9 663.4 L891.2 663.4 L893.5 663.4 L895.8 663.4 L898.1 663.4 L900.4 663.4 L902.7 663.4 L905 663.4 L907.3 663.4 L909.6 663.4 L911.9 663.4 L914.1 663.4 L916.4 663.4 L918.7 663.4 L921 663.3 L923.3 663.4 L925.6 663.4 L927.9 662.7 L930.2 661 L932.5 660.7 L934.8 661.3 L937.1 661.9 L939.3 662 L941.6 660.8 L943.9 659.6 L946.2 658 L948.5 656 L950.8 657.6 L953.1 652.1 L955.4 646.4 L957.7 647.7 L960 649 L962.3 656.7 L964.6 656.6 L966.8 652.6 L969.1 654.1 L971.4 651 L973.7 653.9 L976 658.2 L978.3 657.6 L980.6 657 L982.9 661.5 L985.2 663.2 L987.5 657.8 L989.8 660.8 L992.1 659.6 L994.3 656.8 L996.6 657.8 L998.9 658.2 L1001.2 656.3 L1003.5 658.6 L1005.8 660.5 L1008.1 657.5 L1010.4 659 L1012.7 661.7 L1015 658 L1017.3 652.5 L1019.6 652.9 L1021.8 654.9 L1024.1 656.2 L1026.4 657.4 L1028.7 658.6 L1031 659.8 L1033.3 660.3 L1035.6 657.6 L1037.9 654.1 L1040.2 646.7 L1042.5 654.2 L1044.8 657.8 L1047 655 L1049.3 654.8 L1051.6 656.7 L1053.9 656.4 L1056.2 655.1 L1058.5 657.8 L1060.8 659.5 L1063.1 657.1 L1065.4 659 L1067.7 661.3 L1070 657.7 L1072.3 653.3 L1074.5 656.7 L1076.8 657.1 L1079.1 654.7 L1081.4 655.8 L1083.7 658 L1086 656.4 L1088.3 655.4 L1090.6 655.8 L1092.9 655.5 L1095.2 653.6 L1097.5 652.1 L1099.8 651.9 L1102 652.3 L1104.3 654.1 L1106.6 655.5 L1108.9 656.1 L1111.2 655 L1113.5 650.6 L1113.5 670.5 L657.5 670.5Z" fill="#eab839" fill-opacity="0.35"/>
<path d="M657.5 663.4 L659.8 663.4 L662.1 663.4 L664.4 663.4 L666.7 663.4 L669 663.4 L671.2 663.4 L673.5 663.4 L675.8 663.4 L678.1 663.4 L680.4 663.4 L682.7 658.4 L685 659.9 L687.3 663.4 L689.6 663.4 L691.9 663.4 L694.2 663.4 L696.5 663.4 L698.7 663.4 L701 663.4 L703.3 663.4 L705.6 663.4 L707.9 663.4 L710.2 663.4 L712.5 663.4 L714.8 663 L717.1 663.4 L719.4 663.4 L721.7 663.4 L724 663.4 L726.2 663.4 L728.5 663.4 L730.8 663.4 L733.1 663.4 L735.4 651.2 L737.7 647.5 L740 646.7 L742.3 647.6 L744.6 650.2 L746.9 647.2 L749.2 650.3 L751.4 651.4 L753.7 651.9 L756 660 L758.3 663.4 L760.6 654.7 L762.9 647.3 L765.2 646.4 L767.5 649.5 L769.8 647.3 L772.1 650.3 L774.4 651.4 L776.7 650.8 L778.9 652.7 L781.2 656.3 L783.5 656.6 L785.8 653.7 L788.1 648.1 L790.4 660.4 L792.7 653.7 L795 647.8 L797.3 643.8 L799.6 644.5 L801.9 645.9 L804.2 645.1 L806.4 647.5 L808.7 652.2 L811 663.1 L813.3 661.5 L815.6 660 L817.9 661.2 L820.2 662.3 L822.5 661.5 L824.8 660.8 L827.1 660.2 L829.4 659.6 L831.7 660.6 L833.9 661.3 L836.2 657.2 L838.5 653.7 L840.8 659.9 L843.1 661.3 L845.4 661 L847.7 660.9 L850 662.5 L852.3 663.4 L854.6 663.3 L856.9 662.7 L859.1 662.1 L861.4 661.5 L863.7 660.9 L866 660.3 L868.3 660.5 L870.6 661.5 L872.9 662.5 L875.2 663.1 L877.5 663.4 L879.8 663.4 L882.1 663.4 L884.4 663.4 L886.6 663.4 L888.9 663.4 L891.2 663.4 L893.5 663.4 L895.8 663.4 L898.1 663.4 L900.4 663.4 L902.7 663.4 L905 663.4 L907.3 663.4 L909.6 663.4 L911.9 663.4 L914.1 663.4 L916.4 663.4 L918.7 663.4 L921 663.3 L923.3 663.4 L925.6 663.4 L927.9 662.7 L930.2 661 L932.5 660.7 L934.8 661.3 L937.1 661.9 L939.3 662 L941.6 660.8 L943.9 659.6 L946.2 658 L948.5 656 L950.8 657.6 L953.1 652.1 L955.4 646.4 L957.7 647.7 L960 649 L962.3 656.7 L964.6 656.6 L966.8 652.6 L969.1 654.1 L971.4 651 L973.7 653.9 L976 658.2 L978.3 657.6 L980.6 657 L982.9 661.5 L985.2 663.2 L987.5 657.8 L989.8 660.8 L992.1 659.6 L994.3 656.8 L996.6 657.8 L998.9 658.2 L1001.2 656.3 L1003.5 658.6 L1005.8 660.5 L1008.1 657.5 L1010.4 659 L1012.7 661.7 L1015 658 L1017.3 652.5 L1019.6 652.9 L1021.8 654.9 L1024.1 656.2 L1026.4 657.4 L1028.7 658.6 L1031 659.8 L1033.3 660.3 L1035.6 657.6 L1037.9 654.1 L1040.2 646.7 L1042.5 654.2 L1044.8 657.8 L1047 655 L1049.3 654.8 L1051.6 656.7 L1053.9 656.4 L1056.2 655.1 L1058.5 657.8 L1060.8 659.5 L1063.1 657.1 L1065.4 659 L1067.7 661.3 L1070 657.7 L1072.3 653.3 L1074.5 656.7 L1076.8 657.1 L1079.1 654.7 L1081.4 655.8 L1083.7 658 L1086 656.4 L1088.3 655.4 L1090.6 655.8 L1092.9 655.5 L1095.2 653.6 L1097.5 652.1 L1099.8 651.9 L1102 652.3 L1104.3 654.1 L1106.6 655.5 L1108.9 656.1 L1111.2 655 L1113.5 650.6" fill="none" stroke="#eab839" stroke-width="1.2" stroke-opacity="1"/>
<path d="M657.5 662.2 L659.8 661.9 L662.1 661.7 L664.4 661.5 L666.7 661.4 L669 661.4 L671.2 661.5 L673.5 661.7 L675.8 661.9 L678.1 662.2 L680.4 662.4 L682.7 662.6 L685 662.8 L687.3 662.9 L689.6 662.9 L691.9 662.8 L694.2 662.7 L696.5 662.5 L698.7 662.2 L701 661.9 L703.3 661.7 L705.6 661.5 L707.9 661.4 L710.2 661.4 L712.5 661.5 L714.8 661.6 L717.1 661.9 L719.4 662.1 L721.7 662.4 L724 662.6 L726.2 662.8 L728.5 662.9 L730.8 662.9 L733.1 662.9 L735.4 661 L737.7 661.2 L740 661.5 L742.3 661.7 L744.6 662 L746.9 662.2 L749.2 662.4 L751.4 662.6 L753.7 662.6 L756 662.7 L758.3 662.6 L760.6 662.5 L762.9 662.4 L765.2 662.2 L767.5 661.9 L769.8 661.7 L772.1 661.4 L774.4 661.2 L776.7 661 L778.9 660.8 L781.2 660.7 L783.5 660.7 L785.8 660.7 L788.1 660.8 L790.4 660.9 L792.7 661.1 L795 661.3 L797.3 661.6 L799.6 661.8 L801.9 662.1 L804.2 662.3 L806.4 662.5 L808.7 662.6 L811 666.5 L813.3 666.4 L815.6 666.4 L817.9 666.2 L820.2 666.1 L822.5 665.8 L824.8 665.6 L827.1 665.3 L829.4 665.1 L831.7 664.9 L833.9 664.7 L836.2 664.5 L838.5 664.5 L840.8 664.4 L843.1 664.5 L845.4 664.6 L847.7 664.8 L850 665 L852.3 665.2 L854.6 665.5 L856.9 665.8 L859.1 666 L861.4 666.2 L863.7 666.3 L866 666.4 L868.3 666.5 L870.6 666.4 L872.9 666.3 L875.2 666.2 L877.5 666 L879.8 665.7 L882.1 665.5 L884.4 665.2 L886.6 665 L888.9 664.8 L891.2 664.6 L893.5 664.5 L895.8 664.4 L898.1 664.5 L900.4 664.5 L902.7 664.7 L905 664.9 L907.3 665.1 L909.6 665.4 L911.9 665.6 L914.1 665.9 L916.4 666.1 L918.7 666.3 L921 666.4 L923.3 666.5 L925.6 666.5 L927.9 666.4 L930.2 666.3 L932.5 666.1 L934.8 665.8 L937.1 665.6 L939.3 665.3 L941.6 665.1 L943.9 664.9 L946.2 664.7 L948.5 664.5 L950.8 664.5 L953.1 664.4 L955.4 664.5 L957.7 664.6 L960 664.8 L962.3 661.4 L964.6 661.4 L966.8 661.4 L969.1 661.4 L971.4 661.4 L973.7 661.4 L976 661.4 L978.3 661.4 L980.6 661.4 L982.9 661.4 L985.2 661.4 L987.5 661.4 L989.8 661.4 L992.1 661.4 L994.3 661.4 L996.6 661.4 L998.9 661.4 L1001.2 661.4 L1003.5 661.4 L1005.8 661.4 L1008.1 661.4 L1010.4 661.4 L1012.7 661.4 L1015 661.4 L1017.3 661.4 L1019.6 661.4 L1021.8 661.4 L1024.1 661.4 L1026.4 661.4 L1028.7 661.4 L1031 661.4 L1033.3 661.4 L1035.6 661.4 L1037.9 661.4 L1040.2 661.4 L1042.5 661.4 L1044.8 661.4 L1047 661.4 L1049.3 661.4 L1051.6 661.4 L1053.9 661.4 L1056.2 661.4 L1058.5 661.4 L1060.8 661.4 L1063.1 661.4 L1065.4 661.4 L1067.7 661.4 L1070 661.4 L1072.3 661.4 L1074.5 661.4 L1076.8 661.4 L1079.1 661.4 L1081.4 661.4 L1083.7 661.4 L1086 661.4 L1088.3 661.4 L1090.6 661.4 L1092.9 661.4 L1095.2 661.4 L1097.5 661.4 L1099.8 661.4 L1102 661.4 L1104.3 661.4 L1106.6 661.4 L1108.9 661.4 L1111.2 661.4 L1113.5 661.4 L1113.5 670.5 L657.5 670.5Z" fill="#d44a8c" fill-opacity="0.5"/>
<path d="M657.5 662.2 L659.8 661.9 L662.1 661.7 L664.4 661.5 L666.7 661.4 L669 661.4 L671.2 661.5 L673.5 661.7 L675.8 661.9 L678.1 662.2 L680.4 662.4 L682.7 662.6 L685 662.8 L687.3 662.9 L689.6 662.9 L691.9 662.8 L694.2 662.7 L696.5 662.5 L698.7 662.2 L701 661.9 L703.3 661.7 L705.6 661.5 L707.9 661.4 L710.2 661.4 L712.5 661.5 L714.8 661.6 L717.1 661.9 L719.4 662.1 L721.7 662.4 L724 662.6 L726.2 662.8 L728.5 662.9 L730.8 662.9 L733.1 662.9 L735.4 661 L737.7 661.2 L740 661.5 L742.3 661.7 L744.6 662 L746.9 662.2 L749.2 662.4 L751.4 662.6 L753.7 662.6 L756 662.7 L758.3 662.6 L760.6 662.5 L762.9 662.4 L765.2 662.2 L767.5 661.9 L769.8 661.7 L772.1 661.4 L774.4 661.2 L776.7 661 L778.9 660.8 L781.2 660.7 L783.5 660.7 L785.8 660.7 L788.1 660.8 L790.4 660.9 L792.7 661.1 L795 661.3 L797.3 661.6 L799.6 661.8 L801.9 662.1 L804.2 662.3 L806.4 662.5 L808.7 662.6 L811 666.5 L813.3 666.4 L815.6 666.4 L817.9 666.2 L820.2 666.1 L822.5 665.8 L824.8 665.6 L827.1 665.3 L829.4 665.1 L831.7 664.9 L833.9 664.7 L836.2 664.5 L838.5 664.5 L840.8 664.4 L843.1 664.5 L845.4 664.6 L847.7 664.8 L850 665 L852.3 665.2 L854.6 665.5 L856.9 665.8 L859.1 666 L861.4 666.2 L863.7 666.3 L866 666.4 L868.3 666.5 L870.6 666.4 L872.9 666.3 L875.2 666.2 L877.5 666 L879.8 665.7 L882.1 665.5 L884.4 665.2 L886.6 665 L888.9 664.8 L891.2 664.6 L893.5 664.5 L895.8 664.4 L898.1 664.5 L900.4 664.5 L902.7 664.7 L905 664.9 L907.3 665.1 L909.6 665.4 L911.9 665.6 L914.1 665.9 L916.4 666.1 L918.7 666.3 L921 666.4 L923.3 666.5 L925.6 666.5 L927.9 666.4 L930.2 666.3 L932.5 666.1 L934.8 665.8 L937.1 665.6 L939.3 665.3 L941.6 665.1 L943.9 664.9 L946.2 664.7 L948.5 664.5 L950.8 664.5 L953.1 664.4 L955.4 664.5 L957.7 664.6 L960 664.8 L962.3 661.4 L964.6 661.4 L966.8 661.4 L969.1 661.4 L971.4 661.4 L973.7 661.4 L976 661.4 L978.3 661.4 L980.6 661.4 L982.9 661.4 L985.2 661.4 L987.5 661.4 L989.8 661.4 L992.1 661.4 L994.3 661.4 L996.6 661.4 L998.9 661.4 L1001.2 661.4 L1003.5 661.4 L1005.8 661.4 L1008.1 661.4 L1010.4 661.4 L1012.7 661.4 L1015 661.4 L1017.3 661.4 L1019.6 661.4 L1021.8 661.4 L1024.1 661.4 L1026.4 661.4 L1028.7 661.4 L1031 661.4 L1033.3 661.4 L1035.6 661.4 L1037.9 661.4 L1040.2 661.4 L1042.5 661.4 L1044.8 661.4 L1047 661.4 L1049.3 661.4 L1051.6 661.4 L1053.9 661.4 L1056.2 661.4 L1058.5 661.4 L1060.8 661.4 L1063.1 661.4 L1065.4 661.4 L1067.7 661.4 L1070 661.4 L1072.3 661.4 L1074.5 661.4 L1076.8 661.4 L1079.1 661.4 L1081.4 661.4 L1083.7 661.4 L1086 661.4 L1088.3 661.4 L1090.6 661.4 L1092.9 661.4 L1095.2 661.4 L1097.5 661.4 L1099.8 661.4 L1102 661.4 L1104.3 661.4 L1106.6 661.4 L1108.9 661.4 L1111.2 661.4 L1113.5 661.4" fill="none" stroke="#d44a8c" stroke-width="1" stroke-opacity="0.8"/>
<path d="M657.5 659.9 L659.8 659.6 L662.1 659.3 L664.4 659.1 L666.7 659.2 L669 659.3 L671.2 659.6 L673.5 660 L675.8 660.3 L678.1 660.6 L680.4 660.7 L682.7 660.6 L685 660.4 L687.3 660.1 L689.6 659.7 L691.9 659.4 L694.2 659.2 L696.5 659.1 L698.7 659.3 L701 659.5 L703.3 659.8 L705.6 660.2 L707.9 660.5 L710.2 660.6 L712.5 660.6 L714.8 660.5 L717.1 660.2 L719.4 659.9 L721.7 659.5 L724 659.3 L726.2 659.1 L728.5 659.2 L730.8 659.4 L733.1 659.7 L735.4 660 L737.7 660.4 L740 660.6 L742.3 660.7 L744.6 660.6 L746.9 660.3 L749.2 660 L751.4 659.7 L753.7 659.4 L756 659.2 L758.3 659.1 L760.6 659.3 L762.9 659.5 L765.2 659.9 L767.5 660.2 L769.8 660.5 L772.1 660.6 L774.4 660.6 L776.7 660.5 L778.9 660.2 L781.2 659.8 L783.5 659.5 L785.8 659.2 L788.1 659.1 L790.4 659.2 L792.7 659.4 L795 659.7 L797.3 660.1 L799.6 660.4 L801.9 660.6 L804.2 660.7 L806.4 660.5 L808.7 660.3 L811 660 L813.3 659.6 L815.6 659.3 L817.9 659.2 L820.2 659.2 L822.5 659.3 L824.8 659.6 L827.1 659.9 L829.4 660.3 L831.7 660.5 L833.9 660.6 L836.2 660.6 L838.5 660.4 L840.8 660.1 L843.1 659.8 L845.4 659.5 L847.7 659.2 L850 659.1 L852.3 659.2 L854.6 659.4 L856.9 659.8 L859.1 660.1 L861.4 660.4 L863.7 660.6 L866 660.6 L868.3 660.5 L870.6 660.3 L872.9 659.9 L875.2 659.6 L877.5 659.3 L879.8 659.2 L882.1 659.2 L884.4 659.3 L886.6 659.6 L888.9 660 L891.2 660.3 L893.5 660.5 L895.8 660.6 L898.1 660.6 L900.4 660.4 L902.7 660.1 L905 659.7 L907.3 659.4 L909.6 659.2 L911.9 659.1 L914.1 659.2 L916.4 659.5 L918.7 659.8 L921 660.1 L923.3 660.4 L925.6 660.6 L927.9 660.6 L930.2 660.5 L932.5 659 L934.8 658.6 L937.1 658.3 L939.3 658 L941.6 657.9 L943.9 657.9 L946.2 658.1 L948.5 658.4 L950.8 658.7 L953.1 659.1 L955.4 659.3 L957.7 659.4 L960 659.3 L962.3 659.1 L964.6 658.8 L966.8 658.4 L969.1 658.1 L971.4 657.9 L973.7 657.9 L976 658 L978.3 658.2 L980.6 658.6 L982.9 658.9 L985.2 659.2 L987.5 659.4 L989.8 659.4 L992.1 659.2 L994.3 658.9 L996.6 658.6 L998.9 658.3 L1001.2 658 L1003.5 657.9 L1005.8 657.9 L1008.1 658.1 L1010.4 658.4 L1012.7 658.8 L1015 659.1 L1017.3 659.3 L1019.6 659.4 L1021.8 659.3 L1024.1 659.1 L1026.4 658.8 L1028.7 658.4 L1031 658.1 L1033.3 657.9 L1035.6 657.9 L1037.9 658 L1040.2 658.3 L1042.5 658.6 L1044.8 659 L1047 659.2 L1049.3 659.4 L1051.6 659.4 L1053.9 659.2 L1056.2 658.9 L1058.5 658.6 L1060.8 658.2 L1063.1 658 L1065.4 657.9 L1067.7 657.9 L1070 658.1 L1072.3 658.5 L1074.5 658.8 L1076.8 659.1 L1079.1 659.3 L1081.4 659.4 L1083.7 659.3 L1086 659 L1088.3 658.7 L1090.6 658.4 L1092.9 658.1 L1095.2 657.9 L1097.5 657.9 L1099.8 658 L1102 658.3 L1104.3 658.7 L1106.6 659 L1108.9 659.3 L1111.2 659.4 L1113.5 659.4 L1113.5 670.5 L657.5 670.5Z" fill="#ba43a9" fill-opacity="0.0"/>
<path d="M657.5 659.9 L659.8 659.6 L662.1 659.3 L664.4 659.1 L666.7 659.2 L669 659.3 L671.2 659.6 L673.5 660 L675.8 660.3 L678.1 660.6 L680.4 660.7 L682.7 660.6 L685 660.4 L687.3 660.1 L689.6 659.7 L691.9 659.4 L694.2 659.2 L696.5 659.1 L698.7 659.3 L701 659.5 L703.3 659.8 L705.6 660.2 L707.9 660.5 L710.2 660.6 L712.5 660.6 L714.8 660.5 L717.1 660.2 L719.4 659.9 L721.7 659.5 L724 659.3 L726.2 659.1 L728.5 659.2 L730.8 659.4 L733.1 659.7 L735.4 660 L737.7 660.4 L740 660.6 L742.3 660.7 L744.6 660.6 L746.9 660.3 L749.2 660 L751.4 659.7 L753.7 659.4 L756 659.2 L758.3 659.1 L760.6 659.3 L762.9 659.5 L765.2 659.9 L767.5 660.2 L769.8 660.5 L772.1 660.6 L774.4 660.6 L776.7 660.5 L778.9 660.2 L781.2 659.8 L783.5 659.5 L785.8 659.2 L788.1 659.1 L790.4 659.2 L792.7 659.4 L795 659.7 L797.3 660.1 L799.6 660.4 L801.9 660.6 L804.2 660.7 L806.4 660.5 L808.7 660.3 L811 660 L813.3 659.6 L815.6 659.3 L817.9 659.2 L820.2 659.2 L822.5 659.3 L824.8 659.6 L827.1 659.9 L829.4 660.3 L831.7 660.5 L833.9 660.6 L836.2 660.6 L838.5 660.4 L840.8 660.1 L843.1 659.8 L845.4 659.5 L847.7 659.2 L850 659.1 L852.3 659.2 L854.6 659.4 L856.9 659.8 L859.1 660.1 L861.4 660.4 L863.7 660.6 L866 660.6 L868.3 660.5 L870.6 660.3 L872.9 659.9 L875.2 659.6 L877.5 659.3 L879.8 659.2 L882.1 659.2 L884.4 659.3 L886.6 659.6 L888.9 660 L891.2 660.3 L893.5 660.5 L895.8 660.6 L898.1 660.6 L900.4 660.4 L902.7 660.1 L905 659.7 L907.3 659.4 L909.6 659.2 L911.9 659.1 L914.1 659.2 L916.4 659.5 L918.7 659.8 L921 660.1 L923.3 660.4 L925.6 660.6 L927.9 660.6 L930.2 660.5 L932.5 659 L934.8 658.6 L937.1 658.3 L939.3 658 L941.6 657.9 L943.9 657.9 L946.2 658.1 L948.5 658.4 L950.8 658.7 L953.1 659.1 L955.4 659.3 L957.7 659.4 L960 659.3 L962.3 659.1 L964.6 658.8 L966.8 658.4 L969.1 658.1 L971.4 657.9 L973.7 657.9 L976 658 L978.3 658.2 L980.6 658.6 L982.9 658.9 L985.2 659.2 L987.5 659.4 L989.8 659.4 L992.1 659.2 L994.3 658.9 L996.6 658.6 L998.9 658.3 L1001.2 658 L1003.5 657.9 L1005.8 657.9 L1008.1 658.1 L1010.4 658.4 L1012.7 658.8 L1015 659.1 L1017.3 659.3 L1019.6 659.4 L1021.8 659.3 L1024.1 659.1 L1026.4 658.8 L1028.7 658.4 L1031 658.1 L1033.3 657.9 L1035.6 657.9 L1037.9 658 L1040.2 658.3 L1042.5 658.6 L1044.8 659 L1047 659.2 L1049.3 659.4 L1051.6 659.4 L1053.9 659.2 L1056.2 658.9 L1058.5 658.6 L1060.8 658.2 L1063.1 658 L1065.4 657.9 L1067.7 657.9 L1070 658.1 L1072.3 658.5 L1074.5 658.8 L1076.8 659.1 L1079.1 659.3 L1081.4 659.4 L1083.7 659.3 L1086 659 L1088.3 658.7 L1090.6 658.4 L1092.9 658.1 L1095.2 657.9 L1097.5 657.9 L1099.8 658 L1102 658.3 L1104.3 658.7 L1106.6 659 L1108.9 659.3 L1111.2 659.4 L1113.5 659.4" fill="none" stroke="#ba43a9" stroke-width="1.3" stroke-opacity="1"/>
<path d="M1158 619.4 L1159.7 618.8 L1161.3 619.2 L1163 618.8 L1164.7 619 L1166.4 619.2 L1168 618.8 L1169.7 619.2 L1171.4 619.5 L1173.1 619.4 L1174.7 619.2 L1176.4 619.4 L1178.1 619.2 L1179.7 619.5 L1181.4 619.3 L1183.1 619.3 L1184.8 619.6 L1186.4 620.1 L1188.1 620 L1189.8 619.3 L1191.4 618.9 L1193.1 618.6 L1194.8 618.1 L1196.5 618.3 L1198.1 617.8 L1199.8 617.3 L1201.5 616.8 L1203.2 616.9 L1204.8 616.7 L1206.5 617 L1208.2 616.5 L1209.8 616.7 L1211.5 616.4 L1213.2 614.9 L1214.9 615.5 L1216.5 614.9 L1218.2 614.9 L1219.9 615.3 L1221.5 615.3 L1223.2 615.4 L1224.9 615.3 L1226.6 615.6 L1228.2 615.9 L1229.9 615.9 L1231.6 615.9 L1233.3 615.5 L1234.9 615.4 L1236.6 614.7 L1238.3 615.8 L1239.9 616.1 L1241.6 616.2 L1243.3 616.7 L1245 615.7 L1246.6 616.7 L1248.3 616.5 L1250 616.6 L1251.6 616 L1253.3 616.9 L1255 616.5 L1256.7 616.9 L1258.3 617 L1260 617.2 L1261.7 617.5 L1263.4 617.9 L1265 617.7 L1266.7 617.2 L1268.4 616.4 L1270 617.2 L1271.7 616.2 L1273.4 615.9 L1275.1 616.1 L1276.7 616 L1278.4 616.3 L1280.1 615.9 L1281.7 616.4 L1283.4 616.9 L1285.1 617.2 L1286.8 617.5 L1288.4 617.7 L1290.1 617.9 L1291.8 617 L1293.5 617.8 L1295.1 618.5 L1296.8 617.6 L1298.5 617 L1300.1 616.5 L1301.8 616.3 L1303.5 616.3 L1305.2 616.1 L1306.8 616 L1308.5 616.5 L1310.2 616.9 L1311.8 616.5 L1313.5 616.8 L1315.2 617.6 L1316.9 616.9 L1318.5 617 L1320.2 617.4 L1321.9 617.6 L1323.6 617.1 L1325.2 617.1 L1326.9 618.4 L1328.6 621.7 L1330.2 624.7 L1331.9 627.2 L1333.6 628.2 L1335.3 629.2 L1336.9 629.3 L1338.6 629.8 L1340.3 630.1 L1341.9 630.4 L1343.6 630.8 L1345.3 629.3 L1347 630.3 L1348.6 631.5 L1350.3 631.5 L1352 631.5 L1353.7 632 L1355.3 632 L1357 632 L1357 632 L1158 632Z" fill="#a74c1e" fill-opacity=".5"/>
<path d="M1158 619.4 L1159.7 618.8 L1161.3 619.2 L1163 618.8 L1164.7 619 L1166.4 619.2 L1168 618.8 L1169.7 619.2 L1171.4 619.5 L1173.1 619.4 L1174.7 619.2 L1176.4 619.4 L1178.1 619.2 L1179.7 619.5 L1181.4 619.3 L1183.1 619.3 L1184.8 619.6 L1186.4 620.1 L1188.1 620 L1189.8 619.3 L1191.4 618.9 L1193.1 618.6 L1194.8 618.1 L1196.5 618.3 L1198.1 617.8 L1199.8 617.3 L1201.5 616.8 L1203.2 616.9 L1204.8 616.7 L1206.5 617 L1208.2 616.5 L1209.8 616.7 L1211.5 616.4 L1213.2 614.9 L1214.9 615.5 L1216.5 614.9 L1218.2 614.9 L1219.9 615.3 L1221.5 615.3 L1223.2 615.4 L1224.9 615.3 L1226.6 615.6 L1228.2 615.9 L1229.9 615.9 L1231.6 615.9 L1233.3 615.5 L1234.9 615.4 L1236.6 614.7 L1238.3 615.8 L1239.9 616.1 L1241.6 616.2 L1243.3 616.7 L1245 615.7 L1246.6 616.7 L1248.3 616.5 L1250 616.6 L1251.6 616 L1253.3 616.9 L1255 616.5 L1256.7 616.9 L1258.3 617 L1260 617.2 L1261.7 617.5 L1263.4 617.9 L1265 617.7 L1266.7 617.2 L1268.4 616.4 L1270 617.2 L1271.7 616.2 L1273.4 615.9 L1275.1 616.1 L1276.7 616 L1278.4 616.3 L1280.1 615.9 L1281.7 616.4 L1283.4 616.9 L1285.1 617.2 L1286.8 617.5 L1288.4 617.7 L1290.1 617.9 L1291.8 617 L1293.5 617.8 L1295.1 618.5 L1296.8 617.6 L1298.5 617 L1300.1 616.5 L1301.8 616.3 L1303.5 616.3 L1305.2 616.1 L1306.8 616 L1308.5 616.5 L1310.2 616.9 L1311.8 616.5 L1313.5 616.8 L1315.2 617.6 L1316.9 616.9 L1318.5 617 L1320.2 617.4 L1321.9 617.6 L1323.6 617.1 L1325.2 617.1 L1326.9 618.4 L1328.6 621.7 L1330.2 624.7 L1331.9 627.2 L1333.6 628.2 L1335.3 629.2 L1336.9 629.3 L1338.6 629.8 L1340.3 630.1 L1341.9 630.4 L1343.6 630.8 L1345.3 629.3 L1347 630.3 L1348.6 631.5 L1350.3 631.5 L1352 631.5 L1353.7 632 L1355.3 632 L1357 632" fill="none" stroke="#96561f" stroke-width="1.700" stroke-linejoin="round"/>
<path d="M1158 751.4 L1159.7 751.1 L1161.3 751.2 L1163 751 L1164.7 750.7 L1166.4 750.9 L1168 750.7 L1169.7 751.5 L1171.4 751.6 L1173.1 752 L1174.7 752.1 L1176.4 751.9 L1178.1 751.5 L1179.7 751.2 L1181.4 750.9 L1183.1 750.2 L1184.8 750.4 L1186.4 751.5 L1188.1 751.1 L1189.8 751 L1191.4 750.8 L1193.1 750 L1194.8 750 L1196.5 750.4 L1198.1 749.7 L1199.8 749.5 L1201.5 749.5 L1203.2 749.3 L1204.8 749 L1206.5 748.5 L1208.2 748.2 L1209.8 747.8 L1211.5 746.9 L1213.2 746.7 L1214.9 747 L1216.5 747 L1218.2 746.7 L1219.9 747.3 L1221.5 747 L1223.2 747.8 L1224.9 748.2 L1226.6 748 L1228.2 748.2 L1229.9 748 L1231.6 747.5 L1233.3 747 L1234.9 746.9 L1236.6 746.9 L1238.3 746.9 L1239.9 747.1 L1241.6 747.5 L1243.3 747.2 L1245 747.9 L1246.6 747.9 L1248.3 747.8 L1250 748.1 L1251.6 748.5 L1253.3 748.4 L1255 748.7 L1256.7 749 L1258.3 749.3 L1260 748.8 L1261.7 749.7 L1263.4 749.2 L1265 749.2 L1266.7 749.2 L1268.4 748.8 L1270 748.5 L1271.7 748.3 L1273.4 748.7 L1275.1 748.3 L1276.7 748 L1278.4 748 L1280.1 748 L1281.7 748 L1283.4 748.5 L1285.1 748.3 L1286.8 749.5 L1288.4 749.7 L1290.1 750.5 L1291.8 749.7 L1293.5 749.4 L1295.1 748.6 L1296.8 748.8 L1298.5 749.2 L1300.1 748.3 L1301.8 748.6 L1303.5 748.8 L1305.2 748.5 L1306.8 748.3 L1308.5 748.7 L1310.2 748.8 L1311.8 749.7 L1313.5 749 L1315.2 749.4 L1316.9 749.5 L1318.5 749.4 L1320.2 749.3 L1321.9 749.2 L1323.6 749.3 L1325.2 748.9 L1326.9 749.8 L1328.6 752.7 L1330.2 756 L1331.9 759.2 L1333.6 760 L1335.3 760.4 L1336.9 761.1 L1338.6 761.8 L1340.3 762.5 L1341.9 762.6 L1343.6 762.8 L1345.3 761.3 L1347 762.3 L1348.6 763.5 L1350.3 763.5 L1352 763.5 L1353.7 764 L1355.3 764 L1357 764 L1357 764 L1158 764Z" fill="#a74c1e" fill-opacity=".5"/>
<path d="M1158 751.4 L1159.7 751.1 L1161.3 751.2 L1163 751 L1164.7 750.7 L1166.4 750.9 L1168 750.7 L1169.7 751.5 L1171.4 751.6 L1173.1 752 L1174.7 752.1 L1176.4 751.9 L1178.1 751.5 L1179.7 751.2 L1181.4 750.9 L1183.1 750.2 L1184.8 750.4 L1186.4 751.5 L1188.1 751.1 L1189.8 751 L1191.4 750.8 L1193.1 750 L1194.8 750 L1196.5 750.4 L1198.1 749.7 L1199.8 749.5 L1201.5 749.5 L1203.2 749.3 L1204.8 749 L1206.5 748.5 L1208.2 748.2 L1209.8 747.8 L1211.5 746.9 L1213.2 746.7 L1214.9 747 L1216.5 747 L1218.2 746.7 L1219.9 747.3 L1221.5 747 L1223.2 747.8 L1224.9 748.2 L1226.6 748 L1228.2 748.2 L1229.9 748 L1231.6 747.5 L1233.3 747 L1234.9 746.9 L1236.6 746.9 L1238.3 746.9 L1239.9 747.1 L1241.6 747.5 L1243.3 747.2 L1245 747.9 L1246.6 747.9 L1248.3 747.8 L1250 748.1 L1251.6 748.5 L1253.3 748.4 L1255 748.7 L1256.7 749 L1258.3 749.3 L1260 748.8 L1261.7 749.7 L1263.4 749.2 L1265 749.2 L1266.7 749.2 L1268.4 748.8 L1270 748.5 L1271.7 748.3 L1273.4 748.7 L1275.1 748.3 L1276.7 748 L1278.4 748 L1280.1 748 L1281.7 748 L1283.4 748.5 L1285.1 748.3 L1286.8 749.5 L1288.4 749.7 L1290.1 750.5 L1291.8 749.7 L1293.5 749.4 L1295.1 748.6 L1296.8 748.8 L1298.5 749.2 L1300.1 748.3 L1301.8 748.6 L1303.5 748.8 L1305.2 748.5 L1306.8 748.3 L1308.5 748.7 L1310.2 748.8 L1311.8 749.7 L1313.5 749 L1315.2 749.4 L1316.9 749.5 L1318.5 749.4 L1320.2 749.3 L1321.9 749.2 L1323.6 749.3 L1325.2 748.9 L1326.9 749.8 L1328.6 752.7 L1330.2 756 L1331.9 759.2 L1333.6 760 L1335.3 760.4 L1336.9 761.1 L1338.6 761.8 L1340.3 762.5 L1341.9 762.6 L1343.6 762.8 L1345.3 761.3 L1347 762.3 L1348.6 763.5 L1350.3 763.5 L1352 763.5 L1353.7 764 L1355.3 764 L1357 764" fill="none" stroke="#96561f" stroke-width="1.700" stroke-linejoin="round"/>
<path d="M149.5 877.5V947M260.5 877.5V947M372 877.5V947M483 877.5V947M594.5 877.5V947M705.5 877.5V947M142.5 877.5H809M142.5 910.5H809M142.5 944.5H809" stroke="rgba(255,255,255,.2)" stroke-width="1" fill="none" shape-rendering="crispEdges"/>
<path d="M142 969.6 L455 968 L461 957.9 L465 937 L468 944.5 L472 943.7 L476 961.2 L528 964.6 L532 947.9 L536 923.6 L540 929.4 L545 916 L549 927.8 L554 893.4 L558 917.7 L562 931.9 L568 929.4 L574 921 L580 914.4 L585 919.4 L589 917.7 L592 927.8 L596 926.1 L600 932.8 L604 931.1 L608 933.6 L614 931.9 L618 937.8 L622 947.9 L630 949.5 L635 943.7 L641 941.1 L646 943.7 L652 940.3 L658 942.8 L664 938.6 L670 942.8 L676 941.1 L682 943.7 L688 937.8 L692 941.1 L698 924.4 L701 932.8 L705.5 910.2 L709 919.4 L714 939.5 L719 932.8 L724 933.6 L730 940.3 L736 929.4 L741 936.1 L746 931.1 L750 937.8 L755 928.6 L760 931.9 L765 937 L771 930.3 L777 936.1 L783 929.4 L789 934.5 L794 927.8 L798 926.9 L802 936.1 L806 929.4 L806 960 L142 960Z" fill="#bf1b00" fill-opacity=".22"/>
<path d="M142 969.6 L455 968 L461 957.9 L465 937 L468 944.5 L472 943.7 L476 961.2 L528 964.6 L532 947.9 L536 923.6 L540 929.4 L545 916 L549 927.8 L554 893.4 L558 917.7 L562 931.9 L568 929.4 L574 921 L580 914.4 L585 919.4 L589 917.7 L592 927.8 L596 926.1 L600 932.8 L604 931.1 L608 933.6 L614 931.9 L618 937.8 L622 947.9 L630 949.5 L635 943.7 L641 941.1 L646 943.7 L652 940.3 L658 942.8 L664 938.6 L670 942.8 L676 941.1 L682 943.7 L688 937.8 L692 941.1 L698 924.4 L701 932.8 L705.5 910.2 L709 919.4 L714 939.5 L719 932.8 L724 933.6 L730 940.3 L736 929.4 L741 936.1 L746 931.1 L750 937.8 L755 928.6 L760 931.9 L765 937 L771 930.3 L777 936.1 L783 929.4 L789 934.5 L794 927.8 L798 926.9 L802 936.1 L806 929.4" fill="none" stroke="#bf1b00" stroke-width="1.250"/>
<path d="M1265 888.1 L1268 888.3 L1271 888.6 L1274 888.6 L1277 888.5 L1280 888.3 L1283 888.4 L1286 888.3 L1289 888 L1292 888.2 L1295 888.5 L1298 888.3 L1300.9 888.2 L1303.9 888.1 L1306.9 888.3 L1309.9 888.2 L1312.9 888.3 L1315.9 888.4 L1318.9 887.8 L1321.9 888.3 L1324.9 888 L1327.9 888.1 L1330.9 888.1 L1333.9 887.3 L1336.9 887.2 L1339.9 887.2 L1342.9 887 L1345.9 889.6 L1348.9 889.8 L1351.9 889.9 L1354.9 888.3 L1357.9 888.4 L1360.9 888.2 L1363.9 889.3 L1366.9 889 L1369.9 891.3 L1372.8 890.9 L1375.8 890.9 L1378.8 890.7 L1381.8 891.1 L1384.8 888.5 L1387.8 888.3 L1390.8 888.4 L1393.8 888.2 L1396.8 888.2 L1399.8 888.2 L1402.8 887.8 L1405.8 887.9 L1408.8 888 L1411.8 887.9 L1414.8 888 L1417.8 887.8 L1420.8 887.7 L1423.8 887.5 L1426.8 886.9 L1429.8 887.3 L1432.8 887 L1435.8 887.2 L1438.8 886.9 L1441.8 886.8 L1444.7 886.7 L1447.7 886.6 L1450.7 886.2 L1453.7 886.2 L1456.7 886.6 L1459.7 886.4 L1462.7 886.1 L1465.7 886 L1468.7 886 L1471.7 886.7 L1474.7 886.2 L1477.7 886.1 L1480.7 886 L1483.7 885.6 L1486.7 886.1 L1489.7 886.4 L1492.7 886.3 L1495.7 886.2 L1498.7 886 L1501.7 885.9 L1504.7 886.1 L1507.7 886 L1510.7 885.9 L1513.7 886.4 L1516.6 885.9 L1519.6 886 L1522.6 885.6 L1525.6 886.4 L1528.6 886.1 L1531.6 886.1 L1534.6 886.2 L1537.6 885.9 L1540.6 886 L1543.6 886.2 L1546.6 885.9 L1549.6 886.2 L1552.6 886.3 L1555.6 886.2 L1558.6 886.4 L1561.6 886.3 L1564.6 886.4 L1567.6 886.2 L1570.6 886.2 L1573.6 885.9 L1576.6 886.1 L1579.6 886 L1582.6 886.1 L1585.6 885.9 L1588.5 886.2 L1591.5 886.6 L1594.5 885.9 L1597.5 886.2 L1600.5 886.2 L1603.5 886 L1606.5 886 L1609.5 886 L1612.5 886.2 L1615.5 886 L1618.5 889.6 L1621.5 889.3 L1621.5 960 L1265 960Z" fill="#6ed0e0" fill-opacity=".6"/>
<path d="M1265 883.5 L1268 883.5 L1271 883.5 L1274 883.5 L1277 883.5 L1280 883.5 L1283 883.5 L1286 883.5 L1289 883.5 L1292 883.5 L1295 883.5 L1298 883.5 L1300.9 883.5 L1303.9 883.5 L1306.9 883.5 L1309.9 883.5 L1312.9 883.5 L1315.9 883.5 L1318.9 883.5 L1321.9 883.5 L1324.9 883.5 L1327.9 883.5 L1330.9 883.5 L1333.9 883.5 L1336.9 883.5 L1339.9 883.5 L1342.9 883.5 L1345.9 883.5 L1348.9 883.5 L1351.9 883.5 L1354.9 883.5 L1357.9 883.5 L1360.9 883.5 L1363.9 883.5 L1366.9 883.5 L1369.9 883.5 L1372.8 883.5 L1375.8 883.5 L1378.8 883.5 L1381.8 883.5 L1384.8 883.5 L1387.8 883.5 L1390.8 883.5 L1393.8 883.5 L1396.8 883.5 L1399.8 883.5 L1402.8 883.5 L1405.8 883.5 L1408.8 883.5 L1411.8 883.5 L1414.8 883.5 L1417.8 883.5 L1420.8 883.5 L1423.8 883.5 L1426.8 883.5 L1429.8 883.5 L1432.8 883.5 L1435.8 883.5 L1438.8 883.5 L1441.8 883.5 L1444.7 883.5 L1447.7 883.5 L1450.7 883.5 L1453.7 883.5 L1456.7 883.5 L1459.7 883.5 L1462.7 883.5 L1465.7 883.5 L1468.7 883.5 L1471.7 883.5 L1474.7 883.5 L1477.7 883.5 L1480.7 883.5 L1483.7 883.5 L1486.7 883.5 L1489.7 883.5 L1492.7 883.5 L1495.7 883.5 L1498.7 883.5 L1501.7 883.5 L1504.7 883.5 L1507.7 883.5 L1510.7 883.5 L1513.7 883.5 L1516.6 883.5 L1519.6 883.5 L1522.6 883.5 L1525.6 883.5 L1528.6 883.5 L1531.6 883.5 L1534.6 883.5 L1537.6 883.5 L1540.6 883.5 L1543.6 883.5 L1546.6 883.5 L1549.6 883.5 L1552.6 883.5 L1555.6 883.5 L1558.6 883.5 L1561.6 883.5 L1564.6 883.5 L1567.6 883.5 L1570.6 883.5 L1573.6 883.5 L1576.6 883.5 L1579.6 883.5 L1582.6 883.5 L1585.6 883.5 L1588.5 883.5 L1591.5 883.5 L1594.5 883.5 L1597.5 883.5 L1600.5 883.5 L1603.5 883.5 L1606.5 883.5 L1609.5 883.5 L1612.5 883.5 L1615.5 883.5 L1618.5 883.5 L1621.5 883.5 L1621.5 889.3 L1618.5 889.6 L1615.5 886 L1612.5 886.2 L1609.5 886 L1606.5 886 L1603.5 886 L1600.5 886.2 L1597.5 886.2 L1594.5 885.9 L1591.5 886.6 L1588.5 886.2 L1585.6 885.9 L1582.6 886.1 L1579.6 886 L1576.6 886.1 L1573.6 885.9 L1570.6 886.2 L1567.6 886.2 L1564.6 886.4 L1561.6 886.3 L1558.6 886.4 L1555.6 886.2 L1552.6 886.3 L1549.6 886.2 L1546.6 885.9 L1543.6 886.2 L1540.6 886 L1537.6 885.9 L1534.6 886.2 L1531.6 886.1 L1528.6 886.1 L1525.6 886.4 L1522.6 885.6 L1519.6 886 L1516.6 885.9 L1513.7 886.4 L1510.7 885.9 L1507.7 886 L1504.7 886.1 L1501.7 885.9 L1498.7 886 L1495.7 886.2 L1492.7 886.3 L1489.7 886.4 L1486.7 886.1 L1483.7 885.6 L1480.7 886 L1477.7 886.1 L1474.7 886.2 L1471.7 886.7 L1468.7 886 L1465.7 886 L1462.7 886.1 L1459.7 886.4 L1456.7 886.6 L1453.7 886.2 L1450.7 886.2 L1447.7 886.6 L1444.7 886.7 L1441.8 886.8 L1438.8 886.9 L1435.8 887.2 L1432.8 887 L1429.8 887.3 L1426.8 886.9 L1423.8 887.5 L1420.8 887.7 L1417.8 887.8 L1414.8 888 L1411.8 887.9 L1408.8 888 L1405.8 887.9 L1402.8 887.8 L1399.8 888.2 L1396.8 888.2 L1393.8 888.2 L1390.8 888.4 L1387.8 888.3 L1384.8 888.5 L1381.8 891.1 L1378.8 890.7 L1375.8 890.9 L1372.8 890.9 L1369.9 891.3 L1366.9 889 L1363.9 889.3 L1360.9 888.2 L1357.9 888.4 L1354.9 888.3 L1351.9 889.9 L1348.9 889.8 L1345.9 889.6 L1342.9 887 L1339.9 887.2 L1336.9 887.2 L1333.9 887.3 L1330.9 888.1 L1327.9 888.1 L1324.9 888 L1321.9 888.3 L1318.9 887.8 L1315.9 888.4 L1312.9 888.3 L1309.9 888.2 L1306.9 888.3 L1303.9 888.1 L1300.9 888.2 L1298 888.3 L1295 888.5 L1292 888.2 L1289 888 L1286 888.3 L1283 888.4 L1280 888.3 L1277 888.5 L1274 888.6 L1271 888.6 L1268 888.3 L1265 888.1Z" fill="#a3521d"/>
<path d="M1265 883.5 L1268 883.5 L1271 883.5 L1274 883.5 L1277 883.5 L1280 883.5 L1283 883.5 L1286 883.5 L1289 883.5 L1292 883.5 L1295 883.5 L1298 883.5 L1300.9 883.5 L1303.9 883.5 L1306.9 883.5 L1309.9 883.5 L1312.9 883.5 L1315.9 883.5 L1318.9 883.5 L1321.9 883.5 L1324.9 883.5 L1327.9 883.5 L1330.9 883.5 L1333.9 883.5 L1336.9 883.5 L1339.9 883.5 L1342.9 883.5 L1345.9 883.5 L1348.9 883.5 L1351.9 883.5 L1354.9 883.5 L1357.9 883.5 L1360.9 883.5 L1363.9 883.5 L1366.9 883.5 L1369.9 883.5 L1372.8 883.5 L1375.8 883.5 L1378.8 883.5 L1381.8 883.5 L1384.8 883.5 L1387.8 883.5 L1390.8 883.5 L1393.8 883.5 L1396.8 883.5 L1399.8 883.5 L1402.8 883.5 L1405.8 883.5 L1408.8 883.5 L1411.8 883.5 L1414.8 883.5 L1417.8 883.5 L1420.8 883.5 L1423.8 883.5 L1426.8 883.5 L1429.8 883.5 L1432.8 883.5 L1435.8 883.5 L1438.8 883.5 L1441.8 883.5 L1444.7 883.5 L1447.7 883.5 L1450.7 883.5 L1453.7 883.5 L1456.7 883.5 L1459.7 883.5 L1462.7 883.5 L1465.7 883.5 L1468.7 883.5 L1471.7 883.5 L1474.7 883.5 L1477.7 883.5 L1480.7 883.5 L1483.7 883.5 L1486.7 883.5 L1489.7 883.5 L1492.7 883.5 L1495.7 883.5 L1498.7 883.5 L1501.7 883.5 L1504.7 883.5 L1507.7 883.5 L1510.7 883.5 L1513.7 883.5 L1516.6 883.5 L1519.6 883.5 L1522.6 883.5 L1525.6 883.5 L1528.6 883.5 L1531.6 883.5 L1534.6 883.5 L1537.6 883.5 L1540.6 883.5 L1543.6 883.5 L1546.6 883.5 L1549.6 883.5 L1552.6 883.5 L1555.6 883.5 L1558.6 883.5 L1561.6 883.5 L1564.6 883.5 L1567.6 883.5 L1570.6 883.5 L1573.6 883.5 L1576.6 883.5 L1579.6 883.5 L1582.6 883.5 L1585.6 883.5 L1588.5 883.5 L1591.5 883.5 L1594.5 883.5 L1597.5 883.5 L1600.5 883.5 L1603.5 883.5 L1606.5 883.5 L1609.5 883.5 L1612.5 883.5 L1615.5 883.5 L1618.5 883.5 L1621.5 883.5" fill="none" stroke="#ef843c" stroke-width="3.2"/>
<path d="M1265 888.1 L1268 888.3 L1271 888.6 L1274 888.6 L1277 888.5 L1280 888.3 L1283 888.4 L1286 888.3 L1289 888 L1292 888.2 L1295 888.5 L1298 888.3 L1300.9 888.2 L1303.9 888.1 L1306.9 888.3 L1309.9 888.2 L1312.9 888.3 L1315.9 888.4 L1318.9 887.8 L1321.9 888.3 L1324.9 888 L1327.9 888.1 L1330.9 888.1 L1333.9 887.3 L1336.9 887.2 L1339.9 887.2 L1342.9 887 L1345.9 889.6 L1348.9 889.8 L1351.9 889.9 L1354.9 888.3 L1357.9 888.4 L1360.9 888.2 L1363.9 889.3 L1366.9 889 L1369.9 891.3 L1372.8 890.9 L1375.8 890.9 L1378.8 890.7 L1381.8 891.1 L1384.8 888.5 L1387.8 888.3 L1390.8 888.4 L1393.8 888.2 L1396.8 888.2 L1399.8 888.2 L1402.8 887.8 L1405.8 887.9 L1408.8 888 L1411.8 887.9 L1414.8 888 L1417.8 887.8 L1420.8 887.7 L1423.8 887.5 L1426.8 886.9 L1429.8 887.3 L1432.8 887 L1435.8 887.2 L1438.8 886.9 L1441.8 886.8 L1444.7 886.7 L1447.7 886.6 L1450.7 886.2 L1453.7 886.2 L1456.7 886.6 L1459.7 886.4 L1462.7 886.1 L1465.7 886 L1468.7 886 L1471.7 886.7 L1474.7 886.2 L1477.7 886.1 L1480.7 886 L1483.7 885.6 L1486.7 886.1 L1489.7 886.4 L1492.7 886.3 L1495.7 886.2 L1498.7 886 L1501.7 885.9 L1504.7 886.1 L1507.7 886 L1510.7 885.9 L1513.7 886.4 L1516.6 885.9 L1519.6 886 L1522.6 885.6 L1525.6 886.4 L1528.6 886.1 L1531.6 886.1 L1534.6 886.2 L1537.6 885.9 L1540.6 886 L1543.6 886.2 L1546.6 885.9 L1549.6 886.2 L1552.6 886.3 L1555.6 886.2 L1558.6 886.4 L1561.6 886.3 L1564.6 886.4 L1567.6 886.2 L1570.6 886.2 L1573.6 885.9 L1576.6 886.1 L1579.6 886 L1582.6 886.1 L1585.6 885.9 L1588.5 886.2 L1591.5 886.6 L1594.5 885.9 L1597.5 886.2 L1600.5 886.2 L1603.5 886 L1606.5 886 L1609.5 886 L1612.5 886.2 L1615.5 886 L1618.5 889.6 L1621.5 889.3" fill="none" stroke="#6ed0e0" stroke-width="1.800"/>
<path d="M1267.5 878.5V947M1327 878.5V947M1387 878.5V947M1446.5 878.5V947M1506 878.5V947M1566 878.5V947M1265 877.5H1621.5M1265 905.5H1621.5M1265 934.5H1621.5" stroke="rgba(255,255,255,.13)" stroke-width="1" fill="none" shape-rendering="crispEdges"/>
</svg>
<div class="rz" style="left:826px;top:456px"></div>
<div class="rz" style="left:1055px;top:456px"></div>
<div class="rz" style="left:1283px;top:280px"></div>
<div class="rz" style="left:1283px;top:368px"></div>
<div class="rz" style="left:1435px;top:368px"></div>
<div class="rz" style="left:1435px;top:456px"></div>
<div class="rz" style="left:1664px;top:280px"></div>
<div class="rz" style="left:1664px;top:368px"></div>
<div class="rz" style="left:1664px;top:456px"></div>
<div class="rz" style="left:1892px;top:456px"></div>
<div class="rz" style="left:598px;top:764px"></div>
<div class="rz" style="left:1132px;top:764px"></div>
<div class="rz" style="left:1359px;top:632px"></div>
<div class="rz" style="left:1359px;top:764px"></div>
<div class="rz" style="left:1892px;top:764px"></div>
<div id="bl"></div>
</div>
</body></html>
